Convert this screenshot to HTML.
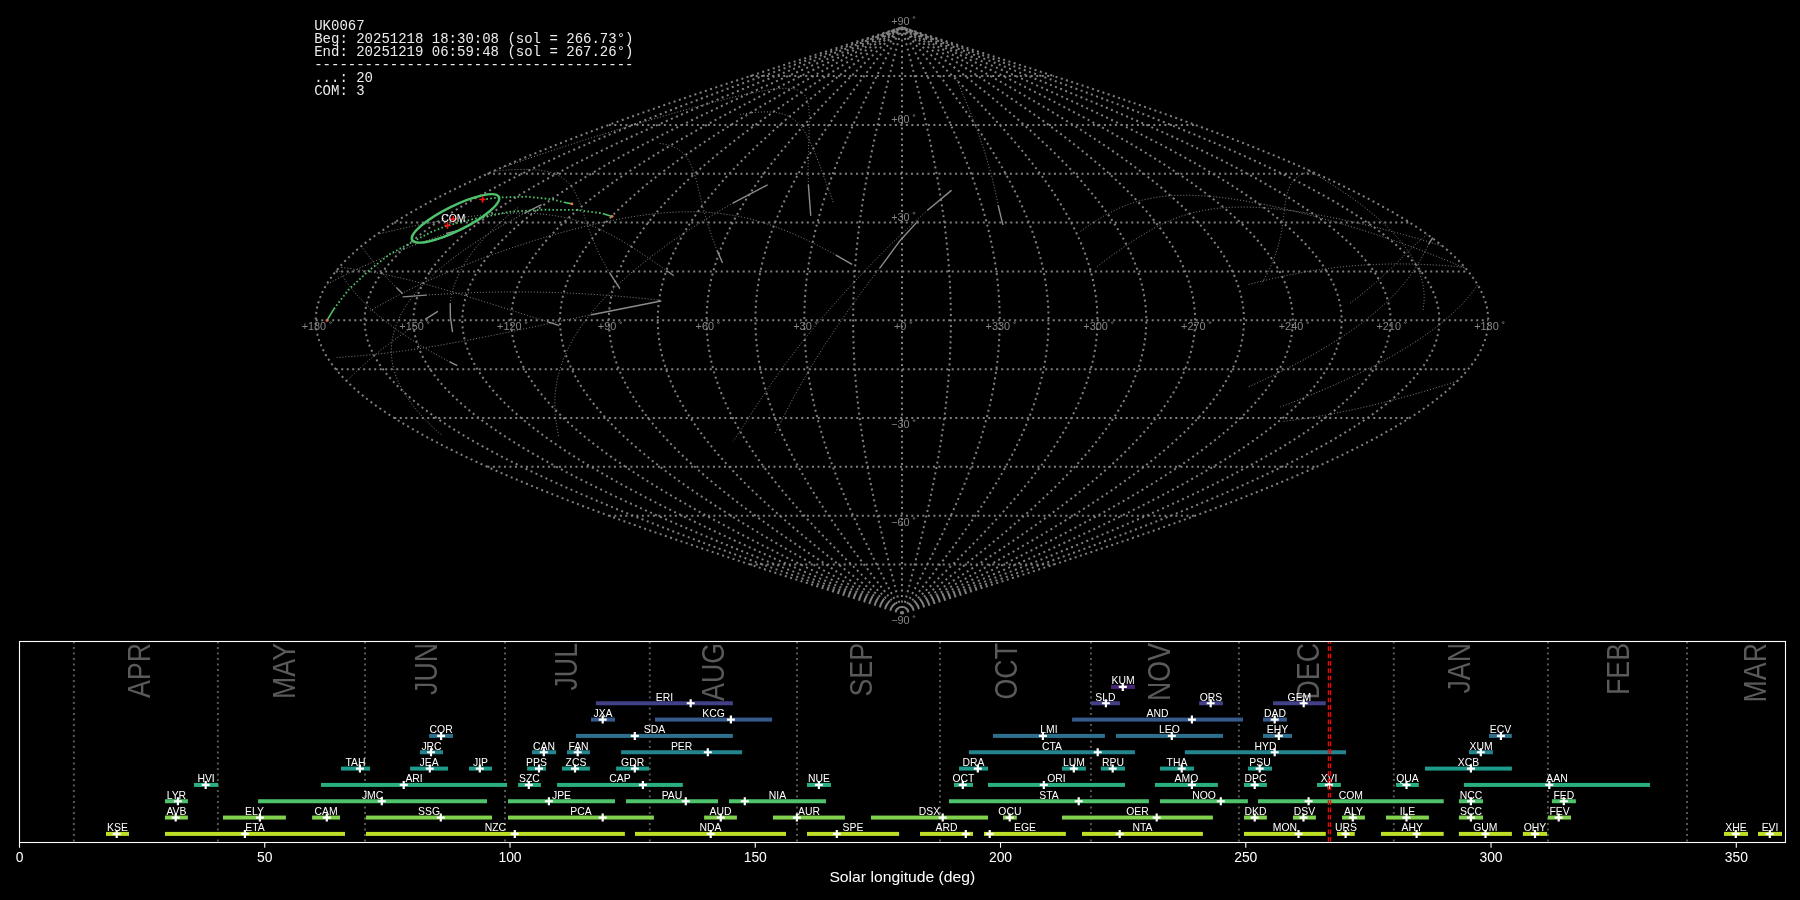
<!DOCTYPE html>
<html><head><meta charset="utf-8"><style>
html,body{margin:0;padding:0;background:#000;overflow:hidden}
svg{display:block;will-change:transform}
.mono{font-family:"Liberation Mono",monospace;font-size:14.0px;fill:#ececec}
.gl{font-family:"Liberation Sans",sans-serif;font-size:10.9px;fill:#858585}
.bl{font-family:"Liberation Sans",sans-serif;font-size:10.4px;fill:#ffffff}
.tk{font-family:"Liberation Sans",sans-serif;font-size:13.9px;fill:#ffffff}
.mon{font-family:"Liberation Sans",sans-serif;font-size:28px;fill:#5a5a5a}
</style></head><body>
<svg width="1800" height="900" viewBox="0 0 1800 900">
<rect width="1800" height="900" fill="#000"/>
<path d="M902.00 613.43 L907.12 611.80 L912.23 610.17 L917.35 608.54 L922.46 606.92 L927.57 605.29 L932.68 603.66 L937.79 602.03 L942.90 600.40 L948.00 598.77 L953.10 597.14 L958.19 595.52 L963.28 593.89 L968.37 592.26 L973.45 590.63 L978.52 589.00 L983.59 587.37 L988.65 585.75 L993.71 584.12 L998.76 582.49 L1003.80 580.86 L1008.84 579.23 L1013.86 577.60 L1018.88 575.97 L1023.89 574.35 L1028.89 572.72 L1033.88 571.09 L1038.86 569.46 L1043.83 567.83 L1048.79 566.20 L1053.74 564.58 L1058.67 562.95 L1063.60 561.32 L1068.51 559.69 L1073.41 558.06 L1078.29 556.43 L1083.16 554.80 L1088.02 553.18 L1092.87 551.55 L1097.70 549.92 L1102.51 548.29 L1107.31 546.66 L1112.10 545.03 L1116.87 543.40 L1121.62 541.78 L1126.35 540.15 L1131.07 538.52 L1135.77 536.89 L1140.45 535.26 L1145.12 533.63 L1149.76 532.00 L1154.39 530.38 L1159.00 528.75 L1163.59 527.12 L1168.16 525.49 L1172.70 523.86 L1177.23 522.23 L1181.74 520.61 L1186.22 518.98 L1190.69 517.35 L1195.13 515.72 L1199.55 514.09 L1203.95 512.46 L1208.32 510.83 L1212.67 509.21 L1217.00 507.58 L1221.30 505.95 L1225.58 504.32 L1229.83 502.69 L1234.06 501.06 L1238.26 499.44 L1242.44 497.81 L1246.59 496.18 L1250.72 494.55 L1254.82 492.92 L1258.89 491.29 L1262.94 489.66 L1266.96 488.04 L1270.95 486.41 L1274.91 484.78 L1278.84 483.15 L1282.75 481.52 L1286.62 479.89 L1290.47 478.26 L1294.28 476.64 L1298.07 475.01 L1301.83 473.38 L1305.55 471.75 L1309.25 470.12 L1312.92 468.49 L1316.55 466.87 L1320.15 465.24 L1323.72 463.61 L1327.26 461.98 L1330.76 460.35 L1334.24 458.72 L1337.68 457.09 L1341.08 455.47 L1344.46 453.84 L1347.80 452.21 L1351.10 450.58 L1354.37 448.95 L1357.61 447.32 L1360.81 445.69 L1363.98 444.07 L1367.11 442.44 L1370.21 440.81 L1373.27 439.18 L1376.29 437.55 L1379.28 435.92 L1382.24 434.30 L1385.15 432.67 L1388.03 431.04 L1390.87 429.41 L1393.68 427.78 L1396.45 426.15 L1399.18 424.52 L1401.87 422.90 L1404.52 421.27 L1407.14 419.64 L1409.72 418.01 L1412.25 416.38 L1414.75 414.75 L1417.22 413.12 L1419.64 411.50 L1422.02 409.87 L1424.36 408.24 L1426.66 406.61 L1428.93 404.98 L1431.15 403.35 L1433.33 401.73 L1435.47 400.10 L1437.58 398.47 L1439.64 396.84 L1441.66 395.21 L1443.63 393.58 L1445.57 391.95 L1447.47 390.33 L1449.32 388.70 L1451.13 387.07 L1452.90 385.44 L1454.63 383.81 L1456.32 382.18 L1457.96 380.55 L1459.57 378.93 L1461.13 377.30 L1462.64 375.67 L1464.12 374.04 L1465.55 372.41 L1466.94 370.78 L1468.28 369.16 L1469.59 367.53 L1470.85 365.90 L1472.06 364.27 L1473.23 362.64 L1474.36 361.01 L1475.45 359.38 L1476.49 357.76 L1477.49 356.13 L1478.44 354.50 L1479.35 352.87 L1480.22 351.24 L1481.04 349.61 L1481.82 347.98 L1482.55 346.36 L1483.24 344.73 L1483.89 343.10 L1484.49 341.47 L1485.05 339.84 L1485.56 338.21 L1486.03 336.59 L1486.45 334.96 L1486.83 333.33 L1487.17 331.70 L1487.46 330.07 L1487.70 328.44 L1487.90 326.81 L1488.06 325.19 L1488.17 323.56 L1488.24 321.93 L1488.26 320.30 L1488.24 318.67 L1488.17 317.04 L1488.06 315.41 L1487.90 313.79 L1487.70 312.16 L1487.46 310.53 L1487.17 308.90 L1486.83 307.27 L1486.45 305.64 L1486.03 304.01 L1485.56 302.39 L1485.05 300.76 L1484.49 299.13 L1483.89 297.50 L1483.24 295.87 L1482.55 294.24 L1481.82 292.62 L1481.04 290.99 L1480.22 289.36 L1479.35 287.73 L1478.44 286.10 L1477.49 284.47 L1476.49 282.84 L1475.45 281.22 L1474.36 279.59 L1473.23 277.96 L1472.06 276.33 L1470.85 274.70 L1469.59 273.07 L1468.28 271.44 L1466.94 269.82 L1465.55 268.19 L1464.12 266.56 L1462.64 264.93 L1461.13 263.30 L1459.57 261.67 L1457.96 260.05 L1456.32 258.42 L1454.63 256.79 L1452.90 255.16 L1451.13 253.53 L1449.32 251.90 L1447.47 250.27 L1445.57 248.65 L1443.63 247.02 L1441.66 245.39 L1439.64 243.76 L1437.58 242.13 L1435.47 240.50 L1433.33 238.88 L1431.15 237.25 L1428.93 235.62 L1426.66 233.99 L1424.36 232.36 L1422.02 230.73 L1419.64 229.10 L1417.22 227.48 L1414.75 225.85 L1412.25 224.22 L1409.72 222.59 L1407.14 220.96 L1404.52 219.33 L1401.87 217.70 L1399.18 216.08 L1396.45 214.45 L1393.68 212.82 L1390.87 211.19 L1388.03 209.56 L1385.15 207.93 L1382.24 206.31 L1379.28 204.68 L1376.29 203.05 L1373.27 201.42 L1370.21 199.79 L1367.11 198.16 L1363.98 196.53 L1360.81 194.91 L1357.61 193.28 L1354.37 191.65 L1351.10 190.02 L1347.80 188.39 L1344.46 186.76 L1341.08 185.13 L1337.68 183.51 L1334.24 181.88 L1330.76 180.25 L1327.26 178.62 L1323.72 176.99 L1320.15 175.36 L1316.55 173.74 L1312.92 172.11 L1309.25 170.48 L1305.55 168.85 L1301.83 167.22 L1298.07 165.59 L1294.28 163.96 L1290.47 162.34 L1286.62 160.71 L1282.75 159.08 L1278.84 157.45 L1274.91 155.82 L1270.95 154.19 L1266.96 152.56 L1262.94 150.94 L1258.89 149.31 L1254.82 147.68 L1250.72 146.05 L1246.59 144.42 L1242.44 142.79 L1238.26 141.16 L1234.06 139.54 L1229.83 137.91 L1225.58 136.28 L1221.30 134.65 L1217.00 133.02 L1212.67 131.39 L1208.32 129.77 L1203.95 128.14 L1199.55 126.51 L1195.13 124.88 L1190.69 123.25 L1186.22 121.62 L1181.74 119.99 L1177.23 118.37 L1172.70 116.74 L1168.16 115.11 L1163.59 113.48 L1159.00 111.85 L1154.39 110.22 L1149.76 108.59 L1145.12 106.97 L1140.45 105.34 L1135.77 103.71 L1131.07 102.08 L1126.35 100.45 L1121.62 98.82 L1116.87 97.20 L1112.10 95.57 L1107.31 93.94 L1102.51 92.31 L1097.70 90.68 L1092.87 89.05 L1088.02 87.42 L1083.16 85.80 L1078.29 84.17 L1073.41 82.54 L1068.51 80.91 L1063.60 79.28 L1058.67 77.65 L1053.74 76.03 L1048.79 74.40 L1043.83 72.77 L1038.86 71.14 L1033.88 69.51 L1028.89 67.88 L1023.89 66.25 L1018.88 64.63 L1013.86 63.00 L1008.84 61.37 L1003.80 59.74 L998.76 58.11 L993.71 56.48 L988.65 54.85 L983.59 53.23 L978.52 51.60 L973.45 49.97 L968.37 48.34 L963.28 46.71 L958.19 45.08 L953.10 43.45 L948.00 41.83 L942.90 40.20 L937.79 38.57 L932.68 36.94 L927.57 35.31 L922.46 33.68 L917.35 32.06 L912.23 30.43 L907.12 28.80 L902.00 27.17 M902.00 613.43 L906.69 611.80 L911.38 610.17 L916.07 608.54 L920.76 606.92 L925.44 605.29 L930.13 603.66 L934.81 602.03 L939.49 600.40 L944.16 598.77 L948.84 597.14 L953.51 595.52 L958.17 593.89 L962.84 592.26 L967.49 590.63 L972.15 589.00 L976.79 587.37 L981.43 585.75 L986.07 584.12 L990.70 582.49 L995.32 580.86 L999.93 579.23 L1004.54 577.60 L1009.14 575.97 L1013.73 574.35 L1018.32 572.72 L1022.89 571.09 L1027.45 569.46 L1032.01 567.83 L1036.56 566.20 L1041.09 564.58 L1045.62 562.95 L1050.13 561.32 L1054.63 559.69 L1059.12 558.06 L1063.60 556.43 L1068.07 554.80 L1072.52 553.18 L1076.96 551.55 L1081.39 549.92 L1085.80 548.29 L1090.20 546.66 L1094.59 545.03 L1098.96 543.40 L1103.32 541.78 L1107.66 540.15 L1111.98 538.52 L1116.29 536.89 L1120.58 535.26 L1124.86 533.63 L1129.12 532.00 L1133.36 530.38 L1137.58 528.75 L1141.79 527.12 L1145.98 525.49 L1150.15 523.86 L1154.30 522.23 L1158.43 520.61 L1162.54 518.98 L1166.63 517.35 L1170.70 515.72 L1174.75 514.09 L1178.78 512.46 L1182.79 510.83 L1186.78 509.21 L1190.75 507.58 L1194.69 505.95 L1198.61 504.32 L1202.51 502.69 L1206.39 501.06 L1210.24 499.44 L1214.07 497.81 L1217.88 496.18 L1221.66 494.55 L1225.42 492.92 L1229.15 491.29 L1232.86 489.66 L1236.54 488.04 L1240.20 486.41 L1243.83 484.78 L1247.44 483.15 L1251.02 481.52 L1254.57 479.89 L1258.10 478.26 L1261.59 476.64 L1265.07 475.01 L1268.51 473.38 L1271.93 471.75 L1275.31 470.12 L1278.67 468.49 L1282.00 466.87 L1285.30 465.24 L1288.58 463.61 L1291.82 461.98 L1295.03 460.35 L1298.22 458.72 L1301.37 457.09 L1304.49 455.47 L1307.58 453.84 L1310.65 452.21 L1313.68 450.58 L1316.67 448.95 L1319.64 447.32 L1322.58 445.69 L1325.48 444.07 L1328.35 442.44 L1331.19 440.81 L1334.00 439.18 L1336.77 437.55 L1339.51 435.92 L1342.22 434.30 L1344.89 432.67 L1347.53 431.04 L1350.13 429.41 L1352.71 427.78 L1355.24 426.15 L1357.75 424.52 L1360.21 422.90 L1362.65 421.27 L1365.04 419.64 L1367.41 418.01 L1369.73 416.38 L1372.03 414.75 L1374.28 413.12 L1376.50 411.50 L1378.68 409.87 L1380.83 408.24 L1382.94 406.61 L1385.02 404.98 L1387.05 403.35 L1389.05 401.73 L1391.02 400.10 L1392.94 398.47 L1394.83 396.84 L1396.68 395.21 L1398.50 393.58 L1400.27 391.95 L1402.01 390.33 L1403.71 388.70 L1405.37 387.07 L1407.00 385.44 L1408.58 383.81 L1410.13 382.18 L1411.63 380.55 L1413.10 378.93 L1414.53 377.30 L1415.92 375.67 L1417.27 374.04 L1418.59 372.41 L1419.86 370.78 L1421.09 369.16 L1422.29 367.53 L1423.44 365.90 L1424.56 364.27 L1425.63 362.64 L1426.67 361.01 L1427.66 359.38 L1428.62 357.76 L1429.53 356.13 L1430.41 354.50 L1431.24 352.87 L1432.03 351.24 L1432.79 349.61 L1433.50 347.98 L1434.18 346.36 L1434.81 344.73 L1435.40 343.10 L1435.95 341.47 L1436.46 339.84 L1436.93 338.21 L1437.36 336.59 L1437.75 334.96 L1438.10 333.33 L1438.40 331.70 L1438.67 330.07 L1438.89 328.44 L1439.08 326.81 L1439.22 325.19 L1439.32 323.56 L1439.38 321.93 L1439.40 320.30 L1439.38 318.67 L1439.32 317.04 L1439.22 315.41 L1439.08 313.79 L1438.89 312.16 L1438.67 310.53 L1438.40 308.90 L1438.10 307.27 L1437.75 305.64 L1437.36 304.01 L1436.93 302.39 L1436.46 300.76 L1435.95 299.13 L1435.40 297.50 L1434.81 295.87 L1434.18 294.24 L1433.50 292.62 L1432.79 290.99 L1432.03 289.36 L1431.24 287.73 L1430.41 286.10 L1429.53 284.47 L1428.62 282.84 L1427.66 281.22 L1426.67 279.59 L1425.63 277.96 L1424.56 276.33 L1423.44 274.70 L1422.29 273.07 L1421.09 271.44 L1419.86 269.82 L1418.59 268.19 L1417.27 266.56 L1415.92 264.93 L1414.53 263.30 L1413.10 261.67 L1411.63 260.05 L1410.13 258.42 L1408.58 256.79 L1407.00 255.16 L1405.37 253.53 L1403.71 251.90 L1402.01 250.27 L1400.27 248.65 L1398.50 247.02 L1396.68 245.39 L1394.83 243.76 L1392.94 242.13 L1391.02 240.50 L1389.05 238.88 L1387.05 237.25 L1385.02 235.62 L1382.94 233.99 L1380.83 232.36 L1378.68 230.73 L1376.50 229.10 L1374.28 227.48 L1372.03 225.85 L1369.73 224.22 L1367.41 222.59 L1365.04 220.96 L1362.65 219.33 L1360.21 217.70 L1357.75 216.08 L1355.24 214.45 L1352.71 212.82 L1350.13 211.19 L1347.53 209.56 L1344.89 207.93 L1342.22 206.31 L1339.51 204.68 L1336.77 203.05 L1334.00 201.42 L1331.19 199.79 L1328.35 198.16 L1325.48 196.53 L1322.58 194.91 L1319.64 193.28 L1316.67 191.65 L1313.68 190.02 L1310.65 188.39 L1307.58 186.76 L1304.49 185.13 L1301.37 183.51 L1298.22 181.88 L1295.03 180.25 L1291.82 178.62 L1288.58 176.99 L1285.30 175.36 L1282.00 173.74 L1278.67 172.11 L1275.31 170.48 L1271.93 168.85 L1268.51 167.22 L1265.07 165.59 L1261.59 163.96 L1258.10 162.34 L1254.57 160.71 L1251.02 159.08 L1247.44 157.45 L1243.83 155.82 L1240.20 154.19 L1236.54 152.56 L1232.86 150.94 L1229.15 149.31 L1225.42 147.68 L1221.66 146.05 L1217.88 144.42 L1214.07 142.79 L1210.24 141.16 L1206.39 139.54 L1202.51 137.91 L1198.61 136.28 L1194.69 134.65 L1190.75 133.02 L1186.78 131.39 L1182.79 129.77 L1178.78 128.14 L1174.75 126.51 L1170.70 124.88 L1166.63 123.25 L1162.54 121.62 L1158.43 119.99 L1154.30 118.37 L1150.15 116.74 L1145.98 115.11 L1141.79 113.48 L1137.58 111.85 L1133.36 110.22 L1129.12 108.59 L1124.86 106.97 L1120.58 105.34 L1116.29 103.71 L1111.98 102.08 L1107.66 100.45 L1103.32 98.82 L1098.96 97.20 L1094.59 95.57 L1090.20 93.94 L1085.80 92.31 L1081.39 90.68 L1076.96 89.05 L1072.52 87.42 L1068.07 85.80 L1063.60 84.17 L1059.12 82.54 L1054.63 80.91 L1050.13 79.28 L1045.62 77.65 L1041.09 76.03 L1036.56 74.40 L1032.01 72.77 L1027.45 71.14 L1022.89 69.51 L1018.32 67.88 L1013.73 66.25 L1009.14 64.63 L1004.54 63.00 L999.93 61.37 L995.32 59.74 L990.70 58.11 L986.07 56.48 L981.43 54.85 L976.79 53.23 L972.15 51.60 L967.49 49.97 L962.84 48.34 L958.17 46.71 L953.51 45.08 L948.84 43.45 L944.16 41.83 L939.49 40.20 L934.81 38.57 L930.13 36.94 L925.44 35.31 L920.76 33.68 L916.07 32.06 L911.38 30.43 L906.69 28.80 L902.00 27.17 M902.00 613.43 L906.26 611.80 L910.53 610.17 L914.79 608.54 L919.05 606.92 L923.31 605.29 L927.57 603.66 L931.83 602.03 L936.08 600.40 L940.33 598.77 L944.58 597.14 L948.83 595.52 L953.07 593.89 L957.31 592.26 L961.54 590.63 L965.77 589.00 L969.99 587.37 L974.21 585.75 L978.43 584.12 L982.63 582.49 L986.84 580.86 L991.03 579.23 L995.22 577.60 L999.40 575.97 L1003.58 574.35 L1007.74 572.72 L1011.90 571.09 L1016.05 569.46 L1020.19 567.83 L1024.32 566.20 L1028.45 564.58 L1032.56 562.95 L1036.66 561.32 L1040.76 559.69 L1044.84 558.06 L1048.91 556.43 L1052.97 554.80 L1057.02 553.18 L1061.06 551.55 L1065.08 549.92 L1069.09 548.29 L1073.09 546.66 L1077.08 545.03 L1081.05 543.40 L1085.01 541.78 L1088.96 540.15 L1092.89 538.52 L1096.81 536.89 L1100.71 535.26 L1104.60 533.63 L1108.47 532.00 L1112.33 530.38 L1116.17 528.75 L1119.99 527.12 L1123.80 525.49 L1127.59 523.86 L1131.36 522.23 L1135.12 520.61 L1138.85 518.98 L1142.57 517.35 L1146.28 515.72 L1149.96 514.09 L1153.62 512.46 L1157.27 510.83 L1160.89 509.21 L1164.50 507.58 L1168.08 505.95 L1171.65 504.32 L1175.19 502.69 L1178.72 501.06 L1182.22 499.44 L1185.70 497.81 L1189.16 496.18 L1192.60 494.55 L1196.02 492.92 L1199.41 491.29 L1202.78 489.66 L1206.13 488.04 L1209.45 486.41 L1212.76 484.78 L1216.03 483.15 L1219.29 481.52 L1222.52 479.89 L1225.72 478.26 L1228.90 476.64 L1232.06 475.01 L1235.19 473.38 L1238.30 471.75 L1241.38 470.12 L1244.43 468.49 L1247.46 466.87 L1250.46 465.24 L1253.43 463.61 L1256.38 461.98 L1259.30 460.35 L1262.20 458.72 L1265.06 457.09 L1267.90 455.47 L1270.71 453.84 L1273.50 452.21 L1276.25 450.58 L1278.98 448.95 L1281.67 447.32 L1284.34 445.69 L1286.98 444.07 L1289.59 442.44 L1292.17 440.81 L1294.72 439.18 L1297.25 437.55 L1299.74 435.92 L1302.20 434.30 L1304.63 432.67 L1307.03 431.04 L1309.39 429.41 L1311.73 427.78 L1314.04 426.15 L1316.31 424.52 L1318.56 422.90 L1320.77 421.27 L1322.95 419.64 L1325.10 418.01 L1327.21 416.38 L1329.30 414.75 L1331.35 413.12 L1333.36 411.50 L1335.35 409.87 L1337.30 408.24 L1339.22 406.61 L1341.11 404.98 L1342.96 403.35 L1344.78 401.73 L1346.56 400.10 L1348.31 398.47 L1350.03 396.84 L1351.71 395.21 L1353.36 393.58 L1354.98 391.95 L1356.56 390.33 L1358.10 388.70 L1359.61 387.07 L1361.09 385.44 L1362.53 383.81 L1363.93 382.18 L1365.30 380.55 L1366.64 378.93 L1367.94 377.30 L1369.20 375.67 L1370.43 374.04 L1371.62 372.41 L1372.78 370.78 L1373.90 369.16 L1374.99 367.53 L1376.04 365.90 L1377.05 364.27 L1378.03 362.64 L1378.97 361.01 L1379.87 359.38 L1380.74 357.76 L1381.57 356.13 L1382.37 354.50 L1383.13 352.87 L1383.85 351.24 L1384.54 349.61 L1385.18 347.98 L1385.80 346.36 L1386.37 344.73 L1386.91 343.10 L1387.41 341.47 L1387.87 339.84 L1388.30 338.21 L1388.69 336.59 L1389.04 334.96 L1389.36 333.33 L1389.64 331.70 L1389.88 330.07 L1390.09 328.44 L1390.25 326.81 L1390.38 325.19 L1390.48 323.56 L1390.53 321.93 L1390.55 320.30 L1390.53 318.67 L1390.48 317.04 L1390.38 315.41 L1390.25 313.79 L1390.09 312.16 L1389.88 310.53 L1389.64 308.90 L1389.36 307.27 L1389.04 305.64 L1388.69 304.01 L1388.30 302.39 L1387.87 300.76 L1387.41 299.13 L1386.91 297.50 L1386.37 295.87 L1385.80 294.24 L1385.18 292.62 L1384.54 290.99 L1383.85 289.36 L1383.13 287.73 L1382.37 286.10 L1381.57 284.47 L1380.74 282.84 L1379.87 281.22 L1378.97 279.59 L1378.03 277.96 L1377.05 276.33 L1376.04 274.70 L1374.99 273.07 L1373.90 271.44 L1372.78 269.82 L1371.62 268.19 L1370.43 266.56 L1369.20 264.93 L1367.94 263.30 L1366.64 261.67 L1365.30 260.05 L1363.93 258.42 L1362.53 256.79 L1361.09 255.16 L1359.61 253.53 L1358.10 251.90 L1356.56 250.27 L1354.98 248.65 L1353.36 247.02 L1351.71 245.39 L1350.03 243.76 L1348.31 242.13 L1346.56 240.50 L1344.78 238.88 L1342.96 237.25 L1341.11 235.62 L1339.22 233.99 L1337.30 232.36 L1335.35 230.73 L1333.36 229.10 L1331.35 227.48 L1329.30 225.85 L1327.21 224.22 L1325.10 222.59 L1322.95 220.96 L1320.77 219.33 L1318.56 217.70 L1316.31 216.08 L1314.04 214.45 L1311.73 212.82 L1309.39 211.19 L1307.03 209.56 L1304.63 207.93 L1302.20 206.31 L1299.74 204.68 L1297.25 203.05 L1294.72 201.42 L1292.17 199.79 L1289.59 198.16 L1286.98 196.53 L1284.34 194.91 L1281.67 193.28 L1278.98 191.65 L1276.25 190.02 L1273.50 188.39 L1270.71 186.76 L1267.90 185.13 L1265.06 183.51 L1262.20 181.88 L1259.30 180.25 L1256.38 178.62 L1253.43 176.99 L1250.46 175.36 L1247.46 173.74 L1244.43 172.11 L1241.38 170.48 L1238.30 168.85 L1235.19 167.22 L1232.06 165.59 L1228.90 163.96 L1225.72 162.34 L1222.52 160.71 L1219.29 159.08 L1216.03 157.45 L1212.76 155.82 L1209.45 154.19 L1206.13 152.56 L1202.78 150.94 L1199.41 149.31 L1196.02 147.68 L1192.60 146.05 L1189.16 144.42 L1185.70 142.79 L1182.22 141.16 L1178.72 139.54 L1175.19 137.91 L1171.65 136.28 L1168.08 134.65 L1164.50 133.02 L1160.89 131.39 L1157.27 129.77 L1153.62 128.14 L1149.96 126.51 L1146.28 124.88 L1142.57 123.25 L1138.85 121.62 L1135.12 119.99 L1131.36 118.37 L1127.59 116.74 L1123.80 115.11 L1119.99 113.48 L1116.17 111.85 L1112.33 110.22 L1108.47 108.59 L1104.60 106.97 L1100.71 105.34 L1096.81 103.71 L1092.89 102.08 L1088.96 100.45 L1085.01 98.82 L1081.05 97.20 L1077.08 95.57 L1073.09 93.94 L1069.09 92.31 L1065.08 90.68 L1061.06 89.05 L1057.02 87.42 L1052.97 85.80 L1048.91 84.17 L1044.84 82.54 L1040.76 80.91 L1036.66 79.28 L1032.56 77.65 L1028.45 76.03 L1024.32 74.40 L1020.19 72.77 L1016.05 71.14 L1011.90 69.51 L1007.74 67.88 L1003.58 66.25 L999.40 64.63 L995.22 63.00 L991.03 61.37 L986.84 59.74 L982.63 58.11 L978.43 56.48 L974.21 54.85 L969.99 53.23 L965.77 51.60 L961.54 49.97 L957.31 48.34 L953.07 46.71 L948.83 45.08 L944.58 43.45 L940.33 41.83 L936.08 40.20 L931.83 38.57 L927.57 36.94 L923.31 35.31 L919.05 33.68 L914.79 32.06 L910.53 30.43 L906.26 28.80 L902.00 27.17 M902.00 613.43 L905.84 611.80 L909.67 610.17 L913.51 608.54 L917.35 606.92 L921.18 605.29 L925.01 603.66 L928.84 602.03 L932.67 600.40 L936.50 598.77 L940.32 597.14 L944.14 595.52 L947.96 593.89 L951.77 592.26 L955.59 590.63 L959.39 589.00 L963.19 587.37 L966.99 585.75 L970.78 584.12 L974.57 582.49 L978.35 580.86 L982.13 579.23 L985.90 577.60 L989.66 575.97 L993.42 574.35 L997.17 572.72 L1000.91 571.09 L1004.64 569.46 L1008.37 567.83 L1012.09 566.20 L1015.80 564.58 L1019.50 562.95 L1023.20 561.32 L1026.88 559.69 L1030.55 558.06 L1034.22 556.43 L1037.87 554.80 L1041.52 553.18 L1045.15 551.55 L1048.77 549.92 L1052.38 548.29 L1055.98 546.66 L1059.57 545.03 L1063.15 543.40 L1066.71 541.78 L1070.26 540.15 L1073.80 538.52 L1077.33 536.89 L1080.84 535.26 L1084.34 533.63 L1087.82 532.00 L1091.29 530.38 L1094.75 528.75 L1098.19 527.12 L1101.62 525.49 L1105.03 523.86 L1108.42 522.23 L1111.80 520.61 L1115.17 518.98 L1118.52 517.35 L1121.85 515.72 L1125.16 514.09 L1128.46 512.46 L1131.74 510.83 L1135.00 509.21 L1138.25 507.58 L1141.48 505.95 L1144.68 504.32 L1147.87 502.69 L1151.05 501.06 L1154.20 499.44 L1157.33 497.81 L1160.45 496.18 L1163.54 494.55 L1166.62 492.92 L1169.67 491.29 L1172.70 489.66 L1175.72 488.04 L1178.71 486.41 L1181.68 484.78 L1184.63 483.15 L1187.56 481.52 L1190.47 479.89 L1193.35 478.26 L1196.21 476.64 L1199.05 475.01 L1201.87 473.38 L1204.67 471.75 L1207.44 470.12 L1210.19 468.49 L1212.91 466.87 L1215.61 465.24 L1218.29 463.61 L1220.94 461.98 L1223.57 460.35 L1226.18 458.72 L1228.76 457.09 L1231.31 455.47 L1233.84 453.84 L1236.35 452.21 L1238.83 450.58 L1241.28 448.95 L1243.71 447.32 L1246.11 445.69 L1248.48 444.07 L1250.83 442.44 L1253.16 440.81 L1255.45 439.18 L1257.72 437.55 L1259.96 435.92 L1262.18 434.30 L1264.36 432.67 L1266.52 431.04 L1268.66 429.41 L1270.76 427.78 L1272.84 426.15 L1274.88 424.52 L1276.90 422.90 L1278.89 421.27 L1280.85 419.64 L1282.79 418.01 L1284.69 416.38 L1286.57 414.75 L1288.41 413.12 L1290.23 411.50 L1292.01 409.87 L1293.77 408.24 L1295.50 406.61 L1297.20 404.98 L1298.86 403.35 L1300.50 401.73 L1302.11 400.10 L1303.68 398.47 L1305.23 396.84 L1306.74 395.21 L1308.23 393.58 L1309.68 391.95 L1311.10 390.33 L1312.49 388.70 L1313.85 387.07 L1315.18 385.44 L1316.47 383.81 L1317.74 382.18 L1318.97 380.55 L1320.17 378.93 L1321.34 377.30 L1322.48 375.67 L1323.59 374.04 L1324.66 372.41 L1325.70 370.78 L1326.71 369.16 L1327.69 367.53 L1328.63 365.90 L1329.55 364.27 L1330.43 362.64 L1331.27 361.01 L1332.09 359.38 L1332.87 357.76 L1333.62 356.13 L1334.33 354.50 L1335.02 352.87 L1335.66 351.24 L1336.28 349.61 L1336.87 347.98 L1337.42 346.36 L1337.93 344.73 L1338.42 343.10 L1338.87 341.47 L1339.29 339.84 L1339.67 338.21 L1340.02 336.59 L1340.34 334.96 L1340.62 333.33 L1340.87 331.70 L1341.09 330.07 L1341.28 328.44 L1341.43 326.81 L1341.54 325.19 L1341.63 323.56 L1341.68 321.93 L1341.69 320.30 L1341.68 318.67 L1341.63 317.04 L1341.54 315.41 L1341.43 313.79 L1341.28 312.16 L1341.09 310.53 L1340.87 308.90 L1340.62 307.27 L1340.34 305.64 L1340.02 304.01 L1339.67 302.39 L1339.29 300.76 L1338.87 299.13 L1338.42 297.50 L1337.93 295.87 L1337.42 294.24 L1336.87 292.62 L1336.28 290.99 L1335.66 289.36 L1335.02 287.73 L1334.33 286.10 L1333.62 284.47 L1332.87 282.84 L1332.09 281.22 L1331.27 279.59 L1330.43 277.96 L1329.55 276.33 L1328.63 274.70 L1327.69 273.07 L1326.71 271.44 L1325.70 269.82 L1324.66 268.19 L1323.59 266.56 L1322.48 264.93 L1321.34 263.30 L1320.17 261.67 L1318.97 260.05 L1317.74 258.42 L1316.47 256.79 L1315.18 255.16 L1313.85 253.53 L1312.49 251.90 L1311.10 250.27 L1309.68 248.65 L1308.23 247.02 L1306.74 245.39 L1305.23 243.76 L1303.68 242.13 L1302.11 240.50 L1300.50 238.88 L1298.86 237.25 L1297.20 235.62 L1295.50 233.99 L1293.77 232.36 L1292.01 230.73 L1290.23 229.10 L1288.41 227.48 L1286.57 225.85 L1284.69 224.22 L1282.79 222.59 L1280.85 220.96 L1278.89 219.33 L1276.90 217.70 L1274.88 216.08 L1272.84 214.45 L1270.76 212.82 L1268.66 211.19 L1266.52 209.56 L1264.36 207.93 L1262.18 206.31 L1259.96 204.68 L1257.72 203.05 L1255.45 201.42 L1253.16 199.79 L1250.83 198.16 L1248.48 196.53 L1246.11 194.91 L1243.71 193.28 L1241.28 191.65 L1238.83 190.02 L1236.35 188.39 L1233.84 186.76 L1231.31 185.13 L1228.76 183.51 L1226.18 181.88 L1223.57 180.25 L1220.94 178.62 L1218.29 176.99 L1215.61 175.36 L1212.91 173.74 L1210.19 172.11 L1207.44 170.48 L1204.67 168.85 L1201.87 167.22 L1199.05 165.59 L1196.21 163.96 L1193.35 162.34 L1190.47 160.71 L1187.56 159.08 L1184.63 157.45 L1181.68 155.82 L1178.71 154.19 L1175.72 152.56 L1172.70 150.94 L1169.67 149.31 L1166.62 147.68 L1163.54 146.05 L1160.45 144.42 L1157.33 142.79 L1154.20 141.16 L1151.05 139.54 L1147.87 137.91 L1144.68 136.28 L1141.48 134.65 L1138.25 133.02 L1135.00 131.39 L1131.74 129.77 L1128.46 128.14 L1125.16 126.51 L1121.85 124.88 L1118.52 123.25 L1115.17 121.62 L1111.80 119.99 L1108.42 118.37 L1105.03 116.74 L1101.62 115.11 L1098.19 113.48 L1094.75 111.85 L1091.29 110.22 L1087.82 108.59 L1084.34 106.97 L1080.84 105.34 L1077.33 103.71 L1073.80 102.08 L1070.26 100.45 L1066.71 98.82 L1063.15 97.20 L1059.57 95.57 L1055.98 93.94 L1052.38 92.31 L1048.77 90.68 L1045.15 89.05 L1041.52 87.42 L1037.87 85.80 L1034.22 84.17 L1030.55 82.54 L1026.88 80.91 L1023.20 79.28 L1019.50 77.65 L1015.80 76.03 L1012.09 74.40 L1008.37 72.77 L1004.64 71.14 L1000.91 69.51 L997.17 67.88 L993.42 66.25 L989.66 64.63 L985.90 63.00 L982.13 61.37 L978.35 59.74 L974.57 58.11 L970.78 56.48 L966.99 54.85 L963.19 53.23 L959.39 51.60 L955.59 49.97 L951.77 48.34 L947.96 46.71 L944.14 45.08 L940.32 43.45 L936.50 41.83 L932.67 40.20 L928.84 38.57 L925.01 36.94 L921.18 35.31 L917.35 33.68 L913.51 32.06 L909.67 30.43 L905.84 28.80 L902.00 27.17 M902.00 613.43 L905.41 611.80 L908.82 610.17 L912.23 608.54 L915.64 606.92 L919.05 605.29 L922.45 603.66 L925.86 602.03 L929.26 600.40 L932.66 598.77 L936.06 597.14 L939.46 595.52 L942.85 593.89 L946.24 592.26 L949.63 590.63 L953.01 589.00 L956.39 587.37 L959.77 585.75 L963.14 584.12 L966.51 582.49 L969.87 580.86 L973.22 579.23 L976.58 577.60 L979.92 575.97 L983.26 574.35 L986.59 572.72 L989.92 571.09 L993.24 569.46 L996.55 567.83 L999.86 566.20 L1003.16 564.58 L1006.45 562.95 L1009.73 561.32 L1013.00 559.69 L1016.27 558.06 L1019.53 556.43 L1022.78 554.80 L1026.02 553.18 L1029.25 551.55 L1032.47 549.92 L1035.68 548.29 L1038.88 546.66 L1042.06 545.03 L1045.24 543.40 L1048.41 541.78 L1051.57 540.15 L1054.71 538.52 L1057.85 536.89 L1060.97 535.26 L1064.08 533.63 L1067.18 532.00 L1070.26 530.38 L1073.33 528.75 L1076.39 527.12 L1079.44 525.49 L1082.47 523.86 L1085.49 522.23 L1088.49 520.61 L1091.48 518.98 L1094.46 517.35 L1097.42 515.72 L1100.37 514.09 L1103.30 512.46 L1106.21 510.83 L1109.11 509.21 L1112.00 507.58 L1114.87 505.95 L1117.72 504.32 L1120.55 502.69 L1123.37 501.06 L1126.18 499.44 L1128.96 497.81 L1131.73 496.18 L1134.48 494.55 L1137.21 492.92 L1139.93 491.29 L1142.63 489.66 L1145.30 488.04 L1147.96 486.41 L1150.60 484.78 L1153.23 483.15 L1155.83 481.52 L1158.41 479.89 L1160.98 478.26 L1163.52 476.64 L1166.05 475.01 L1168.55 473.38 L1171.04 471.75 L1173.50 470.12 L1175.94 468.49 L1178.37 466.87 L1180.77 465.24 L1183.15 463.61 L1185.51 461.98 L1187.84 460.35 L1190.16 458.72 L1192.45 457.09 L1194.72 455.47 L1196.97 453.84 L1199.20 452.21 L1201.40 450.58 L1203.58 448.95 L1205.74 447.32 L1207.87 445.69 L1209.99 444.07 L1212.07 442.44 L1214.14 440.81 L1216.18 439.18 L1218.20 437.55 L1220.19 435.92 L1222.16 434.30 L1224.10 432.67 L1226.02 431.04 L1227.92 429.41 L1229.79 427.78 L1231.63 426.15 L1233.45 424.52 L1235.25 422.90 L1237.02 421.27 L1238.76 419.64 L1240.48 418.01 L1242.17 416.38 L1243.84 414.75 L1245.48 413.12 L1247.09 411.50 L1248.68 409.87 L1250.24 408.24 L1251.78 406.61 L1253.28 404.98 L1254.77 403.35 L1256.22 401.73 L1257.65 400.10 L1259.05 398.47 L1260.42 396.84 L1261.77 395.21 L1263.09 393.58 L1264.38 391.95 L1265.64 390.33 L1266.88 388.70 L1268.09 387.07 L1269.27 385.44 L1270.42 383.81 L1271.55 382.18 L1272.64 380.55 L1273.71 378.93 L1274.75 377.30 L1275.76 375.67 L1276.75 374.04 L1277.70 372.41 L1278.63 370.78 L1279.52 369.16 L1280.39 367.53 L1281.23 365.90 L1282.04 364.27 L1282.82 362.64 L1283.58 361.01 L1284.30 359.38 L1284.99 357.76 L1285.66 356.13 L1286.30 354.50 L1286.90 352.87 L1287.48 351.24 L1288.03 349.61 L1288.55 347.98 L1289.04 346.36 L1289.50 344.73 L1289.93 343.10 L1290.33 341.47 L1290.70 339.84 L1291.04 338.21 L1291.35 336.59 L1291.64 334.96 L1291.89 333.33 L1292.11 331.70 L1292.30 330.07 L1292.47 328.44 L1292.60 326.81 L1292.71 325.19 L1292.78 323.56 L1292.83 321.93 L1292.84 320.30 L1292.83 318.67 L1292.78 317.04 L1292.71 315.41 L1292.60 313.79 L1292.47 312.16 L1292.30 310.53 L1292.11 308.90 L1291.89 307.27 L1291.64 305.64 L1291.35 304.01 L1291.04 302.39 L1290.70 300.76 L1290.33 299.13 L1289.93 297.50 L1289.50 295.87 L1289.04 294.24 L1288.55 292.62 L1288.03 290.99 L1287.48 289.36 L1286.90 287.73 L1286.30 286.10 L1285.66 284.47 L1284.99 282.84 L1284.30 281.22 L1283.58 279.59 L1282.82 277.96 L1282.04 276.33 L1281.23 274.70 L1280.39 273.07 L1279.52 271.44 L1278.63 269.82 L1277.70 268.19 L1276.75 266.56 L1275.76 264.93 L1274.75 263.30 L1273.71 261.67 L1272.64 260.05 L1271.55 258.42 L1270.42 256.79 L1269.27 255.16 L1268.09 253.53 L1266.88 251.90 L1265.64 250.27 L1264.38 248.65 L1263.09 247.02 L1261.77 245.39 L1260.42 243.76 L1259.05 242.13 L1257.65 240.50 L1256.22 238.88 L1254.77 237.25 L1253.28 235.62 L1251.78 233.99 L1250.24 232.36 L1248.68 230.73 L1247.09 229.10 L1245.48 227.48 L1243.84 225.85 L1242.17 224.22 L1240.48 222.59 L1238.76 220.96 L1237.02 219.33 L1235.25 217.70 L1233.45 216.08 L1231.63 214.45 L1229.79 212.82 L1227.92 211.19 L1226.02 209.56 L1224.10 207.93 L1222.16 206.31 L1220.19 204.68 L1218.20 203.05 L1216.18 201.42 L1214.14 199.79 L1212.07 198.16 L1209.99 196.53 L1207.87 194.91 L1205.74 193.28 L1203.58 191.65 L1201.40 190.02 L1199.20 188.39 L1196.97 186.76 L1194.72 185.13 L1192.45 183.51 L1190.16 181.88 L1187.84 180.25 L1185.51 178.62 L1183.15 176.99 L1180.77 175.36 L1178.37 173.74 L1175.94 172.11 L1173.50 170.48 L1171.04 168.85 L1168.55 167.22 L1166.05 165.59 L1163.52 163.96 L1160.98 162.34 L1158.41 160.71 L1155.83 159.08 L1153.23 157.45 L1150.60 155.82 L1147.96 154.19 L1145.30 152.56 L1142.63 150.94 L1139.93 149.31 L1137.21 147.68 L1134.48 146.05 L1131.73 144.42 L1128.96 142.79 L1126.18 141.16 L1123.37 139.54 L1120.55 137.91 L1117.72 136.28 L1114.87 134.65 L1112.00 133.02 L1109.11 131.39 L1106.21 129.77 L1103.30 128.14 L1100.37 126.51 L1097.42 124.88 L1094.46 123.25 L1091.48 121.62 L1088.49 119.99 L1085.49 118.37 L1082.47 116.74 L1079.44 115.11 L1076.39 113.48 L1073.33 111.85 L1070.26 110.22 L1067.18 108.59 L1064.08 106.97 L1060.97 105.34 L1057.85 103.71 L1054.71 102.08 L1051.57 100.45 L1048.41 98.82 L1045.24 97.20 L1042.06 95.57 L1038.88 93.94 L1035.68 92.31 L1032.47 90.68 L1029.25 89.05 L1026.02 87.42 L1022.78 85.80 L1019.53 84.17 L1016.27 82.54 L1013.00 80.91 L1009.73 79.28 L1006.45 77.65 L1003.16 76.03 L999.86 74.40 L996.55 72.77 L993.24 71.14 L989.92 69.51 L986.59 67.88 L983.26 66.25 L979.92 64.63 L976.58 63.00 L973.22 61.37 L969.87 59.74 L966.51 58.11 L963.14 56.48 L959.77 54.85 L956.39 53.23 L953.01 51.60 L949.63 49.97 L946.24 48.34 L942.85 46.71 L939.46 45.08 L936.06 43.45 L932.66 41.83 L929.26 40.20 L925.86 38.57 L922.45 36.94 L919.05 35.31 L915.64 33.68 L912.23 32.06 L908.82 30.43 L905.41 28.80 L902.00 27.17 M902.00 613.43 L904.98 611.80 L907.97 610.17 L910.95 608.54 L913.94 606.92 L916.92 605.29 L919.90 603.66 L922.88 602.03 L925.86 600.40 L928.83 598.77 L931.81 597.14 L934.78 595.52 L937.75 593.89 L940.71 592.26 L943.68 590.63 L946.64 589.00 L949.60 587.37 L952.55 585.75 L955.50 584.12 L958.44 582.49 L961.39 580.86 L964.32 579.23 L967.25 577.60 L970.18 575.97 L973.10 574.35 L976.02 572.72 L978.93 571.09 L981.83 569.46 L984.73 567.83 L987.63 566.20 L990.51 564.58 L993.39 562.95 L996.26 561.32 L999.13 559.69 L1001.99 558.06 L1004.84 556.43 L1007.68 554.80 L1010.51 553.18 L1013.34 551.55 L1016.16 549.92 L1018.97 548.29 L1021.77 546.66 L1024.56 545.03 L1027.34 543.40 L1030.11 541.78 L1032.87 540.15 L1035.62 538.52 L1038.37 536.89 L1041.10 535.26 L1043.82 533.63 L1046.53 532.00 L1049.23 530.38 L1051.92 528.75 L1054.59 527.12 L1057.26 525.49 L1059.91 523.86 L1062.55 522.23 L1065.18 520.61 L1067.80 518.98 L1070.40 517.35 L1072.99 515.72 L1075.57 514.09 L1078.14 512.46 L1080.69 510.83 L1083.22 509.21 L1085.75 507.58 L1088.26 505.95 L1090.75 504.32 L1093.24 502.69 L1095.70 501.06 L1098.15 499.44 L1100.59 497.81 L1103.01 496.18 L1105.42 494.55 L1107.81 492.92 L1110.19 491.29 L1112.55 489.66 L1114.89 488.04 L1117.22 486.41 L1119.53 484.78 L1121.82 483.15 L1124.10 481.52 L1126.36 479.89 L1128.61 478.26 L1130.83 476.64 L1133.04 475.01 L1135.23 473.38 L1137.41 471.75 L1139.56 470.12 L1141.70 468.49 L1143.82 466.87 L1145.92 465.24 L1148.00 463.61 L1150.07 461.98 L1152.11 460.35 L1154.14 458.72 L1156.14 457.09 L1158.13 455.47 L1160.10 453.84 L1162.05 452.21 L1163.98 450.58 L1165.88 448.95 L1167.77 447.32 L1169.64 445.69 L1171.49 444.07 L1173.31 442.44 L1175.12 440.81 L1176.91 439.18 L1178.67 437.55 L1180.42 435.92 L1182.14 434.30 L1183.84 432.67 L1185.52 431.04 L1187.18 429.41 L1188.81 427.78 L1190.43 426.15 L1192.02 424.52 L1193.59 422.90 L1195.14 421.27 L1196.66 419.64 L1198.17 418.01 L1199.65 416.38 L1201.11 414.75 L1202.54 413.12 L1203.95 411.50 L1205.34 409.87 L1206.71 408.24 L1208.05 406.61 L1209.37 404.98 L1210.67 403.35 L1211.94 401.73 L1213.19 400.10 L1214.42 398.47 L1215.62 396.84 L1216.80 395.21 L1217.95 393.58 L1219.08 391.95 L1220.19 390.33 L1221.27 388.70 L1222.33 387.07 L1223.36 385.44 L1224.37 383.81 L1225.35 382.18 L1226.31 380.55 L1227.25 378.93 L1228.16 377.30 L1229.04 375.67 L1229.90 374.04 L1230.74 372.41 L1231.55 370.78 L1232.33 369.16 L1233.09 367.53 L1233.83 365.90 L1234.54 364.27 L1235.22 362.64 L1235.88 361.01 L1236.51 359.38 L1237.12 357.76 L1237.70 356.13 L1238.26 354.50 L1238.79 352.87 L1239.29 351.24 L1239.77 349.61 L1240.23 347.98 L1240.66 346.36 L1241.06 344.73 L1241.44 343.10 L1241.79 341.47 L1242.11 339.84 L1242.41 338.21 L1242.68 336.59 L1242.93 334.96 L1243.15 333.33 L1243.35 331.70 L1243.52 330.07 L1243.66 328.44 L1243.78 326.81 L1243.87 325.19 L1243.93 323.56 L1243.97 321.93 L1243.99 320.30 L1243.97 318.67 L1243.93 317.04 L1243.87 315.41 L1243.78 313.79 L1243.66 312.16 L1243.52 310.53 L1243.35 308.90 L1243.15 307.27 L1242.93 305.64 L1242.68 304.01 L1242.41 302.39 L1242.11 300.76 L1241.79 299.13 L1241.44 297.50 L1241.06 295.87 L1240.66 294.24 L1240.23 292.62 L1239.77 290.99 L1239.29 289.36 L1238.79 287.73 L1238.26 286.10 L1237.70 284.47 L1237.12 282.84 L1236.51 281.22 L1235.88 279.59 L1235.22 277.96 L1234.54 276.33 L1233.83 274.70 L1233.09 273.07 L1232.33 271.44 L1231.55 269.82 L1230.74 268.19 L1229.90 266.56 L1229.04 264.93 L1228.16 263.30 L1227.25 261.67 L1226.31 260.05 L1225.35 258.42 L1224.37 256.79 L1223.36 255.16 L1222.33 253.53 L1221.27 251.90 L1220.19 250.27 L1219.08 248.65 L1217.95 247.02 L1216.80 245.39 L1215.62 243.76 L1214.42 242.13 L1213.19 240.50 L1211.94 238.88 L1210.67 237.25 L1209.37 235.62 L1208.05 233.99 L1206.71 232.36 L1205.34 230.73 L1203.95 229.10 L1202.54 227.48 L1201.11 225.85 L1199.65 224.22 L1198.17 222.59 L1196.66 220.96 L1195.14 219.33 L1193.59 217.70 L1192.02 216.08 L1190.43 214.45 L1188.81 212.82 L1187.18 211.19 L1185.52 209.56 L1183.84 207.93 L1182.14 206.31 L1180.42 204.68 L1178.67 203.05 L1176.91 201.42 L1175.12 199.79 L1173.31 198.16 L1171.49 196.53 L1169.64 194.91 L1167.77 193.28 L1165.88 191.65 L1163.98 190.02 L1162.05 188.39 L1160.10 186.76 L1158.13 185.13 L1156.14 183.51 L1154.14 181.88 L1152.11 180.25 L1150.07 178.62 L1148.00 176.99 L1145.92 175.36 L1143.82 173.74 L1141.70 172.11 L1139.56 170.48 L1137.41 168.85 L1135.23 167.22 L1133.04 165.59 L1130.83 163.96 L1128.61 162.34 L1126.36 160.71 L1124.10 159.08 L1121.82 157.45 L1119.53 155.82 L1117.22 154.19 L1114.89 152.56 L1112.55 150.94 L1110.19 149.31 L1107.81 147.68 L1105.42 146.05 L1103.01 144.42 L1100.59 142.79 L1098.15 141.16 L1095.70 139.54 L1093.24 137.91 L1090.75 136.28 L1088.26 134.65 L1085.75 133.02 L1083.22 131.39 L1080.69 129.77 L1078.14 128.14 L1075.57 126.51 L1072.99 124.88 L1070.40 123.25 L1067.80 121.62 L1065.18 119.99 L1062.55 118.37 L1059.91 116.74 L1057.26 115.11 L1054.59 113.48 L1051.92 111.85 L1049.23 110.22 L1046.53 108.59 L1043.82 106.97 L1041.10 105.34 L1038.37 103.71 L1035.62 102.08 L1032.87 100.45 L1030.11 98.82 L1027.34 97.20 L1024.56 95.57 L1021.77 93.94 L1018.97 92.31 L1016.16 90.68 L1013.34 89.05 L1010.51 87.42 L1007.68 85.80 L1004.84 84.17 L1001.99 82.54 L999.13 80.91 L996.26 79.28 L993.39 77.65 L990.51 76.03 L987.63 74.40 L984.73 72.77 L981.83 71.14 L978.93 69.51 L976.02 67.88 L973.10 66.25 L970.18 64.63 L967.25 63.00 L964.32 61.37 L961.39 59.74 L958.44 58.11 L955.50 56.48 L952.55 54.85 L949.60 53.23 L946.64 51.60 L943.68 49.97 L940.71 48.34 L937.75 46.71 L934.78 45.08 L931.81 43.45 L928.83 41.83 L925.86 40.20 L922.88 38.57 L919.90 36.94 L916.92 35.31 L913.94 33.68 L910.95 32.06 L907.97 30.43 L904.98 28.80 L902.00 27.17 M902.00 613.43 L904.56 611.80 L907.12 610.17 L909.67 608.54 L912.23 606.92 L914.79 605.29 L917.34 603.66 L919.90 602.03 L922.45 600.40 L925.00 598.77 L927.55 597.14 L930.10 595.52 L932.64 593.89 L935.18 592.26 L937.72 590.63 L940.26 589.00 L942.80 587.37 L945.33 585.75 L947.86 584.12 L950.38 582.49 L952.90 580.86 L955.42 579.23 L957.93 577.60 L960.44 575.97 L962.95 574.35 L965.44 572.72 L967.94 571.09 L970.43 569.46 L972.91 567.83 L975.39 566.20 L977.87 564.58 L980.34 562.95 L982.80 561.32 L985.25 559.69 L987.70 558.06 L990.15 556.43 L992.58 554.80 L995.01 553.18 L997.43 551.55 L999.85 549.92 L1002.26 548.29 L1004.66 546.66 L1007.05 545.03 L1009.43 543.40 L1011.81 541.78 L1014.18 540.15 L1016.54 538.52 L1018.89 536.89 L1021.23 535.26 L1023.56 533.63 L1025.88 532.00 L1028.20 530.38 L1030.50 528.75 L1032.79 527.12 L1035.08 525.49 L1037.35 523.86 L1039.62 522.23 L1041.87 520.61 L1044.11 518.98 L1046.34 517.35 L1048.57 515.72 L1050.77 514.09 L1052.97 512.46 L1055.16 510.83 L1057.34 509.21 L1059.50 507.58 L1061.65 505.95 L1063.79 504.32 L1065.92 502.69 L1068.03 501.06 L1070.13 499.44 L1072.22 497.81 L1074.30 496.18 L1076.36 494.55 L1078.41 492.92 L1080.45 491.29 L1082.47 489.66 L1084.48 488.04 L1086.47 486.41 L1088.45 484.78 L1090.42 483.15 L1092.37 481.52 L1094.31 479.89 L1096.23 478.26 L1098.14 476.64 L1100.04 475.01 L1101.91 473.38 L1103.78 471.75 L1105.63 470.12 L1107.46 468.49 L1109.27 466.87 L1111.08 465.24 L1112.86 463.61 L1114.63 461.98 L1116.38 460.35 L1118.12 458.72 L1119.84 457.09 L1121.54 455.47 L1123.23 453.84 L1124.90 452.21 L1126.55 450.58 L1128.19 448.95 L1129.80 447.32 L1131.41 445.69 L1132.99 444.07 L1134.56 442.44 L1136.10 440.81 L1137.63 439.18 L1139.15 437.55 L1140.64 435.92 L1142.12 434.30 L1143.58 432.67 L1145.02 431.04 L1146.44 429.41 L1147.84 427.78 L1149.22 426.15 L1150.59 424.52 L1151.93 422.90 L1153.26 421.27 L1154.57 419.64 L1155.86 418.01 L1157.13 416.38 L1158.38 414.75 L1159.61 413.12 L1160.82 411.50 L1162.01 409.87 L1163.18 408.24 L1164.33 406.61 L1165.46 404.98 L1166.57 403.35 L1167.67 401.73 L1168.74 400.10 L1169.79 398.47 L1170.82 396.84 L1171.83 395.21 L1172.82 393.58 L1173.79 391.95 L1174.73 390.33 L1175.66 388.70 L1176.57 387.07 L1177.45 385.44 L1178.32 383.81 L1179.16 382.18 L1179.98 380.55 L1180.78 378.93 L1181.56 377.30 L1182.32 375.67 L1183.06 374.04 L1183.77 372.41 L1184.47 370.78 L1185.14 369.16 L1185.79 367.53 L1186.42 365.90 L1187.03 364.27 L1187.62 362.64 L1188.18 361.01 L1188.72 359.38 L1189.25 357.76 L1189.74 356.13 L1190.22 354.50 L1190.68 352.87 L1191.11 351.24 L1191.52 349.61 L1191.91 347.98 L1192.28 346.36 L1192.62 344.73 L1192.95 343.10 L1193.25 341.47 L1193.52 339.84 L1193.78 338.21 L1194.01 336.59 L1194.23 334.96 L1194.42 333.33 L1194.58 331.70 L1194.73 330.07 L1194.85 328.44 L1194.95 326.81 L1195.03 325.19 L1195.09 323.56 L1195.12 321.93 L1195.13 320.30 L1195.12 318.67 L1195.09 317.04 L1195.03 315.41 L1194.95 313.79 L1194.85 312.16 L1194.73 310.53 L1194.58 308.90 L1194.42 307.27 L1194.23 305.64 L1194.01 304.01 L1193.78 302.39 L1193.52 300.76 L1193.25 299.13 L1192.95 297.50 L1192.62 295.87 L1192.28 294.24 L1191.91 292.62 L1191.52 290.99 L1191.11 289.36 L1190.68 287.73 L1190.22 286.10 L1189.74 284.47 L1189.25 282.84 L1188.72 281.22 L1188.18 279.59 L1187.62 277.96 L1187.03 276.33 L1186.42 274.70 L1185.79 273.07 L1185.14 271.44 L1184.47 269.82 L1183.77 268.19 L1183.06 266.56 L1182.32 264.93 L1181.56 263.30 L1180.78 261.67 L1179.98 260.05 L1179.16 258.42 L1178.32 256.79 L1177.45 255.16 L1176.57 253.53 L1175.66 251.90 L1174.73 250.27 L1173.79 248.65 L1172.82 247.02 L1171.83 245.39 L1170.82 243.76 L1169.79 242.13 L1168.74 240.50 L1167.67 238.88 L1166.57 237.25 L1165.46 235.62 L1164.33 233.99 L1163.18 232.36 L1162.01 230.73 L1160.82 229.10 L1159.61 227.48 L1158.38 225.85 L1157.13 224.22 L1155.86 222.59 L1154.57 220.96 L1153.26 219.33 L1151.93 217.70 L1150.59 216.08 L1149.22 214.45 L1147.84 212.82 L1146.44 211.19 L1145.02 209.56 L1143.58 207.93 L1142.12 206.31 L1140.64 204.68 L1139.15 203.05 L1137.63 201.42 L1136.10 199.79 L1134.56 198.16 L1132.99 196.53 L1131.41 194.91 L1129.80 193.28 L1128.19 191.65 L1126.55 190.02 L1124.90 188.39 L1123.23 186.76 L1121.54 185.13 L1119.84 183.51 L1118.12 181.88 L1116.38 180.25 L1114.63 178.62 L1112.86 176.99 L1111.08 175.36 L1109.27 173.74 L1107.46 172.11 L1105.63 170.48 L1103.78 168.85 L1101.91 167.22 L1100.04 165.59 L1098.14 163.96 L1096.23 162.34 L1094.31 160.71 L1092.37 159.08 L1090.42 157.45 L1088.45 155.82 L1086.47 154.19 L1084.48 152.56 L1082.47 150.94 L1080.45 149.31 L1078.41 147.68 L1076.36 146.05 L1074.30 144.42 L1072.22 142.79 L1070.13 141.16 L1068.03 139.54 L1065.92 137.91 L1063.79 136.28 L1061.65 134.65 L1059.50 133.02 L1057.34 131.39 L1055.16 129.77 L1052.97 128.14 L1050.77 126.51 L1048.57 124.88 L1046.34 123.25 L1044.11 121.62 L1041.87 119.99 L1039.62 118.37 L1037.35 116.74 L1035.08 115.11 L1032.79 113.48 L1030.50 111.85 L1028.20 110.22 L1025.88 108.59 L1023.56 106.97 L1021.23 105.34 L1018.89 103.71 L1016.54 102.08 L1014.18 100.45 L1011.81 98.82 L1009.43 97.20 L1007.05 95.57 L1004.66 93.94 L1002.26 92.31 L999.85 90.68 L997.43 89.05 L995.01 87.42 L992.58 85.80 L990.15 84.17 L987.70 82.54 L985.25 80.91 L982.80 79.28 L980.34 77.65 L977.87 76.03 L975.39 74.40 L972.91 72.77 L970.43 71.14 L967.94 69.51 L965.44 67.88 L962.95 66.25 L960.44 64.63 L957.93 63.00 L955.42 61.37 L952.90 59.74 L950.38 58.11 L947.86 56.48 L945.33 54.85 L942.80 53.23 L940.26 51.60 L937.72 49.97 L935.18 48.34 L932.64 46.71 L930.10 45.08 L927.55 43.45 L925.00 41.83 L922.45 40.20 L919.90 38.57 L917.34 36.94 L914.79 35.31 L912.23 33.68 L909.67 32.06 L907.12 30.43 L904.56 28.80 L902.00 27.17 M902.00 613.43 L904.13 611.80 L906.26 610.17 L908.39 608.54 L910.53 606.92 L912.66 605.29 L914.78 603.66 L916.91 602.03 L919.04 600.40 L921.17 598.77 L923.29 597.14 L925.41 595.52 L927.53 593.89 L929.65 592.26 L931.77 590.63 L933.88 589.00 L936.00 587.37 L938.11 585.75 L940.21 584.12 L942.32 582.49 L944.42 580.86 L946.52 579.23 L948.61 577.60 L950.70 575.97 L952.79 574.35 L954.87 572.72 L956.95 571.09 L959.02 569.46 L961.10 567.83 L963.16 566.20 L965.22 564.58 L967.28 562.95 L969.33 561.32 L971.38 559.69 L973.42 558.06 L975.45 556.43 L977.49 554.80 L979.51 553.18 L981.53 551.55 L983.54 549.92 L985.55 548.29 L987.55 546.66 L989.54 545.03 L991.53 543.40 L993.51 541.78 L995.48 540.15 L997.45 538.52 L999.40 536.89 L1001.36 535.26 L1003.30 533.63 L1005.24 532.00 L1007.16 530.38 L1009.08 528.75 L1010.99 527.12 L1012.90 525.49 L1014.79 523.86 L1016.68 522.23 L1018.56 520.61 L1020.43 518.98 L1022.29 517.35 L1024.14 515.72 L1025.98 514.09 L1027.81 512.46 L1029.63 510.83 L1031.45 509.21 L1033.25 507.58 L1035.04 505.95 L1036.82 504.32 L1038.60 502.69 L1040.36 501.06 L1042.11 499.44 L1043.85 497.81 L1045.58 496.18 L1047.30 494.55 L1049.01 492.92 L1050.71 491.29 L1052.39 489.66 L1054.06 488.04 L1055.73 486.41 L1057.38 484.78 L1059.02 483.15 L1060.64 481.52 L1062.26 479.89 L1063.86 478.26 L1065.45 476.64 L1067.03 475.01 L1068.60 473.38 L1070.15 471.75 L1071.69 470.12 L1073.21 468.49 L1074.73 466.87 L1076.23 465.24 L1077.72 463.61 L1079.19 461.98 L1080.65 460.35 L1082.10 458.72 L1083.53 457.09 L1084.95 455.47 L1086.36 453.84 L1087.75 452.21 L1089.13 450.58 L1090.49 448.95 L1091.84 447.32 L1093.17 445.69 L1094.49 444.07 L1095.80 442.44 L1097.09 440.81 L1098.36 439.18 L1099.62 437.55 L1100.87 435.92 L1102.10 434.30 L1103.31 432.67 L1104.51 431.04 L1105.70 429.41 L1106.87 427.78 L1108.02 426.15 L1109.16 424.52 L1110.28 422.90 L1111.38 421.27 L1112.47 419.64 L1113.55 418.01 L1114.61 416.38 L1115.65 414.75 L1116.67 413.12 L1117.68 411.50 L1118.67 409.87 L1119.65 408.24 L1120.61 406.61 L1121.55 404.98 L1122.48 403.35 L1123.39 401.73 L1124.28 400.10 L1125.16 398.47 L1126.01 396.84 L1126.86 395.21 L1127.68 393.58 L1128.49 391.95 L1129.28 390.33 L1130.05 388.70 L1130.81 387.07 L1131.54 385.44 L1132.26 383.81 L1132.97 382.18 L1133.65 380.55 L1134.32 378.93 L1134.97 377.30 L1135.60 375.67 L1136.22 374.04 L1136.81 372.41 L1137.39 370.78 L1137.95 369.16 L1138.49 367.53 L1139.02 365.90 L1139.53 364.27 L1140.01 362.64 L1140.48 361.01 L1140.94 359.38 L1141.37 357.76 L1141.79 356.13 L1142.18 354.50 L1142.56 352.87 L1142.92 351.24 L1143.27 349.61 L1143.59 347.98 L1143.90 346.36 L1144.19 344.73 L1144.45 343.10 L1144.70 341.47 L1144.94 339.84 L1145.15 338.21 L1145.35 336.59 L1145.52 334.96 L1145.68 333.33 L1145.82 331.70 L1145.94 330.07 L1146.04 328.44 L1146.13 326.81 L1146.19 325.19 L1146.24 323.56 L1146.27 321.93 L1146.28 320.30 L1146.27 318.67 L1146.24 317.04 L1146.19 315.41 L1146.13 313.79 L1146.04 312.16 L1145.94 310.53 L1145.82 308.90 L1145.68 307.27 L1145.52 305.64 L1145.35 304.01 L1145.15 302.39 L1144.94 300.76 L1144.70 299.13 L1144.45 297.50 L1144.19 295.87 L1143.90 294.24 L1143.59 292.62 L1143.27 290.99 L1142.92 289.36 L1142.56 287.73 L1142.18 286.10 L1141.79 284.47 L1141.37 282.84 L1140.94 281.22 L1140.48 279.59 L1140.01 277.96 L1139.53 276.33 L1139.02 274.70 L1138.49 273.07 L1137.95 271.44 L1137.39 269.82 L1136.81 268.19 L1136.22 266.56 L1135.60 264.93 L1134.97 263.30 L1134.32 261.67 L1133.65 260.05 L1132.97 258.42 L1132.26 256.79 L1131.54 255.16 L1130.81 253.53 L1130.05 251.90 L1129.28 250.27 L1128.49 248.65 L1127.68 247.02 L1126.86 245.39 L1126.01 243.76 L1125.16 242.13 L1124.28 240.50 L1123.39 238.88 L1122.48 237.25 L1121.55 235.62 L1120.61 233.99 L1119.65 232.36 L1118.67 230.73 L1117.68 229.10 L1116.67 227.48 L1115.65 225.85 L1114.61 224.22 L1113.55 222.59 L1112.47 220.96 L1111.38 219.33 L1110.28 217.70 L1109.16 216.08 L1108.02 214.45 L1106.87 212.82 L1105.70 211.19 L1104.51 209.56 L1103.31 207.93 L1102.10 206.31 L1100.87 204.68 L1099.62 203.05 L1098.36 201.42 L1097.09 199.79 L1095.80 198.16 L1094.49 196.53 L1093.17 194.91 L1091.84 193.28 L1090.49 191.65 L1089.13 190.02 L1087.75 188.39 L1086.36 186.76 L1084.95 185.13 L1083.53 183.51 L1082.10 181.88 L1080.65 180.25 L1079.19 178.62 L1077.72 176.99 L1076.23 175.36 L1074.73 173.74 L1073.21 172.11 L1071.69 170.48 L1070.15 168.85 L1068.60 167.22 L1067.03 165.59 L1065.45 163.96 L1063.86 162.34 L1062.26 160.71 L1060.64 159.08 L1059.02 157.45 L1057.38 155.82 L1055.73 154.19 L1054.06 152.56 L1052.39 150.94 L1050.71 149.31 L1049.01 147.68 L1047.30 146.05 L1045.58 144.42 L1043.85 142.79 L1042.11 141.16 L1040.36 139.54 L1038.60 137.91 L1036.82 136.28 L1035.04 134.65 L1033.25 133.02 L1031.45 131.39 L1029.63 129.77 L1027.81 128.14 L1025.98 126.51 L1024.14 124.88 L1022.29 123.25 L1020.43 121.62 L1018.56 119.99 L1016.68 118.37 L1014.79 116.74 L1012.90 115.11 L1010.99 113.48 L1009.08 111.85 L1007.16 110.22 L1005.24 108.59 L1003.30 106.97 L1001.36 105.34 L999.40 103.71 L997.45 102.08 L995.48 100.45 L993.51 98.82 L991.53 97.20 L989.54 95.57 L987.55 93.94 L985.55 92.31 L983.54 90.68 L981.53 89.05 L979.51 87.42 L977.49 85.80 L975.45 84.17 L973.42 82.54 L971.38 80.91 L969.33 79.28 L967.28 77.65 L965.22 76.03 L963.16 74.40 L961.10 72.77 L959.02 71.14 L956.95 69.51 L954.87 67.88 L952.79 66.25 L950.70 64.63 L948.61 63.00 L946.52 61.37 L944.42 59.74 L942.32 58.11 L940.21 56.48 L938.11 54.85 L936.00 53.23 L933.88 51.60 L931.77 49.97 L929.65 48.34 L927.53 46.71 L925.41 45.08 L923.29 43.45 L921.17 41.83 L919.04 40.20 L916.91 38.57 L914.78 36.94 L912.66 35.31 L910.53 33.68 L908.39 32.06 L906.26 30.43 L904.13 28.80 L902.00 27.17 M902.00 613.43 L903.71 611.80 L905.41 610.17 L907.12 608.54 L908.82 606.92 L910.52 605.29 L912.23 603.66 L913.93 602.03 L915.63 600.40 L917.33 598.77 L919.03 597.14 L920.73 595.52 L922.43 593.89 L924.12 592.26 L925.82 590.63 L927.51 589.00 L929.20 587.37 L930.88 585.75 L932.57 584.12 L934.25 582.49 L935.93 580.86 L937.61 579.23 L939.29 577.60 L940.96 575.97 L942.63 574.35 L944.30 572.72 L945.96 571.09 L947.62 569.46 L949.28 567.83 L950.93 566.20 L952.58 564.58 L954.22 562.95 L955.87 561.32 L957.50 559.69 L959.14 558.06 L960.76 556.43 L962.39 554.80 L964.01 553.18 L965.62 551.55 L967.23 549.92 L968.84 548.29 L970.44 546.66 L972.03 545.03 L973.62 543.40 L975.21 541.78 L976.78 540.15 L978.36 538.52 L979.92 536.89 L981.48 535.26 L983.04 533.63 L984.59 532.00 L986.13 530.38 L987.67 528.75 L989.20 527.12 L990.72 525.49 L992.23 523.86 L993.74 522.23 L995.25 520.61 L996.74 518.98 L998.23 517.35 L999.71 515.72 L1001.18 514.09 L1002.65 512.46 L1004.11 510.83 L1005.56 509.21 L1007.00 507.58 L1008.43 505.95 L1009.86 504.32 L1011.28 502.69 L1012.69 501.06 L1014.09 499.44 L1015.48 497.81 L1016.86 496.18 L1018.24 494.55 L1019.61 492.92 L1020.96 491.29 L1022.31 489.66 L1023.65 488.04 L1024.98 486.41 L1026.30 484.78 L1027.61 483.15 L1028.92 481.52 L1030.21 479.89 L1031.49 478.26 L1032.76 476.64 L1034.02 475.01 L1035.28 473.38 L1036.52 471.75 L1037.75 470.12 L1038.97 468.49 L1040.18 466.87 L1041.38 465.24 L1042.57 463.61 L1043.75 461.98 L1044.92 460.35 L1046.08 458.72 L1047.23 457.09 L1048.36 455.47 L1049.49 453.84 L1050.60 452.21 L1051.70 450.58 L1052.79 448.95 L1053.87 447.32 L1054.94 445.69 L1055.99 444.07 L1057.04 442.44 L1058.07 440.81 L1059.09 439.18 L1060.10 437.55 L1061.09 435.92 L1062.08 434.30 L1063.05 432.67 L1064.01 431.04 L1064.96 429.41 L1065.89 427.78 L1066.82 426.15 L1067.73 424.52 L1068.62 422.90 L1069.51 421.27 L1070.38 419.64 L1071.24 418.01 L1072.08 416.38 L1072.92 414.75 L1073.74 413.12 L1074.55 411.50 L1075.34 409.87 L1076.12 408.24 L1076.89 406.61 L1077.64 404.98 L1078.38 403.35 L1079.11 401.73 L1079.82 400.10 L1080.53 398.47 L1081.21 396.84 L1081.89 395.21 L1082.54 393.58 L1083.19 391.95 L1083.82 390.33 L1084.44 388.70 L1085.04 387.07 L1085.63 385.44 L1086.21 383.81 L1086.77 382.18 L1087.32 380.55 L1087.86 378.93 L1088.38 377.30 L1088.88 375.67 L1089.37 374.04 L1089.85 372.41 L1090.31 370.78 L1090.76 369.16 L1091.20 367.53 L1091.62 365.90 L1092.02 364.27 L1092.41 362.64 L1092.79 361.01 L1093.15 359.38 L1093.50 357.76 L1093.83 356.13 L1094.15 354.50 L1094.45 352.87 L1094.74 351.24 L1095.01 349.61 L1095.27 347.98 L1095.52 346.36 L1095.75 344.73 L1095.96 343.10 L1096.16 341.47 L1096.35 339.84 L1096.52 338.21 L1096.68 336.59 L1096.82 334.96 L1096.94 333.33 L1097.06 331.70 L1097.15 330.07 L1097.23 328.44 L1097.30 326.81 L1097.35 325.19 L1097.39 323.56 L1097.41 321.93 L1097.42 320.30 L1097.41 318.67 L1097.39 317.04 L1097.35 315.41 L1097.30 313.79 L1097.23 312.16 L1097.15 310.53 L1097.06 308.90 L1096.94 307.27 L1096.82 305.64 L1096.68 304.01 L1096.52 302.39 L1096.35 300.76 L1096.16 299.13 L1095.96 297.50 L1095.75 295.87 L1095.52 294.24 L1095.27 292.62 L1095.01 290.99 L1094.74 289.36 L1094.45 287.73 L1094.15 286.10 L1093.83 284.47 L1093.50 282.84 L1093.15 281.22 L1092.79 279.59 L1092.41 277.96 L1092.02 276.33 L1091.62 274.70 L1091.20 273.07 L1090.76 271.44 L1090.31 269.82 L1089.85 268.19 L1089.37 266.56 L1088.88 264.93 L1088.38 263.30 L1087.86 261.67 L1087.32 260.05 L1086.77 258.42 L1086.21 256.79 L1085.63 255.16 L1085.04 253.53 L1084.44 251.90 L1083.82 250.27 L1083.19 248.65 L1082.54 247.02 L1081.89 245.39 L1081.21 243.76 L1080.53 242.13 L1079.82 240.50 L1079.11 238.88 L1078.38 237.25 L1077.64 235.62 L1076.89 233.99 L1076.12 232.36 L1075.34 230.73 L1074.55 229.10 L1073.74 227.48 L1072.92 225.85 L1072.08 224.22 L1071.24 222.59 L1070.38 220.96 L1069.51 219.33 L1068.62 217.70 L1067.73 216.08 L1066.82 214.45 L1065.89 212.82 L1064.96 211.19 L1064.01 209.56 L1063.05 207.93 L1062.08 206.31 L1061.09 204.68 L1060.10 203.05 L1059.09 201.42 L1058.07 199.79 L1057.04 198.16 L1055.99 196.53 L1054.94 194.91 L1053.87 193.28 L1052.79 191.65 L1051.70 190.02 L1050.60 188.39 L1049.49 186.76 L1048.36 185.13 L1047.23 183.51 L1046.08 181.88 L1044.92 180.25 L1043.75 178.62 L1042.57 176.99 L1041.38 175.36 L1040.18 173.74 L1038.97 172.11 L1037.75 170.48 L1036.52 168.85 L1035.28 167.22 L1034.02 165.59 L1032.76 163.96 L1031.49 162.34 L1030.21 160.71 L1028.92 159.08 L1027.61 157.45 L1026.30 155.82 L1024.98 154.19 L1023.65 152.56 L1022.31 150.94 L1020.96 149.31 L1019.61 147.68 L1018.24 146.05 L1016.86 144.42 L1015.48 142.79 L1014.09 141.16 L1012.69 139.54 L1011.28 137.91 L1009.86 136.28 L1008.43 134.65 L1007.00 133.02 L1005.56 131.39 L1004.11 129.77 L1002.65 128.14 L1001.18 126.51 L999.71 124.88 L998.23 123.25 L996.74 121.62 L995.25 119.99 L993.74 118.37 L992.23 116.74 L990.72 115.11 L989.20 113.48 L987.67 111.85 L986.13 110.22 L984.59 108.59 L983.04 106.97 L981.48 105.34 L979.92 103.71 L978.36 102.08 L976.78 100.45 L975.21 98.82 L973.62 97.20 L972.03 95.57 L970.44 93.94 L968.84 92.31 L967.23 90.68 L965.62 89.05 L964.01 87.42 L962.39 85.80 L960.76 84.17 L959.14 82.54 L957.50 80.91 L955.87 79.28 L954.22 77.65 L952.58 76.03 L950.93 74.40 L949.28 72.77 L947.62 71.14 L945.96 69.51 L944.30 67.88 L942.63 66.25 L940.96 64.63 L939.29 63.00 L937.61 61.37 L935.93 59.74 L934.25 58.11 L932.57 56.48 L930.88 54.85 L929.20 53.23 L927.51 51.60 L925.82 49.97 L924.12 48.34 L922.43 46.71 L920.73 45.08 L919.03 43.45 L917.33 41.83 L915.63 40.20 L913.93 38.57 L912.23 36.94 L910.52 35.31 L908.82 33.68 L907.12 32.06 L905.41 30.43 L903.71 28.80 L902.00 27.17 M902.00 613.43 L903.28 611.80 L904.56 610.17 L905.84 608.54 L907.12 606.92 L908.39 605.29 L909.67 603.66 L910.95 602.03 L912.22 600.40 L913.50 598.77 L914.77 597.14 L916.05 595.52 L917.32 593.89 L918.59 592.26 L919.86 590.63 L921.13 589.00 L922.40 587.37 L923.66 585.75 L924.93 584.12 L926.19 582.49 L927.45 580.86 L928.71 579.23 L929.97 577.60 L931.22 575.97 L932.47 574.35 L933.72 572.72 L934.97 571.09 L936.21 569.46 L937.46 567.83 L938.70 566.20 L939.93 564.58 L941.17 562.95 L942.40 561.32 L943.63 559.69 L944.85 558.06 L946.07 556.43 L947.29 554.80 L948.51 553.18 L949.72 551.55 L950.92 549.92 L952.13 548.29 L953.33 546.66 L954.52 545.03 L955.72 543.40 L956.90 541.78 L958.09 540.15 L959.27 538.52 L960.44 536.89 L961.61 535.26 L962.78 533.63 L963.94 532.00 L965.10 530.38 L966.25 528.75 L967.40 527.12 L968.54 525.49 L969.68 523.86 L970.81 522.23 L971.93 520.61 L973.06 518.98 L974.17 517.35 L975.28 515.72 L976.39 514.09 L977.49 512.46 L978.58 510.83 L979.67 509.21 L980.75 507.58 L981.83 505.95 L982.89 504.32 L983.96 502.69 L985.02 501.06 L986.07 499.44 L987.11 497.81 L988.15 496.18 L989.18 494.55 L990.21 492.92 L991.22 491.29 L992.23 489.66 L993.24 488.04 L994.24 486.41 L995.23 484.78 L996.21 483.15 L997.19 481.52 L998.16 479.89 L999.12 478.26 L1000.07 476.64 L1001.02 475.01 L1001.96 473.38 L1002.89 471.75 L1003.81 470.12 L1004.73 468.49 L1005.64 466.87 L1006.54 465.24 L1007.43 463.61 L1008.31 461.98 L1009.19 460.35 L1010.06 458.72 L1010.92 457.09 L1011.77 455.47 L1012.61 453.84 L1013.45 452.21 L1014.28 450.58 L1015.09 448.95 L1015.90 447.32 L1016.70 445.69 L1017.49 444.07 L1018.28 442.44 L1019.05 440.81 L1019.82 439.18 L1020.57 437.55 L1021.32 435.92 L1022.06 434.30 L1022.79 432.67 L1023.51 431.04 L1024.22 429.41 L1024.92 427.78 L1025.61 426.15 L1026.29 424.52 L1026.97 422.90 L1027.63 421.27 L1028.28 419.64 L1028.93 418.01 L1029.56 416.38 L1030.19 414.75 L1030.80 413.12 L1031.41 411.50 L1032.00 409.87 L1032.59 408.24 L1033.17 406.61 L1033.73 404.98 L1034.29 403.35 L1034.83 401.73 L1035.37 400.10 L1035.89 398.47 L1036.41 396.84 L1036.91 395.21 L1037.41 393.58 L1037.89 391.95 L1038.37 390.33 L1038.83 388.70 L1039.28 387.07 L1039.73 385.44 L1040.16 383.81 L1040.58 382.18 L1040.99 380.55 L1041.39 378.93 L1041.78 377.30 L1042.16 375.67 L1042.53 374.04 L1042.89 372.41 L1043.23 370.78 L1043.57 369.16 L1043.90 367.53 L1044.21 365.90 L1044.52 364.27 L1044.81 362.64 L1045.09 361.01 L1045.36 359.38 L1045.62 357.76 L1045.87 356.13 L1046.11 354.50 L1046.34 352.87 L1046.55 351.24 L1046.76 349.61 L1046.96 347.98 L1047.14 346.36 L1047.31 344.73 L1047.47 343.10 L1047.62 341.47 L1047.76 339.84 L1047.89 338.21 L1048.01 336.59 L1048.11 334.96 L1048.21 333.33 L1048.29 331.70 L1048.36 330.07 L1048.43 328.44 L1048.48 326.81 L1048.51 325.19 L1048.54 323.56 L1048.56 321.93 L1048.57 320.30 L1048.56 318.67 L1048.54 317.04 L1048.51 315.41 L1048.48 313.79 L1048.43 312.16 L1048.36 310.53 L1048.29 308.90 L1048.21 307.27 L1048.11 305.64 L1048.01 304.01 L1047.89 302.39 L1047.76 300.76 L1047.62 299.13 L1047.47 297.50 L1047.31 295.87 L1047.14 294.24 L1046.96 292.62 L1046.76 290.99 L1046.55 289.36 L1046.34 287.73 L1046.11 286.10 L1045.87 284.47 L1045.62 282.84 L1045.36 281.22 L1045.09 279.59 L1044.81 277.96 L1044.52 276.33 L1044.21 274.70 L1043.90 273.07 L1043.57 271.44 L1043.23 269.82 L1042.89 268.19 L1042.53 266.56 L1042.16 264.93 L1041.78 263.30 L1041.39 261.67 L1040.99 260.05 L1040.58 258.42 L1040.16 256.79 L1039.73 255.16 L1039.28 253.53 L1038.83 251.90 L1038.37 250.27 L1037.89 248.65 L1037.41 247.02 L1036.91 245.39 L1036.41 243.76 L1035.89 242.13 L1035.37 240.50 L1034.83 238.88 L1034.29 237.25 L1033.73 235.62 L1033.17 233.99 L1032.59 232.36 L1032.00 230.73 L1031.41 229.10 L1030.80 227.48 L1030.19 225.85 L1029.56 224.22 L1028.93 222.59 L1028.28 220.96 L1027.63 219.33 L1026.97 217.70 L1026.29 216.08 L1025.61 214.45 L1024.92 212.82 L1024.22 211.19 L1023.51 209.56 L1022.79 207.93 L1022.06 206.31 L1021.32 204.68 L1020.57 203.05 L1019.82 201.42 L1019.05 199.79 L1018.28 198.16 L1017.49 196.53 L1016.70 194.91 L1015.90 193.28 L1015.09 191.65 L1014.28 190.02 L1013.45 188.39 L1012.61 186.76 L1011.77 185.13 L1010.92 183.51 L1010.06 181.88 L1009.19 180.25 L1008.31 178.62 L1007.43 176.99 L1006.54 175.36 L1005.64 173.74 L1004.73 172.11 L1003.81 170.48 L1002.89 168.85 L1001.96 167.22 L1001.02 165.59 L1000.07 163.96 L999.12 162.34 L998.16 160.71 L997.19 159.08 L996.21 157.45 L995.23 155.82 L994.24 154.19 L993.24 152.56 L992.23 150.94 L991.22 149.31 L990.21 147.68 L989.18 146.05 L988.15 144.42 L987.11 142.79 L986.07 141.16 L985.02 139.54 L983.96 137.91 L982.89 136.28 L981.83 134.65 L980.75 133.02 L979.67 131.39 L978.58 129.77 L977.49 128.14 L976.39 126.51 L975.28 124.88 L974.17 123.25 L973.06 121.62 L971.93 119.99 L970.81 118.37 L969.68 116.74 L968.54 115.11 L967.40 113.48 L966.25 111.85 L965.10 110.22 L963.94 108.59 L962.78 106.97 L961.61 105.34 L960.44 103.71 L959.27 102.08 L958.09 100.45 L956.90 98.82 L955.72 97.20 L954.52 95.57 L953.33 93.94 L952.13 92.31 L950.92 90.68 L949.72 89.05 L948.51 87.42 L947.29 85.80 L946.07 84.17 L944.85 82.54 L943.63 80.91 L942.40 79.28 L941.17 77.65 L939.93 76.03 L938.70 74.40 L937.46 72.77 L936.21 71.14 L934.97 69.51 L933.72 67.88 L932.47 66.25 L931.22 64.63 L929.97 63.00 L928.71 61.37 L927.45 59.74 L926.19 58.11 L924.93 56.48 L923.66 54.85 L922.40 53.23 L921.13 51.60 L919.86 49.97 L918.59 48.34 L917.32 46.71 L916.05 45.08 L914.77 43.45 L913.50 41.83 L912.22 40.20 L910.95 38.57 L909.67 36.94 L908.39 35.31 L907.12 33.68 L905.84 32.06 L904.56 30.43 L903.28 28.80 L902.00 27.17 M902.00 613.43 L902.85 611.80 L903.71 610.17 L904.56 608.54 L905.41 606.92 L906.26 605.29 L907.11 603.66 L907.97 602.03 L908.82 600.40 L909.67 598.77 L910.52 597.14 L911.37 595.52 L912.21 593.89 L913.06 592.26 L913.91 590.63 L914.75 589.00 L915.60 587.37 L916.44 585.75 L917.29 584.12 L918.13 582.49 L918.97 580.86 L919.81 579.23 L920.64 577.60 L921.48 575.97 L922.32 574.35 L923.15 572.72 L923.98 571.09 L924.81 569.46 L925.64 567.83 L926.46 566.20 L927.29 564.58 L928.11 562.95 L928.93 561.32 L929.75 559.69 L930.57 558.06 L931.38 556.43 L932.19 554.80 L933.00 553.18 L933.81 551.55 L934.62 549.92 L935.42 548.29 L936.22 546.66 L937.02 545.03 L937.81 543.40 L938.60 541.78 L939.39 540.15 L940.18 538.52 L940.96 536.89 L941.74 535.26 L942.52 533.63 L943.29 532.00 L944.07 530.38 L944.83 528.75 L945.60 527.12 L946.36 525.49 L947.12 523.86 L947.87 522.23 L948.62 520.61 L949.37 518.98 L950.11 517.35 L950.86 515.72 L951.59 514.09 L952.32 512.46 L953.05 510.83 L953.78 509.21 L954.50 507.58 L955.22 505.95 L955.93 504.32 L956.64 502.69 L957.34 501.06 L958.04 499.44 L958.74 497.81 L959.43 496.18 L960.12 494.55 L960.80 492.92 L961.48 491.29 L962.16 489.66 L962.83 488.04 L963.49 486.41 L964.15 484.78 L964.81 483.15 L965.46 481.52 L966.10 479.89 L966.74 478.26 L967.38 476.64 L968.01 475.01 L968.64 473.38 L969.26 471.75 L969.88 470.12 L970.49 468.49 L971.09 466.87 L971.69 465.24 L972.29 463.61 L972.88 461.98 L973.46 460.35 L974.04 458.72 L974.61 457.09 L975.18 455.47 L975.74 453.84 L976.30 452.21 L976.85 450.58 L977.40 448.95 L977.93 447.32 L978.47 445.69 L979.00 444.07 L979.52 442.44 L980.03 440.81 L980.54 439.18 L981.05 437.55 L981.55 435.92 L982.04 434.30 L982.53 432.67 L983.01 431.04 L983.48 429.41 L983.95 427.78 L984.41 426.15 L984.86 424.52 L985.31 422.90 L985.75 421.27 L986.19 419.64 L986.62 418.01 L987.04 416.38 L987.46 414.75 L987.87 413.12 L988.27 411.50 L988.67 409.87 L989.06 408.24 L989.44 406.61 L989.82 404.98 L990.19 403.35 L990.56 401.73 L990.91 400.10 L991.26 398.47 L991.61 396.84 L991.94 395.21 L992.27 393.58 L992.60 391.95 L992.91 390.33 L993.22 388.70 L993.52 387.07 L993.82 385.44 L994.11 383.81 L994.39 382.18 L994.66 380.55 L994.93 378.93 L995.19 377.30 L995.44 375.67 L995.69 374.04 L995.92 372.41 L996.16 370.78 L996.38 369.16 L996.60 367.53 L996.81 365.90 L997.01 364.27 L997.21 362.64 L997.39 361.01 L997.57 359.38 L997.75 357.76 L997.91 356.13 L998.07 354.50 L998.23 352.87 L998.37 351.24 L998.51 349.61 L998.64 347.98 L998.76 346.36 L998.87 344.73 L998.98 343.10 L999.08 341.47 L999.17 339.84 L999.26 338.21 L999.34 336.59 L999.41 334.96 L999.47 333.33 L999.53 331.70 L999.58 330.07 L999.62 328.44 L999.65 326.81 L999.68 325.19 L999.70 323.56 L999.71 321.93 L999.71 320.30 L999.71 318.67 L999.70 317.04 L999.68 315.41 L999.65 313.79 L999.62 312.16 L999.58 310.53 L999.53 308.90 L999.47 307.27 L999.41 305.64 L999.34 304.01 L999.26 302.39 L999.17 300.76 L999.08 299.13 L998.98 297.50 L998.87 295.87 L998.76 294.24 L998.64 292.62 L998.51 290.99 L998.37 289.36 L998.23 287.73 L998.07 286.10 L997.91 284.47 L997.75 282.84 L997.57 281.22 L997.39 279.59 L997.21 277.96 L997.01 276.33 L996.81 274.70 L996.60 273.07 L996.38 271.44 L996.16 269.82 L995.92 268.19 L995.69 266.56 L995.44 264.93 L995.19 263.30 L994.93 261.67 L994.66 260.05 L994.39 258.42 L994.11 256.79 L993.82 255.16 L993.52 253.53 L993.22 251.90 L992.91 250.27 L992.60 248.65 L992.27 247.02 L991.94 245.39 L991.61 243.76 L991.26 242.13 L990.91 240.50 L990.56 238.88 L990.19 237.25 L989.82 235.62 L989.44 233.99 L989.06 232.36 L988.67 230.73 L988.27 229.10 L987.87 227.48 L987.46 225.85 L987.04 224.22 L986.62 222.59 L986.19 220.96 L985.75 219.33 L985.31 217.70 L984.86 216.08 L984.41 214.45 L983.95 212.82 L983.48 211.19 L983.01 209.56 L982.53 207.93 L982.04 206.31 L981.55 204.68 L981.05 203.05 L980.54 201.42 L980.03 199.79 L979.52 198.16 L979.00 196.53 L978.47 194.91 L977.93 193.28 L977.40 191.65 L976.85 190.02 L976.30 188.39 L975.74 186.76 L975.18 185.13 L974.61 183.51 L974.04 181.88 L973.46 180.25 L972.88 178.62 L972.29 176.99 L971.69 175.36 L971.09 173.74 L970.49 172.11 L969.88 170.48 L969.26 168.85 L968.64 167.22 L968.01 165.59 L967.38 163.96 L966.74 162.34 L966.10 160.71 L965.46 159.08 L964.81 157.45 L964.15 155.82 L963.49 154.19 L962.83 152.56 L962.16 150.94 L961.48 149.31 L960.80 147.68 L960.12 146.05 L959.43 144.42 L958.74 142.79 L958.04 141.16 L957.34 139.54 L956.64 137.91 L955.93 136.28 L955.22 134.65 L954.50 133.02 L953.78 131.39 L953.05 129.77 L952.32 128.14 L951.59 126.51 L950.86 124.88 L950.11 123.25 L949.37 121.62 L948.62 119.99 L947.87 118.37 L947.12 116.74 L946.36 115.11 L945.60 113.48 L944.83 111.85 L944.07 110.22 L943.29 108.59 L942.52 106.97 L941.74 105.34 L940.96 103.71 L940.18 102.08 L939.39 100.45 L938.60 98.82 L937.81 97.20 L937.02 95.57 L936.22 93.94 L935.42 92.31 L934.62 90.68 L933.81 89.05 L933.00 87.42 L932.19 85.80 L931.38 84.17 L930.57 82.54 L929.75 80.91 L928.93 79.28 L928.11 77.65 L927.29 76.03 L926.46 74.40 L925.64 72.77 L924.81 71.14 L923.98 69.51 L923.15 67.88 L922.32 66.25 L921.48 64.63 L920.64 63.00 L919.81 61.37 L918.97 59.74 L918.13 58.11 L917.29 56.48 L916.44 54.85 L915.60 53.23 L914.75 51.60 L913.91 49.97 L913.06 48.34 L912.21 46.71 L911.37 45.08 L910.52 43.45 L909.67 41.83 L908.82 40.20 L907.97 38.57 L907.11 36.94 L906.26 35.31 L905.41 33.68 L904.56 32.06 L903.71 30.43 L902.85 28.80 L902.00 27.17 M902.00 613.43 L902.43 611.80 L902.85 610.17 L903.28 608.54 L903.71 606.92 L904.13 605.29 L904.56 603.66 L904.98 602.03 L905.41 600.40 L905.83 598.77 L906.26 597.14 L906.68 595.52 L907.11 593.89 L907.53 592.26 L907.95 590.63 L908.38 589.00 L908.80 587.37 L909.22 585.75 L909.64 584.12 L910.06 582.49 L910.48 580.86 L910.90 579.23 L911.32 577.60 L911.74 575.97 L912.16 574.35 L912.57 572.72 L912.99 571.09 L913.40 569.46 L913.82 567.83 L914.23 566.20 L914.64 564.58 L915.06 562.95 L915.47 561.32 L915.88 559.69 L916.28 558.06 L916.69 556.43 L917.10 554.80 L917.50 553.18 L917.91 551.55 L918.31 549.92 L918.71 548.29 L919.11 546.66 L919.51 545.03 L919.91 543.40 L920.30 541.78 L920.70 540.15 L921.09 538.52 L921.48 536.89 L921.87 535.26 L922.26 533.63 L922.65 532.00 L923.03 530.38 L923.42 528.75 L923.80 527.12 L924.18 525.49 L924.56 523.86 L924.94 522.23 L925.31 520.61 L925.69 518.98 L926.06 517.35 L926.43 515.72 L926.80 514.09 L927.16 512.46 L927.53 510.83 L927.89 509.21 L928.25 507.58 L928.61 505.95 L928.96 504.32 L929.32 502.69 L929.67 501.06 L930.02 499.44 L930.37 497.81 L930.72 496.18 L931.06 494.55 L931.40 492.92 L931.74 491.29 L932.08 489.66 L932.41 488.04 L932.75 486.41 L933.08 484.78 L933.40 483.15 L933.73 481.52 L934.05 479.89 L934.37 478.26 L934.69 476.64 L935.01 475.01 L935.32 473.38 L935.63 471.75 L935.94 470.12 L936.24 468.49 L936.55 466.87 L936.85 465.24 L937.14 463.61 L937.44 461.98 L937.73 460.35 L938.02 458.72 L938.31 457.09 L938.59 455.47 L938.87 453.84 L939.15 452.21 L939.43 450.58 L939.70 448.95 L939.97 447.32 L940.23 445.69 L940.50 444.07 L940.76 442.44 L941.02 440.81 L941.27 439.18 L941.52 437.55 L941.77 435.92 L942.02 434.30 L942.26 432.67 L942.50 431.04 L942.74 429.41 L942.97 427.78 L943.20 426.15 L943.43 424.52 L943.66 422.90 L943.88 421.27 L944.09 419.64 L944.31 418.01 L944.52 416.38 L944.73 414.75 L944.93 413.12 L945.14 411.50 L945.33 409.87 L945.53 408.24 L945.72 406.61 L945.91 404.98 L946.10 403.35 L946.28 401.73 L946.46 400.10 L946.63 398.47 L946.80 396.84 L946.97 395.21 L947.14 393.58 L947.30 391.95 L947.46 390.33 L947.61 388.70 L947.76 387.07 L947.91 385.44 L948.05 383.81 L948.19 382.18 L948.33 380.55 L948.46 378.93 L948.59 377.30 L948.72 375.67 L948.84 374.04 L948.96 372.41 L949.08 370.78 L949.19 369.16 L949.30 367.53 L949.40 365.90 L949.51 364.27 L949.60 362.64 L949.70 361.01 L949.79 359.38 L949.87 357.76 L949.96 356.13 L950.04 354.50 L950.11 352.87 L950.18 351.24 L950.25 349.61 L950.32 347.98 L950.38 346.36 L950.44 344.73 L950.49 343.10 L950.54 341.47 L950.59 339.84 L950.63 338.21 L950.67 336.59 L950.70 334.96 L950.74 333.33 L950.76 331.70 L950.79 330.07 L950.81 328.44 L950.83 326.81 L950.84 325.19 L950.85 323.56 L950.85 321.93 L950.86 320.30 L950.85 318.67 L950.85 317.04 L950.84 315.41 L950.83 313.79 L950.81 312.16 L950.79 310.53 L950.76 308.90 L950.74 307.27 L950.70 305.64 L950.67 304.01 L950.63 302.39 L950.59 300.76 L950.54 299.13 L950.49 297.50 L950.44 295.87 L950.38 294.24 L950.32 292.62 L950.25 290.99 L950.18 289.36 L950.11 287.73 L950.04 286.10 L949.96 284.47 L949.87 282.84 L949.79 281.22 L949.70 279.59 L949.60 277.96 L949.51 276.33 L949.40 274.70 L949.30 273.07 L949.19 271.44 L949.08 269.82 L948.96 268.19 L948.84 266.56 L948.72 264.93 L948.59 263.30 L948.46 261.67 L948.33 260.05 L948.19 258.42 L948.05 256.79 L947.91 255.16 L947.76 253.53 L947.61 251.90 L947.46 250.27 L947.30 248.65 L947.14 247.02 L946.97 245.39 L946.80 243.76 L946.63 242.13 L946.46 240.50 L946.28 238.88 L946.10 237.25 L945.91 235.62 L945.72 233.99 L945.53 232.36 L945.33 230.73 L945.14 229.10 L944.93 227.48 L944.73 225.85 L944.52 224.22 L944.31 222.59 L944.09 220.96 L943.88 219.33 L943.66 217.70 L943.43 216.08 L943.20 214.45 L942.97 212.82 L942.74 211.19 L942.50 209.56 L942.26 207.93 L942.02 206.31 L941.77 204.68 L941.52 203.05 L941.27 201.42 L941.02 199.79 L940.76 198.16 L940.50 196.53 L940.23 194.91 L939.97 193.28 L939.70 191.65 L939.43 190.02 L939.15 188.39 L938.87 186.76 L938.59 185.13 L938.31 183.51 L938.02 181.88 L937.73 180.25 L937.44 178.62 L937.14 176.99 L936.85 175.36 L936.55 173.74 L936.24 172.11 L935.94 170.48 L935.63 168.85 L935.32 167.22 L935.01 165.59 L934.69 163.96 L934.37 162.34 L934.05 160.71 L933.73 159.08 L933.40 157.45 L933.08 155.82 L932.75 154.19 L932.41 152.56 L932.08 150.94 L931.74 149.31 L931.40 147.68 L931.06 146.05 L930.72 144.42 L930.37 142.79 L930.02 141.16 L929.67 139.54 L929.32 137.91 L928.96 136.28 L928.61 134.65 L928.25 133.02 L927.89 131.39 L927.53 129.77 L927.16 128.14 L926.80 126.51 L926.43 124.88 L926.06 123.25 L925.69 121.62 L925.31 119.99 L924.94 118.37 L924.56 116.74 L924.18 115.11 L923.80 113.48 L923.42 111.85 L923.03 110.22 L922.65 108.59 L922.26 106.97 L921.87 105.34 L921.48 103.71 L921.09 102.08 L920.70 100.45 L920.30 98.82 L919.91 97.20 L919.51 95.57 L919.11 93.94 L918.71 92.31 L918.31 90.68 L917.91 89.05 L917.50 87.42 L917.10 85.80 L916.69 84.17 L916.28 82.54 L915.88 80.91 L915.47 79.28 L915.06 77.65 L914.64 76.03 L914.23 74.40 L913.82 72.77 L913.40 71.14 L912.99 69.51 L912.57 67.88 L912.16 66.25 L911.74 64.63 L911.32 63.00 L910.90 61.37 L910.48 59.74 L910.06 58.11 L909.64 56.48 L909.22 54.85 L908.80 53.23 L908.38 51.60 L907.95 49.97 L907.53 48.34 L907.11 46.71 L906.68 45.08 L906.26 43.45 L905.83 41.83 L905.41 40.20 L904.98 38.57 L904.56 36.94 L904.13 35.31 L903.71 33.68 L903.28 32.06 L902.85 30.43 L902.43 28.80 L902.00 27.17 M902.00 613.43 L902.00 611.80 L902.00 610.17 L902.00 608.54 L902.00 606.92 L902.00 605.29 L902.00 603.66 L902.00 602.03 L902.00 600.40 L902.00 598.77 L902.00 597.14 L902.00 595.52 L902.00 593.89 L902.00 592.26 L902.00 590.63 L902.00 589.00 L902.00 587.37 L902.00 585.75 L902.00 584.12 L902.00 582.49 L902.00 580.86 L902.00 579.23 L902.00 577.60 L902.00 575.97 L902.00 574.35 L902.00 572.72 L902.00 571.09 L902.00 569.46 L902.00 567.83 L902.00 566.20 L902.00 564.58 L902.00 562.95 L902.00 561.32 L902.00 559.69 L902.00 558.06 L902.00 556.43 L902.00 554.80 L902.00 553.18 L902.00 551.55 L902.00 549.92 L902.00 548.29 L902.00 546.66 L902.00 545.03 L902.00 543.40 L902.00 541.78 L902.00 540.15 L902.00 538.52 L902.00 536.89 L902.00 535.26 L902.00 533.63 L902.00 532.00 L902.00 530.38 L902.00 528.75 L902.00 527.12 L902.00 525.49 L902.00 523.86 L902.00 522.23 L902.00 520.61 L902.00 518.98 L902.00 517.35 L902.00 515.72 L902.00 514.09 L902.00 512.46 L902.00 510.83 L902.00 509.21 L902.00 507.58 L902.00 505.95 L902.00 504.32 L902.00 502.69 L902.00 501.06 L902.00 499.44 L902.00 497.81 L902.00 496.18 L902.00 494.55 L902.00 492.92 L902.00 491.29 L902.00 489.66 L902.00 488.04 L902.00 486.41 L902.00 484.78 L902.00 483.15 L902.00 481.52 L902.00 479.89 L902.00 478.26 L902.00 476.64 L902.00 475.01 L902.00 473.38 L902.00 471.75 L902.00 470.12 L902.00 468.49 L902.00 466.87 L902.00 465.24 L902.00 463.61 L902.00 461.98 L902.00 460.35 L902.00 458.72 L902.00 457.09 L902.00 455.47 L902.00 453.84 L902.00 452.21 L902.00 450.58 L902.00 448.95 L902.00 447.32 L902.00 445.69 L902.00 444.07 L902.00 442.44 L902.00 440.81 L902.00 439.18 L902.00 437.55 L902.00 435.92 L902.00 434.30 L902.00 432.67 L902.00 431.04 L902.00 429.41 L902.00 427.78 L902.00 426.15 L902.00 424.52 L902.00 422.90 L902.00 421.27 L902.00 419.64 L902.00 418.01 L902.00 416.38 L902.00 414.75 L902.00 413.12 L902.00 411.50 L902.00 409.87 L902.00 408.24 L902.00 406.61 L902.00 404.98 L902.00 403.35 L902.00 401.73 L902.00 400.10 L902.00 398.47 L902.00 396.84 L902.00 395.21 L902.00 393.58 L902.00 391.95 L902.00 390.33 L902.00 388.70 L902.00 387.07 L902.00 385.44 L902.00 383.81 L902.00 382.18 L902.00 380.55 L902.00 378.93 L902.00 377.30 L902.00 375.67 L902.00 374.04 L902.00 372.41 L902.00 370.78 L902.00 369.16 L902.00 367.53 L902.00 365.90 L902.00 364.27 L902.00 362.64 L902.00 361.01 L902.00 359.38 L902.00 357.76 L902.00 356.13 L902.00 354.50 L902.00 352.87 L902.00 351.24 L902.00 349.61 L902.00 347.98 L902.00 346.36 L902.00 344.73 L902.00 343.10 L902.00 341.47 L902.00 339.84 L902.00 338.21 L902.00 336.59 L902.00 334.96 L902.00 333.33 L902.00 331.70 L902.00 330.07 L902.00 328.44 L902.00 326.81 L902.00 325.19 L902.00 323.56 L902.00 321.93 L902.00 320.30 L902.00 318.67 L902.00 317.04 L902.00 315.41 L902.00 313.79 L902.00 312.16 L902.00 310.53 L902.00 308.90 L902.00 307.27 L902.00 305.64 L902.00 304.01 L902.00 302.39 L902.00 300.76 L902.00 299.13 L902.00 297.50 L902.00 295.87 L902.00 294.24 L902.00 292.62 L902.00 290.99 L902.00 289.36 L902.00 287.73 L902.00 286.10 L902.00 284.47 L902.00 282.84 L902.00 281.22 L902.00 279.59 L902.00 277.96 L902.00 276.33 L902.00 274.70 L902.00 273.07 L902.00 271.44 L902.00 269.82 L902.00 268.19 L902.00 266.56 L902.00 264.93 L902.00 263.30 L902.00 261.67 L902.00 260.05 L902.00 258.42 L902.00 256.79 L902.00 255.16 L902.00 253.53 L902.00 251.90 L902.00 250.27 L902.00 248.65 L902.00 247.02 L902.00 245.39 L902.00 243.76 L902.00 242.13 L902.00 240.50 L902.00 238.88 L902.00 237.25 L902.00 235.62 L902.00 233.99 L902.00 232.36 L902.00 230.73 L902.00 229.10 L902.00 227.48 L902.00 225.85 L902.00 224.22 L902.00 222.59 L902.00 220.96 L902.00 219.33 L902.00 217.70 L902.00 216.08 L902.00 214.45 L902.00 212.82 L902.00 211.19 L902.00 209.56 L902.00 207.93 L902.00 206.31 L902.00 204.68 L902.00 203.05 L902.00 201.42 L902.00 199.79 L902.00 198.16 L902.00 196.53 L902.00 194.91 L902.00 193.28 L902.00 191.65 L902.00 190.02 L902.00 188.39 L902.00 186.76 L902.00 185.13 L902.00 183.51 L902.00 181.88 L902.00 180.25 L902.00 178.62 L902.00 176.99 L902.00 175.36 L902.00 173.74 L902.00 172.11 L902.00 170.48 L902.00 168.85 L902.00 167.22 L902.00 165.59 L902.00 163.96 L902.00 162.34 L902.00 160.71 L902.00 159.08 L902.00 157.45 L902.00 155.82 L902.00 154.19 L902.00 152.56 L902.00 150.94 L902.00 149.31 L902.00 147.68 L902.00 146.05 L902.00 144.42 L902.00 142.79 L902.00 141.16 L902.00 139.54 L902.00 137.91 L902.00 136.28 L902.00 134.65 L902.00 133.02 L902.00 131.39 L902.00 129.77 L902.00 128.14 L902.00 126.51 L902.00 124.88 L902.00 123.25 L902.00 121.62 L902.00 119.99 L902.00 118.37 L902.00 116.74 L902.00 115.11 L902.00 113.48 L902.00 111.85 L902.00 110.22 L902.00 108.59 L902.00 106.97 L902.00 105.34 L902.00 103.71 L902.00 102.08 L902.00 100.45 L902.00 98.82 L902.00 97.20 L902.00 95.57 L902.00 93.94 L902.00 92.31 L902.00 90.68 L902.00 89.05 L902.00 87.42 L902.00 85.80 L902.00 84.17 L902.00 82.54 L902.00 80.91 L902.00 79.28 L902.00 77.65 L902.00 76.03 L902.00 74.40 L902.00 72.77 L902.00 71.14 L902.00 69.51 L902.00 67.88 L902.00 66.25 L902.00 64.63 L902.00 63.00 L902.00 61.37 L902.00 59.74 L902.00 58.11 L902.00 56.48 L902.00 54.85 L902.00 53.23 L902.00 51.60 L902.00 49.97 L902.00 48.34 L902.00 46.71 L902.00 45.08 L902.00 43.45 L902.00 41.83 L902.00 40.20 L902.00 38.57 L902.00 36.94 L902.00 35.31 L902.00 33.68 L902.00 32.06 L902.00 30.43 L902.00 28.80 L902.00 27.17 M902.00 613.43 L901.57 611.80 L901.15 610.17 L900.72 608.54 L900.29 606.92 L899.87 605.29 L899.44 603.66 L899.02 602.03 L898.59 600.40 L898.17 598.77 L897.74 597.14 L897.32 595.52 L896.89 593.89 L896.47 592.26 L896.05 590.63 L895.62 589.00 L895.20 587.37 L894.78 585.75 L894.36 584.12 L893.94 582.49 L893.52 580.86 L893.10 579.23 L892.68 577.60 L892.26 575.97 L891.84 574.35 L891.43 572.72 L891.01 571.09 L890.60 569.46 L890.18 567.83 L889.77 566.20 L889.36 564.58 L888.94 562.95 L888.53 561.32 L888.12 559.69 L887.72 558.06 L887.31 556.43 L886.90 554.80 L886.50 553.18 L886.09 551.55 L885.69 549.92 L885.29 548.29 L884.89 546.66 L884.49 545.03 L884.09 543.40 L883.70 541.78 L883.30 540.15 L882.91 538.52 L882.52 536.89 L882.13 535.26 L881.74 533.63 L881.35 532.00 L880.97 530.38 L880.58 528.75 L880.20 527.12 L879.82 525.49 L879.44 523.86 L879.06 522.23 L878.69 520.61 L878.31 518.98 L877.94 517.35 L877.57 515.72 L877.20 514.09 L876.84 512.46 L876.47 510.83 L876.11 509.21 L875.75 507.58 L875.39 505.95 L875.04 504.32 L874.68 502.69 L874.33 501.06 L873.98 499.44 L873.63 497.81 L873.28 496.18 L872.94 494.55 L872.60 492.92 L872.26 491.29 L871.92 489.66 L871.59 488.04 L871.25 486.41 L870.92 484.78 L870.60 483.15 L870.27 481.52 L869.95 479.89 L869.63 478.26 L869.31 476.64 L868.99 475.01 L868.68 473.38 L868.37 471.75 L868.06 470.12 L867.76 468.49 L867.45 466.87 L867.15 465.24 L866.86 463.61 L866.56 461.98 L866.27 460.35 L865.98 458.72 L865.69 457.09 L865.41 455.47 L865.13 453.84 L864.85 452.21 L864.57 450.58 L864.30 448.95 L864.03 447.32 L863.77 445.69 L863.50 444.07 L863.24 442.44 L862.98 440.81 L862.73 439.18 L862.48 437.55 L862.23 435.92 L861.98 434.30 L861.74 432.67 L861.50 431.04 L861.26 429.41 L861.03 427.78 L860.80 426.15 L860.57 424.52 L860.34 422.90 L860.12 421.27 L859.91 419.64 L859.69 418.01 L859.48 416.38 L859.27 414.75 L859.07 413.12 L858.86 411.50 L858.67 409.87 L858.47 408.24 L858.28 406.61 L858.09 404.98 L857.90 403.35 L857.72 401.73 L857.54 400.10 L857.37 398.47 L857.20 396.84 L857.03 395.21 L856.86 393.58 L856.70 391.95 L856.54 390.33 L856.39 388.70 L856.24 387.07 L856.09 385.44 L855.95 383.81 L855.81 382.18 L855.67 380.55 L855.54 378.93 L855.41 377.30 L855.28 375.67 L855.16 374.04 L855.04 372.41 L854.92 370.78 L854.81 369.16 L854.70 367.53 L854.60 365.90 L854.49 364.27 L854.40 362.64 L854.30 361.01 L854.21 359.38 L854.13 357.76 L854.04 356.13 L853.96 354.50 L853.89 352.87 L853.82 351.24 L853.75 349.61 L853.68 347.98 L853.62 346.36 L853.56 344.73 L853.51 343.10 L853.46 341.47 L853.41 339.84 L853.37 338.21 L853.33 336.59 L853.30 334.96 L853.26 333.33 L853.24 331.70 L853.21 330.07 L853.19 328.44 L853.17 326.81 L853.16 325.19 L853.15 323.56 L853.15 321.93 L853.14 320.30 L853.15 318.67 L853.15 317.04 L853.16 315.41 L853.17 313.79 L853.19 312.16 L853.21 310.53 L853.24 308.90 L853.26 307.27 L853.30 305.64 L853.33 304.01 L853.37 302.39 L853.41 300.76 L853.46 299.13 L853.51 297.50 L853.56 295.87 L853.62 294.24 L853.68 292.62 L853.75 290.99 L853.82 289.36 L853.89 287.73 L853.96 286.10 L854.04 284.47 L854.13 282.84 L854.21 281.22 L854.30 279.59 L854.40 277.96 L854.49 276.33 L854.60 274.70 L854.70 273.07 L854.81 271.44 L854.92 269.82 L855.04 268.19 L855.16 266.56 L855.28 264.93 L855.41 263.30 L855.54 261.67 L855.67 260.05 L855.81 258.42 L855.95 256.79 L856.09 255.16 L856.24 253.53 L856.39 251.90 L856.54 250.27 L856.70 248.65 L856.86 247.02 L857.03 245.39 L857.20 243.76 L857.37 242.13 L857.54 240.50 L857.72 238.88 L857.90 237.25 L858.09 235.62 L858.28 233.99 L858.47 232.36 L858.67 230.73 L858.86 229.10 L859.07 227.48 L859.27 225.85 L859.48 224.22 L859.69 222.59 L859.91 220.96 L860.12 219.33 L860.34 217.70 L860.57 216.08 L860.80 214.45 L861.03 212.82 L861.26 211.19 L861.50 209.56 L861.74 207.93 L861.98 206.31 L862.23 204.68 L862.48 203.05 L862.73 201.42 L862.98 199.79 L863.24 198.16 L863.50 196.53 L863.77 194.91 L864.03 193.28 L864.30 191.65 L864.57 190.02 L864.85 188.39 L865.13 186.76 L865.41 185.13 L865.69 183.51 L865.98 181.88 L866.27 180.25 L866.56 178.62 L866.86 176.99 L867.15 175.36 L867.45 173.74 L867.76 172.11 L868.06 170.48 L868.37 168.85 L868.68 167.22 L868.99 165.59 L869.31 163.96 L869.63 162.34 L869.95 160.71 L870.27 159.08 L870.60 157.45 L870.92 155.82 L871.25 154.19 L871.59 152.56 L871.92 150.94 L872.26 149.31 L872.60 147.68 L872.94 146.05 L873.28 144.42 L873.63 142.79 L873.98 141.16 L874.33 139.54 L874.68 137.91 L875.04 136.28 L875.39 134.65 L875.75 133.02 L876.11 131.39 L876.47 129.77 L876.84 128.14 L877.20 126.51 L877.57 124.88 L877.94 123.25 L878.31 121.62 L878.69 119.99 L879.06 118.37 L879.44 116.74 L879.82 115.11 L880.20 113.48 L880.58 111.85 L880.97 110.22 L881.35 108.59 L881.74 106.97 L882.13 105.34 L882.52 103.71 L882.91 102.08 L883.30 100.45 L883.70 98.82 L884.09 97.20 L884.49 95.57 L884.89 93.94 L885.29 92.31 L885.69 90.68 L886.09 89.05 L886.50 87.42 L886.90 85.80 L887.31 84.17 L887.72 82.54 L888.12 80.91 L888.53 79.28 L888.94 77.65 L889.36 76.03 L889.77 74.40 L890.18 72.77 L890.60 71.14 L891.01 69.51 L891.43 67.88 L891.84 66.25 L892.26 64.63 L892.68 63.00 L893.10 61.37 L893.52 59.74 L893.94 58.11 L894.36 56.48 L894.78 54.85 L895.20 53.23 L895.62 51.60 L896.05 49.97 L896.47 48.34 L896.89 46.71 L897.32 45.08 L897.74 43.45 L898.17 41.83 L898.59 40.20 L899.02 38.57 L899.44 36.94 L899.87 35.31 L900.29 33.68 L900.72 32.06 L901.15 30.43 L901.57 28.80 L902.00 27.17 M902.00 613.43 L901.15 611.80 L900.29 610.17 L899.44 608.54 L898.59 606.92 L897.74 605.29 L896.89 603.66 L896.03 602.03 L895.18 600.40 L894.33 598.77 L893.48 597.14 L892.63 595.52 L891.79 593.89 L890.94 592.26 L890.09 590.63 L889.25 589.00 L888.40 587.37 L887.56 585.75 L886.71 584.12 L885.87 582.49 L885.03 580.86 L884.19 579.23 L883.36 577.60 L882.52 575.97 L881.68 574.35 L880.85 572.72 L880.02 571.09 L879.19 569.46 L878.36 567.83 L877.54 566.20 L876.71 564.58 L875.89 562.95 L875.07 561.32 L874.25 559.69 L873.43 558.06 L872.62 556.43 L871.81 554.80 L871.00 553.18 L870.19 551.55 L869.38 549.92 L868.58 548.29 L867.78 546.66 L866.98 545.03 L866.19 543.40 L865.40 541.78 L864.61 540.15 L863.82 538.52 L863.04 536.89 L862.26 535.26 L861.48 533.63 L860.71 532.00 L859.93 530.38 L859.17 528.75 L858.40 527.12 L857.64 525.49 L856.88 523.86 L856.13 522.23 L855.38 520.61 L854.63 518.98 L853.89 517.35 L853.14 515.72 L852.41 514.09 L851.68 512.46 L850.95 510.83 L850.22 509.21 L849.50 507.58 L848.78 505.95 L848.07 504.32 L847.36 502.69 L846.66 501.06 L845.96 499.44 L845.26 497.81 L844.57 496.18 L843.88 494.55 L843.20 492.92 L842.52 491.29 L841.84 489.66 L841.17 488.04 L840.51 486.41 L839.85 484.78 L839.19 483.15 L838.54 481.52 L837.90 479.89 L837.26 478.26 L836.62 476.64 L835.99 475.01 L835.36 473.38 L834.74 471.75 L834.12 470.12 L833.51 468.49 L832.91 466.87 L832.31 465.24 L831.71 463.61 L831.12 461.98 L830.54 460.35 L829.96 458.72 L829.39 457.09 L828.82 455.47 L828.26 453.84 L827.70 452.21 L827.15 450.58 L826.60 448.95 L826.07 447.32 L825.53 445.69 L825.00 444.07 L824.48 442.44 L823.97 440.81 L823.46 439.18 L822.95 437.55 L822.45 435.92 L821.96 434.30 L821.47 432.67 L820.99 431.04 L820.52 429.41 L820.05 427.78 L819.59 426.15 L819.14 424.52 L818.69 422.90 L818.25 421.27 L817.81 419.64 L817.38 418.01 L816.96 416.38 L816.54 414.75 L816.13 413.12 L815.73 411.50 L815.33 409.87 L814.94 408.24 L814.56 406.61 L814.18 404.98 L813.81 403.35 L813.44 401.73 L813.09 400.10 L812.74 398.47 L812.39 396.84 L812.06 395.21 L811.73 393.58 L811.40 391.95 L811.09 390.33 L810.78 388.70 L810.48 387.07 L810.18 385.44 L809.89 383.81 L809.61 382.18 L809.34 380.55 L809.07 378.93 L808.81 377.30 L808.56 375.67 L808.31 374.04 L808.08 372.41 L807.84 370.78 L807.62 369.16 L807.40 367.53 L807.19 365.90 L806.99 364.27 L806.79 362.64 L806.61 361.01 L806.43 359.38 L806.25 357.76 L806.09 356.13 L805.93 354.50 L805.77 352.87 L805.63 351.24 L805.49 349.61 L805.36 347.98 L805.24 346.36 L805.13 344.73 L805.02 343.10 L804.92 341.47 L804.83 339.84 L804.74 338.21 L804.66 336.59 L804.59 334.96 L804.53 333.33 L804.47 331.70 L804.42 330.07 L804.38 328.44 L804.35 326.81 L804.32 325.19 L804.30 323.56 L804.29 321.93 L804.29 320.30 L804.29 318.67 L804.30 317.04 L804.32 315.41 L804.35 313.79 L804.38 312.16 L804.42 310.53 L804.47 308.90 L804.53 307.27 L804.59 305.64 L804.66 304.01 L804.74 302.39 L804.83 300.76 L804.92 299.13 L805.02 297.50 L805.13 295.87 L805.24 294.24 L805.36 292.62 L805.49 290.99 L805.63 289.36 L805.77 287.73 L805.93 286.10 L806.09 284.47 L806.25 282.84 L806.43 281.22 L806.61 279.59 L806.79 277.96 L806.99 276.33 L807.19 274.70 L807.40 273.07 L807.62 271.44 L807.84 269.82 L808.08 268.19 L808.31 266.56 L808.56 264.93 L808.81 263.30 L809.07 261.67 L809.34 260.05 L809.61 258.42 L809.89 256.79 L810.18 255.16 L810.48 253.53 L810.78 251.90 L811.09 250.27 L811.40 248.65 L811.73 247.02 L812.06 245.39 L812.39 243.76 L812.74 242.13 L813.09 240.50 L813.44 238.88 L813.81 237.25 L814.18 235.62 L814.56 233.99 L814.94 232.36 L815.33 230.73 L815.73 229.10 L816.13 227.48 L816.54 225.85 L816.96 224.22 L817.38 222.59 L817.81 220.96 L818.25 219.33 L818.69 217.70 L819.14 216.08 L819.59 214.45 L820.05 212.82 L820.52 211.19 L820.99 209.56 L821.47 207.93 L821.96 206.31 L822.45 204.68 L822.95 203.05 L823.46 201.42 L823.97 199.79 L824.48 198.16 L825.00 196.53 L825.53 194.91 L826.07 193.28 L826.60 191.65 L827.15 190.02 L827.70 188.39 L828.26 186.76 L828.82 185.13 L829.39 183.51 L829.96 181.88 L830.54 180.25 L831.12 178.62 L831.71 176.99 L832.31 175.36 L832.91 173.74 L833.51 172.11 L834.12 170.48 L834.74 168.85 L835.36 167.22 L835.99 165.59 L836.62 163.96 L837.26 162.34 L837.90 160.71 L838.54 159.08 L839.19 157.45 L839.85 155.82 L840.51 154.19 L841.17 152.56 L841.84 150.94 L842.52 149.31 L843.20 147.68 L843.88 146.05 L844.57 144.42 L845.26 142.79 L845.96 141.16 L846.66 139.54 L847.36 137.91 L848.07 136.28 L848.78 134.65 L849.50 133.02 L850.22 131.39 L850.95 129.77 L851.68 128.14 L852.41 126.51 L853.14 124.88 L853.89 123.25 L854.63 121.62 L855.38 119.99 L856.13 118.37 L856.88 116.74 L857.64 115.11 L858.40 113.48 L859.17 111.85 L859.93 110.22 L860.71 108.59 L861.48 106.97 L862.26 105.34 L863.04 103.71 L863.82 102.08 L864.61 100.45 L865.40 98.82 L866.19 97.20 L866.98 95.57 L867.78 93.94 L868.58 92.31 L869.38 90.68 L870.19 89.05 L871.00 87.42 L871.81 85.80 L872.62 84.17 L873.43 82.54 L874.25 80.91 L875.07 79.28 L875.89 77.65 L876.71 76.03 L877.54 74.40 L878.36 72.77 L879.19 71.14 L880.02 69.51 L880.85 67.88 L881.68 66.25 L882.52 64.63 L883.36 63.00 L884.19 61.37 L885.03 59.74 L885.87 58.11 L886.71 56.48 L887.56 54.85 L888.40 53.23 L889.25 51.60 L890.09 49.97 L890.94 48.34 L891.79 46.71 L892.63 45.08 L893.48 43.45 L894.33 41.83 L895.18 40.20 L896.03 38.57 L896.89 36.94 L897.74 35.31 L898.59 33.68 L899.44 32.06 L900.29 30.43 L901.15 28.80 L902.00 27.17 M902.00 613.43 L900.72 611.80 L899.44 610.17 L898.16 608.54 L896.88 606.92 L895.61 605.29 L894.33 603.66 L893.05 602.03 L891.78 600.40 L890.50 598.77 L889.23 597.14 L887.95 595.52 L886.68 593.89 L885.41 592.26 L884.14 590.63 L882.87 589.00 L881.60 587.37 L880.34 585.75 L879.07 584.12 L877.81 582.49 L876.55 580.86 L875.29 579.23 L874.03 577.60 L872.78 575.97 L871.53 574.35 L870.28 572.72 L869.03 571.09 L867.79 569.46 L866.54 567.83 L865.30 566.20 L864.07 564.58 L862.83 562.95 L861.60 561.32 L860.37 559.69 L859.15 558.06 L857.93 556.43 L856.71 554.80 L855.49 553.18 L854.28 551.55 L853.08 549.92 L851.87 548.29 L850.67 546.66 L849.48 545.03 L848.28 543.40 L847.10 541.78 L845.91 540.15 L844.73 538.52 L843.56 536.89 L842.39 535.26 L841.22 533.63 L840.06 532.00 L838.90 530.38 L837.75 528.75 L836.60 527.12 L835.46 525.49 L834.32 523.86 L833.19 522.23 L832.07 520.61 L830.94 518.98 L829.83 517.35 L828.72 515.72 L827.61 514.09 L826.51 512.46 L825.42 510.83 L824.33 509.21 L823.25 507.58 L822.17 505.95 L821.11 504.32 L820.04 502.69 L818.98 501.06 L817.93 499.44 L816.89 497.81 L815.85 496.18 L814.82 494.55 L813.79 492.92 L812.78 491.29 L811.77 489.66 L810.76 488.04 L809.76 486.41 L808.77 484.78 L807.79 483.15 L806.81 481.52 L805.84 479.89 L804.88 478.26 L803.93 476.64 L802.98 475.01 L802.04 473.38 L801.11 471.75 L800.19 470.12 L799.27 468.49 L798.36 466.87 L797.46 465.24 L796.57 463.61 L795.69 461.98 L794.81 460.35 L793.94 458.72 L793.08 457.09 L792.23 455.47 L791.39 453.84 L790.55 452.21 L789.72 450.58 L788.91 448.95 L788.10 447.32 L787.30 445.69 L786.51 444.07 L785.72 442.44 L784.95 440.81 L784.18 439.18 L783.43 437.55 L782.68 435.92 L781.94 434.30 L781.21 432.67 L780.49 431.04 L779.78 429.41 L779.08 427.78 L778.39 426.15 L777.71 424.52 L777.03 422.90 L776.37 421.27 L775.72 419.64 L775.07 418.01 L774.44 416.38 L773.81 414.75 L773.20 413.12 L772.59 411.50 L772.00 409.87 L771.41 408.24 L770.83 406.61 L770.27 404.98 L769.71 403.35 L769.17 401.73 L768.63 400.10 L768.11 398.47 L767.59 396.84 L767.09 395.21 L766.59 393.58 L766.11 391.95 L765.63 390.33 L765.17 388.70 L764.72 387.07 L764.27 385.44 L763.84 383.81 L763.42 382.18 L763.01 380.55 L762.61 378.93 L762.22 377.30 L761.84 375.67 L761.47 374.04 L761.11 372.41 L760.77 370.78 L760.43 369.16 L760.10 367.53 L759.79 365.90 L759.48 364.27 L759.19 362.64 L758.91 361.01 L758.64 359.38 L758.38 357.76 L758.13 356.13 L757.89 354.50 L757.66 352.87 L757.45 351.24 L757.24 349.61 L757.04 347.98 L756.86 346.36 L756.69 344.73 L756.53 343.10 L756.38 341.47 L756.24 339.84 L756.11 338.21 L755.99 336.59 L755.89 334.96 L755.79 333.33 L755.71 331.70 L755.64 330.07 L755.57 328.44 L755.52 326.81 L755.49 325.19 L755.46 323.56 L755.44 321.93 L755.43 320.30 L755.44 318.67 L755.46 317.04 L755.49 315.41 L755.52 313.79 L755.57 312.16 L755.64 310.53 L755.71 308.90 L755.79 307.27 L755.89 305.64 L755.99 304.01 L756.11 302.39 L756.24 300.76 L756.38 299.13 L756.53 297.50 L756.69 295.87 L756.86 294.24 L757.04 292.62 L757.24 290.99 L757.45 289.36 L757.66 287.73 L757.89 286.10 L758.13 284.47 L758.38 282.84 L758.64 281.22 L758.91 279.59 L759.19 277.96 L759.48 276.33 L759.79 274.70 L760.10 273.07 L760.43 271.44 L760.77 269.82 L761.11 268.19 L761.47 266.56 L761.84 264.93 L762.22 263.30 L762.61 261.67 L763.01 260.05 L763.42 258.42 L763.84 256.79 L764.27 255.16 L764.72 253.53 L765.17 251.90 L765.63 250.27 L766.11 248.65 L766.59 247.02 L767.09 245.39 L767.59 243.76 L768.11 242.13 L768.63 240.50 L769.17 238.88 L769.71 237.25 L770.27 235.62 L770.83 233.99 L771.41 232.36 L772.00 230.73 L772.59 229.10 L773.20 227.48 L773.81 225.85 L774.44 224.22 L775.07 222.59 L775.72 220.96 L776.37 219.33 L777.03 217.70 L777.71 216.08 L778.39 214.45 L779.08 212.82 L779.78 211.19 L780.49 209.56 L781.21 207.93 L781.94 206.31 L782.68 204.68 L783.43 203.05 L784.18 201.42 L784.95 199.79 L785.72 198.16 L786.51 196.53 L787.30 194.91 L788.10 193.28 L788.91 191.65 L789.72 190.02 L790.55 188.39 L791.39 186.76 L792.23 185.13 L793.08 183.51 L793.94 181.88 L794.81 180.25 L795.69 178.62 L796.57 176.99 L797.46 175.36 L798.36 173.74 L799.27 172.11 L800.19 170.48 L801.11 168.85 L802.04 167.22 L802.98 165.59 L803.93 163.96 L804.88 162.34 L805.84 160.71 L806.81 159.08 L807.79 157.45 L808.77 155.82 L809.76 154.19 L810.76 152.56 L811.77 150.94 L812.78 149.31 L813.79 147.68 L814.82 146.05 L815.85 144.42 L816.89 142.79 L817.93 141.16 L818.98 139.54 L820.04 137.91 L821.11 136.28 L822.17 134.65 L823.25 133.02 L824.33 131.39 L825.42 129.77 L826.51 128.14 L827.61 126.51 L828.72 124.88 L829.83 123.25 L830.94 121.62 L832.07 119.99 L833.19 118.37 L834.32 116.74 L835.46 115.11 L836.60 113.48 L837.75 111.85 L838.90 110.22 L840.06 108.59 L841.22 106.97 L842.39 105.34 L843.56 103.71 L844.73 102.08 L845.91 100.45 L847.10 98.82 L848.28 97.20 L849.48 95.57 L850.67 93.94 L851.87 92.31 L853.08 90.68 L854.28 89.05 L855.49 87.42 L856.71 85.80 L857.93 84.17 L859.15 82.54 L860.37 80.91 L861.60 79.28 L862.83 77.65 L864.07 76.03 L865.30 74.40 L866.54 72.77 L867.79 71.14 L869.03 69.51 L870.28 67.88 L871.53 66.25 L872.78 64.63 L874.03 63.00 L875.29 61.37 L876.55 59.74 L877.81 58.11 L879.07 56.48 L880.34 54.85 L881.60 53.23 L882.87 51.60 L884.14 49.97 L885.41 48.34 L886.68 46.71 L887.95 45.08 L889.23 43.45 L890.50 41.83 L891.78 40.20 L893.05 38.57 L894.33 36.94 L895.61 35.31 L896.88 33.68 L898.16 32.06 L899.44 30.43 L900.72 28.80 L902.00 27.17 M902.00 613.43 L900.29 611.80 L898.59 610.17 L896.88 608.54 L895.18 606.92 L893.48 605.29 L891.77 603.66 L890.07 602.03 L888.37 600.40 L886.67 598.77 L884.97 597.14 L883.27 595.52 L881.57 593.89 L879.88 592.26 L878.18 590.63 L876.49 589.00 L874.80 587.37 L873.12 585.75 L871.43 584.12 L869.75 582.49 L868.07 580.86 L866.39 579.23 L864.71 577.60 L863.04 575.97 L861.37 574.35 L859.70 572.72 L858.04 571.09 L856.38 569.46 L854.72 567.83 L853.07 566.20 L851.42 564.58 L849.78 562.95 L848.13 561.32 L846.50 559.69 L844.86 558.06 L843.24 556.43 L841.61 554.80 L839.99 553.18 L838.38 551.55 L836.77 549.92 L835.16 548.29 L833.56 546.66 L831.97 545.03 L830.38 543.40 L828.79 541.78 L827.22 540.15 L825.64 538.52 L824.08 536.89 L822.52 535.26 L820.96 533.63 L819.41 532.00 L817.87 530.38 L816.33 528.75 L814.80 527.12 L813.28 525.49 L811.77 523.86 L810.26 522.23 L808.75 520.61 L807.26 518.98 L805.77 517.35 L804.29 515.72 L802.82 514.09 L801.35 512.46 L799.89 510.83 L798.44 509.21 L797.00 507.58 L795.57 505.95 L794.14 504.32 L792.72 502.69 L791.31 501.06 L789.91 499.44 L788.52 497.81 L787.14 496.18 L785.76 494.55 L784.39 492.92 L783.04 491.29 L781.69 489.66 L780.35 488.04 L779.02 486.41 L777.70 484.78 L776.39 483.15 L775.08 481.52 L773.79 479.89 L772.51 478.26 L771.24 476.64 L769.98 475.01 L768.72 473.38 L767.48 471.75 L766.25 470.12 L765.03 468.49 L763.82 466.87 L762.62 465.24 L761.43 463.61 L760.25 461.98 L759.08 460.35 L757.92 458.72 L756.77 457.09 L755.64 455.47 L754.51 453.84 L753.40 452.21 L752.30 450.58 L751.21 448.95 L750.13 447.32 L749.06 445.69 L748.01 444.07 L746.96 442.44 L745.93 440.81 L744.91 439.18 L743.90 437.55 L742.91 435.92 L741.92 434.30 L740.95 432.67 L739.99 431.04 L739.04 429.41 L738.11 427.78 L737.18 426.15 L736.27 424.52 L735.38 422.90 L734.49 421.27 L733.62 419.64 L732.76 418.01 L731.92 416.38 L731.08 414.75 L730.26 413.12 L729.45 411.50 L728.66 409.87 L727.88 408.24 L727.11 406.61 L726.36 404.98 L725.62 403.35 L724.89 401.73 L724.18 400.10 L723.47 398.47 L722.79 396.84 L722.11 395.21 L721.46 393.58 L720.81 391.95 L720.18 390.33 L719.56 388.70 L718.96 387.07 L718.37 385.44 L717.79 383.81 L717.23 382.18 L716.68 380.55 L716.14 378.93 L715.62 377.30 L715.12 375.67 L714.63 374.04 L714.15 372.41 L713.69 370.78 L713.24 369.16 L712.80 367.53 L712.38 365.90 L711.98 364.27 L711.59 362.64 L711.21 361.01 L710.85 359.38 L710.50 357.76 L710.17 356.13 L709.85 354.50 L709.55 352.87 L709.26 351.24 L708.99 349.61 L708.73 347.98 L708.48 346.36 L708.25 344.73 L708.04 343.10 L707.84 341.47 L707.65 339.84 L707.48 338.21 L707.32 336.59 L707.18 334.96 L707.06 333.33 L706.94 331.70 L706.85 330.07 L706.77 328.44 L706.70 326.81 L706.65 325.19 L706.61 323.56 L706.59 321.93 L706.58 320.30 L706.59 318.67 L706.61 317.04 L706.65 315.41 L706.70 313.79 L706.77 312.16 L706.85 310.53 L706.94 308.90 L707.06 307.27 L707.18 305.64 L707.32 304.01 L707.48 302.39 L707.65 300.76 L707.84 299.13 L708.04 297.50 L708.25 295.87 L708.48 294.24 L708.73 292.62 L708.99 290.99 L709.26 289.36 L709.55 287.73 L709.85 286.10 L710.17 284.47 L710.50 282.84 L710.85 281.22 L711.21 279.59 L711.59 277.96 L711.98 276.33 L712.38 274.70 L712.80 273.07 L713.24 271.44 L713.69 269.82 L714.15 268.19 L714.63 266.56 L715.12 264.93 L715.62 263.30 L716.14 261.67 L716.68 260.05 L717.23 258.42 L717.79 256.79 L718.37 255.16 L718.96 253.53 L719.56 251.90 L720.18 250.27 L720.81 248.65 L721.46 247.02 L722.11 245.39 L722.79 243.76 L723.47 242.13 L724.18 240.50 L724.89 238.88 L725.62 237.25 L726.36 235.62 L727.11 233.99 L727.88 232.36 L728.66 230.73 L729.45 229.10 L730.26 227.48 L731.08 225.85 L731.92 224.22 L732.76 222.59 L733.62 220.96 L734.49 219.33 L735.38 217.70 L736.27 216.08 L737.18 214.45 L738.11 212.82 L739.04 211.19 L739.99 209.56 L740.95 207.93 L741.92 206.31 L742.91 204.68 L743.90 203.05 L744.91 201.42 L745.93 199.79 L746.96 198.16 L748.01 196.53 L749.06 194.91 L750.13 193.28 L751.21 191.65 L752.30 190.02 L753.40 188.39 L754.51 186.76 L755.64 185.13 L756.77 183.51 L757.92 181.88 L759.08 180.25 L760.25 178.62 L761.43 176.99 L762.62 175.36 L763.82 173.74 L765.03 172.11 L766.25 170.48 L767.48 168.85 L768.72 167.22 L769.98 165.59 L771.24 163.96 L772.51 162.34 L773.79 160.71 L775.08 159.08 L776.39 157.45 L777.70 155.82 L779.02 154.19 L780.35 152.56 L781.69 150.94 L783.04 149.31 L784.39 147.68 L785.76 146.05 L787.14 144.42 L788.52 142.79 L789.91 141.16 L791.31 139.54 L792.72 137.91 L794.14 136.28 L795.57 134.65 L797.00 133.02 L798.44 131.39 L799.89 129.77 L801.35 128.14 L802.82 126.51 L804.29 124.88 L805.77 123.25 L807.26 121.62 L808.75 119.99 L810.26 118.37 L811.77 116.74 L813.28 115.11 L814.80 113.48 L816.33 111.85 L817.87 110.22 L819.41 108.59 L820.96 106.97 L822.52 105.34 L824.08 103.71 L825.64 102.08 L827.22 100.45 L828.79 98.82 L830.38 97.20 L831.97 95.57 L833.56 93.94 L835.16 92.31 L836.77 90.68 L838.38 89.05 L839.99 87.42 L841.61 85.80 L843.24 84.17 L844.86 82.54 L846.50 80.91 L848.13 79.28 L849.78 77.65 L851.42 76.03 L853.07 74.40 L854.72 72.77 L856.38 71.14 L858.04 69.51 L859.70 67.88 L861.37 66.25 L863.04 64.63 L864.71 63.00 L866.39 61.37 L868.07 59.74 L869.75 58.11 L871.43 56.48 L873.12 54.85 L874.80 53.23 L876.49 51.60 L878.18 49.97 L879.88 48.34 L881.57 46.71 L883.27 45.08 L884.97 43.45 L886.67 41.83 L888.37 40.20 L890.07 38.57 L891.77 36.94 L893.48 35.31 L895.18 33.68 L896.88 32.06 L898.59 30.43 L900.29 28.80 L902.00 27.17 M902.00 613.43 L899.87 611.80 L897.74 610.17 L895.61 608.54 L893.47 606.92 L891.34 605.29 L889.22 603.66 L887.09 602.03 L884.96 600.40 L882.83 598.77 L880.71 597.14 L878.59 595.52 L876.47 593.89 L874.35 592.26 L872.23 590.63 L870.12 589.00 L868.00 587.37 L865.89 585.75 L863.79 584.12 L861.68 582.49 L859.58 580.86 L857.48 579.23 L855.39 577.60 L853.30 575.97 L851.21 574.35 L849.13 572.72 L847.05 571.09 L844.98 569.46 L842.90 567.83 L840.84 566.20 L838.78 564.58 L836.72 562.95 L834.67 561.32 L832.62 559.69 L830.58 558.06 L828.55 556.43 L826.51 554.80 L824.49 553.18 L822.47 551.55 L820.46 549.92 L818.45 548.29 L816.45 546.66 L814.46 545.03 L812.47 543.40 L810.49 541.78 L808.52 540.15 L806.55 538.52 L804.60 536.89 L802.64 535.26 L800.70 533.63 L798.76 532.00 L796.84 530.38 L794.92 528.75 L793.01 527.12 L791.10 525.49 L789.21 523.86 L787.32 522.23 L785.44 520.61 L783.57 518.98 L781.71 517.35 L779.86 515.72 L778.02 514.09 L776.19 512.46 L774.37 510.83 L772.55 509.21 L770.75 507.58 L768.96 505.95 L767.18 504.32 L765.40 502.69 L763.64 501.06 L761.89 499.44 L760.15 497.81 L758.42 496.18 L756.70 494.55 L754.99 492.92 L753.29 491.29 L751.61 489.66 L749.94 488.04 L748.27 486.41 L746.62 484.78 L744.98 483.15 L743.36 481.52 L741.74 479.89 L740.14 478.26 L738.55 476.64 L736.97 475.01 L735.40 473.38 L733.85 471.75 L732.31 470.12 L730.79 468.49 L729.27 466.87 L727.77 465.24 L726.28 463.61 L724.81 461.98 L723.35 460.35 L721.90 458.72 L720.47 457.09 L719.05 455.47 L717.64 453.84 L716.25 452.21 L714.87 450.58 L713.51 448.95 L712.16 447.32 L710.83 445.69 L709.51 444.07 L708.20 442.44 L706.91 440.81 L705.64 439.18 L704.38 437.55 L703.13 435.92 L701.90 434.30 L700.69 432.67 L699.49 431.04 L698.30 429.41 L697.13 427.78 L695.98 426.15 L694.84 424.52 L693.72 422.90 L692.62 421.27 L691.53 419.64 L690.45 418.01 L689.39 416.38 L688.35 414.75 L687.33 413.12 L686.32 411.50 L685.33 409.87 L684.35 408.24 L683.39 406.61 L682.45 404.98 L681.52 403.35 L680.61 401.73 L679.72 400.10 L678.84 398.47 L677.99 396.84 L677.14 395.21 L676.32 393.58 L675.51 391.95 L674.72 390.33 L673.95 388.70 L673.19 387.07 L672.46 385.44 L671.74 383.81 L671.03 382.18 L670.35 380.55 L669.68 378.93 L669.03 377.30 L668.40 375.67 L667.78 374.04 L667.19 372.41 L666.61 370.78 L666.05 369.16 L665.51 367.53 L664.98 365.90 L664.47 364.27 L663.99 362.64 L663.52 361.01 L663.06 359.38 L662.63 357.76 L662.21 356.13 L661.82 354.50 L661.44 352.87 L661.08 351.24 L660.73 349.61 L660.41 347.98 L660.10 346.36 L659.81 344.73 L659.55 343.10 L659.30 341.47 L659.06 339.84 L658.85 338.21 L658.65 336.59 L658.48 334.96 L658.32 333.33 L658.18 331.70 L658.06 330.07 L657.96 328.44 L657.87 326.81 L657.81 325.19 L657.76 323.56 L657.73 321.93 L657.73 320.30 L657.73 318.67 L657.76 317.04 L657.81 315.41 L657.87 313.79 L657.96 312.16 L658.06 310.53 L658.18 308.90 L658.32 307.27 L658.48 305.64 L658.65 304.01 L658.85 302.39 L659.06 300.76 L659.30 299.13 L659.55 297.50 L659.81 295.87 L660.10 294.24 L660.41 292.62 L660.73 290.99 L661.08 289.36 L661.44 287.73 L661.82 286.10 L662.21 284.47 L662.63 282.84 L663.06 281.22 L663.52 279.59 L663.99 277.96 L664.47 276.33 L664.98 274.70 L665.51 273.07 L666.05 271.44 L666.61 269.82 L667.19 268.19 L667.78 266.56 L668.40 264.93 L669.03 263.30 L669.68 261.67 L670.35 260.05 L671.03 258.42 L671.74 256.79 L672.46 255.16 L673.19 253.53 L673.95 251.90 L674.72 250.27 L675.51 248.65 L676.32 247.02 L677.14 245.39 L677.99 243.76 L678.84 242.13 L679.72 240.50 L680.61 238.88 L681.52 237.25 L682.45 235.62 L683.39 233.99 L684.35 232.36 L685.33 230.73 L686.32 229.10 L687.33 227.48 L688.35 225.85 L689.39 224.22 L690.45 222.59 L691.53 220.96 L692.62 219.33 L693.72 217.70 L694.84 216.08 L695.98 214.45 L697.13 212.82 L698.30 211.19 L699.49 209.56 L700.69 207.93 L701.90 206.31 L703.13 204.68 L704.38 203.05 L705.64 201.42 L706.91 199.79 L708.20 198.16 L709.51 196.53 L710.83 194.91 L712.16 193.28 L713.51 191.65 L714.87 190.02 L716.25 188.39 L717.64 186.76 L719.05 185.13 L720.47 183.51 L721.90 181.88 L723.35 180.25 L724.81 178.62 L726.28 176.99 L727.77 175.36 L729.27 173.74 L730.79 172.11 L732.31 170.48 L733.85 168.85 L735.40 167.22 L736.97 165.59 L738.55 163.96 L740.14 162.34 L741.74 160.71 L743.36 159.08 L744.98 157.45 L746.62 155.82 L748.27 154.19 L749.94 152.56 L751.61 150.94 L753.29 149.31 L754.99 147.68 L756.70 146.05 L758.42 144.42 L760.15 142.79 L761.89 141.16 L763.64 139.54 L765.40 137.91 L767.18 136.28 L768.96 134.65 L770.75 133.02 L772.55 131.39 L774.37 129.77 L776.19 128.14 L778.02 126.51 L779.86 124.88 L781.71 123.25 L783.57 121.62 L785.44 119.99 L787.32 118.37 L789.21 116.74 L791.10 115.11 L793.01 113.48 L794.92 111.85 L796.84 110.22 L798.76 108.59 L800.70 106.97 L802.64 105.34 L804.60 103.71 L806.55 102.08 L808.52 100.45 L810.49 98.82 L812.47 97.20 L814.46 95.57 L816.45 93.94 L818.45 92.31 L820.46 90.68 L822.47 89.05 L824.49 87.42 L826.51 85.80 L828.55 84.17 L830.58 82.54 L832.62 80.91 L834.67 79.28 L836.72 77.65 L838.78 76.03 L840.84 74.40 L842.90 72.77 L844.98 71.14 L847.05 69.51 L849.13 67.88 L851.21 66.25 L853.30 64.63 L855.39 63.00 L857.48 61.37 L859.58 59.74 L861.68 58.11 L863.79 56.48 L865.89 54.85 L868.00 53.23 L870.12 51.60 L872.23 49.97 L874.35 48.34 L876.47 46.71 L878.59 45.08 L880.71 43.45 L882.83 41.83 L884.96 40.20 L887.09 38.57 L889.22 36.94 L891.34 35.31 L893.47 33.68 L895.61 32.06 L897.74 30.43 L899.87 28.80 L902.00 27.17 M902.00 613.43 L899.44 611.80 L896.88 610.17 L894.33 608.54 L891.77 606.92 L889.21 605.29 L886.66 603.66 L884.10 602.03 L881.55 600.40 L879.00 598.77 L876.45 597.14 L873.90 595.52 L871.36 593.89 L868.82 592.26 L866.28 590.63 L863.74 589.00 L861.20 587.37 L858.67 585.75 L856.14 584.12 L853.62 582.49 L851.10 580.86 L848.58 579.23 L846.07 577.60 L843.56 575.97 L841.05 574.35 L838.56 572.72 L836.06 571.09 L833.57 569.46 L831.09 567.83 L828.61 566.20 L826.13 564.58 L823.66 562.95 L821.20 561.32 L818.75 559.69 L816.30 558.06 L813.85 556.43 L811.42 554.80 L808.99 553.18 L806.57 551.55 L804.15 549.92 L801.74 548.29 L799.34 546.66 L796.95 545.03 L794.57 543.40 L792.19 541.78 L789.82 540.15 L787.46 538.52 L785.11 536.89 L782.77 535.26 L780.44 533.63 L778.12 532.00 L775.80 530.38 L773.50 528.75 L771.21 527.12 L768.92 525.49 L766.65 523.86 L764.38 522.23 L762.13 520.61 L759.89 518.98 L757.66 517.35 L755.43 515.72 L753.23 514.09 L751.03 512.46 L748.84 510.83 L746.66 509.21 L744.50 507.58 L742.35 505.95 L740.21 504.32 L738.08 502.69 L735.97 501.06 L733.87 499.44 L731.78 497.81 L729.70 496.18 L727.64 494.55 L725.59 492.92 L723.55 491.29 L721.53 489.66 L719.52 488.04 L717.53 486.41 L715.55 484.78 L713.58 483.15 L711.63 481.52 L709.69 479.89 L707.77 478.26 L705.86 476.64 L703.96 475.01 L702.09 473.38 L700.22 471.75 L698.37 470.12 L696.54 468.49 L694.73 466.87 L692.92 465.24 L691.14 463.61 L689.37 461.98 L687.62 460.35 L685.88 458.72 L684.16 457.09 L682.46 455.47 L680.77 453.84 L679.10 452.21 L677.45 450.58 L675.81 448.95 L674.20 447.32 L672.59 445.69 L671.01 444.07 L669.44 442.44 L667.90 440.81 L666.37 439.18 L664.85 437.55 L663.36 435.92 L661.88 434.30 L660.42 432.67 L658.98 431.04 L657.56 429.41 L656.16 427.78 L654.78 426.15 L653.41 424.52 L652.07 422.90 L650.74 421.27 L649.43 419.64 L648.14 418.01 L646.87 416.38 L645.62 414.75 L644.39 413.12 L643.18 411.50 L641.99 409.87 L640.82 408.24 L639.67 406.61 L638.54 404.98 L637.43 403.35 L636.33 401.73 L635.26 400.10 L634.21 398.47 L633.18 396.84 L632.17 395.21 L631.18 393.58 L630.21 391.95 L629.27 390.33 L628.34 388.70 L627.43 387.07 L626.55 385.44 L625.68 383.81 L624.84 382.18 L624.02 380.55 L623.22 378.93 L622.44 377.30 L621.68 375.67 L620.94 374.04 L620.23 372.41 L619.53 370.78 L618.86 369.16 L618.21 367.53 L617.58 365.90 L616.97 364.27 L616.38 362.64 L615.82 361.01 L615.28 359.38 L614.75 357.76 L614.26 356.13 L613.78 354.50 L613.32 352.87 L612.89 351.24 L612.48 349.61 L612.09 347.98 L611.72 346.36 L611.38 344.73 L611.05 343.10 L610.75 341.47 L610.48 339.84 L610.22 338.21 L609.99 336.59 L609.77 334.96 L609.58 333.33 L609.42 331.70 L609.27 330.07 L609.15 328.44 L609.05 326.81 L608.97 325.19 L608.91 323.56 L608.88 321.93 L608.87 320.30 L608.88 318.67 L608.91 317.04 L608.97 315.41 L609.05 313.79 L609.15 312.16 L609.27 310.53 L609.42 308.90 L609.58 307.27 L609.77 305.64 L609.99 304.01 L610.22 302.39 L610.48 300.76 L610.75 299.13 L611.05 297.50 L611.38 295.87 L611.72 294.24 L612.09 292.62 L612.48 290.99 L612.89 289.36 L613.32 287.73 L613.78 286.10 L614.26 284.47 L614.75 282.84 L615.28 281.22 L615.82 279.59 L616.38 277.96 L616.97 276.33 L617.58 274.70 L618.21 273.07 L618.86 271.44 L619.53 269.82 L620.23 268.19 L620.94 266.56 L621.68 264.93 L622.44 263.30 L623.22 261.67 L624.02 260.05 L624.84 258.42 L625.68 256.79 L626.55 255.16 L627.43 253.53 L628.34 251.90 L629.27 250.27 L630.21 248.65 L631.18 247.02 L632.17 245.39 L633.18 243.76 L634.21 242.13 L635.26 240.50 L636.33 238.88 L637.43 237.25 L638.54 235.62 L639.67 233.99 L640.82 232.36 L641.99 230.73 L643.18 229.10 L644.39 227.48 L645.62 225.85 L646.87 224.22 L648.14 222.59 L649.43 220.96 L650.74 219.33 L652.07 217.70 L653.41 216.08 L654.78 214.45 L656.16 212.82 L657.56 211.19 L658.98 209.56 L660.42 207.93 L661.88 206.31 L663.36 204.68 L664.85 203.05 L666.37 201.42 L667.90 199.79 L669.44 198.16 L671.01 196.53 L672.59 194.91 L674.20 193.28 L675.81 191.65 L677.45 190.02 L679.10 188.39 L680.77 186.76 L682.46 185.13 L684.16 183.51 L685.88 181.88 L687.62 180.25 L689.37 178.62 L691.14 176.99 L692.92 175.36 L694.73 173.74 L696.54 172.11 L698.37 170.48 L700.22 168.85 L702.09 167.22 L703.96 165.59 L705.86 163.96 L707.77 162.34 L709.69 160.71 L711.63 159.08 L713.58 157.45 L715.55 155.82 L717.53 154.19 L719.52 152.56 L721.53 150.94 L723.55 149.31 L725.59 147.68 L727.64 146.05 L729.70 144.42 L731.78 142.79 L733.87 141.16 L735.97 139.54 L738.08 137.91 L740.21 136.28 L742.35 134.65 L744.50 133.02 L746.66 131.39 L748.84 129.77 L751.03 128.14 L753.23 126.51 L755.43 124.88 L757.66 123.25 L759.89 121.62 L762.13 119.99 L764.38 118.37 L766.65 116.74 L768.92 115.11 L771.21 113.48 L773.50 111.85 L775.80 110.22 L778.12 108.59 L780.44 106.97 L782.77 105.34 L785.11 103.71 L787.46 102.08 L789.82 100.45 L792.19 98.82 L794.57 97.20 L796.95 95.57 L799.34 93.94 L801.74 92.31 L804.15 90.68 L806.57 89.05 L808.99 87.42 L811.42 85.80 L813.85 84.17 L816.30 82.54 L818.75 80.91 L821.20 79.28 L823.66 77.65 L826.13 76.03 L828.61 74.40 L831.09 72.77 L833.57 71.14 L836.06 69.51 L838.56 67.88 L841.05 66.25 L843.56 64.63 L846.07 63.00 L848.58 61.37 L851.10 59.74 L853.62 58.11 L856.14 56.48 L858.67 54.85 L861.20 53.23 L863.74 51.60 L866.28 49.97 L868.82 48.34 L871.36 46.71 L873.90 45.08 L876.45 43.45 L879.00 41.83 L881.55 40.20 L884.10 38.57 L886.66 36.94 L889.21 35.31 L891.77 33.68 L894.33 32.06 L896.88 30.43 L899.44 28.80 L902.00 27.17 M902.00 613.43 L899.02 611.80 L896.03 610.17 L893.05 608.54 L890.06 606.92 L887.08 605.29 L884.10 603.66 L881.12 602.03 L878.14 600.40 L875.17 598.77 L872.19 597.14 L869.22 595.52 L866.25 593.89 L863.29 592.26 L860.32 590.63 L857.36 589.00 L854.40 587.37 L851.45 585.75 L848.50 584.12 L845.56 582.49 L842.61 580.86 L839.68 579.23 L836.75 577.60 L833.82 575.97 L830.90 574.35 L827.98 572.72 L825.07 571.09 L822.17 569.46 L819.27 567.83 L816.37 566.20 L813.49 564.58 L810.61 562.95 L807.74 561.32 L804.87 559.69 L802.01 558.06 L799.16 556.43 L796.32 554.80 L793.49 553.18 L790.66 551.55 L787.84 549.92 L785.03 548.29 L782.23 546.66 L779.44 545.03 L776.66 543.40 L773.89 541.78 L771.13 540.15 L768.38 538.52 L765.63 536.89 L762.90 535.26 L760.18 533.63 L757.47 532.00 L754.77 530.38 L752.08 528.75 L749.41 527.12 L746.74 525.49 L744.09 523.86 L741.45 522.23 L738.82 520.61 L736.20 518.98 L733.60 517.35 L731.01 515.72 L728.43 514.09 L725.86 512.46 L723.31 510.83 L720.78 509.21 L718.25 507.58 L715.74 505.95 L713.25 504.32 L710.76 502.69 L708.30 501.06 L705.85 499.44 L703.41 497.81 L700.99 496.18 L698.58 494.55 L696.19 492.92 L693.81 491.29 L691.45 489.66 L689.11 488.04 L686.78 486.41 L684.47 484.78 L682.18 483.15 L679.90 481.52 L677.64 479.89 L675.39 478.26 L673.17 476.64 L670.96 475.01 L668.77 473.38 L666.59 471.75 L664.44 470.12 L662.30 468.49 L660.18 466.87 L658.08 465.24 L656.00 463.61 L653.93 461.98 L651.89 460.35 L649.86 458.72 L647.86 457.09 L645.87 455.47 L643.90 453.84 L641.95 452.21 L640.02 450.58 L638.12 448.95 L636.23 447.32 L634.36 445.69 L632.51 444.07 L630.69 442.44 L628.88 440.81 L627.09 439.18 L625.33 437.55 L623.58 435.92 L621.86 434.30 L620.16 432.67 L618.48 431.04 L616.82 429.41 L615.19 427.78 L613.57 426.15 L611.98 424.52 L610.41 422.90 L608.86 421.27 L607.34 419.64 L605.83 418.01 L604.35 416.38 L602.89 414.75 L601.46 413.12 L600.05 411.50 L598.66 409.87 L597.29 408.24 L595.95 406.61 L594.63 404.98 L593.33 403.35 L592.06 401.73 L590.81 400.10 L589.58 398.47 L588.38 396.84 L587.20 395.21 L586.05 393.58 L584.92 391.95 L583.81 390.33 L582.73 388.70 L581.67 387.07 L580.64 385.44 L579.63 383.81 L578.65 382.18 L577.69 380.55 L576.75 378.93 L575.84 377.30 L574.96 375.67 L574.10 374.04 L573.26 372.41 L572.45 370.78 L571.67 369.16 L570.91 367.53 L570.17 365.90 L569.46 364.27 L568.78 362.64 L568.12 361.01 L567.49 359.38 L566.88 357.76 L566.30 356.13 L565.74 354.50 L565.21 352.87 L564.71 351.24 L564.23 349.61 L563.77 347.98 L563.34 346.36 L562.94 344.73 L562.56 343.10 L562.21 341.47 L561.89 339.84 L561.59 338.21 L561.32 336.59 L561.07 334.96 L560.85 333.33 L560.65 331.70 L560.48 330.07 L560.34 328.44 L560.22 326.81 L560.13 325.19 L560.07 323.56 L560.03 321.93 L560.01 320.30 L560.03 318.67 L560.07 317.04 L560.13 315.41 L560.22 313.79 L560.34 312.16 L560.48 310.53 L560.65 308.90 L560.85 307.27 L561.07 305.64 L561.32 304.01 L561.59 302.39 L561.89 300.76 L562.21 299.13 L562.56 297.50 L562.94 295.87 L563.34 294.24 L563.77 292.62 L564.23 290.99 L564.71 289.36 L565.21 287.73 L565.74 286.10 L566.30 284.47 L566.88 282.84 L567.49 281.22 L568.12 279.59 L568.78 277.96 L569.46 276.33 L570.17 274.70 L570.91 273.07 L571.67 271.44 L572.45 269.82 L573.26 268.19 L574.10 266.56 L574.96 264.93 L575.84 263.30 L576.75 261.67 L577.69 260.05 L578.65 258.42 L579.63 256.79 L580.64 255.16 L581.67 253.53 L582.73 251.90 L583.81 250.27 L584.92 248.65 L586.05 247.02 L587.20 245.39 L588.38 243.76 L589.58 242.13 L590.81 240.50 L592.06 238.88 L593.33 237.25 L594.63 235.62 L595.95 233.99 L597.29 232.36 L598.66 230.73 L600.05 229.10 L601.46 227.48 L602.89 225.85 L604.35 224.22 L605.83 222.59 L607.34 220.96 L608.86 219.33 L610.41 217.70 L611.98 216.08 L613.57 214.45 L615.19 212.82 L616.82 211.19 L618.48 209.56 L620.16 207.93 L621.86 206.31 L623.58 204.68 L625.33 203.05 L627.09 201.42 L628.88 199.79 L630.69 198.16 L632.51 196.53 L634.36 194.91 L636.23 193.28 L638.12 191.65 L640.02 190.02 L641.95 188.39 L643.90 186.76 L645.87 185.13 L647.86 183.51 L649.86 181.88 L651.89 180.25 L653.93 178.62 L656.00 176.99 L658.08 175.36 L660.18 173.74 L662.30 172.11 L664.44 170.48 L666.59 168.85 L668.77 167.22 L670.96 165.59 L673.17 163.96 L675.39 162.34 L677.64 160.71 L679.90 159.08 L682.18 157.45 L684.47 155.82 L686.78 154.19 L689.11 152.56 L691.45 150.94 L693.81 149.31 L696.19 147.68 L698.58 146.05 L700.99 144.42 L703.41 142.79 L705.85 141.16 L708.30 139.54 L710.76 137.91 L713.25 136.28 L715.74 134.65 L718.25 133.02 L720.78 131.39 L723.31 129.77 L725.86 128.14 L728.43 126.51 L731.01 124.88 L733.60 123.25 L736.20 121.62 L738.82 119.99 L741.45 118.37 L744.09 116.74 L746.74 115.11 L749.41 113.48 L752.08 111.85 L754.77 110.22 L757.47 108.59 L760.18 106.97 L762.90 105.34 L765.63 103.71 L768.38 102.08 L771.13 100.45 L773.89 98.82 L776.66 97.20 L779.44 95.57 L782.23 93.94 L785.03 92.31 L787.84 90.68 L790.66 89.05 L793.49 87.42 L796.32 85.80 L799.16 84.17 L802.01 82.54 L804.87 80.91 L807.74 79.28 L810.61 77.65 L813.49 76.03 L816.37 74.40 L819.27 72.77 L822.17 71.14 L825.07 69.51 L827.98 67.88 L830.90 66.25 L833.82 64.63 L836.75 63.00 L839.68 61.37 L842.61 59.74 L845.56 58.11 L848.50 56.48 L851.45 54.85 L854.40 53.23 L857.36 51.60 L860.32 49.97 L863.29 48.34 L866.25 46.71 L869.22 45.08 L872.19 43.45 L875.17 41.83 L878.14 40.20 L881.12 38.57 L884.10 36.94 L887.08 35.31 L890.06 33.68 L893.05 32.06 L896.03 30.43 L899.02 28.80 L902.00 27.17 M902.00 613.43 L898.59 611.80 L895.18 610.17 L891.77 608.54 L888.36 606.92 L884.95 605.29 L881.55 603.66 L878.14 602.03 L874.74 600.40 L871.34 598.77 L867.94 597.14 L864.54 595.52 L861.15 593.89 L857.76 592.26 L854.37 590.63 L850.99 589.00 L847.61 587.37 L844.23 585.75 L840.86 584.12 L837.49 582.49 L834.13 580.86 L830.78 579.23 L827.42 577.60 L824.08 575.97 L820.74 574.35 L817.41 572.72 L814.08 571.09 L810.76 569.46 L807.45 567.83 L804.14 566.20 L800.84 564.58 L797.55 562.95 L794.27 561.32 L791.00 559.69 L787.73 558.06 L784.47 556.43 L781.22 554.80 L777.98 553.18 L774.75 551.55 L771.53 549.92 L768.32 548.29 L765.12 546.66 L761.94 545.03 L758.76 543.40 L755.59 541.78 L752.43 540.15 L749.29 538.52 L746.15 536.89 L743.03 535.26 L739.92 533.63 L736.82 532.00 L733.74 530.38 L730.67 528.75 L727.61 527.12 L724.56 525.49 L721.53 523.86 L718.51 522.23 L715.51 520.61 L712.52 518.98 L709.54 517.35 L706.58 515.72 L703.63 514.09 L700.70 512.46 L697.79 510.83 L694.89 509.21 L692.00 507.58 L689.13 505.95 L686.28 504.32 L683.45 502.69 L680.63 501.06 L677.82 499.44 L675.04 497.81 L672.27 496.18 L669.52 494.55 L666.79 492.92 L664.07 491.29 L661.37 489.66 L658.70 488.04 L656.04 486.41 L653.40 484.78 L650.77 483.15 L648.17 481.52 L645.59 479.89 L643.02 478.26 L640.48 476.64 L637.95 475.01 L635.45 473.38 L632.96 471.75 L630.50 470.12 L628.06 468.49 L625.63 466.87 L623.23 465.24 L620.85 463.61 L618.49 461.98 L616.16 460.35 L613.84 458.72 L611.55 457.09 L609.28 455.47 L607.03 453.84 L604.80 452.21 L602.60 450.58 L600.42 448.95 L598.26 447.32 L596.13 445.69 L594.01 444.07 L591.93 442.44 L589.86 440.81 L587.82 439.18 L585.80 437.55 L583.81 435.92 L581.84 434.30 L579.90 432.67 L577.98 431.04 L576.08 429.41 L574.21 427.78 L572.37 426.15 L570.55 424.52 L568.75 422.90 L566.98 421.27 L565.24 419.64 L563.52 418.01 L561.83 416.38 L560.16 414.75 L558.52 413.12 L556.91 411.50 L555.32 409.87 L553.76 408.24 L552.22 406.61 L550.72 404.98 L549.23 403.35 L547.78 401.73 L546.35 400.10 L544.95 398.47 L543.58 396.84 L542.23 395.21 L540.91 393.58 L539.62 391.95 L538.36 390.33 L537.12 388.70 L535.91 387.07 L534.73 385.44 L533.58 383.81 L532.45 382.18 L531.36 380.55 L530.29 378.93 L529.25 377.30 L528.24 375.67 L527.25 374.04 L526.30 372.41 L525.37 370.78 L524.48 369.16 L523.61 367.53 L522.77 365.90 L521.96 364.27 L521.18 362.64 L520.42 361.01 L519.70 359.38 L519.01 357.76 L518.34 356.13 L517.70 354.50 L517.10 352.87 L516.52 351.24 L515.97 349.61 L515.45 347.98 L514.96 346.36 L514.50 344.73 L514.07 343.10 L513.67 341.47 L513.30 339.84 L512.96 338.21 L512.65 336.59 L512.36 334.96 L512.11 333.33 L511.89 331.70 L511.70 330.07 L511.53 328.44 L511.40 326.81 L511.29 325.19 L511.22 323.56 L511.17 321.93 L511.16 320.30 L511.17 318.67 L511.22 317.04 L511.29 315.41 L511.40 313.79 L511.53 312.16 L511.70 310.53 L511.89 308.90 L512.11 307.27 L512.36 305.64 L512.65 304.01 L512.96 302.39 L513.30 300.76 L513.67 299.13 L514.07 297.50 L514.50 295.87 L514.96 294.24 L515.45 292.62 L515.97 290.99 L516.52 289.36 L517.10 287.73 L517.70 286.10 L518.34 284.47 L519.01 282.84 L519.70 281.22 L520.42 279.59 L521.18 277.96 L521.96 276.33 L522.77 274.70 L523.61 273.07 L524.48 271.44 L525.37 269.82 L526.30 268.19 L527.25 266.56 L528.24 264.93 L529.25 263.30 L530.29 261.67 L531.36 260.05 L532.45 258.42 L533.58 256.79 L534.73 255.16 L535.91 253.53 L537.12 251.90 L538.36 250.27 L539.62 248.65 L540.91 247.02 L542.23 245.39 L543.58 243.76 L544.95 242.13 L546.35 240.50 L547.78 238.88 L549.23 237.25 L550.72 235.62 L552.22 233.99 L553.76 232.36 L555.32 230.73 L556.91 229.10 L558.52 227.48 L560.16 225.85 L561.83 224.22 L563.52 222.59 L565.24 220.96 L566.98 219.33 L568.75 217.70 L570.55 216.08 L572.37 214.45 L574.21 212.82 L576.08 211.19 L577.98 209.56 L579.90 207.93 L581.84 206.31 L583.81 204.68 L585.80 203.05 L587.82 201.42 L589.86 199.79 L591.93 198.16 L594.01 196.53 L596.13 194.91 L598.26 193.28 L600.42 191.65 L602.60 190.02 L604.80 188.39 L607.03 186.76 L609.28 185.13 L611.55 183.51 L613.84 181.88 L616.16 180.25 L618.49 178.62 L620.85 176.99 L623.23 175.36 L625.63 173.74 L628.06 172.11 L630.50 170.48 L632.96 168.85 L635.45 167.22 L637.95 165.59 L640.48 163.96 L643.02 162.34 L645.59 160.71 L648.17 159.08 L650.77 157.45 L653.40 155.82 L656.04 154.19 L658.70 152.56 L661.37 150.94 L664.07 149.31 L666.79 147.68 L669.52 146.05 L672.27 144.42 L675.04 142.79 L677.82 141.16 L680.63 139.54 L683.45 137.91 L686.28 136.28 L689.13 134.65 L692.00 133.02 L694.89 131.39 L697.79 129.77 L700.70 128.14 L703.63 126.51 L706.58 124.88 L709.54 123.25 L712.52 121.62 L715.51 119.99 L718.51 118.37 L721.53 116.74 L724.56 115.11 L727.61 113.48 L730.67 111.85 L733.74 110.22 L736.82 108.59 L739.92 106.97 L743.03 105.34 L746.15 103.71 L749.29 102.08 L752.43 100.45 L755.59 98.82 L758.76 97.20 L761.94 95.57 L765.12 93.94 L768.32 92.31 L771.53 90.68 L774.75 89.05 L777.98 87.42 L781.22 85.80 L784.47 84.17 L787.73 82.54 L791.00 80.91 L794.27 79.28 L797.55 77.65 L800.84 76.03 L804.14 74.40 L807.45 72.77 L810.76 71.14 L814.08 69.51 L817.41 67.88 L820.74 66.25 L824.08 64.63 L827.42 63.00 L830.78 61.37 L834.13 59.74 L837.49 58.11 L840.86 56.48 L844.23 54.85 L847.61 53.23 L850.99 51.60 L854.37 49.97 L857.76 48.34 L861.15 46.71 L864.54 45.08 L867.94 43.45 L871.34 41.83 L874.74 40.20 L878.14 38.57 L881.55 36.94 L884.95 35.31 L888.36 33.68 L891.77 32.06 L895.18 30.43 L898.59 28.80 L902.00 27.17 M902.00 613.43 L898.16 611.80 L894.33 610.17 L890.49 608.54 L886.65 606.92 L882.82 605.29 L878.99 603.66 L875.16 602.03 L871.33 600.40 L867.50 598.77 L863.68 597.14 L859.86 595.52 L856.04 593.89 L852.23 592.26 L848.41 590.63 L844.61 589.00 L840.81 587.37 L837.01 585.75 L833.22 584.12 L829.43 582.49 L825.65 580.86 L821.87 579.23 L818.10 577.60 L814.34 575.97 L810.58 574.35 L806.83 572.72 L803.09 571.09 L799.36 569.46 L795.63 567.83 L791.91 566.20 L788.20 564.58 L784.50 562.95 L780.80 561.32 L777.12 559.69 L773.45 558.06 L769.78 556.43 L766.13 554.80 L762.48 553.18 L758.85 551.55 L755.23 549.92 L751.62 548.29 L748.02 546.66 L744.43 545.03 L740.85 543.40 L737.29 541.78 L733.74 540.15 L730.20 538.52 L726.67 536.89 L723.16 535.26 L719.66 533.63 L716.18 532.00 L712.71 530.38 L709.25 528.75 L705.81 527.12 L702.38 525.49 L698.97 523.86 L695.58 522.23 L692.20 520.61 L688.83 518.98 L685.48 517.35 L682.15 515.72 L678.84 514.09 L675.54 512.46 L672.26 510.83 L669.00 509.21 L665.75 507.58 L662.52 505.95 L659.32 504.32 L656.13 502.69 L652.95 501.06 L649.80 499.44 L646.67 497.81 L643.55 496.18 L640.46 494.55 L637.38 492.92 L634.33 491.29 L631.30 489.66 L628.28 488.04 L625.29 486.41 L622.32 484.78 L619.37 483.15 L616.44 481.52 L613.53 479.89 L610.65 478.26 L607.79 476.64 L604.95 475.01 L602.13 473.38 L599.33 471.75 L596.56 470.12 L593.81 468.49 L591.09 466.87 L588.39 465.24 L585.71 463.61 L583.06 461.98 L580.43 460.35 L577.82 458.72 L575.24 457.09 L572.69 455.47 L570.16 453.84 L567.65 452.21 L565.17 450.58 L562.72 448.95 L560.29 447.32 L557.89 445.69 L555.52 444.07 L553.17 442.44 L550.84 440.81 L548.55 439.18 L546.28 437.55 L544.04 435.92 L541.82 434.30 L539.64 432.67 L537.48 431.04 L535.34 429.41 L533.24 427.78 L531.16 426.15 L529.12 424.52 L527.10 422.90 L525.11 421.27 L523.15 419.64 L521.21 418.01 L519.31 416.38 L517.43 414.75 L515.59 413.12 L513.77 411.50 L511.99 409.87 L510.23 408.24 L508.50 406.61 L506.80 404.98 L505.14 403.35 L503.50 401.73 L501.89 400.10 L500.32 398.47 L498.77 396.84 L497.26 395.21 L495.77 393.58 L494.32 391.95 L492.90 390.33 L491.51 388.70 L490.15 387.07 L488.82 385.44 L487.53 383.81 L486.26 382.18 L485.03 380.55 L483.83 378.93 L482.66 377.30 L481.52 375.67 L480.41 374.04 L479.34 372.41 L478.30 370.78 L477.29 369.16 L476.31 367.53 L475.37 365.90 L474.45 364.27 L473.57 362.64 L472.73 361.01 L471.91 359.38 L471.13 357.76 L470.38 356.13 L469.67 354.50 L468.98 352.87 L468.34 351.24 L467.72 349.61 L467.13 347.98 L466.58 346.36 L466.07 344.73 L465.58 343.10 L465.13 341.47 L464.71 339.84 L464.33 338.21 L463.98 336.59 L463.66 334.96 L463.38 333.33 L463.13 331.70 L462.91 330.07 L462.72 328.44 L462.57 326.81 L462.46 325.19 L462.37 323.56 L462.32 321.93 L462.31 320.30 L462.32 318.67 L462.37 317.04 L462.46 315.41 L462.57 313.79 L462.72 312.16 L462.91 310.53 L463.13 308.90 L463.38 307.27 L463.66 305.64 L463.98 304.01 L464.33 302.39 L464.71 300.76 L465.13 299.13 L465.58 297.50 L466.07 295.87 L466.58 294.24 L467.13 292.62 L467.72 290.99 L468.34 289.36 L468.98 287.73 L469.67 286.10 L470.38 284.47 L471.13 282.84 L471.91 281.22 L472.73 279.59 L473.57 277.96 L474.45 276.33 L475.37 274.70 L476.31 273.07 L477.29 271.44 L478.30 269.82 L479.34 268.19 L480.41 266.56 L481.52 264.93 L482.66 263.30 L483.83 261.67 L485.03 260.05 L486.26 258.42 L487.53 256.79 L488.82 255.16 L490.15 253.53 L491.51 251.90 L492.90 250.27 L494.32 248.65 L495.77 247.02 L497.26 245.39 L498.77 243.76 L500.32 242.13 L501.89 240.50 L503.50 238.88 L505.14 237.25 L506.80 235.62 L508.50 233.99 L510.23 232.36 L511.99 230.73 L513.77 229.10 L515.59 227.48 L517.43 225.85 L519.31 224.22 L521.21 222.59 L523.15 220.96 L525.11 219.33 L527.10 217.70 L529.12 216.08 L531.16 214.45 L533.24 212.82 L535.34 211.19 L537.48 209.56 L539.64 207.93 L541.82 206.31 L544.04 204.68 L546.28 203.05 L548.55 201.42 L550.84 199.79 L553.17 198.16 L555.52 196.53 L557.89 194.91 L560.29 193.28 L562.72 191.65 L565.17 190.02 L567.65 188.39 L570.16 186.76 L572.69 185.13 L575.24 183.51 L577.82 181.88 L580.43 180.25 L583.06 178.62 L585.71 176.99 L588.39 175.36 L591.09 173.74 L593.81 172.11 L596.56 170.48 L599.33 168.85 L602.13 167.22 L604.95 165.59 L607.79 163.96 L610.65 162.34 L613.53 160.71 L616.44 159.08 L619.37 157.45 L622.32 155.82 L625.29 154.19 L628.28 152.56 L631.30 150.94 L634.33 149.31 L637.38 147.68 L640.46 146.05 L643.55 144.42 L646.67 142.79 L649.80 141.16 L652.95 139.54 L656.13 137.91 L659.32 136.28 L662.52 134.65 L665.75 133.02 L669.00 131.39 L672.26 129.77 L675.54 128.14 L678.84 126.51 L682.15 124.88 L685.48 123.25 L688.83 121.62 L692.20 119.99 L695.58 118.37 L698.97 116.74 L702.38 115.11 L705.81 113.48 L709.25 111.85 L712.71 110.22 L716.18 108.59 L719.66 106.97 L723.16 105.34 L726.67 103.71 L730.20 102.08 L733.74 100.45 L737.29 98.82 L740.85 97.20 L744.43 95.57 L748.02 93.94 L751.62 92.31 L755.23 90.68 L758.85 89.05 L762.48 87.42 L766.13 85.80 L769.78 84.17 L773.45 82.54 L777.12 80.91 L780.80 79.28 L784.50 77.65 L788.20 76.03 L791.91 74.40 L795.63 72.77 L799.36 71.14 L803.09 69.51 L806.83 67.88 L810.58 66.25 L814.34 64.63 L818.10 63.00 L821.87 61.37 L825.65 59.74 L829.43 58.11 L833.22 56.48 L837.01 54.85 L840.81 53.23 L844.61 51.60 L848.41 49.97 L852.23 48.34 L856.04 46.71 L859.86 45.08 L863.68 43.45 L867.50 41.83 L871.33 40.20 L875.16 38.57 L878.99 36.94 L882.82 35.31 L886.65 33.68 L890.49 32.06 L894.33 30.43 L898.16 28.80 L902.00 27.17 M902.00 613.43 L897.74 611.80 L893.47 610.17 L889.21 608.54 L884.95 606.92 L880.69 605.29 L876.43 603.66 L872.17 602.03 L867.92 600.40 L863.67 598.77 L859.42 597.14 L855.17 595.52 L850.93 593.89 L846.69 592.26 L842.46 590.63 L838.23 589.00 L834.01 587.37 L829.79 585.75 L825.57 584.12 L821.37 582.49 L817.16 580.86 L812.97 579.23 L808.78 577.60 L804.60 575.97 L800.42 574.35 L796.26 572.72 L792.10 571.09 L787.95 569.46 L783.81 567.83 L779.68 566.20 L775.55 564.58 L771.44 562.95 L767.34 561.32 L763.24 559.69 L759.16 558.06 L755.09 556.43 L751.03 554.80 L746.98 553.18 L742.94 551.55 L738.92 549.92 L734.91 548.29 L730.91 546.66 L726.92 545.03 L722.95 543.40 L718.99 541.78 L715.04 540.15 L711.11 538.52 L707.19 536.89 L703.29 535.26 L699.40 533.63 L695.53 532.00 L691.67 530.38 L687.83 528.75 L684.01 527.12 L680.20 525.49 L676.41 523.86 L672.64 522.23 L668.88 520.61 L665.15 518.98 L661.43 517.35 L657.72 515.72 L654.04 514.09 L650.38 512.46 L646.73 510.83 L643.11 509.21 L639.50 507.58 L635.92 505.95 L632.35 504.32 L628.81 502.69 L625.28 501.06 L621.78 499.44 L618.30 497.81 L614.84 496.18 L611.40 494.55 L607.98 492.92 L604.59 491.29 L601.22 489.66 L597.87 488.04 L594.55 486.41 L591.24 484.78 L587.97 483.15 L584.71 481.52 L581.48 479.89 L578.28 478.26 L575.10 476.64 L571.94 475.01 L568.81 473.38 L565.70 471.75 L562.62 470.12 L559.57 468.49 L556.54 466.87 L553.54 465.24 L550.57 463.61 L547.62 461.98 L544.70 460.35 L541.80 458.72 L538.94 457.09 L536.10 455.47 L533.29 453.84 L530.50 452.21 L527.75 450.58 L525.02 448.95 L522.33 447.32 L519.66 445.69 L517.02 444.07 L514.41 442.44 L511.83 440.81 L509.28 439.18 L506.75 437.55 L504.26 435.92 L501.80 434.30 L499.37 432.67 L496.97 431.04 L494.61 429.41 L492.27 427.78 L489.96 426.15 L487.69 424.52 L485.44 422.90 L483.23 421.27 L481.05 419.64 L478.90 418.01 L476.79 416.38 L474.70 414.75 L472.65 413.12 L470.64 411.50 L468.65 409.87 L466.70 408.24 L464.78 406.61 L462.89 404.98 L461.04 403.35 L459.22 401.73 L457.44 400.10 L455.69 398.47 L453.97 396.84 L452.29 395.21 L450.64 393.58 L449.02 391.95 L447.44 390.33 L445.90 388.70 L444.39 387.07 L442.91 385.44 L441.47 383.81 L440.07 382.18 L438.70 380.55 L437.36 378.93 L436.06 377.30 L434.80 375.67 L433.57 374.04 L432.38 372.41 L431.22 370.78 L430.10 369.16 L429.01 367.53 L427.96 365.90 L426.95 364.27 L425.97 362.64 L425.03 361.01 L424.13 359.38 L423.26 357.76 L422.43 356.13 L421.63 354.50 L420.87 352.87 L420.15 351.24 L419.46 349.61 L418.82 347.98 L418.20 346.36 L417.63 344.73 L417.09 343.10 L416.59 341.47 L416.13 339.84 L415.70 338.21 L415.31 336.59 L414.96 334.96 L414.64 333.33 L414.36 331.70 L414.12 330.07 L413.91 328.44 L413.75 326.81 L413.62 325.19 L413.52 323.56 L413.47 321.93 L413.45 320.30 L413.47 318.67 L413.52 317.04 L413.62 315.41 L413.75 313.79 L413.91 312.16 L414.12 310.53 L414.36 308.90 L414.64 307.27 L414.96 305.64 L415.31 304.01 L415.70 302.39 L416.13 300.76 L416.59 299.13 L417.09 297.50 L417.63 295.87 L418.20 294.24 L418.82 292.62 L419.46 290.99 L420.15 289.36 L420.87 287.73 L421.63 286.10 L422.43 284.47 L423.26 282.84 L424.13 281.22 L425.03 279.59 L425.97 277.96 L426.95 276.33 L427.96 274.70 L429.01 273.07 L430.10 271.44 L431.22 269.82 L432.38 268.19 L433.57 266.56 L434.80 264.93 L436.06 263.30 L437.36 261.67 L438.70 260.05 L440.07 258.42 L441.47 256.79 L442.91 255.16 L444.39 253.53 L445.90 251.90 L447.44 250.27 L449.02 248.65 L450.64 247.02 L452.29 245.39 L453.97 243.76 L455.69 242.13 L457.44 240.50 L459.22 238.88 L461.04 237.25 L462.89 235.62 L464.78 233.99 L466.70 232.36 L468.65 230.73 L470.64 229.10 L472.65 227.48 L474.70 225.85 L476.79 224.22 L478.90 222.59 L481.05 220.96 L483.23 219.33 L485.44 217.70 L487.69 216.08 L489.96 214.45 L492.27 212.82 L494.61 211.19 L496.97 209.56 L499.37 207.93 L501.80 206.31 L504.26 204.68 L506.75 203.05 L509.28 201.42 L511.83 199.79 L514.41 198.16 L517.02 196.53 L519.66 194.91 L522.33 193.28 L525.02 191.65 L527.75 190.02 L530.50 188.39 L533.29 186.76 L536.10 185.13 L538.94 183.51 L541.80 181.88 L544.70 180.25 L547.62 178.62 L550.57 176.99 L553.54 175.36 L556.54 173.74 L559.57 172.11 L562.62 170.48 L565.70 168.85 L568.81 167.22 L571.94 165.59 L575.10 163.96 L578.28 162.34 L581.48 160.71 L584.71 159.08 L587.97 157.45 L591.24 155.82 L594.55 154.19 L597.87 152.56 L601.22 150.94 L604.59 149.31 L607.98 147.68 L611.40 146.05 L614.84 144.42 L618.30 142.79 L621.78 141.16 L625.28 139.54 L628.81 137.91 L632.35 136.28 L635.92 134.65 L639.50 133.02 L643.11 131.39 L646.73 129.77 L650.38 128.14 L654.04 126.51 L657.72 124.88 L661.43 123.25 L665.15 121.62 L668.88 119.99 L672.64 118.37 L676.41 116.74 L680.20 115.11 L684.01 113.48 L687.83 111.85 L691.67 110.22 L695.53 108.59 L699.40 106.97 L703.29 105.34 L707.19 103.71 L711.11 102.08 L715.04 100.45 L718.99 98.82 L722.95 97.20 L726.92 95.57 L730.91 93.94 L734.91 92.31 L738.92 90.68 L742.94 89.05 L746.98 87.42 L751.03 85.80 L755.09 84.17 L759.16 82.54 L763.24 80.91 L767.34 79.28 L771.44 77.65 L775.55 76.03 L779.68 74.40 L783.81 72.77 L787.95 71.14 L792.10 69.51 L796.26 67.88 L800.42 66.25 L804.60 64.63 L808.78 63.00 L812.97 61.37 L817.16 59.74 L821.37 58.11 L825.57 56.48 L829.79 54.85 L834.01 53.23 L838.23 51.60 L842.46 49.97 L846.69 48.34 L850.93 46.71 L855.17 45.08 L859.42 43.45 L863.67 41.83 L867.92 40.20 L872.17 38.57 L876.43 36.94 L880.69 35.31 L884.95 33.68 L889.21 32.06 L893.47 30.43 L897.74 28.80 L902.00 27.17 M902.00 613.43 L897.31 611.80 L892.62 610.17 L887.93 608.54 L883.24 606.92 L878.56 605.29 L873.87 603.66 L869.19 602.03 L864.51 600.40 L859.84 598.77 L855.16 597.14 L850.49 595.52 L845.83 593.89 L841.16 592.26 L836.51 590.63 L831.85 589.00 L827.21 587.37 L822.57 585.75 L817.93 584.12 L813.30 582.49 L808.68 580.86 L804.07 579.23 L799.46 577.60 L794.86 575.97 L790.27 574.35 L785.68 572.72 L781.11 571.09 L776.55 569.46 L771.99 567.83 L767.44 566.20 L762.91 564.58 L758.38 562.95 L753.87 561.32 L749.37 559.69 L744.88 558.06 L740.40 556.43 L735.93 554.80 L731.48 553.18 L727.04 551.55 L722.61 549.92 L718.20 548.29 L713.80 546.66 L709.41 545.03 L705.04 543.40 L700.68 541.78 L696.34 540.15 L692.02 538.52 L687.71 536.89 L683.42 535.26 L679.14 533.63 L674.88 532.00 L670.64 530.38 L666.42 528.75 L662.21 527.12 L658.02 525.49 L653.85 523.86 L649.70 522.23 L645.57 520.61 L641.46 518.98 L637.37 517.35 L633.30 515.72 L629.25 514.09 L625.22 512.46 L621.21 510.83 L617.22 509.21 L613.25 507.58 L609.31 505.95 L605.39 504.32 L601.49 502.69 L597.61 501.06 L593.76 499.44 L589.93 497.81 L586.12 496.18 L582.34 494.55 L578.58 492.92 L574.85 491.29 L571.14 489.66 L567.46 488.04 L563.80 486.41 L560.17 484.78 L556.56 483.15 L552.98 481.52 L549.43 479.89 L545.90 478.26 L542.41 476.64 L538.93 475.01 L535.49 473.38 L532.07 471.75 L528.69 470.12 L525.33 468.49 L522.00 466.87 L518.70 465.24 L515.42 463.61 L512.18 461.98 L508.97 460.35 L505.78 458.72 L502.63 457.09 L499.51 455.47 L496.42 453.84 L493.35 452.21 L490.32 450.58 L487.33 448.95 L484.36 447.32 L481.42 445.69 L478.52 444.07 L475.65 442.44 L472.81 440.81 L470.00 439.18 L467.23 437.55 L464.49 435.92 L461.78 434.30 L459.11 432.67 L456.47 431.04 L453.87 429.41 L451.29 427.78 L448.76 426.15 L446.25 424.52 L443.79 422.90 L441.35 421.27 L438.96 419.64 L436.59 418.01 L434.27 416.38 L431.97 414.75 L429.72 413.12 L427.50 411.50 L425.32 409.87 L423.17 408.24 L421.06 406.61 L418.98 404.98 L416.95 403.35 L414.95 401.73 L412.98 400.10 L411.06 398.47 L409.17 396.84 L407.32 395.21 L405.50 393.58 L403.73 391.95 L401.99 390.33 L400.29 388.70 L398.63 387.07 L397.00 385.44 L395.42 383.81 L393.87 382.18 L392.37 380.55 L390.90 378.93 L389.47 377.30 L388.08 375.67 L386.73 374.04 L385.41 372.41 L384.14 370.78 L382.91 369.16 L381.71 367.53 L380.56 365.90 L379.44 364.27 L378.37 362.64 L377.33 361.01 L376.34 359.38 L375.38 357.76 L374.47 356.13 L373.59 354.50 L372.76 352.87 L371.97 351.24 L371.21 349.61 L370.50 347.98 L369.82 346.36 L369.19 344.73 L368.60 343.10 L368.05 341.47 L367.54 339.84 L367.07 338.21 L366.64 336.59 L366.25 334.96 L365.90 333.33 L365.60 331.70 L365.33 330.07 L365.11 328.44 L364.92 326.81 L364.78 325.19 L364.68 323.56 L364.62 321.93 L364.60 320.30 L364.62 318.67 L364.68 317.04 L364.78 315.41 L364.92 313.79 L365.11 312.16 L365.33 310.53 L365.60 308.90 L365.90 307.27 L366.25 305.64 L366.64 304.01 L367.07 302.39 L367.54 300.76 L368.05 299.13 L368.60 297.50 L369.19 295.87 L369.82 294.24 L370.50 292.62 L371.21 290.99 L371.97 289.36 L372.76 287.73 L373.59 286.10 L374.47 284.47 L375.38 282.84 L376.34 281.22 L377.33 279.59 L378.37 277.96 L379.44 276.33 L380.56 274.70 L381.71 273.07 L382.91 271.44 L384.14 269.82 L385.41 268.19 L386.73 266.56 L388.08 264.93 L389.47 263.30 L390.90 261.67 L392.37 260.05 L393.87 258.42 L395.42 256.79 L397.00 255.16 L398.63 253.53 L400.29 251.90 L401.99 250.27 L403.73 248.65 L405.50 247.02 L407.32 245.39 L409.17 243.76 L411.06 242.13 L412.98 240.50 L414.95 238.88 L416.95 237.25 L418.98 235.62 L421.06 233.99 L423.17 232.36 L425.32 230.73 L427.50 229.10 L429.72 227.48 L431.97 225.85 L434.27 224.22 L436.59 222.59 L438.96 220.96 L441.35 219.33 L443.79 217.70 L446.25 216.08 L448.76 214.45 L451.29 212.82 L453.87 211.19 L456.47 209.56 L459.11 207.93 L461.78 206.31 L464.49 204.68 L467.23 203.05 L470.00 201.42 L472.81 199.79 L475.65 198.16 L478.52 196.53 L481.42 194.91 L484.36 193.28 L487.33 191.65 L490.32 190.02 L493.35 188.39 L496.42 186.76 L499.51 185.13 L502.63 183.51 L505.78 181.88 L508.97 180.25 L512.18 178.62 L515.42 176.99 L518.70 175.36 L522.00 173.74 L525.33 172.11 L528.69 170.48 L532.07 168.85 L535.49 167.22 L538.93 165.59 L542.41 163.96 L545.90 162.34 L549.43 160.71 L552.98 159.08 L556.56 157.45 L560.17 155.82 L563.80 154.19 L567.46 152.56 L571.14 150.94 L574.85 149.31 L578.58 147.68 L582.34 146.05 L586.12 144.42 L589.93 142.79 L593.76 141.16 L597.61 139.54 L601.49 137.91 L605.39 136.28 L609.31 134.65 L613.25 133.02 L617.22 131.39 L621.21 129.77 L625.22 128.14 L629.25 126.51 L633.30 124.88 L637.37 123.25 L641.46 121.62 L645.57 119.99 L649.70 118.37 L653.85 116.74 L658.02 115.11 L662.21 113.48 L666.42 111.85 L670.64 110.22 L674.88 108.59 L679.14 106.97 L683.42 105.34 L687.71 103.71 L692.02 102.08 L696.34 100.45 L700.68 98.82 L705.04 97.20 L709.41 95.57 L713.80 93.94 L718.20 92.31 L722.61 90.68 L727.04 89.05 L731.48 87.42 L735.93 85.80 L740.40 84.17 L744.88 82.54 L749.37 80.91 L753.87 79.28 L758.38 77.65 L762.91 76.03 L767.44 74.40 L771.99 72.77 L776.55 71.14 L781.11 69.51 L785.68 67.88 L790.27 66.25 L794.86 64.63 L799.46 63.00 L804.07 61.37 L808.68 59.74 L813.30 58.11 L817.93 56.48 L822.57 54.85 L827.21 53.23 L831.85 51.60 L836.51 49.97 L841.16 48.34 L845.83 46.71 L850.49 45.08 L855.16 43.45 L859.84 41.83 L864.51 40.20 L869.19 38.57 L873.87 36.94 L878.56 35.31 L883.24 33.68 L887.93 32.06 L892.62 30.43 L897.31 28.80 L902.00 27.17 M902.00 613.43 L896.88 611.80 L891.77 610.17 L886.65 608.54 L881.54 606.92 L876.43 605.29 L871.32 603.66 L866.21 602.03 L861.10 600.40 L856.00 598.77 L850.90 597.14 L845.81 595.52 L840.72 593.89 L835.63 592.26 L830.55 590.63 L825.48 589.00 L820.41 587.37 L815.35 585.75 L810.29 584.12 L805.24 582.49 L800.20 580.86 L795.16 579.23 L790.14 577.60 L785.12 575.97 L780.11 574.35 L775.11 572.72 L770.12 571.09 L765.14 569.46 L760.17 567.83 L755.21 566.20 L750.26 564.58 L745.33 562.95 L740.40 561.32 L735.49 559.69 L730.59 558.06 L725.71 556.43 L720.84 554.80 L715.98 553.18 L711.13 551.55 L706.30 549.92 L701.49 548.29 L696.69 546.66 L691.90 545.03 L687.13 543.40 L682.38 541.78 L677.65 540.15 L672.93 538.52 L668.23 536.89 L663.55 535.26 L658.88 533.63 L654.24 532.00 L649.61 530.38 L645.00 528.75 L640.41 527.12 L635.84 525.49 L631.30 523.86 L626.77 522.23 L622.26 520.61 L617.78 518.98 L613.31 517.35 L608.87 515.72 L604.45 514.09 L600.05 512.46 L595.68 510.83 L591.33 509.21 L587.00 507.58 L582.70 505.95 L578.42 504.32 L574.17 502.69 L569.94 501.06 L565.74 499.44 L561.56 497.81 L557.41 496.18 L553.28 494.55 L549.18 492.92 L545.11 491.29 L541.06 489.66 L537.04 488.04 L533.05 486.41 L529.09 484.78 L525.16 483.15 L521.25 481.52 L517.38 479.89 L513.53 478.26 L509.72 476.64 L505.93 475.01 L502.17 473.38 L498.45 471.75 L494.75 470.12 L491.08 468.49 L487.45 466.87 L483.85 465.24 L480.28 463.61 L476.74 461.98 L473.24 460.35 L469.76 458.72 L466.32 457.09 L462.92 455.47 L459.54 453.84 L456.20 452.21 L452.90 450.58 L449.63 448.95 L446.39 447.32 L443.19 445.69 L440.02 444.07 L436.89 442.44 L433.79 440.81 L430.73 439.18 L427.71 437.55 L424.72 435.92 L421.76 434.30 L418.85 432.67 L415.97 431.04 L413.13 429.41 L410.32 427.78 L407.55 426.15 L404.82 424.52 L402.13 422.90 L399.48 421.27 L396.86 419.64 L394.28 418.01 L391.75 416.38 L389.25 414.75 L386.78 413.12 L384.36 411.50 L381.98 409.87 L379.64 408.24 L377.34 406.61 L375.07 404.98 L372.85 403.35 L370.67 401.73 L368.53 400.10 L366.42 398.47 L364.36 396.84 L362.34 395.21 L360.37 393.58 L358.43 391.95 L356.53 390.33 L354.68 388.70 L352.87 387.07 L351.10 385.44 L349.37 383.81 L347.68 382.18 L346.04 380.55 L344.43 378.93 L342.87 377.30 L341.36 375.67 L339.88 374.04 L338.45 372.41 L337.06 370.78 L335.72 369.16 L334.41 367.53 L333.15 365.90 L331.94 364.27 L330.77 362.64 L329.64 361.01 L328.55 359.38 L327.51 357.76 L326.51 356.13 L325.56 354.50 L324.65 352.87 L323.78 351.24 L322.96 349.61 L322.18 347.98 L321.45 346.36 L320.76 344.73 L320.11 343.10 L319.51 341.47 L318.95 339.84 L318.44 338.21 L317.97 336.59 L317.55 334.96 L317.17 333.33 L316.83 331.70 L316.54 330.07 L316.30 328.44 L316.10 326.81 L315.94 325.19 L315.83 323.56 L315.76 321.93 L315.74 320.30 L315.76 318.67 L315.83 317.04 L315.94 315.41 L316.10 313.79 L316.30 312.16 L316.54 310.53 L316.83 308.90 L317.17 307.27 L317.55 305.64 L317.97 304.01 L318.44 302.39 L318.95 300.76 L319.51 299.13 L320.11 297.50 L320.76 295.87 L321.45 294.24 L322.18 292.62 L322.96 290.99 L323.78 289.36 L324.65 287.73 L325.56 286.10 L326.51 284.47 L327.51 282.84 L328.55 281.22 L329.64 279.59 L330.77 277.96 L331.94 276.33 L333.15 274.70 L334.41 273.07 L335.72 271.44 L337.06 269.82 L338.45 268.19 L339.88 266.56 L341.36 264.93 L342.87 263.30 L344.43 261.67 L346.04 260.05 L347.68 258.42 L349.37 256.79 L351.10 255.16 L352.87 253.53 L354.68 251.90 L356.53 250.27 L358.43 248.65 L360.37 247.02 L362.34 245.39 L364.36 243.76 L366.42 242.13 L368.53 240.50 L370.67 238.88 L372.85 237.25 L375.07 235.62 L377.34 233.99 L379.64 232.36 L381.98 230.73 L384.36 229.10 L386.78 227.48 L389.25 225.85 L391.75 224.22 L394.28 222.59 L396.86 220.96 L399.48 219.33 L402.13 217.70 L404.82 216.08 L407.55 214.45 L410.32 212.82 L413.13 211.19 L415.97 209.56 L418.85 207.93 L421.76 206.31 L424.72 204.68 L427.71 203.05 L430.73 201.42 L433.79 199.79 L436.89 198.16 L440.02 196.53 L443.19 194.91 L446.39 193.28 L449.63 191.65 L452.90 190.02 L456.20 188.39 L459.54 186.76 L462.92 185.13 L466.32 183.51 L469.76 181.88 L473.24 180.25 L476.74 178.62 L480.28 176.99 L483.85 175.36 L487.45 173.74 L491.08 172.11 L494.75 170.48 L498.45 168.85 L502.17 167.22 L505.93 165.59 L509.72 163.96 L513.53 162.34 L517.38 160.71 L521.25 159.08 L525.16 157.45 L529.09 155.82 L533.05 154.19 L537.04 152.56 L541.06 150.94 L545.11 149.31 L549.18 147.68 L553.28 146.05 L557.41 144.42 L561.56 142.79 L565.74 141.16 L569.94 139.54 L574.17 137.91 L578.42 136.28 L582.70 134.65 L587.00 133.02 L591.33 131.39 L595.68 129.77 L600.05 128.14 L604.45 126.51 L608.87 124.88 L613.31 123.25 L617.78 121.62 L622.26 119.99 L626.77 118.37 L631.30 116.74 L635.84 115.11 L640.41 113.48 L645.00 111.85 L649.61 110.22 L654.24 108.59 L658.88 106.97 L663.55 105.34 L668.23 103.71 L672.93 102.08 L677.65 100.45 L682.38 98.82 L687.13 97.20 L691.90 95.57 L696.69 93.94 L701.49 92.31 L706.30 90.68 L711.13 89.05 L715.98 87.42 L720.84 85.80 L725.71 84.17 L730.59 82.54 L735.49 80.91 L740.40 79.28 L745.33 77.65 L750.26 76.03 L755.21 74.40 L760.17 72.77 L765.14 71.14 L770.12 69.51 L775.11 67.88 L780.11 66.25 L785.12 64.63 L790.14 63.00 L795.16 61.37 L800.20 59.74 L805.24 58.11 L810.29 56.48 L815.35 54.85 L820.41 53.23 L825.48 51.60 L830.55 49.97 L835.63 48.34 L840.72 46.71 L845.81 45.08 L850.90 43.45 L856.00 41.83 L861.10 40.20 L866.21 38.57 L871.32 36.94 L876.43 35.31 L881.54 33.68 L886.65 32.06 L891.77 30.43 L896.88 28.80 L902.00 27.17 M750.26 564.58 L751.11 564.58 L751.95 564.58 L752.79 564.58 L753.64 564.58 L754.48 564.58 L755.32 564.58 L756.17 564.58 L757.01 564.58 L757.85 564.58 L758.69 564.58 L759.54 564.58 L760.38 564.58 L761.22 564.58 L762.07 564.58 L762.91 564.58 L763.75 564.58 L764.60 564.58 L765.44 564.58 L766.28 564.58 L767.12 564.58 L767.97 564.58 L768.81 564.58 L769.65 564.58 L770.50 564.58 L771.34 564.58 L772.18 564.58 L773.03 564.58 L773.87 564.58 L774.71 564.58 L775.55 564.58 L776.40 564.58 L777.24 564.58 L778.08 564.58 L778.93 564.58 L779.77 564.58 L780.61 564.58 L781.45 564.58 L782.30 564.58 L783.14 564.58 L783.98 564.58 L784.83 564.58 L785.67 564.58 L786.51 564.58 L787.36 564.58 L788.20 564.58 L789.04 564.58 L789.88 564.58 L790.73 564.58 L791.57 564.58 L792.41 564.58 L793.26 564.58 L794.10 564.58 L794.94 564.58 L795.79 564.58 L796.63 564.58 L797.47 564.58 L798.31 564.58 L799.16 564.58 L800.00 564.58 L800.84 564.58 L801.69 564.58 L802.53 564.58 L803.37 564.58 L804.22 564.58 L805.06 564.58 L805.90 564.58 L806.74 564.58 L807.59 564.58 L808.43 564.58 L809.27 564.58 L810.12 564.58 L810.96 564.58 L811.80 564.58 L812.64 564.58 L813.49 564.58 L814.33 564.58 L815.17 564.58 L816.02 564.58 L816.86 564.58 L817.70 564.58 L818.55 564.58 L819.39 564.58 L820.23 564.58 L821.07 564.58 L821.92 564.58 L822.76 564.58 L823.60 564.58 L824.45 564.58 L825.29 564.58 L826.13 564.58 L826.98 564.58 L827.82 564.58 L828.66 564.58 L829.50 564.58 L830.35 564.58 L831.19 564.58 L832.03 564.58 L832.88 564.58 L833.72 564.58 L834.56 564.58 L835.41 564.58 L836.25 564.58 L837.09 564.58 L837.93 564.58 L838.78 564.58 L839.62 564.58 L840.46 564.58 L841.31 564.58 L842.15 564.58 L842.99 564.58 L843.83 564.58 L844.68 564.58 L845.52 564.58 L846.36 564.58 L847.21 564.58 L848.05 564.58 L848.89 564.58 L849.74 564.58 L850.58 564.58 L851.42 564.58 L852.26 564.58 L853.11 564.58 L853.95 564.58 L854.79 564.58 L855.64 564.58 L856.48 564.58 L857.32 564.58 L858.17 564.58 L859.01 564.58 L859.85 564.58 L860.69 564.58 L861.54 564.58 L862.38 564.58 L863.22 564.58 L864.07 564.58 L864.91 564.58 L865.75 564.58 L866.60 564.58 L867.44 564.58 L868.28 564.58 L869.12 564.58 L869.97 564.58 L870.81 564.58 L871.65 564.58 L872.50 564.58 L873.34 564.58 L874.18 564.58 L875.02 564.58 L875.87 564.58 L876.71 564.58 L877.55 564.58 L878.40 564.58 L879.24 564.58 L880.08 564.58 L880.93 564.58 L881.77 564.58 L882.61 564.58 L883.45 564.58 L884.30 564.58 L885.14 564.58 L885.98 564.58 L886.83 564.58 L887.67 564.58 L888.51 564.58 L889.36 564.58 L890.20 564.58 L891.04 564.58 L891.88 564.58 L892.73 564.58 L893.57 564.58 L894.41 564.58 L895.26 564.58 L896.10 564.58 L896.94 564.58 L897.79 564.58 L898.63 564.58 L899.47 564.58 L900.31 564.58 L901.16 564.58 L902.00 564.58 L902.84 564.58 L903.69 564.58 L904.53 564.58 L905.37 564.58 L906.21 564.58 L907.06 564.58 L907.90 564.58 L908.74 564.58 L909.59 564.58 L910.43 564.58 L911.27 564.58 L912.12 564.58 L912.96 564.58 L913.80 564.58 L914.64 564.58 L915.49 564.58 L916.33 564.58 L917.17 564.58 L918.02 564.58 L918.86 564.58 L919.70 564.58 L920.55 564.58 L921.39 564.58 L922.23 564.58 L923.07 564.58 L923.92 564.58 L924.76 564.58 L925.60 564.58 L926.45 564.58 L927.29 564.58 L928.13 564.58 L928.98 564.58 L929.82 564.58 L930.66 564.58 L931.50 564.58 L932.35 564.58 L933.19 564.58 L934.03 564.58 L934.88 564.58 L935.72 564.58 L936.56 564.58 L937.40 564.58 L938.25 564.58 L939.09 564.58 L939.93 564.58 L940.78 564.58 L941.62 564.58 L942.46 564.58 L943.31 564.58 L944.15 564.58 L944.99 564.58 L945.83 564.58 L946.68 564.58 L947.52 564.58 L948.36 564.58 L949.21 564.58 L950.05 564.58 L950.89 564.58 L951.74 564.58 L952.58 564.58 L953.42 564.58 L954.26 564.58 L955.11 564.58 L955.95 564.58 L956.79 564.58 L957.64 564.58 L958.48 564.58 L959.32 564.58 L960.17 564.58 L961.01 564.58 L961.85 564.58 L962.69 564.58 L963.54 564.58 L964.38 564.58 L965.22 564.58 L966.07 564.58 L966.91 564.58 L967.75 564.58 L968.59 564.58 L969.44 564.58 L970.28 564.58 L971.12 564.58 L971.97 564.58 L972.81 564.58 L973.65 564.58 L974.50 564.58 L975.34 564.58 L976.18 564.58 L977.02 564.58 L977.87 564.58 L978.71 564.58 L979.55 564.58 L980.40 564.58 L981.24 564.58 L982.08 564.58 L982.93 564.58 L983.77 564.58 L984.61 564.58 L985.45 564.58 L986.30 564.58 L987.14 564.58 L987.98 564.58 L988.83 564.58 L989.67 564.58 L990.51 564.58 L991.36 564.58 L992.20 564.58 L993.04 564.58 L993.88 564.58 L994.73 564.58 L995.57 564.58 L996.41 564.58 L997.26 564.58 L998.10 564.58 L998.94 564.58 L999.78 564.58 L1000.63 564.58 L1001.47 564.58 L1002.31 564.58 L1003.16 564.58 L1004.00 564.58 L1004.84 564.58 L1005.69 564.58 L1006.53 564.58 L1007.37 564.58 L1008.21 564.58 L1009.06 564.58 L1009.90 564.58 L1010.74 564.58 L1011.59 564.58 L1012.43 564.58 L1013.27 564.58 L1014.12 564.58 L1014.96 564.58 L1015.80 564.58 L1016.64 564.58 L1017.49 564.58 L1018.33 564.58 L1019.17 564.58 L1020.02 564.58 L1020.86 564.58 L1021.70 564.58 L1022.55 564.58 L1023.39 564.58 L1024.23 564.58 L1025.07 564.58 L1025.92 564.58 L1026.76 564.58 L1027.60 564.58 L1028.45 564.58 L1029.29 564.58 L1030.13 564.58 L1030.97 564.58 L1031.82 564.58 L1032.66 564.58 L1033.50 564.58 L1034.35 564.58 L1035.19 564.58 L1036.03 564.58 L1036.88 564.58 L1037.72 564.58 L1038.56 564.58 L1039.40 564.58 L1040.25 564.58 L1041.09 564.58 L1041.93 564.58 L1042.78 564.58 L1043.62 564.58 L1044.46 564.58 L1045.31 564.58 L1046.15 564.58 L1046.99 564.58 L1047.83 564.58 L1048.68 564.58 L1049.52 564.58 L1050.36 564.58 L1051.21 564.58 L1052.05 564.58 L1052.89 564.58 L1053.74 564.58 M608.87 515.72 L610.50 515.72 L612.13 515.72 L613.76 515.72 L615.38 515.72 L617.01 515.72 L618.64 515.72 L620.27 515.72 L621.90 515.72 L623.53 515.72 L625.15 515.72 L626.78 515.72 L628.41 515.72 L630.04 515.72 L631.67 515.72 L633.30 515.72 L634.93 515.72 L636.55 515.72 L638.18 515.72 L639.81 515.72 L641.44 515.72 L643.07 515.72 L644.70 515.72 L646.33 515.72 L647.95 515.72 L649.58 515.72 L651.21 515.72 L652.84 515.72 L654.47 515.72 L656.10 515.72 L657.72 515.72 L659.35 515.72 L660.98 515.72 L662.61 515.72 L664.24 515.72 L665.87 515.72 L667.50 515.72 L669.12 515.72 L670.75 515.72 L672.38 515.72 L674.01 515.72 L675.64 515.72 L677.27 515.72 L678.90 515.72 L680.52 515.72 L682.15 515.72 L683.78 515.72 L685.41 515.72 L687.04 515.72 L688.67 515.72 L690.29 515.72 L691.92 515.72 L693.55 515.72 L695.18 515.72 L696.81 515.72 L698.44 515.72 L700.07 515.72 L701.69 515.72 L703.32 515.72 L704.95 515.72 L706.58 515.72 L708.21 515.72 L709.84 515.72 L711.47 515.72 L713.09 515.72 L714.72 515.72 L716.35 515.72 L717.98 515.72 L719.61 515.72 L721.24 515.72 L722.87 515.72 L724.49 515.72 L726.12 515.72 L727.75 515.72 L729.38 515.72 L731.01 515.72 L732.64 515.72 L734.26 515.72 L735.89 515.72 L737.52 515.72 L739.15 515.72 L740.78 515.72 L742.41 515.72 L744.04 515.72 L745.66 515.72 L747.29 515.72 L748.92 515.72 L750.55 515.72 L752.18 515.72 L753.81 515.72 L755.43 515.72 L757.06 515.72 L758.69 515.72 L760.32 515.72 L761.95 515.72 L763.58 515.72 L765.21 515.72 L766.83 515.72 L768.46 515.72 L770.09 515.72 L771.72 515.72 L773.35 515.72 L774.98 515.72 L776.61 515.72 L778.23 515.72 L779.86 515.72 L781.49 515.72 L783.12 515.72 L784.75 515.72 L786.38 515.72 L788.00 515.72 L789.63 515.72 L791.26 515.72 L792.89 515.72 L794.52 515.72 L796.15 515.72 L797.78 515.72 L799.40 515.72 L801.03 515.72 L802.66 515.72 L804.29 515.72 L805.92 515.72 L807.55 515.72 L809.18 515.72 L810.80 515.72 L812.43 515.72 L814.06 515.72 L815.69 515.72 L817.32 515.72 L818.95 515.72 L820.58 515.72 L822.20 515.72 L823.83 515.72 L825.46 515.72 L827.09 515.72 L828.72 515.72 L830.35 515.72 L831.97 515.72 L833.60 515.72 L835.23 515.72 L836.86 515.72 L838.49 515.72 L840.12 515.72 L841.75 515.72 L843.37 515.72 L845.00 515.72 L846.63 515.72 L848.26 515.72 L849.89 515.72 L851.52 515.72 L853.14 515.72 L854.77 515.72 L856.40 515.72 L858.03 515.72 L859.66 515.72 L861.29 515.72 L862.92 515.72 L864.54 515.72 L866.17 515.72 L867.80 515.72 L869.43 515.72 L871.06 515.72 L872.69 515.72 L874.32 515.72 L875.94 515.72 L877.57 515.72 L879.20 515.72 L880.83 515.72 L882.46 515.72 L884.09 515.72 L885.72 515.72 L887.34 515.72 L888.97 515.72 L890.60 515.72 L892.23 515.72 L893.86 515.72 L895.49 515.72 L897.11 515.72 L898.74 515.72 L900.37 515.72 L902.00 515.72 L903.63 515.72 L905.26 515.72 L906.89 515.72 L908.51 515.72 L910.14 515.72 L911.77 515.72 L913.40 515.72 L915.03 515.72 L916.66 515.72 L918.28 515.72 L919.91 515.72 L921.54 515.72 L923.17 515.72 L924.80 515.72 L926.43 515.72 L928.06 515.72 L929.68 515.72 L931.31 515.72 L932.94 515.72 L934.57 515.72 L936.20 515.72 L937.83 515.72 L939.46 515.72 L941.08 515.72 L942.71 515.72 L944.34 515.72 L945.97 515.72 L947.60 515.72 L949.23 515.72 L950.86 515.72 L952.48 515.72 L954.11 515.72 L955.74 515.72 L957.37 515.72 L959.00 515.72 L960.63 515.72 L962.25 515.72 L963.88 515.72 L965.51 515.72 L967.14 515.72 L968.77 515.72 L970.40 515.72 L972.03 515.72 L973.65 515.72 L975.28 515.72 L976.91 515.72 L978.54 515.72 L980.17 515.72 L981.80 515.72 L983.42 515.72 L985.05 515.72 L986.68 515.72 L988.31 515.72 L989.94 515.72 L991.57 515.72 L993.20 515.72 L994.82 515.72 L996.45 515.72 L998.08 515.72 L999.71 515.72 L1001.34 515.72 L1002.97 515.72 L1004.60 515.72 L1006.22 515.72 L1007.85 515.72 L1009.48 515.72 L1011.11 515.72 L1012.74 515.72 L1014.37 515.72 L1016.00 515.72 L1017.62 515.72 L1019.25 515.72 L1020.88 515.72 L1022.51 515.72 L1024.14 515.72 L1025.77 515.72 L1027.39 515.72 L1029.02 515.72 L1030.65 515.72 L1032.28 515.72 L1033.91 515.72 L1035.54 515.72 L1037.17 515.72 L1038.79 515.72 L1040.42 515.72 L1042.05 515.72 L1043.68 515.72 L1045.31 515.72 L1046.94 515.72 L1048.57 515.72 L1050.19 515.72 L1051.82 515.72 L1053.45 515.72 L1055.08 515.72 L1056.71 515.72 L1058.34 515.72 L1059.96 515.72 L1061.59 515.72 L1063.22 515.72 L1064.85 515.72 L1066.48 515.72 L1068.11 515.72 L1069.74 515.72 L1071.36 515.72 L1072.99 515.72 L1074.62 515.72 L1076.25 515.72 L1077.88 515.72 L1079.51 515.72 L1081.13 515.72 L1082.76 515.72 L1084.39 515.72 L1086.02 515.72 L1087.65 515.72 L1089.28 515.72 L1090.91 515.72 L1092.53 515.72 L1094.16 515.72 L1095.79 515.72 L1097.42 515.72 L1099.05 515.72 L1100.68 515.72 L1102.31 515.72 L1103.93 515.72 L1105.56 515.72 L1107.19 515.72 L1108.82 515.72 L1110.45 515.72 L1112.08 515.72 L1113.71 515.72 L1115.33 515.72 L1116.96 515.72 L1118.59 515.72 L1120.22 515.72 L1121.85 515.72 L1123.48 515.72 L1125.10 515.72 L1126.73 515.72 L1128.36 515.72 L1129.99 515.72 L1131.62 515.72 L1133.25 515.72 L1134.88 515.72 L1136.50 515.72 L1138.13 515.72 L1139.76 515.72 L1141.39 515.72 L1143.02 515.72 L1144.65 515.72 L1146.28 515.72 L1147.90 515.72 L1149.53 515.72 L1151.16 515.72 L1152.79 515.72 L1154.42 515.72 L1156.05 515.72 L1157.67 515.72 L1159.30 515.72 L1160.93 515.72 L1162.56 515.72 L1164.19 515.72 L1165.82 515.72 L1167.45 515.72 L1169.07 515.72 L1170.70 515.72 L1172.33 515.72 L1173.96 515.72 L1175.59 515.72 L1177.22 515.72 L1178.85 515.72 L1180.47 515.72 L1182.10 515.72 L1183.73 515.72 L1185.36 515.72 L1186.99 515.72 L1188.62 515.72 L1190.24 515.72 L1191.87 515.72 L1193.50 515.72 L1195.13 515.72 M487.45 466.87 L489.75 466.87 L492.06 466.87 L494.36 466.87 L496.66 466.87 L498.97 466.87 L501.27 466.87 L503.57 466.87 L505.88 466.87 L508.18 466.87 L510.48 466.87 L512.79 466.87 L515.09 466.87 L517.39 466.87 L519.69 466.87 L522.00 466.87 L524.30 466.87 L526.60 466.87 L528.91 466.87 L531.21 466.87 L533.51 466.87 L535.82 466.87 L538.12 466.87 L540.42 466.87 L542.72 466.87 L545.03 466.87 L547.33 466.87 L549.63 466.87 L551.94 466.87 L554.24 466.87 L556.54 466.87 L558.85 466.87 L561.15 466.87 L563.45 466.87 L565.76 466.87 L568.06 466.87 L570.36 466.87 L572.66 466.87 L574.97 466.87 L577.27 466.87 L579.57 466.87 L581.88 466.87 L584.18 466.87 L586.48 466.87 L588.79 466.87 L591.09 466.87 L593.39 466.87 L595.69 466.87 L598.00 466.87 L600.30 466.87 L602.60 466.87 L604.91 466.87 L607.21 466.87 L609.51 466.87 L611.82 466.87 L614.12 466.87 L616.42 466.87 L618.73 466.87 L621.03 466.87 L623.33 466.87 L625.63 466.87 L627.94 466.87 L630.24 466.87 L632.54 466.87 L634.85 466.87 L637.15 466.87 L639.45 466.87 L641.76 466.87 L644.06 466.87 L646.36 466.87 L648.66 466.87 L650.97 466.87 L653.27 466.87 L655.57 466.87 L657.88 466.87 L660.18 466.87 L662.48 466.87 L664.79 466.87 L667.09 466.87 L669.39 466.87 L671.70 466.87 L674.00 466.87 L676.30 466.87 L678.60 466.87 L680.91 466.87 L683.21 466.87 L685.51 466.87 L687.82 466.87 L690.12 466.87 L692.42 466.87 L694.73 466.87 L697.03 466.87 L699.33 466.87 L701.63 466.87 L703.94 466.87 L706.24 466.87 L708.54 466.87 L710.85 466.87 L713.15 466.87 L715.45 466.87 L717.76 466.87 L720.06 466.87 L722.36 466.87 L724.67 466.87 L726.97 466.87 L729.27 466.87 L731.57 466.87 L733.88 466.87 L736.18 466.87 L738.48 466.87 L740.79 466.87 L743.09 466.87 L745.39 466.87 L747.70 466.87 L750.00 466.87 L752.30 466.87 L754.61 466.87 L756.91 466.87 L759.21 466.87 L761.51 466.87 L763.82 466.87 L766.12 466.87 L768.42 466.87 L770.73 466.87 L773.03 466.87 L775.33 466.87 L777.64 466.87 L779.94 466.87 L782.24 466.87 L784.54 466.87 L786.85 466.87 L789.15 466.87 L791.45 466.87 L793.76 466.87 L796.06 466.87 L798.36 466.87 L800.67 466.87 L802.97 466.87 L805.27 466.87 L807.58 466.87 L809.88 466.87 L812.18 466.87 L814.48 466.87 L816.79 466.87 L819.09 466.87 L821.39 466.87 L823.70 466.87 L826.00 466.87 L828.30 466.87 L830.61 466.87 L832.91 466.87 L835.21 466.87 L837.51 466.87 L839.82 466.87 L842.12 466.87 L844.42 466.87 L846.73 466.87 L849.03 466.87 L851.33 466.87 L853.64 466.87 L855.94 466.87 L858.24 466.87 L860.55 466.87 L862.85 466.87 L865.15 466.87 L867.45 466.87 L869.76 466.87 L872.06 466.87 L874.36 466.87 L876.67 466.87 L878.97 466.87 L881.27 466.87 L883.58 466.87 L885.88 466.87 L888.18 466.87 L890.48 466.87 L892.79 466.87 L895.09 466.87 L897.39 466.87 L899.70 466.87 L902.00 466.87 L904.30 466.87 L906.61 466.87 L908.91 466.87 L911.21 466.87 L913.52 466.87 L915.82 466.87 L918.12 466.87 L920.42 466.87 L922.73 466.87 L925.03 466.87 L927.33 466.87 L929.64 466.87 L931.94 466.87 L934.24 466.87 L936.55 466.87 L938.85 466.87 L941.15 466.87 L943.45 466.87 L945.76 466.87 L948.06 466.87 L950.36 466.87 L952.67 466.87 L954.97 466.87 L957.27 466.87 L959.58 466.87 L961.88 466.87 L964.18 466.87 L966.49 466.87 L968.79 466.87 L971.09 466.87 L973.39 466.87 L975.70 466.87 L978.00 466.87 L980.30 466.87 L982.61 466.87 L984.91 466.87 L987.21 466.87 L989.52 466.87 L991.82 466.87 L994.12 466.87 L996.42 466.87 L998.73 466.87 L1001.03 466.87 L1003.33 466.87 L1005.64 466.87 L1007.94 466.87 L1010.24 466.87 L1012.55 466.87 L1014.85 466.87 L1017.15 466.87 L1019.46 466.87 L1021.76 466.87 L1024.06 466.87 L1026.36 466.87 L1028.67 466.87 L1030.97 466.87 L1033.27 466.87 L1035.58 466.87 L1037.88 466.87 L1040.18 466.87 L1042.49 466.87 L1044.79 466.87 L1047.09 466.87 L1049.39 466.87 L1051.70 466.87 L1054.00 466.87 L1056.30 466.87 L1058.61 466.87 L1060.91 466.87 L1063.21 466.87 L1065.52 466.87 L1067.82 466.87 L1070.12 466.87 L1072.43 466.87 L1074.73 466.87 L1077.03 466.87 L1079.33 466.87 L1081.64 466.87 L1083.94 466.87 L1086.24 466.87 L1088.55 466.87 L1090.85 466.87 L1093.15 466.87 L1095.46 466.87 L1097.76 466.87 L1100.06 466.87 L1102.37 466.87 L1104.67 466.87 L1106.97 466.87 L1109.27 466.87 L1111.58 466.87 L1113.88 466.87 L1116.18 466.87 L1118.49 466.87 L1120.79 466.87 L1123.09 466.87 L1125.40 466.87 L1127.70 466.87 L1130.00 466.87 L1132.30 466.87 L1134.61 466.87 L1136.91 466.87 L1139.21 466.87 L1141.52 466.87 L1143.82 466.87 L1146.12 466.87 L1148.43 466.87 L1150.73 466.87 L1153.03 466.87 L1155.34 466.87 L1157.64 466.87 L1159.94 466.87 L1162.24 466.87 L1164.55 466.87 L1166.85 466.87 L1169.15 466.87 L1171.46 466.87 L1173.76 466.87 L1176.06 466.87 L1178.37 466.87 L1180.67 466.87 L1182.97 466.87 L1185.27 466.87 L1187.58 466.87 L1189.88 466.87 L1192.18 466.87 L1194.49 466.87 L1196.79 466.87 L1199.09 466.87 L1201.40 466.87 L1203.70 466.87 L1206.00 466.87 L1208.31 466.87 L1210.61 466.87 L1212.91 466.87 L1215.21 466.87 L1217.52 466.87 L1219.82 466.87 L1222.12 466.87 L1224.43 466.87 L1226.73 466.87 L1229.03 466.87 L1231.34 466.87 L1233.64 466.87 L1235.94 466.87 L1238.24 466.87 L1240.55 466.87 L1242.85 466.87 L1245.15 466.87 L1247.46 466.87 L1249.76 466.87 L1252.06 466.87 L1254.37 466.87 L1256.67 466.87 L1258.97 466.87 L1261.28 466.87 L1263.58 466.87 L1265.88 466.87 L1268.18 466.87 L1270.49 466.87 L1272.79 466.87 L1275.09 466.87 L1277.40 466.87 L1279.70 466.87 L1282.00 466.87 L1284.31 466.87 L1286.61 466.87 L1288.91 466.87 L1291.21 466.87 L1293.52 466.87 L1295.82 466.87 L1298.12 466.87 L1300.43 466.87 L1302.73 466.87 L1305.03 466.87 L1307.34 466.87 L1309.64 466.87 L1311.94 466.87 L1314.25 466.87 L1316.55 466.87 M394.28 418.01 L397.10 418.01 L399.93 418.01 L402.75 418.01 L405.57 418.01 L408.39 418.01 L411.21 418.01 L414.03 418.01 L416.85 418.01 L419.67 418.01 L422.49 418.01 L425.31 418.01 L428.13 418.01 L430.95 418.01 L433.77 418.01 L436.59 418.01 L439.41 418.01 L442.23 418.01 L445.06 418.01 L447.88 418.01 L450.70 418.01 L453.52 418.01 L456.34 418.01 L459.16 418.01 L461.98 418.01 L464.80 418.01 L467.62 418.01 L470.44 418.01 L473.26 418.01 L476.08 418.01 L478.90 418.01 L481.72 418.01 L484.54 418.01 L487.37 418.01 L490.19 418.01 L493.01 418.01 L495.83 418.01 L498.65 418.01 L501.47 418.01 L504.29 418.01 L507.11 418.01 L509.93 418.01 L512.75 418.01 L515.57 418.01 L518.39 418.01 L521.21 418.01 L524.03 418.01 L526.85 418.01 L529.67 418.01 L532.50 418.01 L535.32 418.01 L538.14 418.01 L540.96 418.01 L543.78 418.01 L546.60 418.01 L549.42 418.01 L552.24 418.01 L555.06 418.01 L557.88 418.01 L560.70 418.01 L563.52 418.01 L566.34 418.01 L569.16 418.01 L571.98 418.01 L574.81 418.01 L577.63 418.01 L580.45 418.01 L583.27 418.01 L586.09 418.01 L588.91 418.01 L591.73 418.01 L594.55 418.01 L597.37 418.01 L600.19 418.01 L603.01 418.01 L605.83 418.01 L608.65 418.01 L611.47 418.01 L614.29 418.01 L617.11 418.01 L619.94 418.01 L622.76 418.01 L625.58 418.01 L628.40 418.01 L631.22 418.01 L634.04 418.01 L636.86 418.01 L639.68 418.01 L642.50 418.01 L645.32 418.01 L648.14 418.01 L650.96 418.01 L653.78 418.01 L656.60 418.01 L659.42 418.01 L662.25 418.01 L665.07 418.01 L667.89 418.01 L670.71 418.01 L673.53 418.01 L676.35 418.01 L679.17 418.01 L681.99 418.01 L684.81 418.01 L687.63 418.01 L690.45 418.01 L693.27 418.01 L696.09 418.01 L698.91 418.01 L701.73 418.01 L704.55 418.01 L707.38 418.01 L710.20 418.01 L713.02 418.01 L715.84 418.01 L718.66 418.01 L721.48 418.01 L724.30 418.01 L727.12 418.01 L729.94 418.01 L732.76 418.01 L735.58 418.01 L738.40 418.01 L741.22 418.01 L744.04 418.01 L746.86 418.01 L749.69 418.01 L752.51 418.01 L755.33 418.01 L758.15 418.01 L760.97 418.01 L763.79 418.01 L766.61 418.01 L769.43 418.01 L772.25 418.01 L775.07 418.01 L777.89 418.01 L780.71 418.01 L783.53 418.01 L786.35 418.01 L789.17 418.01 L791.99 418.01 L794.82 418.01 L797.64 418.01 L800.46 418.01 L803.28 418.01 L806.10 418.01 L808.92 418.01 L811.74 418.01 L814.56 418.01 L817.38 418.01 L820.20 418.01 L823.02 418.01 L825.84 418.01 L828.66 418.01 L831.48 418.01 L834.30 418.01 L837.13 418.01 L839.95 418.01 L842.77 418.01 L845.59 418.01 L848.41 418.01 L851.23 418.01 L854.05 418.01 L856.87 418.01 L859.69 418.01 L862.51 418.01 L865.33 418.01 L868.15 418.01 L870.97 418.01 L873.79 418.01 L876.61 418.01 L879.43 418.01 L882.26 418.01 L885.08 418.01 L887.90 418.01 L890.72 418.01 L893.54 418.01 L896.36 418.01 L899.18 418.01 L902.00 418.01 L904.82 418.01 L907.64 418.01 L910.46 418.01 L913.28 418.01 L916.10 418.01 L918.92 418.01 L921.74 418.01 L924.57 418.01 L927.39 418.01 L930.21 418.01 L933.03 418.01 L935.85 418.01 L938.67 418.01 L941.49 418.01 L944.31 418.01 L947.13 418.01 L949.95 418.01 L952.77 418.01 L955.59 418.01 L958.41 418.01 L961.23 418.01 L964.05 418.01 L966.87 418.01 L969.70 418.01 L972.52 418.01 L975.34 418.01 L978.16 418.01 L980.98 418.01 L983.80 418.01 L986.62 418.01 L989.44 418.01 L992.26 418.01 L995.08 418.01 L997.90 418.01 L1000.72 418.01 L1003.54 418.01 L1006.36 418.01 L1009.18 418.01 L1012.01 418.01 L1014.83 418.01 L1017.65 418.01 L1020.47 418.01 L1023.29 418.01 L1026.11 418.01 L1028.93 418.01 L1031.75 418.01 L1034.57 418.01 L1037.39 418.01 L1040.21 418.01 L1043.03 418.01 L1045.85 418.01 L1048.67 418.01 L1051.49 418.01 L1054.31 418.01 L1057.14 418.01 L1059.96 418.01 L1062.78 418.01 L1065.60 418.01 L1068.42 418.01 L1071.24 418.01 L1074.06 418.01 L1076.88 418.01 L1079.70 418.01 L1082.52 418.01 L1085.34 418.01 L1088.16 418.01 L1090.98 418.01 L1093.80 418.01 L1096.62 418.01 L1099.45 418.01 L1102.27 418.01 L1105.09 418.01 L1107.91 418.01 L1110.73 418.01 L1113.55 418.01 L1116.37 418.01 L1119.19 418.01 L1122.01 418.01 L1124.83 418.01 L1127.65 418.01 L1130.47 418.01 L1133.29 418.01 L1136.11 418.01 L1138.93 418.01 L1141.75 418.01 L1144.58 418.01 L1147.40 418.01 L1150.22 418.01 L1153.04 418.01 L1155.86 418.01 L1158.68 418.01 L1161.50 418.01 L1164.32 418.01 L1167.14 418.01 L1169.96 418.01 L1172.78 418.01 L1175.60 418.01 L1178.42 418.01 L1181.24 418.01 L1184.06 418.01 L1186.89 418.01 L1189.71 418.01 L1192.53 418.01 L1195.35 418.01 L1198.17 418.01 L1200.99 418.01 L1203.81 418.01 L1206.63 418.01 L1209.45 418.01 L1212.27 418.01 L1215.09 418.01 L1217.91 418.01 L1220.73 418.01 L1223.55 418.01 L1226.37 418.01 L1229.19 418.01 L1232.02 418.01 L1234.84 418.01 L1237.66 418.01 L1240.48 418.01 L1243.30 418.01 L1246.12 418.01 L1248.94 418.01 L1251.76 418.01 L1254.58 418.01 L1257.40 418.01 L1260.22 418.01 L1263.04 418.01 L1265.86 418.01 L1268.68 418.01 L1271.50 418.01 L1274.33 418.01 L1277.15 418.01 L1279.97 418.01 L1282.79 418.01 L1285.61 418.01 L1288.43 418.01 L1291.25 418.01 L1294.07 418.01 L1296.89 418.01 L1299.71 418.01 L1302.53 418.01 L1305.35 418.01 L1308.17 418.01 L1310.99 418.01 L1313.81 418.01 L1316.63 418.01 L1319.46 418.01 L1322.28 418.01 L1325.10 418.01 L1327.92 418.01 L1330.74 418.01 L1333.56 418.01 L1336.38 418.01 L1339.20 418.01 L1342.02 418.01 L1344.84 418.01 L1347.66 418.01 L1350.48 418.01 L1353.30 418.01 L1356.12 418.01 L1358.94 418.01 L1361.77 418.01 L1364.59 418.01 L1367.41 418.01 L1370.23 418.01 L1373.05 418.01 L1375.87 418.01 L1378.69 418.01 L1381.51 418.01 L1384.33 418.01 L1387.15 418.01 L1389.97 418.01 L1392.79 418.01 L1395.61 418.01 L1398.43 418.01 L1401.25 418.01 L1404.07 418.01 L1406.90 418.01 L1409.72 418.01 M335.72 369.16 L338.86 369.16 L342.01 369.16 L345.15 369.16 L348.30 369.16 L351.45 369.16 L354.59 369.16 L357.74 369.16 L360.88 369.16 L364.03 369.16 L367.18 369.16 L370.32 369.16 L373.47 369.16 L376.61 369.16 L379.76 369.16 L382.91 369.16 L386.05 369.16 L389.20 369.16 L392.34 369.16 L395.49 369.16 L398.64 369.16 L401.78 369.16 L404.93 369.16 L408.07 369.16 L411.22 369.16 L414.37 369.16 L417.51 369.16 L420.66 369.16 L423.80 369.16 L426.95 369.16 L430.10 369.16 L433.24 369.16 L436.39 369.16 L439.53 369.16 L442.68 369.16 L445.83 369.16 L448.97 369.16 L452.12 369.16 L455.27 369.16 L458.41 369.16 L461.56 369.16 L464.70 369.16 L467.85 369.16 L471.00 369.16 L474.14 369.16 L477.29 369.16 L480.43 369.16 L483.58 369.16 L486.73 369.16 L489.87 369.16 L493.02 369.16 L496.16 369.16 L499.31 369.16 L502.46 369.16 L505.60 369.16 L508.75 369.16 L511.89 369.16 L515.04 369.16 L518.19 369.16 L521.33 369.16 L524.48 369.16 L527.62 369.16 L530.77 369.16 L533.92 369.16 L537.06 369.16 L540.21 369.16 L543.35 369.16 L546.50 369.16 L549.65 369.16 L552.79 369.16 L555.94 369.16 L559.08 369.16 L562.23 369.16 L565.38 369.16 L568.52 369.16 L571.67 369.16 L574.81 369.16 L577.96 369.16 L581.11 369.16 L584.25 369.16 L587.40 369.16 L590.54 369.16 L593.69 369.16 L596.84 369.16 L599.98 369.16 L603.13 369.16 L606.27 369.16 L609.42 369.16 L612.57 369.16 L615.71 369.16 L618.86 369.16 L622.00 369.16 L625.15 369.16 L628.30 369.16 L631.44 369.16 L634.59 369.16 L637.73 369.16 L640.88 369.16 L644.03 369.16 L647.17 369.16 L650.32 369.16 L653.46 369.16 L656.61 369.16 L659.76 369.16 L662.90 369.16 L666.05 369.16 L669.19 369.16 L672.34 369.16 L675.49 369.16 L678.63 369.16 L681.78 369.16 L684.92 369.16 L688.07 369.16 L691.22 369.16 L694.36 369.16 L697.51 369.16 L700.65 369.16 L703.80 369.16 L706.95 369.16 L710.09 369.16 L713.24 369.16 L716.38 369.16 L719.53 369.16 L722.68 369.16 L725.82 369.16 L728.97 369.16 L732.11 369.16 L735.26 369.16 L738.41 369.16 L741.55 369.16 L744.70 369.16 L747.84 369.16 L750.99 369.16 L754.14 369.16 L757.28 369.16 L760.43 369.16 L763.58 369.16 L766.72 369.16 L769.87 369.16 L773.01 369.16 L776.16 369.16 L779.31 369.16 L782.45 369.16 L785.60 369.16 L788.74 369.16 L791.89 369.16 L795.04 369.16 L798.18 369.16 L801.33 369.16 L804.47 369.16 L807.62 369.16 L810.77 369.16 L813.91 369.16 L817.06 369.16 L820.20 369.16 L823.35 369.16 L826.50 369.16 L829.64 369.16 L832.79 369.16 L835.93 369.16 L839.08 369.16 L842.23 369.16 L845.37 369.16 L848.52 369.16 L851.66 369.16 L854.81 369.16 L857.96 369.16 L861.10 369.16 L864.25 369.16 L867.39 369.16 L870.54 369.16 L873.69 369.16 L876.83 369.16 L879.98 369.16 L883.12 369.16 L886.27 369.16 L889.42 369.16 L892.56 369.16 L895.71 369.16 L898.85 369.16 L902.00 369.16 L905.15 369.16 L908.29 369.16 L911.44 369.16 L914.58 369.16 L917.73 369.16 L920.88 369.16 L924.02 369.16 L927.17 369.16 L930.31 369.16 L933.46 369.16 L936.61 369.16 L939.75 369.16 L942.90 369.16 L946.04 369.16 L949.19 369.16 L952.34 369.16 L955.48 369.16 L958.63 369.16 L961.77 369.16 L964.92 369.16 L968.07 369.16 L971.21 369.16 L974.36 369.16 L977.50 369.16 L980.65 369.16 L983.80 369.16 L986.94 369.16 L990.09 369.16 L993.23 369.16 L996.38 369.16 L999.53 369.16 L1002.67 369.16 L1005.82 369.16 L1008.96 369.16 L1012.11 369.16 L1015.26 369.16 L1018.40 369.16 L1021.55 369.16 L1024.69 369.16 L1027.84 369.16 L1030.99 369.16 L1034.13 369.16 L1037.28 369.16 L1040.42 369.16 L1043.57 369.16 L1046.72 369.16 L1049.86 369.16 L1053.01 369.16 L1056.16 369.16 L1059.30 369.16 L1062.45 369.16 L1065.59 369.16 L1068.74 369.16 L1071.89 369.16 L1075.03 369.16 L1078.18 369.16 L1081.32 369.16 L1084.47 369.16 L1087.62 369.16 L1090.76 369.16 L1093.91 369.16 L1097.05 369.16 L1100.20 369.16 L1103.35 369.16 L1106.49 369.16 L1109.64 369.16 L1112.78 369.16 L1115.93 369.16 L1119.08 369.16 L1122.22 369.16 L1125.37 369.16 L1128.51 369.16 L1131.66 369.16 L1134.81 369.16 L1137.95 369.16 L1141.10 369.16 L1144.24 369.16 L1147.39 369.16 L1150.54 369.16 L1153.68 369.16 L1156.83 369.16 L1159.97 369.16 L1163.12 369.16 L1166.27 369.16 L1169.41 369.16 L1172.56 369.16 L1175.70 369.16 L1178.85 369.16 L1182.00 369.16 L1185.14 369.16 L1188.29 369.16 L1191.43 369.16 L1194.58 369.16 L1197.73 369.16 L1200.87 369.16 L1204.02 369.16 L1207.16 369.16 L1210.31 369.16 L1213.46 369.16 L1216.60 369.16 L1219.75 369.16 L1222.89 369.16 L1226.04 369.16 L1229.19 369.16 L1232.33 369.16 L1235.48 369.16 L1238.62 369.16 L1241.77 369.16 L1244.92 369.16 L1248.06 369.16 L1251.21 369.16 L1254.35 369.16 L1257.50 369.16 L1260.65 369.16 L1263.79 369.16 L1266.94 369.16 L1270.08 369.16 L1273.23 369.16 L1276.38 369.16 L1279.52 369.16 L1282.67 369.16 L1285.81 369.16 L1288.96 369.16 L1292.11 369.16 L1295.25 369.16 L1298.40 369.16 L1301.54 369.16 L1304.69 369.16 L1307.84 369.16 L1310.98 369.16 L1314.13 369.16 L1317.27 369.16 L1320.42 369.16 L1323.57 369.16 L1326.71 369.16 L1329.86 369.16 L1333.00 369.16 L1336.15 369.16 L1339.30 369.16 L1342.44 369.16 L1345.59 369.16 L1348.73 369.16 L1351.88 369.16 L1355.03 369.16 L1358.17 369.16 L1361.32 369.16 L1364.47 369.16 L1367.61 369.16 L1370.76 369.16 L1373.90 369.16 L1377.05 369.16 L1380.20 369.16 L1383.34 369.16 L1386.49 369.16 L1389.63 369.16 L1392.78 369.16 L1395.93 369.16 L1399.07 369.16 L1402.22 369.16 L1405.36 369.16 L1408.51 369.16 L1411.66 369.16 L1414.80 369.16 L1417.95 369.16 L1421.09 369.16 L1424.24 369.16 L1427.39 369.16 L1430.53 369.16 L1433.68 369.16 L1436.82 369.16 L1439.97 369.16 L1443.12 369.16 L1446.26 369.16 L1449.41 369.16 L1452.55 369.16 L1455.70 369.16 L1458.85 369.16 L1461.99 369.16 L1465.14 369.16 L1468.28 369.16 M315.74 320.30 L319.00 320.30 L322.25 320.30 L325.51 320.30 L328.77 320.30 L332.02 320.30 L335.28 320.30 L338.54 320.30 L341.80 320.30 L345.05 320.30 L348.31 320.30 L351.57 320.30 L354.82 320.30 L358.08 320.30 L361.34 320.30 L364.60 320.30 L367.85 320.30 L371.11 320.30 L374.37 320.30 L377.62 320.30 L380.88 320.30 L384.14 320.30 L387.39 320.30 L390.65 320.30 L393.91 320.30 L397.16 320.30 L400.42 320.30 L403.68 320.30 L406.94 320.30 L410.19 320.30 L413.45 320.30 L416.71 320.30 L419.96 320.30 L423.22 320.30 L426.48 320.30 L429.73 320.30 L432.99 320.30 L436.25 320.30 L439.51 320.30 L442.76 320.30 L446.02 320.30 L449.28 320.30 L452.53 320.30 L455.79 320.30 L459.05 320.30 L462.31 320.30 L465.56 320.30 L468.82 320.30 L472.08 320.30 L475.33 320.30 L478.59 320.30 L481.85 320.30 L485.10 320.30 L488.36 320.30 L491.62 320.30 L494.88 320.30 L498.13 320.30 L501.39 320.30 L504.65 320.30 L507.90 320.30 L511.16 320.30 L514.42 320.30 L517.67 320.30 L520.93 320.30 L524.19 320.30 L527.44 320.30 L530.70 320.30 L533.96 320.30 L537.22 320.30 L540.47 320.30 L543.73 320.30 L546.99 320.30 L550.24 320.30 L553.50 320.30 L556.76 320.30 L560.01 320.30 L563.27 320.30 L566.53 320.30 L569.79 320.30 L573.04 320.30 L576.30 320.30 L579.56 320.30 L582.81 320.30 L586.07 320.30 L589.33 320.30 L592.59 320.30 L595.84 320.30 L599.10 320.30 L602.36 320.30 L605.61 320.30 L608.87 320.30 L612.13 320.30 L615.38 320.30 L618.64 320.30 L621.90 320.30 L625.15 320.30 L628.41 320.30 L631.67 320.30 L634.93 320.30 L638.18 320.30 L641.44 320.30 L644.70 320.30 L647.95 320.30 L651.21 320.30 L654.47 320.30 L657.73 320.30 L660.98 320.30 L664.24 320.30 L667.50 320.30 L670.75 320.30 L674.01 320.30 L677.27 320.30 L680.52 320.30 L683.78 320.30 L687.04 320.30 L690.29 320.30 L693.55 320.30 L696.81 320.30 L700.07 320.30 L703.32 320.30 L706.58 320.30 L709.84 320.30 L713.09 320.30 L716.35 320.30 L719.61 320.30 L722.87 320.30 L726.12 320.30 L729.38 320.30 L732.64 320.30 L735.89 320.30 L739.15 320.30 L742.41 320.30 L745.66 320.30 L748.92 320.30 L752.18 320.30 L755.43 320.30 L758.69 320.30 L761.95 320.30 L765.21 320.30 L768.46 320.30 L771.72 320.30 L774.98 320.30 L778.23 320.30 L781.49 320.30 L784.75 320.30 L788.00 320.30 L791.26 320.30 L794.52 320.30 L797.78 320.30 L801.03 320.30 L804.29 320.30 L807.55 320.30 L810.80 320.30 L814.06 320.30 L817.32 320.30 L820.58 320.30 L823.83 320.30 L827.09 320.30 L830.35 320.30 L833.60 320.30 L836.86 320.30 L840.12 320.30 L843.37 320.30 L846.63 320.30 L849.89 320.30 L853.14 320.30 L856.40 320.30 L859.66 320.30 L862.92 320.30 L866.17 320.30 L869.43 320.30 L872.69 320.30 L875.94 320.30 L879.20 320.30 L882.46 320.30 L885.72 320.30 L888.97 320.30 L892.23 320.30 L895.49 320.30 L898.74 320.30 L902.00 320.30 L905.26 320.30 L908.51 320.30 L911.77 320.30 L915.03 320.30 L918.28 320.30 L921.54 320.30 L924.80 320.30 L928.06 320.30 L931.31 320.30 L934.57 320.30 L937.83 320.30 L941.08 320.30 L944.34 320.30 L947.60 320.30 L950.86 320.30 L954.11 320.30 L957.37 320.30 L960.63 320.30 L963.88 320.30 L967.14 320.30 L970.40 320.30 L973.65 320.30 L976.91 320.30 L980.17 320.30 L983.42 320.30 L986.68 320.30 L989.94 320.30 L993.20 320.30 L996.45 320.30 L999.71 320.30 L1002.97 320.30 L1006.22 320.30 L1009.48 320.30 L1012.74 320.30 L1016.00 320.30 L1019.25 320.30 L1022.51 320.30 L1025.77 320.30 L1029.02 320.30 L1032.28 320.30 L1035.54 320.30 L1038.79 320.30 L1042.05 320.30 L1045.31 320.30 L1048.57 320.30 L1051.82 320.30 L1055.08 320.30 L1058.34 320.30 L1061.59 320.30 L1064.85 320.30 L1068.11 320.30 L1071.36 320.30 L1074.62 320.30 L1077.88 320.30 L1081.13 320.30 L1084.39 320.30 L1087.65 320.30 L1090.91 320.30 L1094.16 320.30 L1097.42 320.30 L1100.68 320.30 L1103.93 320.30 L1107.19 320.30 L1110.45 320.30 L1113.70 320.30 L1116.96 320.30 L1120.22 320.30 L1123.48 320.30 L1126.73 320.30 L1129.99 320.30 L1133.25 320.30 L1136.50 320.30 L1139.76 320.30 L1143.02 320.30 L1146.28 320.30 L1149.53 320.30 L1152.79 320.30 L1156.05 320.30 L1159.30 320.30 L1162.56 320.30 L1165.82 320.30 L1169.07 320.30 L1172.33 320.30 L1175.59 320.30 L1178.85 320.30 L1182.10 320.30 L1185.36 320.30 L1188.62 320.30 L1191.87 320.30 L1195.13 320.30 L1198.39 320.30 L1201.64 320.30 L1204.90 320.30 L1208.16 320.30 L1211.41 320.30 L1214.67 320.30 L1217.93 320.30 L1221.19 320.30 L1224.44 320.30 L1227.70 320.30 L1230.96 320.30 L1234.21 320.30 L1237.47 320.30 L1240.73 320.30 L1243.99 320.30 L1247.24 320.30 L1250.50 320.30 L1253.76 320.30 L1257.01 320.30 L1260.27 320.30 L1263.53 320.30 L1266.78 320.30 L1270.04 320.30 L1273.30 320.30 L1276.56 320.30 L1279.81 320.30 L1283.07 320.30 L1286.33 320.30 L1289.58 320.30 L1292.84 320.30 L1296.10 320.30 L1299.35 320.30 L1302.61 320.30 L1305.87 320.30 L1309.12 320.30 L1312.38 320.30 L1315.64 320.30 L1318.90 320.30 L1322.15 320.30 L1325.41 320.30 L1328.67 320.30 L1331.92 320.30 L1335.18 320.30 L1338.44 320.30 L1341.69 320.30 L1344.95 320.30 L1348.21 320.30 L1351.47 320.30 L1354.72 320.30 L1357.98 320.30 L1361.24 320.30 L1364.49 320.30 L1367.75 320.30 L1371.01 320.30 L1374.27 320.30 L1377.52 320.30 L1380.78 320.30 L1384.04 320.30 L1387.29 320.30 L1390.55 320.30 L1393.81 320.30 L1397.06 320.30 L1400.32 320.30 L1403.58 320.30 L1406.84 320.30 L1410.09 320.30 L1413.35 320.30 L1416.61 320.30 L1419.86 320.30 L1423.12 320.30 L1426.38 320.30 L1429.63 320.30 L1432.89 320.30 L1436.15 320.30 L1439.40 320.30 L1442.66 320.30 L1445.92 320.30 L1449.18 320.30 L1452.43 320.30 L1455.69 320.30 L1458.95 320.30 L1462.20 320.30 L1465.46 320.30 L1468.72 320.30 L1471.97 320.30 L1475.23 320.30 L1478.49 320.30 L1481.75 320.30 L1485.00 320.30 L1488.26 320.30 M335.72 271.44 L338.86 271.44 L342.01 271.44 L345.15 271.44 L348.30 271.44 L351.45 271.44 L354.59 271.44 L357.74 271.44 L360.88 271.44 L364.03 271.44 L367.18 271.44 L370.32 271.44 L373.47 271.44 L376.61 271.44 L379.76 271.44 L382.91 271.44 L386.05 271.44 L389.20 271.44 L392.34 271.44 L395.49 271.44 L398.64 271.44 L401.78 271.44 L404.93 271.44 L408.07 271.44 L411.22 271.44 L414.37 271.44 L417.51 271.44 L420.66 271.44 L423.80 271.44 L426.95 271.44 L430.10 271.44 L433.24 271.44 L436.39 271.44 L439.53 271.44 L442.68 271.44 L445.83 271.44 L448.97 271.44 L452.12 271.44 L455.27 271.44 L458.41 271.44 L461.56 271.44 L464.70 271.44 L467.85 271.44 L471.00 271.44 L474.14 271.44 L477.29 271.44 L480.43 271.44 L483.58 271.44 L486.73 271.44 L489.87 271.44 L493.02 271.44 L496.16 271.44 L499.31 271.44 L502.46 271.44 L505.60 271.44 L508.75 271.44 L511.89 271.44 L515.04 271.44 L518.19 271.44 L521.33 271.44 L524.48 271.44 L527.62 271.44 L530.77 271.44 L533.92 271.44 L537.06 271.44 L540.21 271.44 L543.35 271.44 L546.50 271.44 L549.65 271.44 L552.79 271.44 L555.94 271.44 L559.08 271.44 L562.23 271.44 L565.38 271.44 L568.52 271.44 L571.67 271.44 L574.81 271.44 L577.96 271.44 L581.11 271.44 L584.25 271.44 L587.40 271.44 L590.54 271.44 L593.69 271.44 L596.84 271.44 L599.98 271.44 L603.13 271.44 L606.27 271.44 L609.42 271.44 L612.57 271.44 L615.71 271.44 L618.86 271.44 L622.00 271.44 L625.15 271.44 L628.30 271.44 L631.44 271.44 L634.59 271.44 L637.73 271.44 L640.88 271.44 L644.03 271.44 L647.17 271.44 L650.32 271.44 L653.46 271.44 L656.61 271.44 L659.76 271.44 L662.90 271.44 L666.05 271.44 L669.19 271.44 L672.34 271.44 L675.49 271.44 L678.63 271.44 L681.78 271.44 L684.92 271.44 L688.07 271.44 L691.22 271.44 L694.36 271.44 L697.51 271.44 L700.65 271.44 L703.80 271.44 L706.95 271.44 L710.09 271.44 L713.24 271.44 L716.38 271.44 L719.53 271.44 L722.68 271.44 L725.82 271.44 L728.97 271.44 L732.11 271.44 L735.26 271.44 L738.41 271.44 L741.55 271.44 L744.70 271.44 L747.84 271.44 L750.99 271.44 L754.14 271.44 L757.28 271.44 L760.43 271.44 L763.58 271.44 L766.72 271.44 L769.87 271.44 L773.01 271.44 L776.16 271.44 L779.31 271.44 L782.45 271.44 L785.60 271.44 L788.74 271.44 L791.89 271.44 L795.04 271.44 L798.18 271.44 L801.33 271.44 L804.47 271.44 L807.62 271.44 L810.77 271.44 L813.91 271.44 L817.06 271.44 L820.20 271.44 L823.35 271.44 L826.50 271.44 L829.64 271.44 L832.79 271.44 L835.93 271.44 L839.08 271.44 L842.23 271.44 L845.37 271.44 L848.52 271.44 L851.66 271.44 L854.81 271.44 L857.96 271.44 L861.10 271.44 L864.25 271.44 L867.39 271.44 L870.54 271.44 L873.69 271.44 L876.83 271.44 L879.98 271.44 L883.12 271.44 L886.27 271.44 L889.42 271.44 L892.56 271.44 L895.71 271.44 L898.85 271.44 L902.00 271.44 L905.15 271.44 L908.29 271.44 L911.44 271.44 L914.58 271.44 L917.73 271.44 L920.88 271.44 L924.02 271.44 L927.17 271.44 L930.31 271.44 L933.46 271.44 L936.61 271.44 L939.75 271.44 L942.90 271.44 L946.04 271.44 L949.19 271.44 L952.34 271.44 L955.48 271.44 L958.63 271.44 L961.77 271.44 L964.92 271.44 L968.07 271.44 L971.21 271.44 L974.36 271.44 L977.50 271.44 L980.65 271.44 L983.80 271.44 L986.94 271.44 L990.09 271.44 L993.23 271.44 L996.38 271.44 L999.53 271.44 L1002.67 271.44 L1005.82 271.44 L1008.96 271.44 L1012.11 271.44 L1015.26 271.44 L1018.40 271.44 L1021.55 271.44 L1024.69 271.44 L1027.84 271.44 L1030.99 271.44 L1034.13 271.44 L1037.28 271.44 L1040.42 271.44 L1043.57 271.44 L1046.72 271.44 L1049.86 271.44 L1053.01 271.44 L1056.16 271.44 L1059.30 271.44 L1062.45 271.44 L1065.59 271.44 L1068.74 271.44 L1071.89 271.44 L1075.03 271.44 L1078.18 271.44 L1081.32 271.44 L1084.47 271.44 L1087.62 271.44 L1090.76 271.44 L1093.91 271.44 L1097.05 271.44 L1100.20 271.44 L1103.35 271.44 L1106.49 271.44 L1109.64 271.44 L1112.78 271.44 L1115.93 271.44 L1119.08 271.44 L1122.22 271.44 L1125.37 271.44 L1128.51 271.44 L1131.66 271.44 L1134.81 271.44 L1137.95 271.44 L1141.10 271.44 L1144.24 271.44 L1147.39 271.44 L1150.54 271.44 L1153.68 271.44 L1156.83 271.44 L1159.97 271.44 L1163.12 271.44 L1166.27 271.44 L1169.41 271.44 L1172.56 271.44 L1175.70 271.44 L1178.85 271.44 L1182.00 271.44 L1185.14 271.44 L1188.29 271.44 L1191.43 271.44 L1194.58 271.44 L1197.73 271.44 L1200.87 271.44 L1204.02 271.44 L1207.16 271.44 L1210.31 271.44 L1213.46 271.44 L1216.60 271.44 L1219.75 271.44 L1222.89 271.44 L1226.04 271.44 L1229.19 271.44 L1232.33 271.44 L1235.48 271.44 L1238.62 271.44 L1241.77 271.44 L1244.92 271.44 L1248.06 271.44 L1251.21 271.44 L1254.35 271.44 L1257.50 271.44 L1260.65 271.44 L1263.79 271.44 L1266.94 271.44 L1270.08 271.44 L1273.23 271.44 L1276.38 271.44 L1279.52 271.44 L1282.67 271.44 L1285.81 271.44 L1288.96 271.44 L1292.11 271.44 L1295.25 271.44 L1298.40 271.44 L1301.54 271.44 L1304.69 271.44 L1307.84 271.44 L1310.98 271.44 L1314.13 271.44 L1317.27 271.44 L1320.42 271.44 L1323.57 271.44 L1326.71 271.44 L1329.86 271.44 L1333.00 271.44 L1336.15 271.44 L1339.30 271.44 L1342.44 271.44 L1345.59 271.44 L1348.73 271.44 L1351.88 271.44 L1355.03 271.44 L1358.17 271.44 L1361.32 271.44 L1364.47 271.44 L1367.61 271.44 L1370.76 271.44 L1373.90 271.44 L1377.05 271.44 L1380.20 271.44 L1383.34 271.44 L1386.49 271.44 L1389.63 271.44 L1392.78 271.44 L1395.93 271.44 L1399.07 271.44 L1402.22 271.44 L1405.36 271.44 L1408.51 271.44 L1411.66 271.44 L1414.80 271.44 L1417.95 271.44 L1421.09 271.44 L1424.24 271.44 L1427.39 271.44 L1430.53 271.44 L1433.68 271.44 L1436.82 271.44 L1439.97 271.44 L1443.12 271.44 L1446.26 271.44 L1449.41 271.44 L1452.55 271.44 L1455.70 271.44 L1458.85 271.44 L1461.99 271.44 L1465.14 271.44 L1468.28 271.44 M394.28 222.59 L397.10 222.59 L399.93 222.59 L402.75 222.59 L405.57 222.59 L408.39 222.59 L411.21 222.59 L414.03 222.59 L416.85 222.59 L419.67 222.59 L422.49 222.59 L425.31 222.59 L428.13 222.59 L430.95 222.59 L433.77 222.59 L436.59 222.59 L439.41 222.59 L442.23 222.59 L445.06 222.59 L447.88 222.59 L450.70 222.59 L453.52 222.59 L456.34 222.59 L459.16 222.59 L461.98 222.59 L464.80 222.59 L467.62 222.59 L470.44 222.59 L473.26 222.59 L476.08 222.59 L478.90 222.59 L481.72 222.59 L484.54 222.59 L487.37 222.59 L490.19 222.59 L493.01 222.59 L495.83 222.59 L498.65 222.59 L501.47 222.59 L504.29 222.59 L507.11 222.59 L509.93 222.59 L512.75 222.59 L515.57 222.59 L518.39 222.59 L521.21 222.59 L524.03 222.59 L526.85 222.59 L529.67 222.59 L532.50 222.59 L535.32 222.59 L538.14 222.59 L540.96 222.59 L543.78 222.59 L546.60 222.59 L549.42 222.59 L552.24 222.59 L555.06 222.59 L557.88 222.59 L560.70 222.59 L563.52 222.59 L566.34 222.59 L569.16 222.59 L571.98 222.59 L574.81 222.59 L577.63 222.59 L580.45 222.59 L583.27 222.59 L586.09 222.59 L588.91 222.59 L591.73 222.59 L594.55 222.59 L597.37 222.59 L600.19 222.59 L603.01 222.59 L605.83 222.59 L608.65 222.59 L611.47 222.59 L614.29 222.59 L617.11 222.59 L619.94 222.59 L622.76 222.59 L625.58 222.59 L628.40 222.59 L631.22 222.59 L634.04 222.59 L636.86 222.59 L639.68 222.59 L642.50 222.59 L645.32 222.59 L648.14 222.59 L650.96 222.59 L653.78 222.59 L656.60 222.59 L659.42 222.59 L662.25 222.59 L665.07 222.59 L667.89 222.59 L670.71 222.59 L673.53 222.59 L676.35 222.59 L679.17 222.59 L681.99 222.59 L684.81 222.59 L687.63 222.59 L690.45 222.59 L693.27 222.59 L696.09 222.59 L698.91 222.59 L701.73 222.59 L704.55 222.59 L707.38 222.59 L710.20 222.59 L713.02 222.59 L715.84 222.59 L718.66 222.59 L721.48 222.59 L724.30 222.59 L727.12 222.59 L729.94 222.59 L732.76 222.59 L735.58 222.59 L738.40 222.59 L741.22 222.59 L744.04 222.59 L746.86 222.59 L749.69 222.59 L752.51 222.59 L755.33 222.59 L758.15 222.59 L760.97 222.59 L763.79 222.59 L766.61 222.59 L769.43 222.59 L772.25 222.59 L775.07 222.59 L777.89 222.59 L780.71 222.59 L783.53 222.59 L786.35 222.59 L789.17 222.59 L791.99 222.59 L794.82 222.59 L797.64 222.59 L800.46 222.59 L803.28 222.59 L806.10 222.59 L808.92 222.59 L811.74 222.59 L814.56 222.59 L817.38 222.59 L820.20 222.59 L823.02 222.59 L825.84 222.59 L828.66 222.59 L831.48 222.59 L834.30 222.59 L837.13 222.59 L839.95 222.59 L842.77 222.59 L845.59 222.59 L848.41 222.59 L851.23 222.59 L854.05 222.59 L856.87 222.59 L859.69 222.59 L862.51 222.59 L865.33 222.59 L868.15 222.59 L870.97 222.59 L873.79 222.59 L876.61 222.59 L879.43 222.59 L882.26 222.59 L885.08 222.59 L887.90 222.59 L890.72 222.59 L893.54 222.59 L896.36 222.59 L899.18 222.59 L902.00 222.59 L904.82 222.59 L907.64 222.59 L910.46 222.59 L913.28 222.59 L916.10 222.59 L918.92 222.59 L921.74 222.59 L924.57 222.59 L927.39 222.59 L930.21 222.59 L933.03 222.59 L935.85 222.59 L938.67 222.59 L941.49 222.59 L944.31 222.59 L947.13 222.59 L949.95 222.59 L952.77 222.59 L955.59 222.59 L958.41 222.59 L961.23 222.59 L964.05 222.59 L966.87 222.59 L969.70 222.59 L972.52 222.59 L975.34 222.59 L978.16 222.59 L980.98 222.59 L983.80 222.59 L986.62 222.59 L989.44 222.59 L992.26 222.59 L995.08 222.59 L997.90 222.59 L1000.72 222.59 L1003.54 222.59 L1006.36 222.59 L1009.18 222.59 L1012.01 222.59 L1014.83 222.59 L1017.65 222.59 L1020.47 222.59 L1023.29 222.59 L1026.11 222.59 L1028.93 222.59 L1031.75 222.59 L1034.57 222.59 L1037.39 222.59 L1040.21 222.59 L1043.03 222.59 L1045.85 222.59 L1048.67 222.59 L1051.49 222.59 L1054.31 222.59 L1057.14 222.59 L1059.96 222.59 L1062.78 222.59 L1065.60 222.59 L1068.42 222.59 L1071.24 222.59 L1074.06 222.59 L1076.88 222.59 L1079.70 222.59 L1082.52 222.59 L1085.34 222.59 L1088.16 222.59 L1090.98 222.59 L1093.80 222.59 L1096.62 222.59 L1099.45 222.59 L1102.27 222.59 L1105.09 222.59 L1107.91 222.59 L1110.73 222.59 L1113.55 222.59 L1116.37 222.59 L1119.19 222.59 L1122.01 222.59 L1124.83 222.59 L1127.65 222.59 L1130.47 222.59 L1133.29 222.59 L1136.11 222.59 L1138.93 222.59 L1141.75 222.59 L1144.58 222.59 L1147.40 222.59 L1150.22 222.59 L1153.04 222.59 L1155.86 222.59 L1158.68 222.59 L1161.50 222.59 L1164.32 222.59 L1167.14 222.59 L1169.96 222.59 L1172.78 222.59 L1175.60 222.59 L1178.42 222.59 L1181.24 222.59 L1184.06 222.59 L1186.89 222.59 L1189.71 222.59 L1192.53 222.59 L1195.35 222.59 L1198.17 222.59 L1200.99 222.59 L1203.81 222.59 L1206.63 222.59 L1209.45 222.59 L1212.27 222.59 L1215.09 222.59 L1217.91 222.59 L1220.73 222.59 L1223.55 222.59 L1226.37 222.59 L1229.19 222.59 L1232.02 222.59 L1234.84 222.59 L1237.66 222.59 L1240.48 222.59 L1243.30 222.59 L1246.12 222.59 L1248.94 222.59 L1251.76 222.59 L1254.58 222.59 L1257.40 222.59 L1260.22 222.59 L1263.04 222.59 L1265.86 222.59 L1268.68 222.59 L1271.50 222.59 L1274.33 222.59 L1277.15 222.59 L1279.97 222.59 L1282.79 222.59 L1285.61 222.59 L1288.43 222.59 L1291.25 222.59 L1294.07 222.59 L1296.89 222.59 L1299.71 222.59 L1302.53 222.59 L1305.35 222.59 L1308.17 222.59 L1310.99 222.59 L1313.81 222.59 L1316.63 222.59 L1319.46 222.59 L1322.28 222.59 L1325.10 222.59 L1327.92 222.59 L1330.74 222.59 L1333.56 222.59 L1336.38 222.59 L1339.20 222.59 L1342.02 222.59 L1344.84 222.59 L1347.66 222.59 L1350.48 222.59 L1353.30 222.59 L1356.12 222.59 L1358.94 222.59 L1361.77 222.59 L1364.59 222.59 L1367.41 222.59 L1370.23 222.59 L1373.05 222.59 L1375.87 222.59 L1378.69 222.59 L1381.51 222.59 L1384.33 222.59 L1387.15 222.59 L1389.97 222.59 L1392.79 222.59 L1395.61 222.59 L1398.43 222.59 L1401.25 222.59 L1404.07 222.59 L1406.90 222.59 L1409.72 222.59 M487.45 173.74 L489.75 173.74 L492.06 173.74 L494.36 173.74 L496.66 173.74 L498.97 173.74 L501.27 173.74 L503.57 173.74 L505.88 173.74 L508.18 173.74 L510.48 173.74 L512.79 173.74 L515.09 173.74 L517.39 173.74 L519.69 173.74 L522.00 173.74 L524.30 173.74 L526.60 173.74 L528.91 173.74 L531.21 173.74 L533.51 173.74 L535.82 173.74 L538.12 173.74 L540.42 173.74 L542.72 173.74 L545.03 173.74 L547.33 173.74 L549.63 173.74 L551.94 173.74 L554.24 173.74 L556.54 173.74 L558.85 173.74 L561.15 173.74 L563.45 173.74 L565.76 173.74 L568.06 173.74 L570.36 173.74 L572.66 173.74 L574.97 173.74 L577.27 173.74 L579.57 173.74 L581.88 173.74 L584.18 173.74 L586.48 173.74 L588.79 173.74 L591.09 173.74 L593.39 173.74 L595.69 173.74 L598.00 173.74 L600.30 173.74 L602.60 173.74 L604.91 173.74 L607.21 173.74 L609.51 173.74 L611.82 173.74 L614.12 173.74 L616.42 173.74 L618.73 173.74 L621.03 173.74 L623.33 173.74 L625.63 173.74 L627.94 173.74 L630.24 173.74 L632.54 173.74 L634.85 173.74 L637.15 173.74 L639.45 173.74 L641.76 173.74 L644.06 173.74 L646.36 173.74 L648.66 173.74 L650.97 173.74 L653.27 173.74 L655.57 173.74 L657.88 173.74 L660.18 173.74 L662.48 173.74 L664.79 173.74 L667.09 173.74 L669.39 173.74 L671.70 173.74 L674.00 173.74 L676.30 173.74 L678.60 173.74 L680.91 173.74 L683.21 173.74 L685.51 173.74 L687.82 173.74 L690.12 173.74 L692.42 173.74 L694.73 173.74 L697.03 173.74 L699.33 173.74 L701.63 173.74 L703.94 173.74 L706.24 173.74 L708.54 173.74 L710.85 173.74 L713.15 173.74 L715.45 173.74 L717.76 173.74 L720.06 173.74 L722.36 173.74 L724.67 173.74 L726.97 173.74 L729.27 173.74 L731.57 173.74 L733.88 173.74 L736.18 173.74 L738.48 173.74 L740.79 173.74 L743.09 173.74 L745.39 173.74 L747.70 173.74 L750.00 173.74 L752.30 173.74 L754.61 173.74 L756.91 173.74 L759.21 173.74 L761.51 173.74 L763.82 173.74 L766.12 173.74 L768.42 173.74 L770.73 173.74 L773.03 173.74 L775.33 173.74 L777.64 173.74 L779.94 173.74 L782.24 173.74 L784.54 173.74 L786.85 173.74 L789.15 173.74 L791.45 173.74 L793.76 173.74 L796.06 173.74 L798.36 173.74 L800.67 173.74 L802.97 173.74 L805.27 173.74 L807.58 173.74 L809.88 173.74 L812.18 173.74 L814.48 173.74 L816.79 173.74 L819.09 173.74 L821.39 173.74 L823.70 173.74 L826.00 173.74 L828.30 173.74 L830.61 173.74 L832.91 173.74 L835.21 173.74 L837.51 173.74 L839.82 173.74 L842.12 173.74 L844.42 173.74 L846.73 173.74 L849.03 173.74 L851.33 173.74 L853.64 173.74 L855.94 173.74 L858.24 173.74 L860.55 173.74 L862.85 173.74 L865.15 173.74 L867.45 173.74 L869.76 173.74 L872.06 173.74 L874.36 173.74 L876.67 173.74 L878.97 173.74 L881.27 173.74 L883.58 173.74 L885.88 173.74 L888.18 173.74 L890.48 173.74 L892.79 173.74 L895.09 173.74 L897.39 173.74 L899.70 173.74 L902.00 173.74 L904.30 173.74 L906.61 173.74 L908.91 173.74 L911.21 173.74 L913.52 173.74 L915.82 173.74 L918.12 173.74 L920.42 173.74 L922.73 173.74 L925.03 173.74 L927.33 173.74 L929.64 173.74 L931.94 173.74 L934.24 173.74 L936.55 173.74 L938.85 173.74 L941.15 173.74 L943.45 173.74 L945.76 173.74 L948.06 173.74 L950.36 173.74 L952.67 173.74 L954.97 173.74 L957.27 173.74 L959.58 173.74 L961.88 173.74 L964.18 173.74 L966.49 173.74 L968.79 173.74 L971.09 173.74 L973.39 173.74 L975.70 173.74 L978.00 173.74 L980.30 173.74 L982.61 173.74 L984.91 173.74 L987.21 173.74 L989.52 173.74 L991.82 173.74 L994.12 173.74 L996.42 173.74 L998.73 173.74 L1001.03 173.74 L1003.33 173.74 L1005.64 173.74 L1007.94 173.74 L1010.24 173.74 L1012.55 173.74 L1014.85 173.74 L1017.15 173.74 L1019.46 173.74 L1021.76 173.74 L1024.06 173.74 L1026.36 173.74 L1028.67 173.74 L1030.97 173.74 L1033.27 173.74 L1035.58 173.74 L1037.88 173.74 L1040.18 173.74 L1042.49 173.74 L1044.79 173.74 L1047.09 173.74 L1049.39 173.74 L1051.70 173.74 L1054.00 173.74 L1056.30 173.74 L1058.61 173.74 L1060.91 173.74 L1063.21 173.74 L1065.52 173.74 L1067.82 173.74 L1070.12 173.74 L1072.43 173.74 L1074.73 173.74 L1077.03 173.74 L1079.33 173.74 L1081.64 173.74 L1083.94 173.74 L1086.24 173.74 L1088.55 173.74 L1090.85 173.74 L1093.15 173.74 L1095.46 173.74 L1097.76 173.74 L1100.06 173.74 L1102.37 173.74 L1104.67 173.74 L1106.97 173.74 L1109.27 173.74 L1111.58 173.74 L1113.88 173.74 L1116.18 173.74 L1118.49 173.74 L1120.79 173.74 L1123.09 173.74 L1125.40 173.74 L1127.70 173.74 L1130.00 173.74 L1132.30 173.74 L1134.61 173.74 L1136.91 173.74 L1139.21 173.74 L1141.52 173.74 L1143.82 173.74 L1146.12 173.74 L1148.43 173.74 L1150.73 173.74 L1153.03 173.74 L1155.34 173.74 L1157.64 173.74 L1159.94 173.74 L1162.24 173.74 L1164.55 173.74 L1166.85 173.74 L1169.15 173.74 L1171.46 173.74 L1173.76 173.74 L1176.06 173.74 L1178.37 173.74 L1180.67 173.74 L1182.97 173.74 L1185.27 173.74 L1187.58 173.74 L1189.88 173.74 L1192.18 173.74 L1194.49 173.74 L1196.79 173.74 L1199.09 173.74 L1201.40 173.74 L1203.70 173.74 L1206.00 173.74 L1208.31 173.74 L1210.61 173.74 L1212.91 173.74 L1215.21 173.74 L1217.52 173.74 L1219.82 173.74 L1222.12 173.74 L1224.43 173.74 L1226.73 173.74 L1229.03 173.74 L1231.34 173.74 L1233.64 173.74 L1235.94 173.74 L1238.24 173.74 L1240.55 173.74 L1242.85 173.74 L1245.15 173.74 L1247.46 173.74 L1249.76 173.74 L1252.06 173.74 L1254.37 173.74 L1256.67 173.74 L1258.97 173.74 L1261.28 173.74 L1263.58 173.74 L1265.88 173.74 L1268.18 173.74 L1270.49 173.74 L1272.79 173.74 L1275.09 173.74 L1277.40 173.74 L1279.70 173.74 L1282.00 173.74 L1284.31 173.74 L1286.61 173.74 L1288.91 173.74 L1291.21 173.74 L1293.52 173.74 L1295.82 173.74 L1298.12 173.74 L1300.43 173.74 L1302.73 173.74 L1305.03 173.74 L1307.34 173.74 L1309.64 173.74 L1311.94 173.74 L1314.25 173.74 L1316.55 173.74 M608.87 124.88 L610.50 124.88 L612.13 124.88 L613.76 124.88 L615.38 124.88 L617.01 124.88 L618.64 124.88 L620.27 124.88 L621.90 124.88 L623.53 124.88 L625.15 124.88 L626.78 124.88 L628.41 124.88 L630.04 124.88 L631.67 124.88 L633.30 124.88 L634.93 124.88 L636.55 124.88 L638.18 124.88 L639.81 124.88 L641.44 124.88 L643.07 124.88 L644.70 124.88 L646.33 124.88 L647.95 124.88 L649.58 124.88 L651.21 124.88 L652.84 124.88 L654.47 124.88 L656.10 124.88 L657.72 124.88 L659.35 124.88 L660.98 124.88 L662.61 124.88 L664.24 124.88 L665.87 124.88 L667.50 124.88 L669.12 124.88 L670.75 124.88 L672.38 124.88 L674.01 124.88 L675.64 124.88 L677.27 124.88 L678.90 124.88 L680.52 124.88 L682.15 124.88 L683.78 124.88 L685.41 124.88 L687.04 124.88 L688.67 124.88 L690.29 124.88 L691.92 124.88 L693.55 124.88 L695.18 124.88 L696.81 124.88 L698.44 124.88 L700.07 124.88 L701.69 124.88 L703.32 124.88 L704.95 124.88 L706.58 124.88 L708.21 124.88 L709.84 124.88 L711.47 124.88 L713.09 124.88 L714.72 124.88 L716.35 124.88 L717.98 124.88 L719.61 124.88 L721.24 124.88 L722.87 124.88 L724.49 124.88 L726.12 124.88 L727.75 124.88 L729.38 124.88 L731.01 124.88 L732.64 124.88 L734.26 124.88 L735.89 124.88 L737.52 124.88 L739.15 124.88 L740.78 124.88 L742.41 124.88 L744.04 124.88 L745.66 124.88 L747.29 124.88 L748.92 124.88 L750.55 124.88 L752.18 124.88 L753.81 124.88 L755.43 124.88 L757.06 124.88 L758.69 124.88 L760.32 124.88 L761.95 124.88 L763.58 124.88 L765.21 124.88 L766.83 124.88 L768.46 124.88 L770.09 124.88 L771.72 124.88 L773.35 124.88 L774.98 124.88 L776.61 124.88 L778.23 124.88 L779.86 124.88 L781.49 124.88 L783.12 124.88 L784.75 124.88 L786.38 124.88 L788.00 124.88 L789.63 124.88 L791.26 124.88 L792.89 124.88 L794.52 124.88 L796.15 124.88 L797.78 124.88 L799.40 124.88 L801.03 124.88 L802.66 124.88 L804.29 124.88 L805.92 124.88 L807.55 124.88 L809.18 124.88 L810.80 124.88 L812.43 124.88 L814.06 124.88 L815.69 124.88 L817.32 124.88 L818.95 124.88 L820.58 124.88 L822.20 124.88 L823.83 124.88 L825.46 124.88 L827.09 124.88 L828.72 124.88 L830.35 124.88 L831.97 124.88 L833.60 124.88 L835.23 124.88 L836.86 124.88 L838.49 124.88 L840.12 124.88 L841.75 124.88 L843.37 124.88 L845.00 124.88 L846.63 124.88 L848.26 124.88 L849.89 124.88 L851.52 124.88 L853.14 124.88 L854.77 124.88 L856.40 124.88 L858.03 124.88 L859.66 124.88 L861.29 124.88 L862.92 124.88 L864.54 124.88 L866.17 124.88 L867.80 124.88 L869.43 124.88 L871.06 124.88 L872.69 124.88 L874.32 124.88 L875.94 124.88 L877.57 124.88 L879.20 124.88 L880.83 124.88 L882.46 124.88 L884.09 124.88 L885.72 124.88 L887.34 124.88 L888.97 124.88 L890.60 124.88 L892.23 124.88 L893.86 124.88 L895.49 124.88 L897.11 124.88 L898.74 124.88 L900.37 124.88 L902.00 124.88 L903.63 124.88 L905.26 124.88 L906.89 124.88 L908.51 124.88 L910.14 124.88 L911.77 124.88 L913.40 124.88 L915.03 124.88 L916.66 124.88 L918.28 124.88 L919.91 124.88 L921.54 124.88 L923.17 124.88 L924.80 124.88 L926.43 124.88 L928.06 124.88 L929.68 124.88 L931.31 124.88 L932.94 124.88 L934.57 124.88 L936.20 124.88 L937.83 124.88 L939.46 124.88 L941.08 124.88 L942.71 124.88 L944.34 124.88 L945.97 124.88 L947.60 124.88 L949.23 124.88 L950.86 124.88 L952.48 124.88 L954.11 124.88 L955.74 124.88 L957.37 124.88 L959.00 124.88 L960.63 124.88 L962.25 124.88 L963.88 124.88 L965.51 124.88 L967.14 124.88 L968.77 124.88 L970.40 124.88 L972.03 124.88 L973.65 124.88 L975.28 124.88 L976.91 124.88 L978.54 124.88 L980.17 124.88 L981.80 124.88 L983.42 124.88 L985.05 124.88 L986.68 124.88 L988.31 124.88 L989.94 124.88 L991.57 124.88 L993.20 124.88 L994.82 124.88 L996.45 124.88 L998.08 124.88 L999.71 124.88 L1001.34 124.88 L1002.97 124.88 L1004.60 124.88 L1006.22 124.88 L1007.85 124.88 L1009.48 124.88 L1011.11 124.88 L1012.74 124.88 L1014.37 124.88 L1016.00 124.88 L1017.62 124.88 L1019.25 124.88 L1020.88 124.88 L1022.51 124.88 L1024.14 124.88 L1025.77 124.88 L1027.39 124.88 L1029.02 124.88 L1030.65 124.88 L1032.28 124.88 L1033.91 124.88 L1035.54 124.88 L1037.17 124.88 L1038.79 124.88 L1040.42 124.88 L1042.05 124.88 L1043.68 124.88 L1045.31 124.88 L1046.94 124.88 L1048.57 124.88 L1050.19 124.88 L1051.82 124.88 L1053.45 124.88 L1055.08 124.88 L1056.71 124.88 L1058.34 124.88 L1059.96 124.88 L1061.59 124.88 L1063.22 124.88 L1064.85 124.88 L1066.48 124.88 L1068.11 124.88 L1069.74 124.88 L1071.36 124.88 L1072.99 124.88 L1074.62 124.88 L1076.25 124.88 L1077.88 124.88 L1079.51 124.88 L1081.13 124.88 L1082.76 124.88 L1084.39 124.88 L1086.02 124.88 L1087.65 124.88 L1089.28 124.88 L1090.91 124.88 L1092.53 124.88 L1094.16 124.88 L1095.79 124.88 L1097.42 124.88 L1099.05 124.88 L1100.68 124.88 L1102.31 124.88 L1103.93 124.88 L1105.56 124.88 L1107.19 124.88 L1108.82 124.88 L1110.45 124.88 L1112.08 124.88 L1113.71 124.88 L1115.33 124.88 L1116.96 124.88 L1118.59 124.88 L1120.22 124.88 L1121.85 124.88 L1123.48 124.88 L1125.10 124.88 L1126.73 124.88 L1128.36 124.88 L1129.99 124.88 L1131.62 124.88 L1133.25 124.88 L1134.88 124.88 L1136.50 124.88 L1138.13 124.88 L1139.76 124.88 L1141.39 124.88 L1143.02 124.88 L1144.65 124.88 L1146.28 124.88 L1147.90 124.88 L1149.53 124.88 L1151.16 124.88 L1152.79 124.88 L1154.42 124.88 L1156.05 124.88 L1157.67 124.88 L1159.30 124.88 L1160.93 124.88 L1162.56 124.88 L1164.19 124.88 L1165.82 124.88 L1167.45 124.88 L1169.07 124.88 L1170.70 124.88 L1172.33 124.88 L1173.96 124.88 L1175.59 124.88 L1177.22 124.88 L1178.85 124.88 L1180.47 124.88 L1182.10 124.88 L1183.73 124.88 L1185.36 124.88 L1186.99 124.88 L1188.62 124.88 L1190.24 124.88 L1191.87 124.88 L1193.50 124.88 L1195.13 124.88 M750.26 76.03 L751.11 76.03 L751.95 76.03 L752.79 76.03 L753.64 76.03 L754.48 76.03 L755.32 76.03 L756.17 76.03 L757.01 76.03 L757.85 76.03 L758.69 76.03 L759.54 76.03 L760.38 76.03 L761.22 76.03 L762.07 76.03 L762.91 76.03 L763.75 76.03 L764.60 76.03 L765.44 76.03 L766.28 76.03 L767.12 76.03 L767.97 76.03 L768.81 76.03 L769.65 76.03 L770.50 76.03 L771.34 76.03 L772.18 76.03 L773.03 76.03 L773.87 76.03 L774.71 76.03 L775.55 76.03 L776.40 76.03 L777.24 76.03 L778.08 76.03 L778.93 76.03 L779.77 76.03 L780.61 76.03 L781.45 76.03 L782.30 76.03 L783.14 76.03 L783.98 76.03 L784.83 76.03 L785.67 76.03 L786.51 76.03 L787.36 76.03 L788.20 76.03 L789.04 76.03 L789.88 76.03 L790.73 76.03 L791.57 76.03 L792.41 76.03 L793.26 76.03 L794.10 76.03 L794.94 76.03 L795.79 76.03 L796.63 76.03 L797.47 76.03 L798.31 76.03 L799.16 76.03 L800.00 76.03 L800.84 76.03 L801.69 76.03 L802.53 76.03 L803.37 76.03 L804.22 76.03 L805.06 76.03 L805.90 76.03 L806.74 76.03 L807.59 76.03 L808.43 76.03 L809.27 76.03 L810.12 76.03 L810.96 76.03 L811.80 76.03 L812.64 76.03 L813.49 76.03 L814.33 76.03 L815.17 76.03 L816.02 76.03 L816.86 76.03 L817.70 76.03 L818.55 76.03 L819.39 76.03 L820.23 76.03 L821.07 76.03 L821.92 76.03 L822.76 76.03 L823.60 76.03 L824.45 76.03 L825.29 76.03 L826.13 76.03 L826.98 76.03 L827.82 76.03 L828.66 76.03 L829.50 76.03 L830.35 76.03 L831.19 76.03 L832.03 76.03 L832.88 76.03 L833.72 76.03 L834.56 76.03 L835.41 76.03 L836.25 76.03 L837.09 76.03 L837.93 76.03 L838.78 76.03 L839.62 76.03 L840.46 76.03 L841.31 76.03 L842.15 76.03 L842.99 76.03 L843.83 76.03 L844.68 76.03 L845.52 76.03 L846.36 76.03 L847.21 76.03 L848.05 76.03 L848.89 76.03 L849.74 76.03 L850.58 76.03 L851.42 76.03 L852.26 76.03 L853.11 76.03 L853.95 76.03 L854.79 76.03 L855.64 76.03 L856.48 76.03 L857.32 76.03 L858.17 76.03 L859.01 76.03 L859.85 76.03 L860.69 76.03 L861.54 76.03 L862.38 76.03 L863.22 76.03 L864.07 76.03 L864.91 76.03 L865.75 76.03 L866.60 76.03 L867.44 76.03 L868.28 76.03 L869.12 76.03 L869.97 76.03 L870.81 76.03 L871.65 76.03 L872.50 76.03 L873.34 76.03 L874.18 76.03 L875.02 76.03 L875.87 76.03 L876.71 76.03 L877.55 76.03 L878.40 76.03 L879.24 76.03 L880.08 76.03 L880.93 76.03 L881.77 76.03 L882.61 76.03 L883.45 76.03 L884.30 76.03 L885.14 76.03 L885.98 76.03 L886.83 76.03 L887.67 76.03 L888.51 76.03 L889.36 76.03 L890.20 76.03 L891.04 76.03 L891.88 76.03 L892.73 76.03 L893.57 76.03 L894.41 76.03 L895.26 76.03 L896.10 76.03 L896.94 76.03 L897.79 76.03 L898.63 76.03 L899.47 76.03 L900.31 76.03 L901.16 76.03 L902.00 76.03 L902.84 76.03 L903.69 76.03 L904.53 76.03 L905.37 76.03 L906.21 76.03 L907.06 76.03 L907.90 76.03 L908.74 76.03 L909.59 76.03 L910.43 76.03 L911.27 76.03 L912.12 76.03 L912.96 76.03 L913.80 76.03 L914.64 76.03 L915.49 76.03 L916.33 76.03 L917.17 76.03 L918.02 76.03 L918.86 76.03 L919.70 76.03 L920.55 76.03 L921.39 76.03 L922.23 76.03 L923.07 76.03 L923.92 76.03 L924.76 76.03 L925.60 76.03 L926.45 76.03 L927.29 76.03 L928.13 76.03 L928.98 76.03 L929.82 76.03 L930.66 76.03 L931.50 76.03 L932.35 76.03 L933.19 76.03 L934.03 76.03 L934.88 76.03 L935.72 76.03 L936.56 76.03 L937.40 76.03 L938.25 76.03 L939.09 76.03 L939.93 76.03 L940.78 76.03 L941.62 76.03 L942.46 76.03 L943.31 76.03 L944.15 76.03 L944.99 76.03 L945.83 76.03 L946.68 76.03 L947.52 76.03 L948.36 76.03 L949.21 76.03 L950.05 76.03 L950.89 76.03 L951.74 76.03 L952.58 76.03 L953.42 76.03 L954.26 76.03 L955.11 76.03 L955.95 76.03 L956.79 76.03 L957.64 76.03 L958.48 76.03 L959.32 76.03 L960.17 76.03 L961.01 76.03 L961.85 76.03 L962.69 76.03 L963.54 76.03 L964.38 76.03 L965.22 76.03 L966.07 76.03 L966.91 76.03 L967.75 76.03 L968.59 76.03 L969.44 76.03 L970.28 76.03 L971.12 76.03 L971.97 76.03 L972.81 76.03 L973.65 76.03 L974.50 76.03 L975.34 76.03 L976.18 76.03 L977.02 76.03 L977.87 76.03 L978.71 76.03 L979.55 76.03 L980.40 76.03 L981.24 76.03 L982.08 76.03 L982.93 76.03 L983.77 76.03 L984.61 76.03 L985.45 76.03 L986.30 76.03 L987.14 76.03 L987.98 76.03 L988.83 76.03 L989.67 76.03 L990.51 76.03 L991.36 76.03 L992.20 76.03 L993.04 76.03 L993.88 76.03 L994.73 76.03 L995.57 76.03 L996.41 76.03 L997.26 76.03 L998.10 76.03 L998.94 76.03 L999.78 76.03 L1000.63 76.03 L1001.47 76.03 L1002.31 76.03 L1003.16 76.03 L1004.00 76.03 L1004.84 76.03 L1005.69 76.03 L1006.53 76.03 L1007.37 76.03 L1008.21 76.03 L1009.06 76.03 L1009.90 76.03 L1010.74 76.03 L1011.59 76.03 L1012.43 76.03 L1013.27 76.03 L1014.12 76.03 L1014.96 76.03 L1015.80 76.03 L1016.64 76.03 L1017.49 76.03 L1018.33 76.03 L1019.17 76.03 L1020.02 76.03 L1020.86 76.03 L1021.70 76.03 L1022.55 76.03 L1023.39 76.03 L1024.23 76.03 L1025.07 76.03 L1025.92 76.03 L1026.76 76.03 L1027.60 76.03 L1028.45 76.03 L1029.29 76.03 L1030.13 76.03 L1030.97 76.03 L1031.82 76.03 L1032.66 76.03 L1033.50 76.03 L1034.35 76.03 L1035.19 76.03 L1036.03 76.03 L1036.88 76.03 L1037.72 76.03 L1038.56 76.03 L1039.40 76.03 L1040.25 76.03 L1041.09 76.03 L1041.93 76.03 L1042.78 76.03 L1043.62 76.03 L1044.46 76.03 L1045.31 76.03 L1046.15 76.03 L1046.99 76.03 L1047.83 76.03 L1048.68 76.03 L1049.52 76.03 L1050.36 76.03 L1051.21 76.03 L1052.05 76.03 L1052.89 76.03 L1053.74 76.03" fill="none" stroke="#808080" stroke-width="2" stroke-dasharray="2 3.5"/>
<text x="1474.16" y="330.00" class="gl">+180</text><circle cx="1503.16" cy="322.60" r="0.9" fill="none" stroke="#858585" stroke-width="0.7"/><text x="1376.45" y="330.00" class="gl">+210</text><circle cx="1405.45" cy="322.60" r="0.9" fill="none" stroke="#858585" stroke-width="0.7"/><text x="1278.74" y="330.00" class="gl">+240</text><circle cx="1307.74" cy="322.60" r="0.9" fill="none" stroke="#858585" stroke-width="0.7"/><text x="1181.03" y="330.00" class="gl">+270</text><circle cx="1210.03" cy="322.60" r="0.9" fill="none" stroke="#858585" stroke-width="0.7"/><text x="1083.32" y="330.00" class="gl">+300</text><circle cx="1112.32" cy="322.60" r="0.9" fill="none" stroke="#858585" stroke-width="0.7"/><text x="985.61" y="330.00" class="gl">+330</text><circle cx="1014.61" cy="322.60" r="0.9" fill="none" stroke="#858585" stroke-width="0.7"/><text x="894.00" y="330.00" class="gl">+0</text><circle cx="910.80" cy="322.60" r="0.9" fill="none" stroke="#858585" stroke-width="0.7"/><text x="793.24" y="330.00" class="gl">+30</text><circle cx="816.14" cy="322.60" r="0.9" fill="none" stroke="#858585" stroke-width="0.7"/><text x="695.53" y="330.00" class="gl">+60</text><circle cx="718.43" cy="322.60" r="0.9" fill="none" stroke="#858585" stroke-width="0.7"/><text x="597.82" y="330.00" class="gl">+90</text><circle cx="620.72" cy="322.60" r="0.9" fill="none" stroke="#858585" stroke-width="0.7"/><text x="497.06" y="330.00" class="gl">+120</text><circle cx="526.06" cy="322.60" r="0.9" fill="none" stroke="#858585" stroke-width="0.7"/><text x="399.35" y="330.00" class="gl">+150</text><circle cx="428.35" cy="322.60" r="0.9" fill="none" stroke="#858585" stroke-width="0.7"/><text x="301.64" y="330.00" class="gl">+180</text><circle cx="330.64" cy="322.60" r="0.9" fill="none" stroke="#858585" stroke-width="0.7"/><text x="891.15" y="24.90" class="gl">+90</text><circle cx="914.05" cy="17.50" r="0.9" fill="none" stroke="#858585" stroke-width="0.7"/><text x="891.15" y="122.90" class="gl">+60</text><circle cx="914.05" cy="115.50" r="0.9" fill="none" stroke="#858585" stroke-width="0.7"/><text x="891.15" y="220.60" class="gl">+30</text><circle cx="914.05" cy="213.20" r="0.9" fill="none" stroke="#858585" stroke-width="0.7"/><text x="891.15" y="428.00" class="gl">−30</text><circle cx="914.05" cy="420.60" r="0.9" fill="none" stroke="#858585" stroke-width="0.7"/><text x="891.15" y="525.80" class="gl">−60</text><circle cx="914.05" cy="518.40" r="0.9" fill="none" stroke="#858585" stroke-width="0.7"/><text x="891.15" y="624.00" class="gl">−90</text><circle cx="914.05" cy="616.60" r="0.9" fill="none" stroke="#858585" stroke-width="0.7"/>
<path d="M396.90 288.00 L402.20 293.30 M403.10 296.90 L425.90 295.10 M425.90 318.80 L437.40 311.60 M450.20 304.00 L450.40 317.30 L452.50 331.60 M450.20 362.10 L456.80 365.30 M548.00 321.80 L558.70 325.30 M591.60 314.70 L660.90 301.00 M609.80 273.10 L619.60 288.20 M525.10 212.90 L541.10 204.90 M446.90 233.30 L457.60 230.70 M667.60 271.30 L673.20 275.20 M733.30 202.90 L767.10 185.10 M808.40 185.10 L810.70 215.30 M717.30 250.90 L722.30 262.40 M836.40 255.30 L851.60 264.20 M880.00 267.80 L900.00 240.70 L917.80 221.10 M998.30 206.00 L1002.80 224.30 M1428.90 243.60 L1432.40 238.20 M927.80 210.00 L951.10 190.60" fill="none" stroke="#8c8c8c" stroke-width="1.4" stroke-linecap="round"/>
<path d="M396.90 288.00 L396.28 287.40 L395.66 286.80 L395.05 286.20 L394.45 285.60 L393.84 285.01 L393.25 284.41 L392.66 283.82 L392.07 283.22 L391.49 282.63 L390.91 282.04 L390.33 281.44 L389.77 280.85 L389.20 280.26 L388.64 279.67 L388.09 279.09 L387.53 278.50 L386.99 277.91 L386.45 277.33 L385.91 276.75 L385.38 276.16 L384.85 275.58 L384.32 275.00 L383.80 274.42 L383.29 273.84 L382.77 273.27 L382.26 272.69 L381.76 272.12 L381.26 271.54 L380.77 270.97 L380.27 270.40 L379.78 269.83 L379.30 269.26 L378.82 268.70 L378.34 268.13 L377.87 267.57 L377.40 267.00 L376.94 266.44 L376.47 265.88 L376.02 265.32 L375.56 264.76 L375.11 264.21 L374.66 263.65 L374.22 263.10 L373.77 262.55 L373.34 262.00 L372.90 261.45 L372.47 260.90 L372.04 260.36 L371.61 259.81 L371.19 259.27 L370.77 258.73 L370.35 258.19 L369.94 257.66 L369.53 257.12 L369.12 256.59 L368.71 256.05 L368.31 255.52 L367.91 254.99 L367.51 254.47 L367.11 253.94 L366.72 253.42 L366.33 252.90 L365.94 252.38 L365.55 251.86 L365.16 251.34 L364.78 250.83 L364.40 250.32 L364.02 249.81 L363.64 249.30 L363.26 248.79 L362.89 248.29 L362.51 247.79 L362.14 247.29 L361.77 246.79 L361.40 246.29 M1441.34 245.80 L1439.77 245.31 L1438.20 244.82 L1436.63 244.33 L1435.05 243.84 L1433.48 243.36 L1431.90 242.88 L1430.32 242.40 L1428.75 241.92 L1427.17 241.45 L1425.59 240.98 L1424.01 240.51 L1422.43 240.04 L1420.85 239.58 L1419.27 239.12 L1417.69 238.66 L1416.11 238.20 L1414.53 237.74 L1412.95 237.29 L1411.37 236.84 L1409.80 236.39 L1408.22 235.95 L1406.64 235.51 L1405.06 235.07 L1403.49 234.63 L1401.91 234.20 L1400.34 233.76 L1398.76 233.33 L1397.19 232.91 L1395.62 232.48 L1394.05 232.06 L1392.48 231.64 L1390.91 231.23 L1389.34 230.82 L1387.78 230.41 L1386.22 230.00 L1384.65 229.60 L1383.09 229.19 L1381.53 228.80 L1379.98 228.40 L1378.42 228.01 L1376.87 227.62 L1375.32 227.23 L1373.77 226.85 L1372.23 226.47 L1370.68 226.09 L1369.14 225.72 L1367.60 225.35 L1366.06 224.98 L1364.53 224.61 L1363.00 224.25 L1361.47 223.89 L1359.95 223.54 L1358.42 223.19 L1356.90 222.84 L1355.39 222.49 L1353.87 222.15 L1352.36 221.81 L1350.86 221.48 L1349.35 221.15 L1347.85 220.82 L1346.35 220.49 L1344.86 220.17 L1343.37 219.85 L1341.88 219.54 L1340.40 219.22 L1338.92 218.92 L1337.45 218.61 L1335.98 218.31 L1334.51 218.01 L1333.04 217.72 L1331.59 217.43 L1330.13 217.14 L1328.68 216.86 L1327.23 216.58 L1325.79 216.31 L1324.35 216.03 L1322.92 215.77 L1321.49 215.50 L1320.06 215.24 L1318.64 214.99 L1317.23 214.73 L1315.82 214.48 L1314.41 214.24 L1313.01 214.00 L1311.61 213.76 L1310.22 213.53 L1308.83 213.30 L1307.45 213.07 L1306.07 212.85 L1304.70 212.63 L1303.33 212.42 L1301.97 212.21 L1300.61 212.00 L1299.26 211.80 L1297.91 211.60 L1296.57 211.41 L1295.23 211.22 L1293.90 211.03 L1292.58 210.85 L1291.26 210.67 L1289.94 210.50 L1288.63 210.33 L1287.33 210.16 L1286.03 210.00 L1284.74 209.84 L1283.45 209.69 L1282.17 209.54 L1280.89 209.40 L1279.62 209.26 L1278.35 209.12 L1277.09 208.99 L1275.84 208.86 L1274.59 208.74 L1273.35 208.62 L1272.11 208.51 L1270.88 208.40 L1269.65 208.29 L1268.43 208.19 L1267.22 208.09 L1266.01 208.00 L1264.80 207.91 L1263.61 207.82 L1262.41 207.74 L1261.23 207.67 L1260.05 207.60 L1258.87 207.53 L1257.70 207.47 L1256.54 207.41 L1255.38 207.36 L1254.23 207.31 L1253.08 207.26 L1251.94 207.22 L1250.81 207.18 L1249.68 207.15 L1248.56 207.12 L1247.44 207.10 L1246.33 207.08 L1245.22 207.07 L1244.12 207.06 L1243.02 207.05 L1241.93 207.05 L1240.85 207.05 L1239.77 207.06 L1238.70 207.07 L1237.63 207.09 L1236.57 207.11 L1235.51 207.14 L1234.46 207.17 L1233.42 207.20 L1232.38 207.24 L1231.34 207.28 L1230.31 207.33 L1229.29 207.38 L1228.27 207.44 L1227.25 207.50 L1226.25 207.56 L1225.24 207.63 L1224.24 207.70 L1223.25 207.78 L1222.26 207.86 L1221.28 207.95 L1220.30 208.04 L1219.33 208.14 L1218.36 208.23 L1217.40 208.34 L1216.44 208.45 L1215.49 208.56 L1214.54 208.68 L1213.59 208.80 L1212.66 208.92 L1211.72 209.05 L1210.79 209.18 L1209.87 209.32 L1208.95 209.46 L1208.03 209.61 L1207.12 209.76 L1206.21 209.92 L1205.31 210.07 L1204.41 210.24 L1203.51 210.40 L1202.62 210.58 L1201.74 210.75 L1200.86 210.93 L1199.98 211.11 L1199.10 211.30 L1198.23 211.49 L1197.37 211.69 L1196.51 211.89 L1195.65 212.09 L1194.79 212.30 L1193.94 212.51 L1193.10 212.73 L1192.25 212.95 L1191.41 213.17 L1190.58 213.40 L1189.74 213.63 L1188.91 213.87 L1188.09 214.11 L1187.27 214.35 L1186.45 214.60 L1185.63 214.85 L1184.82 215.10 L1184.01 215.36 L1183.20 215.62 L1182.39 215.89 L1181.59 216.16 L1180.80 216.43 L1180.00 216.71 L1179.21 216.99 L1178.42 217.28 L1177.63 217.56 L1176.85 217.86 L1176.06 218.15 L1175.28 218.45 L1174.51 218.75 L1173.73 219.06 L1172.96 219.37 L1172.19 219.68 L1171.42 220.00 L1170.66 220.32 L1169.89 220.64 L1169.13 220.97 L1168.37 221.30 L1167.61 221.63 L1166.86 221.97 L1166.11 222.31 L1165.35 222.65 L1164.60 223.00 L1163.86 223.35 L1163.11 223.70 L1162.36 224.06 L1161.62 224.42 L1160.88 224.78 L1160.14 225.15 L1159.40 225.52 L1158.66 225.89 L1157.93 226.27 L1157.19 226.64 L1156.46 227.03 L1155.72 227.41 L1154.99 227.80 L1154.26 228.19 L1153.53 228.58 L1152.81 228.98 L1152.08 229.38 L1151.35 229.78 L1150.63 230.19 L1149.90 230.60 L1149.18 231.01 L1148.45 231.42 L1147.73 231.84 L1147.01 232.26 L1146.29 232.68 L1145.57 233.10 L1144.85 233.53 L1144.13 233.96 L1143.41 234.39 L1142.69 234.83 L1141.97 235.27 L1141.25 235.71 L1140.53 236.15 L1139.82 236.60 L1139.10 237.05 L1138.38 237.50 L1137.66 237.95 L1136.95 238.41 L1136.23 238.87 L1135.51 239.33 L1134.80 239.79 L1134.08 240.26 L1133.36 240.73 L1132.64 241.20 L1131.93 241.67 L1131.21 242.14 L1130.49 242.62 L1129.77 243.10 L1129.05 243.58 L1128.33 244.07 L1127.61 244.55 L1126.89 245.04 L1126.17 245.53 L1125.45 246.02 L1124.73 246.52 L1124.01 247.02 L1123.29 247.52 L1122.56 248.02 L1121.84 248.52 L1121.12 249.03 L1120.39 249.53 L1119.67 250.04 L1118.94 250.55 L1118.21 251.07 L1117.49 251.58 L1116.76 252.10 L1116.03 252.62 L1115.30 253.14 L1114.57 253.66 L1113.83 254.18 L1113.10 254.71 L1112.37 255.24 L1111.63 255.77 L1110.90 256.30 L1110.16 256.83 L1109.42 257.37 L1108.68 257.90 L1107.94 258.44 L1107.20 258.98 L1106.46 259.52 L1105.72 260.06 L1104.97 260.61 L1104.23 261.16 L1103.48 261.70 L1102.73 262.25 L1101.98 262.80 L1101.23 263.36 L1100.48 263.91 L1099.73 264.46 L1098.97 265.02 L1098.22 265.58 L1097.46 266.14 L1096.70 266.70 M425.90 295.10 L427.01 295.02 L428.13 294.95 L429.24 294.87 L430.35 294.80 L431.46 294.73 L432.57 294.66 L433.68 294.59 L434.80 294.52 L435.91 294.45 L437.02 294.38 L438.13 294.31 L439.24 294.25 L440.35 294.18 L441.46 294.12 L442.57 294.05 L443.68 293.99 L444.78 293.93 L445.89 293.87 L447.00 293.81 L448.11 293.75 L449.22 293.69 L450.32 293.63 L451.43 293.57 L452.54 293.52 L453.65 293.46 L454.75 293.41 L455.86 293.36 L456.96 293.31 L458.07 293.26 L459.17 293.21 L460.28 293.16 L461.38 293.11 L462.49 293.06 L463.59 293.01 L464.70 292.97 L465.80 292.92 L466.90 292.88 L468.01 292.84 L469.11 292.80 L470.21 292.76 L471.31 292.72 L472.41 292.68 L473.52 292.64 L474.62 292.60 L475.72 292.57 L476.82 292.53 L477.92 292.50 L479.02 292.46 L480.12 292.43 L481.22 292.40 L482.32 292.37 L483.41 292.34 L484.51 292.31 L485.61 292.29 L486.71 292.26 L487.81 292.23 L488.90 292.21 L490.00 292.19 L491.10 292.16 L492.19 292.14 L493.29 292.12 L494.38 292.10 L495.48 292.08 L496.57 292.07 L497.67 292.05 L498.76 292.03 L499.85 292.02 L500.95 292.00 L502.04 291.99 L503.13 291.98 L504.23 291.97 L505.32 291.96 L506.41 291.95 L507.50 291.94 L508.59 291.94 L509.68 291.93 L510.78 291.92 L511.87 291.92 L512.96 291.92 L514.05 291.91 L515.13 291.91 L516.22 291.91 L517.31 291.91 L518.40 291.92 L519.49 291.92 L520.58 291.92 L521.66 291.93 L522.75 291.93 L523.84 291.94 L524.93 291.95 L526.01 291.96 L527.10 291.96 L528.18 291.98 L529.27 291.99 L530.35 292.00 L531.44 292.01 L532.52 292.03 L533.61 292.04 L534.69 292.06 L535.78 292.08 L536.86 292.09 L537.94 292.11 L539.03 292.13 L540.11 292.16 L541.19 292.18 L542.27 292.20 L543.35 292.22 L544.44 292.25 L545.52 292.28 L546.60 292.30 L547.68 292.33 L548.76 292.36 L549.84 292.39 L550.92 292.42 L552.00 292.45 L553.08 292.48 L554.16 292.52 L555.24 292.55 L556.31 292.59 L557.39 292.62 L558.47 292.66 L559.55 292.70 L560.63 292.74 L561.70 292.78 L562.78 292.82 L563.86 292.86 L564.93 292.91 L566.01 292.95 L567.09 293.00 L568.16 293.04 L569.24 293.09 L570.31 293.14 L571.39 293.18 L572.46 293.23 L573.54 293.29 L574.61 293.34 L575.69 293.39 L576.76 293.44 L577.84 293.50 L578.91 293.55 L579.98 293.61 L581.06 293.67 L582.13 293.72 L583.20 293.78 L584.28 293.84 L585.35 293.90 L586.42 293.96 L587.49 294.03 L588.57 294.09 L589.64 294.15 L590.71 294.22 L591.78 294.28 L592.85 294.35 L593.92 294.42 L594.99 294.49 L596.07 294.56 L597.14 294.63 L598.21 294.70 L599.28 294.77 L600.35 294.84 L601.42 294.92 L602.49 294.99 L603.56 295.07 L604.63 295.15 L605.70 295.22 L606.77 295.30 L607.84 295.38 L608.90 295.46 L609.97 295.54 L611.04 295.62 L612.11 295.71 L613.18 295.79 L614.25 295.87 L615.32 295.96 L616.39 296.04 L617.45 296.13 L618.52 296.22 L619.59 296.31 L620.66 296.39 L621.73 296.48 L622.79 296.58 L623.86 296.67 L624.93 296.76 L626.00 296.85 L627.07 296.95 L628.13 297.04 L629.20 297.14 L630.27 297.23 L631.33 297.33 L632.40 297.43 L633.47 297.53 L634.54 297.63 L635.60 297.73 L636.67 297.83 L637.74 297.93 L638.80 298.03 L639.87 298.13 L640.94 298.24 L642.00 298.34 L643.07 298.45 L644.14 298.55 L645.20 298.66 L646.27 298.77 L647.34 298.88 L648.40 298.99 L649.47 299.10 L650.54 299.21 L651.60 299.32 L652.67 299.43 L653.73 299.54 L654.80 299.66 L655.87 299.77 L656.93 299.88 L658.00 300.00 M425.90 318.80 L424.96 319.37 L424.03 319.95 L423.10 320.52 L422.18 321.09 L421.26 321.67 L420.35 322.24 L419.44 322.81 L418.53 323.39 L417.63 323.96 L416.74 324.53 L415.85 325.10 L414.96 325.68 L414.08 326.25 L413.20 326.82 L412.33 327.39 L411.46 327.97 L410.59 328.54 L409.73 329.11 L408.88 329.68 L408.03 330.25 L407.18 330.82 L406.34 331.39 L405.51 331.96 L404.68 332.53 L403.85 333.10 L403.03 333.67 L402.21 334.24 L401.39 334.81 L400.59 335.38 L399.78 335.95 L398.98 336.51 L398.19 337.08 L397.40 337.65 L396.61 338.22 L395.83 338.78 L395.05 339.35 L394.28 339.91 L393.51 340.48 L392.75 341.04 L391.99 341.60 L391.23 342.17 L390.48 342.73 L389.74 343.29 L389.00 343.85 L388.26 344.41 L387.53 344.97 L386.80 345.53 L386.08 346.09 L385.36 346.65 L384.64 347.21 L383.93 347.76 L383.23 348.32 L382.52 348.88 L381.83 349.43 L381.13 349.98 L380.44 350.54 L379.76 351.09 L379.08 351.64 L378.40 352.19 L377.73 352.74 L377.06 353.29 L376.40 353.84 L375.74 354.39 L375.08 354.93 L374.43 355.48 L373.78 356.02 L373.14 356.57 L372.50 357.11 L371.86 357.65 L371.23 358.19 L370.60 358.73 L369.98 359.27 L369.36 359.81 L368.74 360.35 L368.13 360.88 L367.52 361.42 L366.91 361.95 L366.31 362.48 L365.71 363.02 L365.12 363.55 L364.53 364.08 L363.94 364.60 L363.36 365.13 L362.78 365.66 L362.20 366.18 L361.62 366.70 L361.05 367.23 L360.49 367.75 L359.92 368.27 L359.36 368.78 L358.80 369.30 L358.25 369.82 L357.70 370.33 L357.15 370.84 L356.60 371.35 L356.06 371.87 L355.52 372.37 L354.98 372.88 L354.45 373.39 L353.92 373.89 L353.39 374.39 L352.86 374.90 L352.34 375.39 L351.82 375.89 L351.30 376.39 L350.79 376.89 L350.27 377.38 L349.76 377.87 L349.25 378.36 L348.75 378.85 L348.24 379.34 L347.74 379.82 L347.24 380.31 L346.74 380.79 M1456.74 381.27 L1455.28 381.75 L1453.82 382.22 L1452.35 382.70 L1450.88 383.17 L1449.41 383.64 L1447.94 384.11 L1446.47 384.58 L1444.99 385.05 L1443.52 385.51 L1442.04 385.97 L1440.56 386.43 L1439.08 386.89 L1437.60 387.35 L1436.12 387.80 L1434.64 388.25 L1433.15 388.70 L1431.67 389.15 L1430.18 389.60 L1428.70 390.04 L1427.21 390.48 L1425.72 390.92 L1424.24 391.36 L1422.75 391.80 L1421.26 392.23 L1419.77 392.66 L1418.28 393.09 L1416.79 393.52 L1415.30 393.94 L1413.81 394.37 L1412.32 394.79 L1410.83 395.20 L1409.34 395.62 L1407.85 396.03 L1406.37 396.44 L1404.88 396.85 L1403.39 397.26 L1401.90 397.66 L1400.41 398.06 L1398.93 398.46 L1397.44 398.86 L1395.96 399.25 L1394.47 399.65 L1392.99 400.03 L1391.50 400.42 L1390.02 400.80 L1388.54 401.19 L1387.06 401.56 L1385.58 401.94 L1384.11 402.31 L1382.63 402.69 L1381.16 403.05 L1379.68 403.42 L1378.21 403.78 L1376.74 404.14 L1375.27 404.50 L1373.81 404.85 L1372.34 405.21 L1370.88 405.56 L1369.42 405.90 L1367.96 406.24 L1366.50 406.59 L1365.04 406.92 L1363.59 407.26 L1362.14 407.59 L1360.69 407.92 L1359.24 408.24 L1357.80 408.57 L1356.35 408.89 L1354.92 409.21 L1353.48 409.52 L1352.04 409.83 L1350.61 410.14 L1349.18 410.44 L1347.75 410.75 L1346.33 411.04 L1344.91 411.34 L1343.49 411.63 L1342.07 411.92 L1340.66 412.21 L1339.25 412.49 L1337.84 412.77 L1336.44 413.05 L1335.04 413.32 L1333.64 413.59 L1332.25 413.86 L1330.86 414.12 L1329.47 414.38 L1328.09 414.64 L1326.71 414.89 L1325.33 415.14 L1323.96 415.39 L1322.59 415.63 L1321.22 415.87 L1319.86 416.11 L1318.50 416.34 L1317.14 416.57 L1315.79 416.80 L1314.44 417.02 L1313.10 417.24 L1311.76 417.46 L1310.42 417.67 L1309.09 417.88 L1307.76 418.09 L1306.43 418.29 L1305.11 418.49 L1303.80 418.68 L1302.48 418.87 L1301.17 419.06 L1299.87 419.24 L1298.57 419.42 L1297.27 419.60 L1295.98 419.77 L1294.69 419.94 L1293.41 420.11 L1292.13 420.27 L1290.86 420.43 L1289.59 420.58 L1288.32 420.73 L1287.06 420.88 L1285.80 421.02 L1284.55 421.16 L1283.30 421.30 M450.20 362.10 L448.97 361.45 L447.75 360.80 L446.53 360.15 L445.32 359.50 L444.11 358.85 L442.91 358.20 L441.71 357.55 L440.52 356.90 L439.33 356.24 L438.15 355.59 L436.97 354.93 L435.80 354.27 L434.63 353.62 L433.47 352.96 L432.32 352.30 L431.17 351.64 L430.02 350.98 L428.89 350.32 L427.75 349.66 L426.63 349.00 L425.51 348.33 L424.39 347.67 L423.28 347.01 L422.18 346.34 L421.08 345.68 L419.99 345.01 L418.90 344.34 L417.82 343.68 L416.75 343.01 L415.68 342.34 L414.62 341.67 L413.56 341.01 L412.52 340.34 L411.47 339.67 L410.44 339.00 L409.40 338.33 L408.38 337.66 L407.36 336.99 L406.35 336.32 L405.35 335.64 L404.35 334.97 L403.35 334.30 L402.37 333.63 L401.39 332.95 L400.41 332.28 L399.45 331.61 L398.49 330.93 L397.53 330.26 L396.59 329.59 L395.64 328.91 L394.71 328.24 L393.78 327.56 L392.86 326.89 L391.95 326.21 L391.04 325.54 L390.14 324.86 L389.24 324.19 L388.36 323.51 L387.48 322.84 L386.60 322.16 L385.73 321.49 L384.87 320.81 L384.02 320.14 L383.17 319.46 L382.33 318.78 L381.50 318.11 L380.67 317.43 L379.85 316.76 L379.04 316.08 L378.23 315.41 L377.43 314.73 L376.64 314.06 L375.86 313.38 L375.08 312.71 L374.31 312.03 L373.54 311.36 L372.78 310.69 L372.03 310.01 L371.29 309.34 L370.55 308.66 L369.82 307.99 L369.10 307.32 L368.38 306.65 L367.67 305.97 L366.97 305.30 L366.27 304.63 L365.58 303.96 L364.90 303.29 L364.22 302.62 L363.55 301.95 L362.89 301.28 L362.24 300.61 L361.59 299.94 L360.95 299.27 L360.31 298.60 L359.68 297.93 L359.06 297.26 L358.45 296.60 L357.84 295.93 L357.24 295.27 L356.65 294.60 L356.06 293.94 L355.48 293.27 L354.90 292.61 L354.34 291.94 L353.77 291.28 L353.22 290.62 L352.67 289.96 L352.13 289.30 L351.60 288.64 L351.07 287.98 L350.55 287.32 L350.03 286.66 L349.52 286.01 L349.02 285.35 L348.53 284.69 L348.04 284.04 L347.55 283.39 L347.08 282.73 L346.61 282.08 L346.14 281.43 L345.68 280.78 L345.23 280.13 L344.79 279.48 L344.35 278.83 L343.91 278.18 L343.49 277.54 L343.07 276.89 L342.65 276.25 L342.24 275.61 L341.84 274.96 L341.44 274.32 L341.05 273.68 L340.66 273.04 L340.28 272.41 L339.91 271.77 L339.54 271.13 L339.18 270.50 L338.82 269.87 L338.46 269.23 L338.12 268.60 M1464.50 267.97 L1463.07 267.34 L1461.62 266.72 L1460.18 266.09 L1458.73 265.47 L1457.27 264.84 L1455.81 264.22 L1454.34 263.60 L1452.87 262.98 L1451.40 262.36 L1449.92 261.74 L1448.43 261.13 L1446.94 260.51 L1445.45 259.90 L1443.95 259.29 L1442.44 258.68 L1440.94 258.07 L1439.42 257.46 L1437.91 256.86 L1436.39 256.26 L1434.87 255.65 L1433.34 255.05 L1431.81 254.45 L1430.27 253.86 L1428.73 253.26 L1427.19 252.67 L1425.64 252.07 L1424.09 251.48 L1422.54 250.89 L1420.98 250.31 L1419.43 249.72 L1417.86 249.14 L1416.30 248.56 L1414.73 247.98 L1413.16 247.40 L1411.58 246.82 L1410.01 246.25 L1408.43 245.68 L1406.85 245.11 L1405.26 244.54 L1403.68 243.97 L1402.09 243.41 L1400.50 242.84 L1398.90 242.28 L1397.31 241.72 L1395.71 241.17 L1394.11 240.61 L1392.51 240.06 L1390.91 239.51 L1389.30 238.96 L1387.70 238.42 L1386.09 237.88 L1384.48 237.33 L1382.88 236.80 L1381.26 236.26 L1379.65 235.73 L1378.04 235.19 L1376.43 234.66 L1374.81 234.14 L1373.20 233.61 L1371.58 233.09 L1369.97 232.57 L1368.35 232.05 L1366.73 231.54 L1365.11 231.03 L1363.50 230.52 L1361.88 230.01 L1360.26 229.51 L1358.65 229.00 L1357.03 228.50 L1355.41 228.01 L1353.79 227.51 L1352.18 227.02 L1350.56 226.54 L1348.95 226.05 L1347.33 225.57 L1345.72 225.09 L1344.11 224.61 L1342.50 224.14 L1340.89 223.66 L1339.28 223.20 L1337.67 222.73 L1336.06 222.27 L1334.46 221.81 L1332.85 221.35 L1331.25 220.90 L1329.65 220.45 L1328.05 220.00 L1326.45 219.56 L1324.86 219.12 L1323.26 218.68 L1321.67 218.25 L1320.09 217.82 L1318.50 217.39 L1316.91 216.96 L1315.33 216.54 L1313.75 216.13 L1312.18 215.71 L1310.60 215.30 L1309.03 214.89 L1307.46 214.49 L1305.90 214.09 L1304.34 213.69 L1302.78 213.30 L1301.22 212.91 L1299.67 212.52 L1298.12 212.14 L1296.57 211.76 L1295.03 211.38 L1293.49 211.01 L1291.96 210.64 L1290.42 210.28 L1288.90 209.92 L1287.37 209.56 L1285.85 209.21 L1284.34 208.86 L1282.82 208.51 L1281.32 208.17 L1279.81 207.84 L1278.31 207.50 L1276.82 207.17 L1275.33 206.85 L1273.84 206.53 L1272.36 206.21 L1270.88 205.90 L1269.41 205.59 L1267.94 205.28 L1266.48 204.98 L1265.02 204.68 L1263.57 204.39 L1262.12 204.10 L1260.68 203.82 L1259.24 203.54 L1257.81 203.26 L1256.38 202.99 L1254.95 202.72 L1253.54 202.46 L1252.13 202.20 L1250.72 201.95 L1249.32 201.70 L1247.92 201.45 L1246.53 201.21 L1245.15 200.98 L1243.77 200.74 L1242.39 200.52 L1241.03 200.29 L1239.67 200.08 L1238.31 199.86 L1236.96 199.65 L1235.61 199.45 L1234.28 199.25 L1232.94 199.05 L1231.62 198.86 L1230.29 198.68 L1228.98 198.50 L1227.67 198.32 L1226.37 198.15 L1225.07 197.98 L1223.78 197.82 L1222.50 197.66 L1221.22 197.51 L1219.95 197.36 L1218.68 197.22 L1217.42 197.08 L1216.17 196.95 L1214.92 196.82 L1213.68 196.70 L1212.44 196.58 L1211.21 196.46 L1209.99 196.36 L1208.77 196.25 L1207.56 196.15 L1206.36 196.06 L1205.16 195.97 L1203.97 195.88 L1202.78 195.81 L1201.61 195.73 L1200.43 195.66 L1199.27 195.60 L1198.11 195.54 L1196.95 195.48 L1195.80 195.43 L1194.66 195.39 L1193.53 195.35 L1192.40 195.32 L1191.28 195.29 L1190.16 195.26 L1189.05 195.24 L1187.94 195.23 L1186.84 195.22 L1185.75 195.22 L1184.67 195.22 L1183.59 195.22 L1182.51 195.23 L1181.44 195.25 L1180.38 195.27 L1179.32 195.30 L1178.27 195.33 L1177.23 195.36 L1176.19 195.40 L1175.16 195.45 L1174.13 195.50 L1173.11 195.56 L1172.09 195.62 L1171.08 195.68 L1170.08 195.75 L1169.08 195.83 L1168.08 195.91 L1167.10 196.00 L1166.11 196.09 L1165.14 196.18 L1164.16 196.28 L1163.20 196.39 L1162.24 196.50 L1161.28 196.61 L1160.33 196.73 L1159.39 196.86 L1158.44 196.99 L1157.51 197.12 L1156.58 197.26 L1155.65 197.41 L1154.73 197.56 L1153.82 197.71 L1152.91 197.87 L1152.00 198.03 L1151.10 198.20 L1150.20 198.38 L1149.31 198.55 L1148.42 198.74 L1147.54 198.92 L1146.66 199.12 L1145.79 199.31 L1144.92 199.51 L1144.05 199.72 L1143.19 199.93 L1142.33 200.14 L1141.48 200.36 L1140.63 200.59 L1139.78 200.82 L1138.94 201.05 L1138.11 201.29 L1137.27 201.53 L1136.44 201.78 L1135.62 202.03 L1134.79 202.28 L1133.97 202.54 L1133.16 202.81 L1132.35 203.07 L1131.54 203.35 L1130.73 203.62 L1129.93 203.91 L1129.13 204.19 L1128.33 204.48 L1127.54 204.78 L1126.75 205.07 L1125.96 205.38 L1125.18 205.68 L1124.40 205.99 L1123.62 206.31 L1122.85 206.63 L1122.07 206.95 L1121.30 207.28 L1120.54 207.61 L1119.77 207.94 L1119.01 208.28 L1118.25 208.62 L1117.49 208.97 L1116.73 209.32 L1115.98 209.67 L1115.23 210.03 L1114.48 210.39 L1113.73 210.76 L1112.99 211.13 L1112.24 211.50 L1111.50 211.88 L1110.76 212.26 L1110.03 212.64 L1109.29 213.03 L1108.56 213.42 L1107.82 213.82 L1107.09 214.21 L1106.36 214.62 L1105.63 215.02 L1104.91 215.43 L1104.18 215.84 L1103.46 216.26 L1102.74 216.68 L1102.01 217.10 L1101.29 217.52 L1100.57 217.95 L1099.86 218.38 L1099.14 218.82 L1098.42 219.26 L1097.71 219.70 L1096.99 220.14 L1096.28 220.59 L1095.57 221.04 L1094.86 221.50 L1094.14 221.95 L1093.43 222.41 L1092.72 222.88 L1092.01 223.34 L1091.30 223.81 L1090.60 224.28 L1089.89 224.76 L1089.18 225.24 L1088.47 225.72 L1087.77 226.20 L1087.06 226.69 L1086.35 227.18 L1085.65 227.67 L1084.94 228.16 L1084.23 228.66 L1083.53 229.16 L1082.82 229.66 L1082.12 230.17 L1081.41 230.68 L1080.71 231.19 L1080.00 231.70 M548.00 321.80 L546.96 321.48 L545.91 321.15 L544.87 320.83 L543.83 320.51 L542.79 320.18 L541.76 319.86 L540.72 319.53 L539.68 319.21 L538.65 318.89 L537.61 318.56 L536.58 318.24 L535.55 317.92 L534.52 317.59 L533.49 317.27 L532.46 316.95 L531.44 316.62 L530.41 316.30 L529.38 315.98 L528.36 315.66 L527.34 315.33 L526.32 315.01 L525.30 314.69 L524.28 314.37 L523.26 314.05 L522.24 313.72 L521.23 313.40 L520.21 313.08 L519.20 312.76 L518.18 312.44 L517.17 312.12 L516.16 311.80 L515.15 311.48 L514.15 311.16 L513.14 310.84 L512.13 310.52 L511.13 310.20 L510.12 309.88 L509.12 309.57 L508.12 309.25 L507.12 308.93 L506.12 308.61 L505.12 308.30 L504.12 307.98 L503.13 307.66 L502.13 307.35 L501.14 307.03 L500.15 306.72 L499.15 306.40 L498.16 306.09 L497.17 305.78 L496.19 305.46 L495.20 305.15 L494.21 304.84 L493.23 304.53 L492.24 304.22 L491.26 303.90 L490.28 303.59 L489.29 303.28 L488.31 302.98 L487.34 302.67 L486.36 302.36 L485.38 302.05 L484.40 301.74 L483.43 301.44 L482.45 301.13 L481.48 300.83 L480.51 300.52 L479.54 300.22 L478.57 299.92 L477.60 299.61 L476.63 299.31 L475.66 299.01 L474.70 298.71 L473.73 298.41 L472.77 298.11 L471.80 297.81 L470.84 297.51 L469.88 297.22 L468.92 296.92 L467.96 296.63 L467.00 296.33 L466.04 296.04 L465.08 295.74 L464.12 295.45 L463.17 295.16 L462.21 294.87 L461.26 294.58 L460.30 294.29 L459.35 294.00 L458.40 293.71 L457.45 293.43 L456.50 293.14 L455.55 292.85 L454.60 292.57 L453.65 292.29 L452.70 292.00 L451.76 291.72 L450.81 291.44 L449.86 291.16 L448.92 290.88 L447.98 290.61 L447.03 290.33 L446.09 290.05 L445.15 289.78 L444.20 289.50 L443.26 289.23 L442.32 288.96 L441.38 288.69 L440.44 288.42 L439.50 288.15 L438.57 287.88 L437.63 287.61 L436.69 287.35 L435.75 287.08 L434.82 286.82 L433.88 286.56 L432.94 286.30 L432.01 286.04 L431.07 285.78 L430.14 285.52 L429.20 285.26 L428.27 285.01 L427.34 284.75 L426.40 284.50 L425.47 284.25 L424.54 283.99 L423.61 283.74 L422.67 283.50 L421.74 283.25 L420.81 283.00 L419.88 282.76 L418.95 282.51 L418.02 282.27 L417.08 282.03 L416.15 281.79 L415.22 281.55 L414.29 281.31 L413.36 281.07 L412.43 280.84 L411.50 280.61 L410.57 280.37 L409.64 280.14 L408.71 279.91 L407.78 279.68 L406.85 279.46 L405.92 279.23 L404.99 279.01 L404.05 278.78 L403.12 278.56 L402.19 278.34 L401.26 278.12 L400.33 277.90 L399.40 277.69 L398.47 277.47 L397.53 277.26 L396.60 277.05 L395.67 276.84 L394.74 276.63 L393.80 276.42 L392.87 276.21 L391.94 276.01 L391.00 275.81 L390.07 275.61 L389.13 275.41 L388.20 275.21 L387.26 275.01 L386.32 274.81 L385.39 274.62 L384.45 274.43 L383.51 274.24 L382.57 274.05 L381.63 273.86 L380.69 273.67 L379.75 273.49 L378.81 273.30 L377.87 273.12 L376.93 272.94 L375.99 272.76 L375.04 272.59 L374.10 272.41 L373.15 272.24 L372.21 272.07 L371.26 271.90 L370.31 271.73 L369.36 271.56 L368.42 271.40 L367.47 271.23 L366.52 271.07 L365.56 270.91 L364.61 270.75 L363.66 270.59 L362.70 270.44 L361.75 270.29 L360.79 270.13 L359.83 269.98 L358.87 269.84 L357.91 269.69 L356.95 269.54 L355.99 269.40 L355.03 269.26 L354.07 269.12 L353.10 268.98 L352.13 268.85 L351.17 268.71 L350.20 268.58 L349.23 268.45 L348.26 268.32 L347.28 268.19 L346.31 268.07 L345.34 267.94 L344.36 267.82 L343.38 267.70 L342.40 267.58 L341.42 267.46 L340.44 267.35 L339.46 267.24 M1463.71 267.13 L1462.54 267.02 L1461.36 266.91 L1460.18 266.80 L1459.01 266.70 L1457.83 266.60 L1456.66 266.50 L1455.49 266.40 L1454.32 266.31 L1453.16 266.21 L1451.99 266.12 L1450.83 266.03 L1449.66 265.94 L1448.50 265.85 L1447.34 265.77 L1446.19 265.69 L1445.03 265.60 L1443.88 265.52 L1442.72 265.45 L1441.57 265.37 L1440.42 265.30 L1439.27 265.23 L1438.13 265.16 L1436.98 265.09 L1435.84 265.02 L1434.69 264.96 L1433.55 264.90 L1432.42 264.84 L1431.28 264.78 L1430.14 264.73 L1429.01 264.67 L1427.88 264.62 L1426.75 264.57 L1425.62 264.52 L1424.49 264.47 L1423.36 264.43 L1422.24 264.39 L1421.12 264.35 L1420.00 264.31 L1418.88 264.27 L1417.76 264.24 L1416.65 264.21 L1415.53 264.17 L1414.42 264.15 L1413.31 264.12 L1412.20 264.09 L1411.09 264.07 L1409.99 264.05 L1408.88 264.03 L1407.78 264.02 L1406.68 264.00 L1405.58 263.99 L1404.49 263.98 L1403.39 263.97 L1402.30 263.96 L1401.20 263.96 L1400.11 263.95 L1399.02 263.95 L1397.94 263.95 L1396.85 263.96 L1395.77 263.96 L1394.68 263.97 L1393.60 263.98 L1392.52 263.99 L1391.45 264.00 L1390.37 264.02 L1389.30 264.03 L1388.22 264.05 L1387.15 264.07 L1386.08 264.09 L1385.01 264.12 L1383.95 264.15 L1382.88 264.17 L1381.82 264.20 L1380.76 264.24 L1379.70 264.27 L1378.64 264.31 L1377.58 264.35 L1376.53 264.39 L1375.47 264.43 L1374.42 264.47 L1373.37 264.52 L1372.32 264.57 L1371.27 264.62 L1370.22 264.67 L1369.18 264.72 L1368.13 264.78 L1367.09 264.84 L1366.05 264.90 L1365.01 264.96 L1363.97 265.02 L1362.94 265.09 L1361.90 265.16 L1360.87 265.23 L1359.83 265.30 L1358.80 265.37 L1357.77 265.45 L1356.75 265.52 L1355.72 265.60 L1354.69 265.68 L1353.67 265.77 L1352.64 265.85 L1351.62 265.94 L1350.60 266.03 L1349.58 266.12 L1348.56 266.21 L1347.55 266.30 L1346.53 266.40 L1345.52 266.50 L1344.50 266.60 L1343.49 266.70 L1342.48 266.80 L1341.47 266.91 L1340.46 267.01 L1339.45 267.12 L1338.45 267.23 L1337.44 267.35 L1336.44 267.46 L1335.43 267.58 L1334.43 267.70 L1333.43 267.82 L1332.43 267.94 L1331.43 268.06 L1330.43 268.19 L1329.44 268.31 L1328.44 268.44 L1327.44 268.57 L1326.45 268.71 L1325.46 268.84 L1324.46 268.98 L1323.47 269.12 L1322.48 269.26 L1321.49 269.40 L1320.50 269.54 L1319.52 269.69 L1318.53 269.83 L1317.54 269.98 L1316.56 270.13 L1315.57 270.28 L1314.59 270.44 L1313.60 270.59 L1312.62 270.75 L1311.64 270.91 L1310.66 271.07 L1309.68 271.23 L1308.70 271.39 L1307.72 271.56 L1306.74 271.72 L1305.76 271.89 L1304.78 272.06 L1303.81 272.24 L1302.83 272.41 L1301.86 272.58 L1300.88 272.76 L1299.91 272.94 L1298.93 273.12 L1297.96 273.30 L1296.99 273.48 L1296.01 273.67 L1295.04 273.85 L1294.07 274.04 L1293.10 274.23 L1292.13 274.42 L1291.16 274.62 L1290.19 274.81 L1289.22 275.00 L1288.25 275.20 L1287.28 275.40 L1286.31 275.60 L1285.34 275.80 L1284.38 276.01 L1283.41 276.21 L1282.44 276.42 L1281.47 276.62 L1280.51 276.83 L1279.54 277.04 L1278.57 277.25 L1277.61 277.47 L1276.64 277.68 L1275.67 277.90 L1274.71 278.12 L1273.74 278.34 L1272.78 278.56 L1271.81 278.78 L1270.85 279.00 L1269.88 279.23 L1268.91 279.45 L1267.95 279.68 L1266.98 279.91 L1266.02 280.14 L1265.05 280.37 L1264.09 280.60 L1263.12 280.83 L1262.16 281.07 L1261.19 281.31 L1260.23 281.54 L1259.26 281.78 L1258.30 282.02 L1257.33 282.26 L1256.37 282.51 L1255.40 282.75 L1254.43 283.00 L1253.47 283.24 L1252.50 283.49 L1251.53 283.74 L1250.57 283.99 L1249.60 284.24 L1248.63 284.49 L1247.67 284.75 L1246.70 285.00 M591.60 314.70 L590.52 314.92 L589.45 315.14 L588.37 315.37 L587.30 315.59 L586.22 315.81 L585.15 316.04 L584.07 316.26 L583.00 316.48 L581.92 316.71 L580.85 316.93 L579.78 317.15 L578.71 317.38 L577.64 317.60 L576.57 317.82 L575.49 318.05 L574.42 318.27 L573.36 318.50 L572.29 318.72 L571.22 318.95 L570.15 319.17 L569.08 319.39 L568.01 319.62 L566.95 319.84 L565.88 320.07 L564.82 320.29 L563.75 320.52 L562.69 320.74 L561.62 320.97 L560.56 321.19 L559.50 321.41 L558.43 321.64 L557.37 321.86 L556.31 322.09 L555.25 322.31 L554.19 322.54 L553.13 322.76 L552.07 322.98 L551.01 323.21 L549.95 323.43 L548.89 323.65 L547.83 323.88 L546.78 324.10 L545.72 324.33 L544.66 324.55 L543.61 324.77 L542.55 324.99 L541.50 325.22 L540.44 325.44 L539.39 325.66 L538.34 325.88 L537.28 326.11 L536.23 326.33 L535.18 326.55 L534.13 326.77 L533.08 326.99 L532.03 327.21 L530.98 327.43 L529.93 327.66 L528.88 327.88 L527.83 328.10 L526.78 328.32 L525.74 328.54 L524.69 328.75 L523.64 328.97 L522.60 329.19 L521.55 329.41 L520.51 329.63 L519.46 329.85 L518.42 330.06 L517.38 330.28 L516.33 330.50 L515.29 330.72 L514.25 330.93 L513.21 331.15 L512.17 331.36 L511.13 331.58 L510.09 331.79 L509.05 332.01 L508.01 332.22 L506.97 332.44 L505.93 332.65 L504.89 332.86 L503.86 333.07 L502.82 333.29 L501.78 333.50 L500.75 333.71 L499.71 333.92 L498.68 334.13 L497.64 334.34 L496.61 334.55 L495.58 334.76 L494.54 334.97 L493.51 335.17 L492.48 335.38 L491.45 335.59 L490.42 335.79 L489.38 336.00 L488.35 336.21 L487.32 336.41 L486.29 336.62 L485.26 336.82 L484.23 337.02 L483.21 337.23 L482.18 337.43 L481.15 337.63 L480.12 337.83 L479.09 338.03 L478.07 338.23 L477.04 338.43 L476.02 338.63 L474.99 338.83 L473.96 339.02 L472.94 339.22 L471.91 339.42 L470.89 339.61 L469.87 339.81 L468.84 340.00 L467.82 340.20 L466.80 340.39 L465.77 340.58 L464.75 340.77 L463.73 340.96 L462.71 341.15 L461.68 341.34 L460.66 341.53 L459.64 341.72 L458.62 341.91 L457.60 342.09 L456.58 342.28 L455.56 342.47 L454.54 342.65 L453.52 342.83 L452.50 343.02 L451.48 343.20 L450.46 343.38 L449.44 343.56 L448.42 343.74 L447.40 343.92 L446.38 344.10 L445.37 344.28 L444.35 344.45 L443.33 344.63 L442.31 344.81 L441.29 344.98 L440.28 345.15 L439.26 345.33 L438.24 345.50 L437.22 345.67 L436.21 345.84 L435.19 346.01 L434.17 346.18 L433.16 346.35 L432.14 346.51 L431.12 346.68 L430.11 346.84 L429.09 347.01 L428.07 347.17 L427.06 347.33 L426.04 347.50 L425.02 347.66 L424.01 347.82 L422.99 347.97 L421.97 348.13 L420.96 348.29 L419.94 348.44 L418.92 348.60 L417.91 348.75 L416.89 348.91 L415.87 349.06 L414.86 349.21 L413.84 349.36 L412.82 349.51 L411.81 349.66 L410.79 349.80 L409.77 349.95 L408.75 350.10 L407.74 350.24 L406.72 350.38 L405.70 350.53 L404.68 350.67 L403.66 350.81 L402.65 350.95 L401.63 351.08 L400.61 351.22 L399.59 351.36 L398.57 351.49 L397.55 351.63 L396.53 351.76 L395.51 351.89 L394.49 352.02 L393.47 352.15 L392.45 352.28 L391.43 352.41 L390.41 352.53 L389.39 352.66 L388.36 352.78 L387.34 352.91 L386.32 353.03 L385.30 353.15 L384.27 353.27 L383.25 353.39 L382.23 353.50 L381.20 353.62 L380.18 353.74 L379.15 353.85 L378.13 353.96 L377.10 354.07 L376.08 354.19 L375.05 354.29 L374.02 354.40 L372.99 354.51 L371.97 354.62 L370.94 354.72 L369.91 354.82 L368.88 354.93 L367.85 355.03 L366.82 355.13 L365.79 355.23 L364.76 355.33 L363.73 355.42 L362.70 355.52 L361.66 355.61 L360.63 355.70 L359.60 355.80 L358.56 355.89 L357.53 355.98 L356.49 356.06 L355.46 356.15 L354.42 356.24 L353.38 356.32 L352.34 356.40 L351.31 356.49 L350.27 356.57 L349.23 356.65 L348.19 356.72 L347.15 356.80 L346.10 356.88 L345.06 356.95 L344.02 357.02 L342.98 357.10 L341.93 357.17 L340.89 357.24 L339.84 357.30 L338.79 357.37 L337.75 357.44 L336.70 357.50 M609.80 273.10 L609.33 272.32 L608.86 271.55 L608.40 270.78 L607.94 270.00 L607.48 269.23 L607.04 268.46 L606.59 267.69 L606.15 266.92 L605.72 266.16 L605.28 265.39 L604.86 264.62 L604.44 263.86 L604.02 263.10 L603.61 262.33 L603.20 261.57 L602.79 260.81 L602.39 260.05 L602.00 259.29 L601.61 258.54 L601.22 257.78 L600.84 257.03 L600.46 256.27 L600.08 255.52 L599.71 254.77 L599.35 254.02 L598.99 253.27 L598.63 252.53 L598.27 251.78 L597.92 251.04 L597.58 250.30 L597.23 249.56 L596.90 248.82 L596.56 248.08 L596.23 247.34 L595.90 246.61 L595.58 245.87 L595.26 245.14 L594.95 244.41 L594.63 243.68 L594.32 242.95 L594.02 242.23 L593.72 241.50 L593.42 240.78 L593.12 240.06 L592.83 239.34 L592.54 238.62 L592.26 237.91 L591.97 237.20 L591.69 236.48 L591.42 235.77 L591.14 235.07 L590.87 234.36 L590.61 233.66 L590.34 232.95 L590.08 232.25 L589.82 231.56 L589.56 230.86 L589.31 230.17 L589.06 229.47 L588.81 228.78 L588.56 228.10 L588.31 227.41 L588.07 226.73 L587.83 226.05 L587.59 225.37 L587.36 224.69 L587.12 224.02 L586.89 223.34 L586.66 222.67 L586.43 222.01 L586.20 221.34 L585.97 220.68 L585.75 220.02 L585.53 219.36 L585.30 218.71 L585.08 218.06 L584.86 217.41 L584.65 216.76 L584.43 216.12 L584.21 215.47 L584.00 214.84 L583.78 214.20 L583.57 213.57 L583.35 212.94 L583.14 212.31 L582.93 211.68 L582.71 211.06 L582.50 210.44 L582.29 209.83 L582.07 209.22 L581.86 208.61 L581.65 208.00 L581.43 207.40 L581.22 206.80 L581.01 206.20 L580.79 205.61 L580.57 205.02 L580.36 204.43 L580.14 203.85 L579.92 203.27 L579.70 202.69 L579.48 202.12 L579.26 201.55 L579.03 200.98 L578.80 200.42 L578.58 199.86 L578.35 199.31 L578.11 198.76 L577.88 198.21 L577.64 197.66 L577.40 197.12 L577.16 196.59 L576.92 196.06 L576.67 195.53 L576.42 195.00 L576.17 194.48 L575.91 193.97 L575.65 193.46 L575.39 192.95 L575.12 192.45 L574.85 191.95 L574.58 191.45 L574.30 190.96 L574.02 190.47 L573.73 189.99 L573.44 189.52 L573.14 189.04 L572.84 188.57 L572.54 188.11 L572.23 187.65 L571.91 187.20 L571.59 186.75 L571.26 186.30 L570.93 185.86 L570.60 185.43 L570.25 185.00 L569.90 184.57 L569.55 184.15 L569.18 183.74 L568.82 183.33 L568.44 182.92 L568.06 182.52 L567.67 182.13 L567.27 181.74 L566.87 181.35 L566.46 180.98 L566.04 180.60 L565.62 180.23 L565.18 179.87 L564.74 179.51 L564.29 179.16 L563.83 178.82 L563.36 178.48 L562.89 178.14 L562.41 177.81 L561.91 177.49 L561.41 177.17 L560.90 176.86 L560.38 176.55 L559.85 176.25 L559.31 175.96 L558.76 175.67 L558.20 175.39 L557.63 175.11 L557.05 174.84 L556.45 174.58 L555.85 174.32 L555.24 174.07 L554.62 173.82 L553.98 173.58 L553.34 173.35 L552.68 173.13 L552.01 172.91 L551.33 172.69 L550.64 172.48 L549.94 172.28 L549.22 172.09 L548.50 171.90 L547.76 171.72 L547.01 171.54 L546.24 171.37 L545.46 171.21 L544.68 171.06 L543.87 170.91 L543.06 170.77 L542.23 170.63 L541.39 170.50 L540.53 170.38 L539.67 170.26 L538.78 170.15 L537.89 170.05 L536.98 169.96 L536.06 169.87 L535.12 169.79 L534.17 169.71 L533.21 169.64 L532.23 169.58 L531.24 169.53 L530.23 169.48 L529.21 169.44 L528.18 169.41 L527.13 169.38 L526.06 169.36 L524.99 169.35 L523.89 169.34 L522.78 169.34 L521.66 169.35 L520.53 169.36 L519.37 169.38 L518.21 169.41 L517.03 169.45 L515.83 169.49 L514.62 169.54 L513.40 169.59 L512.16 169.66 L510.90 169.72 L509.63 169.80 L508.35 169.88 L507.05 169.97 L505.73 170.07 L504.40 170.17 L503.06 170.28 L501.70 170.40 L500.33 170.52 L498.94 170.65 L497.53 170.79 L496.12 170.93 L494.68 171.08 L493.24 171.24 M1310.44 171.40 L1309.73 171.57 L1309.03 171.75 L1308.35 171.93 L1307.68 172.12 L1307.02 172.32 L1306.38 172.52 L1305.75 172.73 L1305.13 172.94 L1304.53 173.16 L1303.94 173.39 L1303.36 173.62 L1302.80 173.87 L1302.25 174.11 L1301.71 174.36 L1301.19 174.62 L1300.67 174.89 L1300.17 175.16 L1299.68 175.44 L1299.20 175.72 L1298.74 176.01 L1298.28 176.30 L1297.84 176.60 L1297.40 176.91 L1296.98 177.22 L1296.57 177.54 L1296.17 177.87 L1295.78 178.20 L1295.40 178.53 L1295.03 178.87 L1294.67 179.22 L1294.32 179.57 L1293.98 179.93 L1293.64 180.30 L1293.32 180.66 L1293.01 181.04 L1292.70 181.42 L1292.41 181.80 L1292.12 182.19 L1291.84 182.59 L1291.57 182.99 L1291.30 183.40 L1291.05 183.81 L1290.80 184.22 L1290.56 184.64 L1290.32 185.07 L1290.10 185.50 L1289.88 185.94 L1289.66 186.38 L1289.46 186.82 L1289.26 187.27 L1289.06 187.73 L1288.87 188.19 L1288.69 188.65 L1288.52 189.12 L1288.34 189.60 L1288.18 190.07 L1288.02 190.56 L1287.86 191.04 L1287.71 191.53 L1287.57 192.03 L1287.42 192.53 L1287.29 193.03 L1287.15 193.54 L1287.03 194.05 L1286.90 194.57 L1286.78 195.09 L1286.66 195.62 L1286.55 196.15 L1286.44 196.68 L1286.33 197.21 L1286.23 197.76 L1286.12 198.30 L1286.02 198.85 L1285.93 199.40 L1285.83 199.96 L1285.74 200.51 L1285.65 201.08 L1285.56 201.64 L1285.48 202.21 L1285.39 202.79 L1285.31 203.37 L1285.23 203.95 L1285.15 204.53 L1285.07 205.12 L1284.99 205.71 L1284.92 206.30 L1284.84 206.90 L1284.77 207.50 L1284.69 208.10 L1284.62 208.71 L1284.54 209.32 L1284.47 209.93 L1284.40 210.55 L1284.32 211.17 L1284.25 211.79 L1284.17 212.41 L1284.10 213.04 L1284.02 213.67 L1283.95 214.31 L1283.87 214.94 L1283.79 215.58 L1283.71 216.22 L1283.63 216.87 L1283.55 217.52 L1283.47 218.17 L1283.39 218.82 L1283.30 219.47 L1283.22 220.13 L1283.13 220.79 L1283.04 221.45 L1282.94 222.12 L1282.85 222.79 L1282.75 223.46 L1282.66 224.13 L1282.56 224.80 L1282.45 225.48 L1282.35 226.16 L1282.24 226.84 L1282.13 227.53 L1282.02 228.21 L1281.90 228.90 L1281.78 229.59 L1281.66 230.28 L1281.53 230.98 L1281.41 231.67 L1281.28 232.37 L1281.14 233.07 L1281.00 233.77 L1280.86 234.48 L1280.72 235.19 L1280.57 235.89 L1280.42 236.60 L1280.26 237.32 L1280.10 238.03 L1279.94 238.75 L1279.77 239.46 L1279.60 240.18 L1279.43 240.90 L1279.25 241.63 L1279.07 242.35 L1278.88 243.08 L1278.69 243.80 L1278.49 244.53 L1278.29 245.26 L1278.09 246.00 L1277.88 246.73 L1277.66 247.46 L1277.45 248.20 L1277.22 248.94 L1277.00 249.68 L1276.76 250.42 L1276.53 251.16 L1276.28 251.91 L1276.04 252.65 L1275.79 253.40 L1275.53 254.15 L1275.27 254.90 L1275.00 255.65 L1274.73 256.40 L1274.45 257.15 L1274.17 257.91 L1273.88 258.66 L1273.59 259.42 L1273.29 260.18 L1272.98 260.94 L1272.68 261.70 L1272.36 262.46 L1272.04 263.22 L1271.72 263.99 L1271.38 264.75 L1271.05 265.52 L1270.70 266.29 L1270.36 267.05 L1270.00 267.82 L1269.64 268.59 L1269.28 269.36 L1268.91 270.13 L1268.53 270.91 L1268.15 271.68 L1267.76 272.46 L1267.37 273.23 L1266.97 274.01 L1266.56 274.78 L1266.15 275.56 L1265.73 276.34 L1265.31 277.12 L1264.88 277.90 L1264.44 278.68 L1264.00 279.46 L1263.55 280.25 L1263.10 281.03 L1262.64 281.81 L1262.17 282.60 L1261.70 283.38 L1261.22 284.17 M446.90 233.30 L445.28 233.86 L443.66 234.42 L442.04 234.99 L440.43 235.55 L438.81 236.12 L437.20 236.70 L435.59 237.27 L433.98 237.85 L432.37 238.42 L430.76 239.00 L429.16 239.59 L427.56 240.17 L425.96 240.76 L424.36 241.35 L422.77 241.94 L421.17 242.53 L419.58 243.12 L418.00 243.72 L416.41 244.32 L414.83 244.92 L413.26 245.52 L411.68 246.13 L410.11 246.73 L408.54 247.34 L406.97 247.95 L405.41 248.56 L403.85 249.17 L402.30 249.79 L400.75 250.41 L399.20 251.02 L397.65 251.64 L396.11 252.27 L394.58 252.89 L393.05 253.52 L391.52 254.14 L389.99 254.77 L388.47 255.40 L386.96 256.03 L385.45 256.66 L383.94 257.30 L382.44 257.93 L380.94 258.57 L379.45 259.21 L377.96 259.85 L376.48 260.49 L375.00 261.13 L373.53 261.78 L372.06 262.42 L370.60 263.07 L369.14 263.72 L367.69 264.37 L366.24 265.02 L364.80 265.67 L363.36 266.32 L361.93 266.98 L360.51 267.63 L359.09 268.29 L357.68 268.95 L356.27 269.61 L354.87 270.27 L353.47 270.93 L352.08 271.59 L350.70 272.25 L349.32 272.92 L347.95 273.58 L346.59 274.25 L345.23 274.92 L343.88 275.59 L342.53 276.26 L341.19 276.93 L339.86 277.60 L338.53 278.27 L337.21 278.94 L335.90 279.62 L334.60 280.29 L333.30 280.97 L332.01 281.64 L330.72 282.32 L329.44 283.00 L328.17 283.68 L326.91 284.36 M1477.30 285.04 L1476.85 285.72 L1476.39 286.40 L1475.92 287.09 L1475.45 287.77 L1474.97 288.45 L1474.48 289.14 L1473.98 289.82 L1473.48 290.51 L1472.97 291.20 L1472.45 291.88 L1471.92 292.57 L1471.39 293.26 L1470.85 293.95 L1470.30 294.64 L1469.74 295.33 L1469.18 296.02 L1468.61 296.71 L1468.03 297.40 L1467.44 298.09 L1466.85 298.79 L1466.24 299.48 L1465.63 300.17 L1465.02 300.87 L1464.39 301.56 L1463.76 302.26 L1463.12 302.95 L1462.47 303.65 L1461.81 304.34 L1461.15 305.04 L1460.48 305.73 L1459.80 306.43 L1459.12 307.13 L1458.42 307.82 L1457.72 308.52 L1457.01 309.22 L1456.29 309.92 L1455.57 310.61 L1454.83 311.31 L1454.09 312.01 L1453.35 312.71 L1452.59 313.41 L1451.83 314.11 L1451.05 314.81 L1450.28 315.50 L1449.49 316.20 L1448.69 316.90 L1447.89 317.60 L1447.08 318.30 L1446.27 319.00 L1445.44 319.70 L1444.61 320.40 L1443.77 321.10 L1442.92 321.80 L1442.06 322.50 L1441.20 323.20 L1440.33 323.90 L1439.45 324.60 L1438.57 325.30 L1437.67 325.99 L1436.77 326.69 L1435.86 327.39 L1434.95 328.09 L1434.03 328.79 L1433.09 329.49 L1432.16 330.19 L1431.21 330.88 L1430.26 331.58 L1429.30 332.28 L1428.33 332.98 L1427.36 333.67 L1426.37 334.37 L1425.38 335.07 L1424.39 335.76 L1423.38 336.46 L1422.37 337.15 L1421.36 337.85 L1420.33 338.54 L1419.30 339.24 L1418.26 339.93 L1417.21 340.63 L1416.16 341.32 L1415.10 342.01 L1414.03 342.70 L1412.96 343.40 L1411.88 344.09 L1410.79 344.78 L1409.70 345.47 L1408.59 346.16 L1407.49 346.85 L1406.37 347.54 L1405.25 348.22 L1404.12 348.91 L1402.99 349.60 L1401.85 350.29 L1400.70 350.97 L1399.55 351.66 L1398.39 352.34 L1397.22 353.03 L1396.05 353.71 L1394.87 354.39 L1393.68 355.07 L1392.49 355.75 L1391.29 356.44 L1390.09 357.11 L1388.88 357.79 L1387.66 358.47 L1386.44 359.15 L1385.21 359.83 L1383.98 360.50 L1382.74 361.18 L1381.49 361.85 L1380.24 362.52 L1378.99 363.19 L1377.72 363.87 L1376.46 364.54 L1375.18 365.20 L1373.90 365.87 L1372.62 366.54 L1371.33 367.21 L1370.03 367.87 L1368.73 368.54 L1367.43 369.20 L1366.12 369.86 L1364.80 370.52 L1363.48 371.18 L1362.15 371.84 L1360.82 372.50 L1359.49 373.15 L1358.15 373.81 L1356.80 374.46 L1355.45 375.12 L1354.10 375.77 L1352.74 376.42 L1351.38 377.07 L1350.01 377.71 L1348.64 378.36 L1347.26 379.01 L1345.88 379.65 L1344.49 380.29 L1343.10 380.93 L1341.71 381.57 L1340.31 382.21 L1338.91 382.85 L1337.51 383.48 L1336.10 384.12 L1334.68 384.75 L1333.27 385.38 L1331.85 386.01 L1330.42 386.64 L1329.00 387.26 L1327.57 387.89 L1326.13 388.51 L1324.69 389.13 L1323.25 389.75 L1321.81 390.37 L1320.36 390.99 L1318.91 391.60 L1317.46 392.21 L1316.01 392.82 L1314.55 393.43 L1313.09 394.04 L1311.62 394.65 L1310.16 395.25 L1308.69 395.85 L1307.22 396.45 L1305.74 397.05 L1304.27 397.65 L1302.79 398.24 L1301.31 398.83 L1299.83 399.42 L1298.34 400.01 L1296.86 400.60 L1295.37 401.18 L1293.88 401.76 L1292.39 402.34 L1290.89 402.92 L1289.40 403.49 L1287.90 404.07 L1286.40 404.64 L1284.90 405.21 L1283.40 405.77 L1281.90 406.34 L1280.40 406.90 M667.60 271.30 L666.84 270.76 L666.08 270.23 L665.32 269.69 L664.56 269.16 L663.80 268.63 L663.05 268.10 L662.29 267.57 L661.54 267.04 L660.79 266.52 L660.04 265.99 L659.29 265.47 L658.54 264.95 L657.80 264.43 L657.05 263.91 L656.31 263.39 L655.57 262.88 L654.83 262.37 L654.09 261.85 L653.35 261.34 L652.61 260.83 L651.87 260.33 L651.14 259.82 L650.41 259.32 L649.67 258.81 L648.94 258.31 L648.21 257.81 L647.48 257.32 L646.75 256.82 L646.02 256.33 L645.30 255.84 L644.57 255.35 L643.84 254.86 L643.12 254.37 L642.40 253.89 L641.67 253.40 L640.95 252.92 L640.23 252.44 L639.51 251.97 L638.79 251.49 L638.07 251.02 L637.35 250.55 L636.63 250.08 L635.91 249.61 L635.20 249.15 L634.48 248.69 L633.76 248.23 L633.05 247.77 L632.33 247.31 L631.61 246.86 L630.90 246.40 L630.18 245.95 L629.47 245.51 L628.76 245.06 L628.04 244.62 L627.33 244.18 L626.61 243.74 L625.90 243.30 L625.18 242.87 L624.47 242.44 L623.76 242.01 L623.04 241.58 L622.33 241.16 L621.61 240.73 L620.90 240.31 L620.18 239.90 L619.47 239.48 L618.75 239.07 L618.03 238.66 L617.32 238.25 L616.60 237.85 L615.88 237.45 L615.16 237.05 L614.44 236.65 L613.72 236.26 L613.00 235.87 L612.28 235.48 L611.56 235.09 L610.84 234.71 L610.11 234.33 L609.39 233.95 L608.66 233.57 L607.94 233.20 L607.21 232.83 L606.48 232.47 L605.75 232.10 L605.02 231.74 L604.29 231.38 L603.55 231.03 L602.82 230.68 L602.08 230.33 L601.34 229.98 L600.60 229.64 L599.86 229.30 L599.12 228.96 L598.37 228.63 L597.63 228.30 L596.88 227.97 L596.13 227.64 L595.38 227.32 L594.62 227.00 L593.87 226.69 L593.11 226.38 L592.35 226.07 L591.59 225.76 L590.83 225.46 L590.06 225.16 L589.29 224.86 L588.52 224.57 L587.75 224.28 L586.97 223.99 L586.19 223.71 L585.41 223.43 L584.63 223.16 L583.85 222.88 L583.06 222.61 L582.27 222.35 L581.47 222.09 L580.68 221.83 L579.88 221.57 L579.07 221.32 L578.27 221.07 L577.46 220.83 L576.65 220.59 L575.83 220.35 L575.02 220.11 L574.19 219.88 L573.37 219.66 L572.54 219.43 L571.71 219.21 L570.88 219.00 L570.04 218.79 L569.20 218.58 L568.35 218.37 L567.50 218.17 L566.65 217.97 L565.79 217.78 L564.93 217.59 L564.07 217.40 L563.20 217.22 L562.33 217.04 L561.45 216.87 L560.57 216.70 L559.69 216.53 L558.80 216.37 L557.91 216.21 L557.01 216.05 L556.11 215.90 L555.21 215.75 L554.30 215.61 L553.38 215.47 L552.47 215.33 L551.54 215.20 L550.62 215.07 L549.69 214.95 L548.75 214.83 L547.81 214.71 L546.86 214.60 L545.91 214.49 L544.96 214.39 L544.00 214.28 L543.03 214.19 L542.07 214.10 L541.09 214.01 L540.11 213.92 L539.13 213.84 L538.14 213.77 L537.15 213.69 L536.15 213.63 L535.14 213.56 L534.13 213.50 L533.12 213.45 L532.10 213.39 L531.08 213.35 L530.05 213.30 L529.01 213.26 L527.97 213.23 L526.92 213.20 L525.87 213.17 L524.82 213.15 L523.76 213.13 L522.69 213.11 L521.62 213.10 L520.54 213.09 L519.46 213.09 L518.37 213.09 L517.27 213.10 L516.17 213.11 L515.07 213.12 L513.96 213.14 L512.84 213.16 L511.72 213.19 L510.59 213.22 L509.46 213.25 L508.32 213.29 L507.18 213.33 L506.03 213.38 L504.87 213.43 L503.71 213.48 L502.55 213.54 L501.38 213.60 L500.20 213.67 L499.02 213.74 L497.83 213.81 L496.64 213.89 L495.44 213.98 L494.23 214.06 L493.02 214.15 L491.81 214.25 L490.58 214.35 L489.36 214.45 L488.13 214.56 L486.89 214.67 L485.64 214.78 L484.40 214.90 L483.14 215.02 L481.88 215.15 L480.62 215.28 L479.35 215.42 L478.07 215.55 L476.79 215.70 L475.50 215.84 L474.21 215.99 L472.91 216.15 L471.61 216.31 L470.30 216.47 L468.99 216.63 L467.67 216.80 L466.35 216.98 L465.02 217.15 L463.69 217.33 L462.35 217.52 L461.01 217.71 L459.66 217.90 L458.31 218.10 L456.95 218.30 L455.58 218.50 L454.22 218.71 L452.84 218.92 L451.47 219.13 L450.08 219.35 L448.70 219.57 L447.31 219.80 L445.91 220.03 L444.51 220.26 L443.10 220.50 L441.69 220.74 L440.28 220.98 L438.86 221.23 L437.44 221.48 L436.01 221.73 L434.58 221.99 L433.15 222.25 L431.71 222.51 L430.26 222.78 L428.81 223.05 L427.36 223.33 L425.91 223.61 L424.45 223.89 L422.99 224.17 L421.52 224.46 L420.05 224.75 L418.58 225.05 L417.10 225.34 L415.62 225.65 L414.13 225.95 L412.64 226.26 L411.15 226.57 L409.66 226.88 L408.16 227.20 L406.66 227.52 L405.16 227.84 L403.65 228.17 L402.14 228.50 L400.63 228.83 L399.12 229.17 L397.60 229.51 L396.08 229.85 L394.55 230.20 L393.03 230.54 L391.50 230.89 L389.97 231.25 L388.44 231.61 L386.90 231.97 L385.37 232.33 L383.83 232.69 L382.29 233.06 L380.74 233.43 L379.20 233.81 L377.65 234.18 M1427.04 234.56 L1426.55 234.95 L1426.06 235.33 L1425.58 235.72 L1425.10 236.11 L1424.62 236.50 L1424.14 236.90 L1423.66 237.30 L1423.18 237.70 L1422.70 238.10 L1422.23 238.51 L1421.75 238.92 L1421.28 239.33 L1420.80 239.74 L1420.33 240.16 L1419.86 240.57 L1419.39 241.00 L1418.92 241.42 L1418.45 241.85 L1417.97 242.27 L1417.50 242.70 L1417.03 243.14 L1416.56 243.57 L1416.09 244.01 L1415.62 244.45 L1415.15 244.89 L1414.68 245.34 L1414.21 245.78 L1413.74 246.23 L1413.26 246.68 L1412.79 247.14 L1412.32 247.59 L1411.84 248.05 L1411.37 248.51 L1410.89 248.97 L1410.42 249.44 L1409.94 249.90 L1409.46 250.37 L1408.98 250.84 L1408.50 251.31 L1408.02 251.79 L1407.54 252.26 L1407.05 252.74 L1406.57 253.22 L1406.08 253.70 L1405.59 254.19 L1405.10 254.67 L1404.61 255.16 L1404.12 255.65 L1403.63 256.14 L1403.13 256.63 L1402.63 257.13 L1402.13 257.63 L1401.63 258.12 L1401.12 258.62 L1400.62 259.13 L1400.11 259.63 L1399.60 260.13 L1399.09 260.64 L1398.57 261.15 L1398.06 261.66 L1397.54 262.17 L1397.02 262.68 L1396.49 263.20 L1395.96 263.72 L1395.44 264.23 L1394.90 264.75 L1394.37 265.27 L1393.83 265.80 L1393.29 266.32 L1392.75 266.84 L1392.21 267.37 L1391.66 267.90 L1391.11 268.43 L1390.55 268.96 L1390.00 269.49 L1389.44 270.03 L1388.87 270.56 L1388.31 271.10 L1387.74 271.63 L1387.17 272.17 L1386.59 272.71 L1386.01 273.25 L1385.43 273.80 L1384.85 274.34 L1384.26 274.89 L1383.67 275.43 L1383.07 275.98 L1382.47 276.53 L1381.87 277.08 L1381.26 277.63 L1380.65 278.18 L1380.04 278.73 L1379.43 279.29 L1378.81 279.84 L1378.18 280.40 L1377.56 280.95 L1376.92 281.51 L1376.29 282.07 L1375.65 282.63 L1375.01 283.19 L1374.36 283.75 L1373.71 284.32 L1373.06 284.88 L1372.40 285.44 L1371.74 286.01 L1371.08 286.57 L1370.41 287.14 L1369.73 287.71 L1369.06 288.28 L1368.37 288.85 L1367.69 289.42 L1367.00 289.99 L1366.31 290.56 L1365.61 291.13 L1364.91 291.71 L1364.20 292.28 L1363.49 292.86 L1362.78 293.43 L1362.06 294.01 L1361.34 294.58 L1360.61 295.16 L1359.88 295.74 L1359.15 296.32 L1358.41 296.90 L1357.67 297.48 L1356.92 298.06 L1356.17 298.64 L1355.41 299.22 L1354.65 299.80 L1353.89 300.38 L1353.12 300.96 L1352.34 301.55 L1351.57 302.13 L1350.79 302.72 L1350.00 303.30 M733.30 202.90 L732.01 203.63 L730.73 204.36 L729.44 205.10 L728.16 205.84 L726.87 206.58 L725.59 207.32 L724.31 208.07 L723.03 208.82 L721.75 209.57 L720.48 210.32 L719.20 211.07 L717.93 211.83 L716.66 212.59 L715.39 213.35 L714.12 214.11 L712.85 214.88 L711.59 215.65 L710.32 216.42 L709.06 217.19 L707.80 217.96 L706.55 218.74 L705.29 219.51 L704.04 220.29 L702.79 221.07 L701.54 221.85 L700.30 222.64 L699.06 223.43 L697.82 224.21 L696.58 225.00 L695.34 225.79 L694.11 226.59 L692.88 227.38 L691.66 228.18 L690.43 228.97 L689.21 229.77 L687.99 230.58 L686.78 231.38 L685.57 232.18 L684.36 232.99 L683.15 233.79 L681.95 234.60 L680.75 235.41 L679.56 236.22 L678.37 237.03 L677.18 237.85 L675.99 238.66 L674.81 239.48 L673.63 240.30 L672.46 241.12 L671.29 241.94 L670.12 242.76 L668.96 243.58 L667.80 244.40 L666.65 245.23 L665.50 246.05 L664.35 246.88 L663.21 247.71 L662.07 248.54 L660.93 249.37 L659.80 250.20 L658.68 251.03 L657.56 251.87 L656.44 252.70 L655.33 253.54 L654.22 254.37 L653.12 255.21 L652.02 256.05 L650.92 256.89 L649.83 257.73 L648.75 258.57 L647.67 259.41 L646.59 260.25 L645.52 261.10 L644.45 261.94 L643.39 262.79 L642.34 263.63 L641.29 264.48 L640.24 265.33 L639.20 266.18 L638.16 267.03 L637.13 267.88 L636.11 268.73 L635.09 269.58 L634.07 270.43 L633.06 271.28 L632.06 272.14 L631.06 272.99 L630.07 273.85 L629.08 274.70 L628.10 275.56 L627.12 276.41 L626.15 277.27 L625.18 278.13 L624.22 278.99 L623.27 279.84 L622.32 280.70 L621.38 281.56 L620.44 282.42 L619.51 283.28 L618.58 284.15 L617.66 285.01 L616.75 285.87 L615.84 286.73 L614.94 287.60 L614.05 288.46 L613.16 289.32 L612.27 290.19 L611.40 291.05 L610.53 291.92 L609.66 292.78 L608.80 293.65 L607.95 294.51 L607.10 295.38 L606.26 296.25 L605.43 297.11 L604.60 297.98 L603.78 298.85 L602.97 299.72 L602.16 300.58 L601.36 301.45 L600.56 302.32 L599.77 303.19 L598.99 304.06 L598.22 304.93 L597.45 305.80 L596.69 306.67 L595.93 307.54 L595.18 308.41 L594.44 309.28 L593.70 310.15 L592.97 311.02 L592.25 311.89 L591.54 312.76 L590.83 313.63 L590.12 314.50 L589.43 315.37 L588.74 316.24 L588.06 317.11 L587.38 317.98 L586.72 318.85 L586.05 319.73 L585.40 320.60 L584.75 321.47 L584.11 322.34 L583.48 323.21 L582.85 324.08 L582.23 324.95 L581.62 325.82 L581.01 326.69 L580.42 327.56 L579.82 328.43 L579.24 329.30 L578.66 330.17 L578.09 331.04 L577.53 331.91 L576.97 332.78 L576.42 333.65 L575.88 334.52 L575.34 335.39 L574.81 336.26 L574.29 337.13 L573.78 338.00 L573.27 338.87 L572.77 339.74 L572.28 340.61 L571.79 341.47 L571.31 342.34 L570.84 343.21 L570.38 344.08 L569.92 344.94 L569.47 345.81 L569.03 346.67 L568.59 347.54 L568.16 348.41 L567.74 349.27 L567.32 350.14 L566.91 351.00 L566.51 351.86 L566.12 352.73 L565.73 353.59 L565.35 354.45 L564.98 355.32 L564.61 356.18 L564.26 357.04 L563.90 357.90 L563.56 358.76 L563.22 359.62 L562.89 360.48 L562.57 361.34 L562.25 362.20 L561.94 363.06 L561.64 363.91 L561.34 364.77 L561.05 365.63 L560.77 366.48 L560.50 367.34 L560.23 368.19 L559.97 369.04 L559.71 369.90 L559.46 370.75 L559.22 371.60 L558.99 372.45 L558.76 373.30 L558.54 374.15 L558.33 375.00 L558.12 375.85 L557.92 376.69 L557.72 377.54 L557.54 378.39 L557.36 379.23 L557.18 380.08 L557.01 380.92 L556.85 381.76 L556.70 382.60 L556.55 383.44 L556.41 384.28 L556.27 385.12 L556.14 385.96 L556.02 386.80 L555.90 387.63 L555.79 388.47 L555.69 389.30 L555.59 390.13 L555.50 390.97 L555.41 391.80 L555.33 392.63 L555.26 393.45 L555.19 394.28 L555.13 395.11 L555.07 395.93 L555.02 396.76 L554.98 397.58 L554.94 398.40 L554.91 399.22 L554.88 400.04 L554.86 400.86 L554.84 401.68 L554.83 402.49 L554.83 403.31 L554.83 404.12 L554.83 404.93 L554.85 405.74 L554.86 406.55 L554.88 407.36 L554.91 408.16 L554.94 408.97 L554.98 409.77 L555.02 410.57 L555.07 411.37 L555.12 412.17 L555.17 412.96 L555.24 413.76 L555.30 414.55 L555.37 415.34 L555.45 416.13 L555.52 416.92 L555.61 417.71 L555.70 418.49 L555.79 419.28 L555.88 420.06 L555.98 420.84 L556.09 421.62 L556.19 422.39 L556.31 423.17 L556.42 423.94 L556.54 424.71 L556.66 425.47 L556.79 426.24 L556.92 427.00 L557.05 427.77 L557.19 428.53 L557.33 429.28 L557.47 430.04 L557.61 430.79 L557.76 431.54 L557.91 432.29 L558.06 433.04 L558.22 433.78 L558.38 434.52 L558.54 435.26 L558.70 436.00 M808.40 185.10 L808.37 184.12 L808.34 183.14 L808.32 182.16 L808.29 181.18 L808.27 180.20 L808.25 179.23 L808.23 178.25 L808.21 177.28 L808.20 176.31 L808.19 175.34 L808.18 174.37 L808.17 173.40 L808.16 172.43 L808.16 171.46 L808.16 170.50 L808.15 169.54 L808.16 168.57 L808.16 167.61 L808.16 166.66 L808.17 165.70 L808.17 164.74 L808.18 163.79 L808.19 162.84 L808.21 161.89 L808.22 160.94 L808.23 159.99 L808.25 159.04 L808.27 158.10 L808.29 157.16 L808.31 156.22 L808.33 155.28 L808.35 154.34 L808.37 153.41 L808.40 152.48 L808.42 151.55 L808.45 150.62 L808.48 149.70 L808.50 148.77 L808.53 147.85 L808.56 146.93 L808.59 146.02 L808.62 145.10 L808.65 144.19 L808.68 143.29 L808.72 142.38 L808.75 141.48 L808.78 140.58 L808.81 139.68 L808.85 138.79 L808.88 137.90 L808.91 137.01 L808.94 136.12 L808.97 135.24 L809.00 134.36 L809.03 133.49 L809.06 132.62 L809.09 131.75 L809.12 130.89 L809.15 130.03 L809.17 129.17 L809.20 128.32 L809.22 127.47 L809.24 126.63 L809.26 125.79 L809.28 124.95 L809.29 124.12 L809.30 123.30 L809.32 122.48 L809.32 121.66 L809.33 120.85 L809.33 120.04 L809.33 119.24 L809.33 118.45 L809.32 117.66 L809.31 116.87 L809.29 116.10 L809.27 115.32 L809.25 114.56 L809.22 113.80 L809.19 113.05 L809.15 112.30 L809.11 111.56 L809.06 110.83 L809.00 110.10 L808.94 109.39 L808.87 108.68 L808.79 107.98 L808.71 107.28 L808.61 106.60 L808.52 105.92 L808.41 105.25 L808.29 104.59 L808.16 103.94 L808.03 103.30 L807.88 102.67 L807.72 102.05 L807.56 101.44 L807.38 100.84 L807.18 100.25 L806.98 99.67 L806.76 99.10 L806.53 98.54 L806.29 98.00 L806.03 97.47 L805.75 96.94 L805.46 96.44 L805.16 95.94 L804.83 95.46 L804.49 94.99 L804.13 94.54 L803.76 94.09 L803.36 93.67 L802.94 93.26 L802.50 92.86 L802.04 92.48 L801.56 92.11 L801.06 91.76 L800.53 91.42 L799.98 91.10 L799.40 90.80 L798.80 90.51 L798.17 90.24 L797.52 89.99 L796.83 89.75 L796.12 89.53 L795.39 89.33 L794.62 89.15 L793.82 88.98 L792.99 88.83 L792.13 88.71 L791.24 88.59 L790.32 88.50 L789.37 88.43 L788.38 88.37 L787.36 88.34 L786.30 88.32 L785.22 88.32 L784.09 88.34 L782.94 88.37 L781.74 88.43 L780.52 88.51 L779.25 88.60 L777.96 88.71 L776.62 88.84 L775.25 88.99 L773.85 89.16 L772.41 89.34 L770.93 89.54 L769.42 89.76 L767.88 90.00 L766.30 90.25 L764.68 90.52 L763.03 90.81 L761.35 91.11 L759.63 91.43 L757.87 91.77 L756.09 92.12 L754.27 92.49 L752.42 92.87 L750.54 93.27 L748.62 93.69 L746.67 94.11 L744.70 94.56 L742.69 95.01 L740.65 95.48 L738.59 95.96 L736.49 96.46 L734.37 96.97 L732.22 97.49 L730.04 98.02 L727.84 98.57 L725.61 99.12 L723.36 99.69 L721.08 100.27 L718.78 100.86 L716.45 101.46 L714.11 102.07 L711.74 102.70 L709.34 103.33 L706.93 103.97 L704.50 104.62 L702.05 105.28 L699.58 105.95 L697.09 106.63 L694.58 107.31 L692.06 108.01 L689.52 108.71 L686.96 109.42 L684.39 110.14 L681.80 110.86 L679.20 111.59 L676.59 112.33 L673.96 113.08 L671.31 113.83 L668.66 114.59 L665.99 115.36 L663.32 116.13 L660.63 116.91 L657.93 117.69 L655.22 118.48 L652.50 119.28 L649.78 120.08 L647.04 120.88 L644.30 121.70 L641.55 122.51 L638.79 123.33 L636.03 124.16 L633.26 124.99 L630.48 125.83 L627.70 126.66 L624.91 127.51 L622.12 128.36 L619.32 129.21 L616.52 130.07 L613.71 130.93 L610.91 131.79 L608.09 132.66 L605.28 133.53 L602.47 134.40 L599.65 135.28 L596.83 136.16 L594.01 137.05 L591.19 137.93 L588.37 138.83 L585.54 139.72 L582.72 140.62 L579.90 141.52 L577.08 142.42 L574.26 143.33 L571.44 144.23 L568.62 145.14 L565.81 146.06 L562.99 146.97 L560.18 147.89 L557.37 148.81 L554.56 149.74 L551.76 150.66 L548.96 151.59 L546.16 152.52 L543.37 153.45 L540.58 154.38 L537.80 155.32 L535.01 156.26 L532.24 157.20 L529.47 158.14 L526.70 159.08 L523.94 160.03 L521.19 160.98 L518.44 161.93 L515.69 162.88 L512.96 163.83 L510.23 164.78 L507.50 165.74 L504.79 166.70 L502.07 167.66 L499.37 168.62 M1307.10 169.58 L1308.77 170.54 L1310.44 171.51 L1312.10 172.47 L1313.75 173.44 L1315.39 174.41 L1317.02 175.38 L1318.65 176.35 L1320.27 177.32 L1321.88 178.29 L1323.48 179.27 L1325.07 180.25 L1326.65 181.22 L1328.22 182.20 L1329.78 183.18 L1331.34 184.16 L1332.88 185.14 L1334.41 186.13 L1335.94 187.11 L1337.45 188.09 L1338.96 189.08 L1340.45 190.07 L1341.93 191.05 L1343.40 192.04 L1344.87 193.03 L1346.32 194.02 L1347.76 195.01 L1349.19 196.00 L1350.60 197.00 L1352.01 197.99 L1353.41 198.98 L1354.79 199.98 L1356.16 200.98 L1357.52 201.97 L1358.87 202.97 L1360.21 203.97 L1361.54 204.97 L1362.85 205.97 L1364.15 206.97 L1365.44 207.97 L1366.72 208.97 L1367.98 209.97 L1369.24 210.97 L1370.48 211.98 L1371.71 212.98 L1372.92 213.99 L1374.12 214.99 L1375.31 216.00 L1376.49 217.00 L1377.65 218.01 L1378.81 219.02 L1379.94 220.03 L1381.07 221.03 L1382.18 222.04 L1383.28 223.05 L1384.36 224.06 L1385.43 225.07 L1386.49 226.09 L1387.54 227.10 L1388.57 228.11 L1389.58 229.12 L1390.59 230.13 L1391.58 231.15 L1392.55 232.16 L1393.52 233.18 L1394.46 234.19 L1395.40 235.21 L1396.32 236.22 L1397.22 237.24 L1398.11 238.25 L1398.99 239.27 L1399.85 240.29 L1400.70 241.30 L1401.54 242.32 L1402.36 243.34 L1403.16 244.36 L1403.95 245.38 L1404.73 246.40 L1405.49 247.42 L1406.24 248.44 L1406.97 249.46 L1407.68 250.48 L1408.39 251.50 L1409.07 252.52 L1409.75 253.54 L1410.41 254.56 L1411.05 255.58 L1411.68 256.60 L1412.29 257.63 L1412.89 258.65 L1413.47 259.67 L1414.04 260.70 L1414.59 261.72 L1415.13 262.74 L1415.65 263.77 L1416.15 264.79 L1416.65 265.81 L1417.12 266.84 L1417.58 267.86 L1418.03 268.89 L1418.46 269.91 L1418.87 270.94 L1419.27 271.96 L1419.65 272.99 L1420.02 274.02 L1420.37 275.04 L1420.71 276.07 L1421.03 277.09 L1421.34 278.12 L1421.63 279.15 L1421.90 280.17 L1422.16 281.20 L1422.40 282.23 L1422.63 283.26 L1422.84 284.28 L1423.04 285.31 L1423.22 286.34 L1423.38 287.37 L1423.53 288.39 L1423.66 289.42 L1423.78 290.45 L1423.88 291.48 L1423.97 292.51 L1424.04 293.53 L1424.09 294.56 L1424.13 295.59 L1424.15 296.62 L1424.16 297.65 L1424.15 298.68 L1424.12 299.71 L1424.08 300.74 L1424.03 301.77 L1423.95 302.79 L1423.87 303.82 L1423.76 304.85 L1423.64 305.88 L1423.50 306.91 L1423.35 307.94 L1423.18 308.97 L1423.00 310.00 M880.00 267.80 L879.32 268.68 L878.65 269.56 L877.97 270.44 L877.29 271.32 L876.62 272.20 L875.94 273.08 L875.27 273.96 L874.60 274.84 L873.92 275.72 L873.25 276.61 L872.58 277.49 L871.91 278.37 L871.24 279.26 L870.57 280.14 L869.90 281.03 L869.23 281.92 L868.56 282.80 L867.89 283.69 L867.23 284.58 L866.56 285.46 L865.90 286.35 L865.23 287.24 L864.57 288.13 L863.91 289.02 L863.25 289.91 L862.59 290.80 L861.93 291.69 L861.27 292.58 L860.61 293.47 L859.95 294.36 L859.30 295.26 L858.64 296.15 L857.99 297.04 L857.34 297.93 L856.69 298.83 L856.03 299.72 L855.38 300.61 L854.74 301.51 L854.09 302.40 L853.44 303.29 L852.80 304.19 L852.15 305.08 L851.51 305.98 L850.87 306.87 L850.23 307.77 L849.59 308.66 L848.95 309.56 L848.31 310.45 L847.67 311.35 L847.04 312.24 L846.41 313.14 L845.77 314.03 L845.14 314.93 L844.51 315.82 L843.88 316.72 L843.26 317.61 L842.63 318.51 L842.01 319.41 L841.38 320.30 L840.76 321.20 L840.14 322.09 L839.52 322.99 L838.91 323.89 L838.29 324.78 L837.68 325.68 L837.06 326.57 L836.45 327.47 L835.84 328.36 L835.23 329.26 L834.63 330.15 L834.02 331.05 L833.42 331.94 L832.82 332.84 L832.22 333.73 L831.62 334.63 L831.02 335.52 L830.42 336.42 L829.83 337.31 L829.24 338.21 L828.65 339.10 L828.06 339.99 L827.47 340.89 L826.89 341.78 L826.30 342.67 L825.72 343.56 L825.14 344.46 L824.56 345.35 L823.98 346.24 L823.41 347.13 L822.83 348.02 L822.26 348.91 L821.69 349.80 L821.12 350.69 L820.56 351.58 L819.99 352.47 L819.43 353.36 L818.87 354.25 L818.31 355.14 L817.75 356.03 L817.20 356.91 L816.65 357.80 L816.09 358.69 L815.55 359.57 L815.00 360.46 L814.45 361.35 L813.91 362.23 L813.37 363.11 L812.83 364.00 L812.29 364.88 L811.75 365.76 L811.22 366.65 L810.69 367.53 L810.16 368.41 L809.63 369.29 L809.10 370.17 L808.58 371.05 L808.05 371.93 L807.53 372.80 L807.02 373.68 L806.50 374.56 L805.99 375.43 L805.47 376.31 L804.96 377.18 L804.46 378.06 L803.95 378.93 L803.44 379.80 L802.94 380.67 L802.44 381.55 L801.94 382.42 L801.45 383.28 L800.95 384.15 L800.46 385.02 L799.97 385.89 L799.48 386.75 L799.00 387.62 L798.51 388.48 L798.03 389.35 L797.55 390.21 L797.07 391.07 L796.60 391.93 L796.12 392.79 L795.65 393.65 L795.18 394.50 L794.71 395.36 L794.25 396.22 L793.78 397.07 L793.32 397.92 L792.86 398.78 L792.41 399.63 L791.95 400.48 L791.50 401.33 L791.04 402.17 L790.59 403.02 L790.15 403.86 L789.70 404.71 L789.25 405.55 L788.81 406.39 L788.37 407.23 L787.93 408.07 L787.50 408.91 L787.06 409.74 L786.63 410.58 L786.20 411.41 L785.77 412.24 L785.34 413.07 L784.92 413.90 L784.49 414.73 L784.07 415.56 L783.65 416.38 L783.23 417.21 L782.82 418.03 L782.40 418.85 L781.99 419.66 L781.58 420.48 L781.17 421.30 L780.76 422.11 L780.35 422.92 L779.95 423.73 L779.54 424.54 L779.14 425.34 L778.74 426.15 L778.34 426.95 L777.94 427.75 L777.55 428.55 L777.15 429.35 L776.76 430.14 L776.37 430.93 L775.98 431.72 L775.59 432.51 L775.20 433.30 M927.80 210.00 L927.02 210.68 L926.23 211.37 L925.45 212.06 L924.66 212.75 L923.88 213.45 L923.09 214.14 L922.31 214.84 L921.52 215.54 L920.73 216.25 L919.95 216.95 L919.16 217.66 L918.38 218.37 L917.59 219.09 L916.81 219.80 L916.02 220.52 L915.23 221.24 L914.45 221.96 L913.66 222.68 L912.87 223.41 L912.09 224.13 L911.30 224.86 L910.51 225.60 L909.73 226.33 L908.94 227.06 L908.15 227.80 L907.36 228.54 L906.58 229.28 L905.79 230.02 L905.00 230.77 L904.22 231.51 L903.43 232.26 L902.64 233.01 L901.85 233.76 L901.07 234.52 L900.28 235.27 L899.49 236.03 L898.70 236.78 L897.92 237.54 L897.13 238.30 L896.34 239.07 L895.55 239.83 L894.77 240.60 L893.98 241.36 L893.19 242.13 L892.41 242.90 L891.62 243.67 L890.83 244.45 L890.05 245.22 L889.26 245.99 L888.48 246.77 L887.69 247.55 L886.90 248.33 L886.12 249.11 L885.33 249.89 L884.55 250.67 L883.76 251.46 L882.98 252.24 L882.20 253.03 L881.41 253.82 L880.63 254.60 L879.85 255.39 L879.06 256.18 L878.28 256.98 L877.50 257.77 L876.72 258.56 L875.94 259.36 L875.16 260.15 L874.37 260.95 L873.60 261.75 L872.82 262.55 L872.04 263.35 L871.26 264.15 L870.48 264.95 L869.70 265.75 L868.93 266.56 L868.15 267.36 L867.37 268.17 L866.60 268.97 L865.83 269.78 L865.05 270.59 L864.28 271.39 L863.51 272.20 L862.73 273.01 L861.96 273.82 L861.19 274.63 L860.42 275.45 L859.65 276.26 L858.89 277.07 L858.12 277.89 L857.35 278.70 L856.59 279.52 L855.82 280.33 L855.06 281.15 L854.30 281.97 L853.53 282.78 L852.77 283.60 L852.01 284.42 L851.25 285.24 L850.49 286.06 L849.74 286.88 L848.98 287.70 L848.22 288.52 L847.47 289.34 L846.72 290.17 L845.96 290.99 L845.21 291.81 L844.46 292.64 L843.71 293.46 L842.96 294.28 L842.22 295.11 L841.47 295.93 L840.73 296.76 L839.98 297.59 L839.24 298.41 L838.50 299.24 L837.76 300.07 L837.02 300.89 L836.28 301.72 L835.55 302.55 L834.81 303.38 L834.08 304.20 L833.35 305.03 L832.62 305.86 L831.89 306.69 L831.16 307.52 L830.43 308.35 L829.71 309.18 L828.99 310.01 L828.26 310.84 L827.54 311.67 L826.82 312.50 L826.10 313.33 L825.39 314.16 L824.67 314.99 L823.96 315.82 L823.25 316.65 L822.54 317.48 L821.83 318.31 L821.12 319.14 L820.42 319.97 L819.71 320.80 L819.01 321.63 L818.31 322.46 L817.61 323.29 L816.91 324.12 L816.22 324.95 L815.52 325.78 L814.83 326.61 L814.14 327.44 L813.45 328.27 L812.77 329.10 L812.08 329.93 L811.40 330.76 L810.72 331.59 L810.04 332.42 L809.36 333.25 L808.68 334.08 L808.01 334.91 L807.34 335.73 L806.66 336.56 L806.00 337.39 L805.33 338.22 L804.66 339.05 L804.00 339.87 L803.34 340.70 L802.68 341.53 L802.02 342.35 L801.37 343.18 L800.71 344.00 L800.06 344.83 L799.41 345.66 L798.77 346.48 L798.12 347.30 L797.48 348.13 L796.83 348.95 L796.19 349.77 L795.56 350.60 L794.92 351.42 L794.29 352.24 L793.66 353.06 L793.03 353.88 L792.40 354.70 L791.77 355.52 L791.15 356.34 L790.53 357.16 L789.91 357.98 L789.29 358.80 L788.68 359.61 L788.07 360.43 L787.46 361.25 L786.85 362.06 L786.24 362.88 L785.64 363.69 L785.03 364.50 L784.43 365.32 L783.84 366.13 L783.24 366.94 L782.65 367.75 L782.05 368.56 L781.46 369.37 L780.88 370.18 L780.29 370.98 L779.71 371.79 L779.13 372.60 L778.55 373.40 L777.97 374.20 L777.40 375.01 L776.82 375.81 L776.25 376.61 L775.69 377.41 L775.12 378.21 L774.56 379.01 L773.99 379.81 L773.43 380.60 L772.88 381.40 L772.32 382.20 L771.77 382.99 L771.22 383.78 L770.67 384.57 L770.12 385.36 L769.57 386.15 L769.03 386.94 L768.49 387.73 L767.95 388.52 L767.42 389.30 L766.88 390.08 L766.35 390.87 L765.82 391.65 L765.29 392.43 L764.76 393.21 L764.24 393.98 L763.71 394.76 L763.19 395.54 L762.67 396.31 L762.16 397.08 L761.64 397.85 L761.13 398.62 L760.62 399.39 L760.11 400.16 L759.60 400.92 L759.10 401.69 L758.59 402.45 L758.09 403.21 L757.59 403.97 L757.09 404.72 L756.60 405.48 L756.10 406.23 L755.61 406.99 L755.12 407.74 L754.63 408.49 L754.14 409.23 L753.66 409.98 L753.17 410.72 L752.69 411.47 L752.21 412.21 L751.73 412.95 L751.25 413.68 L750.77 414.42 L750.30 415.15 L749.82 415.88 L749.35 416.61 L748.88 417.34 L748.41 418.06 L747.94 418.79 L747.48 419.51 L747.01 420.23 L746.55 420.94 L746.08 421.66 L745.62 422.37 L745.16 423.08 L744.70 423.79 L744.24 424.49 L743.79 425.20 L743.33 425.90 L742.87 426.60 L742.42 427.29 L741.96 427.99 L741.51 428.68 L741.06 429.37 L740.61 430.05 L740.16 430.74 L739.71 431.42 L739.26 432.10 L738.81 432.77 L738.36 433.44 L737.91 434.12 L737.46 434.78 L737.02 435.45 L736.57 436.11 L736.12 436.77 L735.68 437.43 L735.23 438.08 L734.79 438.73 L734.34 439.38 L733.89 440.02 L733.45 440.66 L733.00 441.30 M1428.90 243.60 L1428.64 244.15 L1428.38 244.70 L1428.11 245.26 L1427.84 245.82 L1427.57 246.38 L1427.30 246.94 L1427.02 247.50 L1426.75 248.06 L1426.47 248.63 L1426.18 249.20 L1425.90 249.77 L1425.61 250.34 L1425.32 250.92 L1425.02 251.49 L1424.72 252.07 L1424.42 252.65 L1424.12 253.23 L1423.81 253.81 L1423.50 254.40 L1423.18 254.98 L1422.87 255.57 L1422.55 256.16 L1422.22 256.75 L1421.89 257.34 L1421.56 257.94 L1421.22 258.53 L1420.88 259.13 L1420.54 259.73 L1420.19 260.33 L1419.84 260.93 L1419.48 261.53 L1419.12 262.14 L1418.76 262.74 L1418.39 263.35 L1418.02 263.96 L1417.64 264.57 L1417.26 265.18 L1416.87 265.79 L1416.48 266.41 L1416.09 267.02 L1415.69 267.64 L1415.28 268.26 L1414.87 268.88 L1414.46 269.50 L1414.04 270.12 L1413.62 270.74 L1413.19 271.36 L1412.76 271.99 L1412.32 272.61 L1411.88 273.24 L1411.43 273.87 L1410.98 274.50 L1410.52 275.13 L1410.06 275.76 L1409.59 276.39 L1409.11 277.02 L1408.63 277.66 L1408.15 278.29 L1407.66 278.93 L1407.17 279.57 L1406.67 280.20 L1406.16 280.84 L1405.65 281.48 L1405.14 282.12 L1404.61 282.77 L1404.09 283.41 L1403.56 284.05 L1403.02 284.69 L1402.47 285.34 L1401.92 285.99 L1401.37 286.63 L1400.81 287.28 L1400.24 287.93 L1399.67 288.57 L1399.09 289.22 L1398.51 289.87 L1397.92 290.52 L1397.33 291.18 L1396.73 291.83 L1396.12 292.48 L1395.51 293.13 L1394.89 293.79 L1394.27 294.44 L1393.64 295.10 L1393.00 295.75 L1392.36 296.41 L1391.71 297.06 L1391.06 297.72 L1390.40 298.38 L1389.74 299.04 L1389.07 299.69 L1388.39 300.35 L1387.71 301.01 L1387.02 301.67 L1386.33 302.33 L1385.62 302.99 L1384.92 303.65 L1384.21 304.31 L1383.49 304.98 L1382.76 305.64 L1382.03 306.30 L1381.30 306.96 L1380.55 307.62 L1379.81 308.29 L1379.05 308.95 L1378.29 309.61 L1377.52 310.28 L1376.75 310.94 L1375.97 311.61 L1375.19 312.27 L1374.40 312.93 L1373.60 313.60 L1372.80 314.26 L1371.99 314.93 L1371.18 315.59 L1370.36 316.26 L1369.53 316.92 L1368.70 317.59 L1367.86 318.25 L1367.02 318.92 L1366.17 319.58 L1365.31 320.25 L1364.45 320.92 L1363.58 321.58 L1362.71 322.25 L1361.83 322.91 L1360.95 323.58 L1360.06 324.24 L1359.16 324.91 L1358.26 325.57 L1357.35 326.24 L1356.43 326.90 L1355.52 327.57 L1354.59 328.23 L1353.66 328.90 L1352.72 329.56 L1351.78 330.22 L1350.83 330.89 L1349.88 331.55 L1348.92 332.21 L1347.95 332.88 L1346.98 333.54 L1346.01 334.20 L1345.02 334.86 L1344.04 335.53 L1343.04 336.19 L1342.05 336.85 L1341.04 337.51 L1340.03 338.17 L1339.02 338.83 L1338.00 339.49 L1336.97 340.15 L1335.94 340.81 L1334.91 341.47 L1333.87 342.12 L1332.82 342.78 L1331.77 343.44 L1330.71 344.10 L1329.65 344.75 L1328.58 345.41 L1327.51 346.06 L1326.43 346.72 L1325.35 347.37 L1324.26 348.02 L1323.17 348.68 L1322.07 349.33 L1320.97 349.98 L1319.86 350.63 L1318.75 351.28 L1317.64 351.93 L1316.52 352.58 L1315.39 353.22 L1314.26 353.87 L1313.12 354.52 L1311.98 355.16 L1310.84 355.81 L1309.69 356.45 L1308.54 357.10 L1307.38 357.74 L1306.22 358.38 L1305.05 359.02 L1303.88 359.66 L1302.70 360.30 L1301.52 360.94 L1300.34 361.58 L1299.15 362.21 L1297.96 362.85 L1296.76 363.48 L1295.56 364.11 L1294.36 364.75 L1293.15 365.38 L1291.94 366.01 L1290.72 366.64 L1289.50 367.27 L1288.28 367.89 L1287.05 368.52 L1285.82 369.14 L1284.58 369.77 L1283.34 370.39 L1282.10 371.01 L1280.85 371.63 L1279.60 372.25 L1278.35 372.87 L1277.10 373.49 L1275.84 374.10 L1274.57 374.72 L1273.31 375.33 L1272.04 375.94 L1270.77 376.55 L1269.49 377.16 L1268.21 377.77 L1266.93 378.37 L1265.65 378.98 L1264.36 379.58 L1263.07 380.18 L1261.77 380.78 L1260.48 381.38 L1259.18 381.98 L1257.88 382.57 L1256.57 383.17 L1255.27 383.76 L1253.96 384.35 L1252.65 384.94 L1251.33 385.53 L1250.02 386.12 L1248.70 386.70 M836.40 255.30 L835.50 254.80 L834.60 254.31 L833.69 253.82 L832.79 253.33 L831.89 252.84 L830.99 252.35 L830.09 251.86 L829.19 251.38 L828.29 250.90 L827.39 250.42 L826.49 249.94 L825.59 249.47 L824.69 249.00 L823.79 248.52 L822.89 248.06 L821.99 247.59 L821.09 247.12 L820.20 246.66 L819.30 246.20 L818.40 245.74 L817.50 245.29 L816.60 244.83 L815.70 244.38 L814.80 243.93 L813.91 243.48 L813.01 243.04 L812.11 242.60 L811.21 242.16 L810.31 241.72 L809.41 241.28 L808.52 240.85 L807.62 240.42 L806.72 239.99 L805.82 239.57 L804.92 239.14 L804.02 238.72 L803.12 238.30 L802.23 237.89 L801.33 237.47 L800.43 237.06 L799.53 236.66 L798.63 236.25 L797.73 235.85 L796.83 235.45 L795.93 235.05 L795.03 234.66 L794.13 234.26 L793.22 233.87 L792.32 233.49 L791.42 233.10 L790.52 232.72 L789.62 232.34 L788.71 231.97 L787.81 231.60 L786.90 231.23 L786.00 230.86 L785.10 230.50 L784.19 230.14 L783.28 229.78 L782.38 229.42 L781.47 229.07 L780.56 228.72 L779.65 228.38 L778.74 228.03 L777.83 227.69 L776.92 227.36 L776.01 227.02 L775.10 226.69 L774.19 226.37 L773.27 226.04 L772.36 225.72 L771.44 225.40 L770.53 225.09 L769.61 224.78 L768.69 224.47 L767.77 224.16 L766.85 223.86 L765.93 223.56 L765.01 223.27 L764.09 222.98 L763.16 222.69 L762.24 222.41 L761.31 222.12 L760.38 221.85 L759.46 221.57 L758.53 221.30 L757.59 221.03 L756.66 220.77 L755.73 220.51 L754.79 220.25 L753.86 220.00 L752.92 219.75 L751.98 219.50 L751.04 219.26 L750.09 219.02 L749.15 218.79 L748.20 218.55 L747.26 218.33 L746.31 218.10 L745.36 217.88 L744.41 217.66 L743.45 217.45 L742.50 217.24 L741.54 217.03 L740.58 216.83 L739.62 216.63 L738.65 216.44 L737.69 216.25 L736.72 216.06 L735.75 215.88 L734.78 215.70 L733.81 215.53 L732.84 215.35 L731.86 215.19 L730.88 215.02 L729.90 214.86 L728.91 214.71 L727.93 214.56 L726.94 214.41 L725.95 214.26 L724.96 214.12 L723.96 213.99 L722.97 213.86 L721.97 213.73 L720.97 213.60 L719.96 213.48 L718.95 213.37 L717.95 213.26 L716.93 213.15 L715.92 213.04 L714.90 212.94 L713.88 212.85 L712.86 212.76 L711.84 212.67 L710.81 212.59 L709.78 212.51 L708.75 212.43 L707.71 212.36 L706.67 212.29 L705.63 212.23 L704.59 212.17 L703.54 212.12 L702.49 212.07 L701.44 212.02 L700.38 211.98 L699.33 211.94 L698.26 211.91 L697.20 211.88 L696.13 211.85 L695.06 211.83 L693.99 211.81 L692.91 211.80 L691.83 211.79 L690.75 211.78 L689.67 211.78 L688.58 211.79 L687.49 211.79 L686.39 211.80 L685.29 211.82 L684.19 211.84 L683.09 211.86 L681.98 211.89 L680.87 211.93 L679.76 211.96 L678.64 212.00 L677.52 212.05 L676.40 212.10 L675.27 212.15 L674.14 212.21 L673.01 212.27 L671.87 212.33 L670.73 212.40 L669.59 212.48 L668.44 212.55 L667.29 212.64 L666.14 212.72 L664.98 212.81 L663.82 212.91 L662.66 213.00 L661.49 213.11 L660.32 213.21 L659.15 213.32 L657.97 213.44 L656.79 213.56 L655.61 213.68 L654.42 213.81 L653.23 213.94 L652.04 214.07 L650.84 214.21 L649.65 214.35 L648.44 214.50 L647.24 214.65 L646.03 214.80 L644.82 214.96 L643.60 215.12 L642.38 215.29 L641.16 215.46 L639.93 215.63 L638.71 215.81 L637.47 215.99 L636.24 216.18 L635.00 216.36 L633.76 216.56 L632.52 216.75 L631.27 216.95 L630.02 217.16 L628.77 217.37 L627.51 217.58 L626.25 217.79 L624.99 218.01 L623.72 218.24 L622.46 218.46 L621.19 218.69 L619.91 218.93 L618.63 219.17 L617.36 219.41 L616.07 219.65 L614.79 219.90 L613.50 220.15 L612.21 220.41 L610.92 220.67 L609.62 220.93 L608.32 221.19 L607.02 221.46 L605.72 221.74 L604.41 222.01 L603.10 222.29 L601.79 222.58 L600.47 222.86 L599.16 223.15 L597.84 223.45 L596.52 223.74 L595.19 224.04 L593.87 224.35 L592.54 224.65 L591.21 224.96 L589.88 225.28 L588.54 225.59 L587.21 225.91 L585.87 226.24 L584.53 226.56 L583.19 226.89 L581.84 227.22 L580.49 227.56 L579.15 227.90 L577.80 228.24 L576.44 228.59 L575.09 228.93 L573.74 229.28 L572.38 229.64 L571.02 229.99 L569.66 230.35 L568.30 230.72 L566.94 231.08 L565.57 231.45 L564.21 231.82 L562.84 232.20 L561.47 232.57 L560.10 232.95 L558.73 233.34 L557.36 233.72 L555.99 234.11 L554.61 234.50 L553.24 234.89 L551.86 235.29 L550.48 235.69 L549.11 236.09 L547.73 236.50 L546.35 236.90 L544.97 237.31 L543.59 237.72 L542.21 238.14 L540.83 238.56 L539.45 238.98 L538.06 239.40 L536.68 239.82 L535.30 240.25 L533.92 240.68 L532.53 241.11 L531.15 241.55 L529.77 241.98 L528.38 242.42 L527.00 242.86 L525.61 243.31 L524.23 243.76 L522.85 244.20 L521.46 244.65 L520.08 245.11 L518.70 245.56 L517.32 246.02 L515.94 246.48 L514.55 246.94 L513.17 247.41 L511.79 247.87 L510.41 248.34 L509.03 248.81 L507.66 249.28 L506.28 249.76 L504.90 250.23 L503.53 250.71 L502.15 251.19 L500.78 251.67 L499.41 252.16 L498.04 252.64 L496.67 253.13 L495.30 253.62 L493.93 254.11 L492.56 254.61 L491.20 255.10 L489.84 255.60 L488.47 256.10 L487.11 256.60 L485.75 257.10 L484.40 257.61 L483.04 258.12 L481.69 258.62 L480.34 259.13 L478.99 259.64 L477.64 260.16 L476.29 260.67 L474.95 261.19 L473.61 261.71 L472.27 262.23 L470.93 262.75 L469.59 263.27 L468.26 263.79 L466.93 264.32 L465.60 264.85 L464.28 265.37 L462.95 265.91 L461.63 266.44 L460.31 266.97 L459.00 267.50 L457.68 268.04 L456.37 268.58 L455.07 269.12 L453.76 269.65 L452.46 270.20 L451.16 270.74 L449.87 271.28 L448.57 271.83 L447.28 272.37 L446.00 272.92 L444.71 273.47 L443.43 274.02 L442.16 274.57 L440.88 275.12 L439.61 275.68 L438.34 276.23 L437.08 276.79 L435.82 277.34 L434.56 277.90 L433.31 278.46 L432.06 279.02 L430.82 279.58 L429.57 280.14 L428.34 280.71 L427.10 281.27 L425.87 281.84 L424.64 282.40 L423.42 282.97 L422.20 283.54 L420.99 284.11 L419.77 284.68 L418.57 285.25 L417.36 285.82 L416.17 286.39 L414.97 286.96 L413.78 287.54 L412.59 288.11 L411.41 288.69 L410.24 289.26 L409.06 289.84 L407.89 290.42 L406.73 291.00 L405.57 291.58 L404.41 292.16 L403.26 292.74 L402.12 293.32 L400.97 293.90 L399.84 294.48 L398.71 295.07 L397.58 295.65 L396.45 296.24 L395.34 296.82 L394.22 297.41 L393.11 297.99 L392.01 298.58 L390.91 299.17 L389.82 299.75 L388.73 300.34 L387.64 300.93 L386.57 301.52 L385.49 302.11 L384.42 302.70 L383.36 303.29 L382.30 303.88 L381.25 304.47 L380.20 305.07 L379.15 305.66 L378.12 306.25 L377.08 306.84 L376.06 307.44 L375.03 308.03 L374.02 308.62 L373.00 309.22 L372.00 309.81 L371.00 310.41 L370.00 311.00 M998.30 206.00 L998.10 204.93 L997.90 203.86 L997.70 202.79 L997.49 201.73 L997.28 200.66 L997.07 199.59 L996.86 198.52 L996.64 197.46 L996.42 196.39 L996.19 195.32 L995.97 194.25 L995.74 193.19 L995.50 192.12 L995.27 191.05 L995.03 189.99 L994.78 188.92 L994.54 187.86 L994.29 186.79 L994.04 185.72 L993.79 184.66 L993.53 183.59 L993.27 182.53 L993.01 181.46 L992.74 180.40 L992.47 179.34 L992.20 178.27 L991.93 177.21 L991.65 176.15 L991.37 175.08 L991.09 174.02 L990.80 172.96 L990.52 171.89 L990.22 170.83 L989.93 169.77 L989.64 168.71 L989.34 167.65 L989.04 166.59 L988.73 165.53 L988.42 164.46 L988.12 163.40 L987.80 162.35 L987.49 161.29 L987.17 160.23 L986.85 159.17 L986.53 158.11 L986.20 157.05 L985.88 155.99 L985.55 154.94 L985.22 153.88 L984.88 152.82 L984.54 151.77 L984.20 150.71 L983.86 149.66 L983.52 148.60 L983.17 147.55 L982.82 146.50 L982.47 145.44 L982.12 144.39 L981.76 143.34 L981.41 142.29 L981.05 141.24 L980.68 140.19 L980.32 139.14 L979.95 138.09 L979.59 137.04 L979.21 135.99 L978.84 134.94 L978.47 133.90 L978.09 132.85 L977.71 131.81 L977.33 130.76 L976.95 129.72 L976.57 128.68 L976.18 127.63 L975.79 126.59 L975.40 125.55 L975.01 124.51 L974.62 123.47 L974.23 122.44 L973.83 121.40 L973.43 120.36 L973.04 119.33 L972.64 118.30 L972.23 117.26 L971.83 116.23 L971.43 115.20 L971.02 114.18 L970.62 113.15 L970.21 112.12 L969.80 111.10 L969.39 110.07 L968.98 109.05 L968.57 108.03 L968.16 107.02 L967.75 106.00 L967.33 104.98 L966.92 103.97 L966.51 102.96 L966.09 101.95 L965.68 100.94 L965.26 99.94 L964.85 98.94 L964.44 97.94 L964.02 96.94 L963.61 95.94 L963.20 94.95 L962.78 93.96 L962.37 92.97 L961.96 91.99 L961.55 91.01 L961.14 90.03 L960.74 89.05 L960.33 88.08 L959.93 87.12 L959.53 86.15 L959.13 85.20 L958.73 84.24 L958.34 83.29 L957.95 82.35 L957.57 81.41 L957.18 80.47 L956.81 79.55 L956.43 78.62 L956.07 77.71 L955.70 76.80 L955.35 75.89 L955.00 75.00 M717.30 250.90 L716.95 250.05 L716.61 249.20 L716.27 248.36 L715.93 247.51 L715.60 246.67 L715.27 245.82 L714.95 244.98 L714.62 244.14 L714.30 243.30 L713.99 242.46 L713.67 241.62 L713.37 240.78 L713.06 239.95 L712.76 239.11 L712.46 238.28 L712.16 237.44 L711.87 236.61 L711.58 235.78 L711.29 234.95 L711.00 234.13 L710.72 233.30 L710.45 232.48 L710.17 231.65 L709.90 230.83 L709.63 230.01 L709.36 229.19 L709.10 228.37 L708.84 227.56 L708.58 226.74 L708.33 225.93 L708.08 225.12 L707.83 224.31 L707.58 223.50 L707.34 222.69 L707.10 221.89 L706.86 221.08 L706.62 220.28 L706.39 219.48 L706.16 218.68 L705.93 217.88 L705.70 217.09 L705.48 216.30 L705.26 215.51 L705.04 214.72 L704.82 213.93 L704.61 213.14 L704.40 212.36 L704.19 211.58 L703.98 210.80 L703.77 210.02 L703.57 209.24 L703.37 208.47 L703.17 207.70 L702.97 206.93 L702.77 206.16 L702.58 205.40 L702.38 204.64 L702.19 203.88 L702.00 203.12 L701.81 202.36 L701.62 201.61 L701.44 200.86 L701.25 200.11 L701.07 199.36 L700.89 198.62 L700.70 197.88 L700.52 197.14 L700.34 196.41 L700.16 195.67 L699.99 194.94 L699.81 194.22 L699.63 193.49 L699.46 192.77 L699.28 192.05 L699.11 191.34 L698.93 190.62 L698.76 189.91 L698.58 189.21 L698.41 188.50 L698.23 187.80 L698.06 187.10 L697.88 186.41 L697.71 185.72 L697.53 185.03 L697.36 184.35 L697.18 183.67 L697.00 182.99 L696.82 182.32 L696.64 181.65 L696.46 180.98 L696.28 180.32 L696.10 179.66 L695.92 179.00 L695.73 178.35 L695.54 177.70 L695.36 177.06 L695.17 176.42 L694.97 175.78 L694.78 175.15 L694.58 174.52 L694.38 173.90 L694.18 173.28 L693.98 172.66 L693.77 172.05 L693.56 171.45 L693.35 170.84 L693.14 170.25 L692.92 169.65 L692.70 169.07 L692.47 168.48 L692.24 167.90 L692.01 167.33 L691.77 166.76 L691.53 166.20 L691.29 165.64 L691.04 165.08 L690.79 164.53 L690.53 163.99 L690.27 163.45 L690.00 162.92 L689.72 162.39 L689.45 161.87 L689.16 161.35 L688.87 160.84 L688.58 160.34 L688.27 159.84 L687.97 159.34 L687.65 158.86 L687.33 158.37 L687.00 157.90 L686.67 157.43 L686.33 156.96 L685.98 156.51 L685.62 156.06 L685.26 155.61 L684.88 155.17 L684.50 154.74 L684.12 154.32 L683.72 153.90 L683.32 153.48 L682.90 153.08 L682.48 152.68 L682.05 152.29 L681.60 151.90 L681.15 151.53 L680.69 151.16 L680.22 150.79 L679.74 150.44 L679.25 150.09 L678.75 149.74 L678.24 149.41 L677.71 149.08 L677.18 148.76 L676.63 148.45 L676.07 148.15 L675.50 147.85 L674.92 147.56 L674.33 147.28 L673.72 147.01 L673.11 146.74 L672.48 146.49 L671.83 146.24 L671.18 146.00 L670.51 145.76 L669.82 145.54 L669.13 145.32 L668.42 145.11 L667.69 144.91 L666.95 144.72 L666.20 144.54 L665.43 144.37 L664.65 144.20 L663.85 144.04 L663.04 143.89 L662.21 143.75 L661.37 143.62 L660.52 143.50 L659.64 143.38 L658.75 143.28 L657.85 143.18 M525.10 212.90 L523.33 213.85 L521.58 214.80 L519.83 215.75 L518.09 216.71 L516.35 217.66 L514.63 218.62 L512.92 219.57 L511.21 220.53 L509.52 221.49 L507.83 222.45 L506.16 223.41 L504.49 224.37 L502.83 225.33 L501.19 226.29 L499.55 227.25 L497.92 228.21 L496.30 229.18 L494.69 230.14 L493.10 231.11 L491.51 232.07 L489.93 233.04 L488.36 234.01 L486.81 234.98 L485.26 235.95 L483.72 236.91 L482.20 237.88 L480.69 238.85 L479.18 239.83 L477.69 240.80 L476.21 241.77 L474.74 242.74 L473.28 243.72 L471.83 244.69 L470.39 245.66 L468.96 246.64 L467.55 247.61 L466.15 248.59 L464.75 249.57 L463.37 250.54 L462.00 251.52 L460.65 252.50 L459.30 253.48 L457.97 254.46 L456.65 255.44 L455.34 256.41 L454.04 257.39 L452.75 258.38 L451.48 259.36 L450.22 260.34 L448.97 261.32 L447.73 262.30 L446.50 263.28 L445.29 264.27 L444.09 265.25 L442.90 266.23 L441.73 267.22 L440.57 268.20 L439.42 269.18 L438.28 270.17 L437.15 271.15 L436.04 272.14 L434.94 273.13 L433.85 274.11 L432.78 275.10 L431.72 276.08 L430.67 277.07 L429.64 278.06 L428.62 279.04 L427.61 280.03 L426.61 281.02 L425.63 282.01 L424.66 283.00 L423.71 283.98 L422.76 284.97 L421.84 285.96 L420.92 286.95 L420.02 287.94 L419.13 288.93 L418.25 289.92 L417.39 290.91 L416.54 291.90 L415.71 292.89 L414.89 293.88 L414.08 294.87 L413.29 295.86 L412.51 296.85 L411.74 297.84 L410.99 298.83 L410.25 299.82 L409.53 300.81 L408.82 301.81 L408.12 302.80 L407.44 303.79 L406.77 304.78 L406.11 305.77 L405.47 306.76 L404.85 307.76 L404.23 308.75 L403.63 309.74 L403.05 310.73 L402.48 311.72 L401.92 312.72 L401.38 313.71 L400.85 314.70 L400.34 315.69 L399.84 316.69 L399.35 317.68 L398.88 318.67 L398.42 319.66 L397.98 320.65 L397.55 321.65 L397.14 322.64 L396.74 323.63 L396.35 324.62 L395.98 325.62 L395.62 326.61 L395.28 327.60 L394.95 328.59 L394.63 329.58 L394.33 330.58 L394.05 331.57 L393.78 332.56 L393.52 333.55 L393.28 334.54 L393.05 335.54 L392.83 336.53 L392.63 337.52 L392.45 338.51 L392.28 339.50 L392.12 340.49 L391.98 341.48 L391.85 342.48 L391.74 343.47 L391.64 344.46 L391.55 345.45 L391.48 346.44 L391.43 347.43 L391.38 348.42 L391.36 349.41 L391.34 350.40 L391.34 351.39 L391.36 352.38 L391.39 353.37 L391.43 354.36 L391.49 355.34 L391.56 356.33 L391.65 357.32 L391.75 358.31 L391.86 359.30 L391.99 360.29 L392.14 361.27 L392.29 362.26 L392.47 363.25 L392.65 364.23 L392.85 365.22 L393.06 366.21 L393.29 367.19 L393.53 368.18 L393.79 369.16 L394.06 370.15 L394.34 371.13 L394.64 372.12 L394.95 373.10 L395.27 374.09 L395.61 375.07 L395.97 376.05 L396.33 377.04 L396.71 378.02 L397.11 379.00 L397.51 379.98 L397.93 380.96 L398.37 381.94 L398.82 382.93 L399.28 383.91 L399.75 384.89 L400.24 385.86 L400.74 386.84 L401.26 387.82 L401.79 388.80 L402.33 389.78 L402.88 390.75 L403.45 391.73 L404.03 392.71 L404.63 393.68 L405.24 394.66 L405.86 395.63 L406.49 396.61 L407.13 397.58 L407.79 398.55 L408.47 399.52 L409.15 400.50 L409.85 401.47 L410.56 402.44 L411.28 403.41 L412.01 404.38 L412.76 405.35 L413.52 406.31 L414.29 407.28 L415.08 408.25 L415.87 409.22 L416.68 410.18 L417.50 411.15 L418.33 412.11 L419.18 413.07 L420.03 414.04 L420.90 415.00 L421.78 415.96 L422.67 416.92 L423.57 417.88 L424.49 418.84 L425.41 419.80 L426.35 420.75 L427.30 421.71 L428.26 422.66 L429.23 423.62 L430.21 424.57 L431.20 425.53 L432.20 426.48 L433.22 427.43 L434.24 428.38 L435.28 429.33 L436.32 430.28 L437.38 431.22 L438.44 432.17 L439.52 433.11 L440.60 434.06 L441.70 435.00 M450.20 304.00 L450.31 302.92 L450.44 301.84 L450.58 300.76 L450.73 299.69 L450.90 298.61 L451.09 297.53 L451.29 296.45 L451.51 295.37 L451.74 294.29 L451.99 293.22 L452.25 292.14 L452.52 291.06 L452.81 289.98 L453.12 288.90 L453.44 287.83 L453.78 286.75 L454.13 285.67 L454.50 284.59 L454.88 283.51 L455.27 282.43 L455.68 281.36 L456.11 280.28 L456.55 279.20 L457.01 278.12 L457.48 277.04 L457.96 275.97 L458.46 274.89 L458.98 273.81 L459.51 272.73 L460.05 271.65 L460.61 270.58 L461.18 269.50 L461.77 268.42 L462.37 267.34 L462.99 266.26 L463.62 265.19 L464.27 264.11 L464.93 263.03 L465.61 261.95 L466.30 260.88 L467.01 259.80 L467.72 258.72 L468.46 257.64 L469.21 256.57 L469.97 255.49 L470.75 254.41 L471.54 253.33 L472.35 252.26 L473.17 251.18 L474.00 250.10 L474.85 249.02 L475.71 247.95 L476.59 246.87 L477.48 245.79 L478.39 244.71 L479.31 243.64 L480.24 242.56 L481.19 241.48 L482.15 240.41 L483.12 239.33 L484.11 238.25 L485.12 237.18 L486.13 236.10 L487.16 235.02 L488.21 233.95 L489.27 232.87 L490.34 231.79 L491.42 230.72 L492.52 229.64 L493.64 228.56 L494.76 227.49 L495.90 226.41 L497.05 225.33 L498.22 224.26 L499.40 223.18 L500.59 222.11 L501.80 221.03 L503.02 219.95 L504.25 218.88 L505.50 217.80 L506.76 216.73 L508.03 215.65 L509.32 214.58 L510.61 213.50 L511.92 212.42 L513.25 211.35 L514.58 210.27 L515.93 209.20 L517.30 208.12 L518.67 207.05 M833.30 202.20 L832.82 200.94 L832.35 199.67 L831.87 198.41 L831.40 197.16 L830.94 195.90 L830.47 194.65 L830.01 193.41 L829.55 192.16 L829.09 190.92 L828.63 189.68 L828.18 188.45 L827.72 187.22 L827.27 185.99 L826.82 184.77 L826.38 183.55 L825.93 182.33 L825.49 181.12 L825.05 179.91 L824.61 178.71 L824.17 177.51 L823.73 176.31 L823.30 175.12 L822.86 173.93 L822.43 172.75 L822.00 171.58 L821.57 170.40 L821.14 169.24 L820.71 168.07 L820.28 166.92 L819.85 165.77 L819.42 164.62 L819.00 163.48 L818.57 162.35 L818.14 161.22 L817.71 160.10 L817.29 158.98 L816.86 157.87 L816.43 156.77 L816.00 155.68 L815.57 154.59 L815.14 153.51 L814.71 152.43 L814.27 151.37 L813.84 150.31 L813.40 149.26 L812.96 148.22 L812.51 147.19 L812.07 146.16 L811.62 145.14 L811.16 144.14 L810.71 143.14 L810.25 142.15 L809.78 141.18 L809.31 140.21 L808.84 139.25 L808.36 138.31 L807.87 137.37 L807.38 136.45 L806.88 135.54 L806.37 134.64 L805.86 133.75 L805.34 132.87 L804.81 132.01 L804.27 131.16 L803.73 130.32 L803.17 129.50 L802.60 128.69 L802.02 127.90 L801.43 127.12 L800.83 126.36 L800.22 125.61 L799.59 124.87 L798.95 124.16 L798.29 123.46 L797.62 122.78 L796.93 122.11 L796.23 121.46 L795.51 120.83 L794.77 120.22 L794.01 119.63 L793.23 119.06 L792.43 118.50 L791.61 117.97 L790.77 117.46 L789.91 116.97 L789.02 116.49 L788.11 116.04 L787.18 115.62 L786.21 115.21 L785.22 114.82 L784.21 114.46 L783.17 114.12 L782.09 113.81 L780.99 113.52 L779.86 113.25 L778.69 113.00 L777.50 112.78 L776.27 112.58 L775.01 112.41 L773.71 112.26 L772.38 112.14 L771.02 112.04 L769.62 111.97 L768.18 111.92 L766.71 111.90 L765.20 111.90 L763.65 111.92 L762.06 111.98 L760.44 112.05 L758.78 112.15 L757.07 112.28 L755.33 112.43 L753.55 112.60 L751.74 112.80 L749.88 113.03 L747.98 113.27 L746.04 113.55 L744.07 113.84 L742.05 114.16 L740.00 114.50" fill="none" stroke="#8a8a8a" stroke-width="1" stroke-dasharray="1 2"/>
<ellipse cx="455.5" cy="218.4" rx="48.4" ry="12.3" transform="rotate(-26.4 455.5 218.4)" fill="none" stroke="#4ec36b" stroke-width="2.5"/>
<path d="M334.00 308.90 L348.30 290.00 L368.70 270.70 L390.00 254.00 L410.00 243.30 L430.00 232.50 L447.50 225.50 L476.70 218.30 L510.00 211.70 L543.30 209.70 L576.70 210.00 L600.00 213.00 L604.00 214.00 M482.50 199.50 L498.30 197.50 L526.70 196.70 L551.70 199.20 L565.00 202.50" fill="none" stroke="#4ec36b" stroke-width="1.8" stroke-dasharray="1.6 2.3"/>
<path d="M326.9 320.4 L334 308.9 M604 214 L612.2 216.4 M565 202.5 L572 203.9" fill="none" stroke="#4ec36b" stroke-width="1.6"/>
<circle cx="326.9" cy="320.4" r="1.3" fill="#f07040"/>
<circle cx="612.2" cy="216.4" r="1.3" fill="#f07040"/>
<circle cx="572.0" cy="203.9" r="1.3" fill="#f07040"/>
<path d="M479.3 199.5 h6.4 M482.5 196.3 v6.4" stroke="#ff1010" stroke-width="1.5"/>
<path d="M444.3 225.5 h6.4 M447.5 222.3 v6.4" stroke="#ff1010" stroke-width="1.5"/>
<path d="M450.1 219.2 h6.4 M453.3 216.0 v6.4" stroke="#ff1010" stroke-width="1.5"/>
<text x="453.3" y="222.2" text-anchor="middle" class="bl" font-size="11">COM</text>
<text x="314.2" y="30.10" class="mono">UK0067</text>
<text x="314.2" y="43.04" class="mono">Beg: 20251218 18:30:08 (sol = 266.73°)</text>
<text x="314.2" y="55.98" class="mono">End: 20251219 06:59:48 (sol = 267.26°)</text>
<text x="314.2" y="68.92" class="mono">--------------------------------------</text>
<text x="314.2" y="81.86" class="mono">...: 20</text>
<text x="314.2" y="94.80" class="mono">COM: 3</text>
<line x1="73.9" y1="641.5" x2="73.9" y2="842.5" stroke="#565656" stroke-width="2" stroke-dasharray="2 3.5"/>
<line x1="217.9" y1="641.5" x2="217.9" y2="842.5" stroke="#565656" stroke-width="2" stroke-dasharray="2 3.5"/>
<line x1="365.0" y1="641.5" x2="365.0" y2="842.5" stroke="#565656" stroke-width="2" stroke-dasharray="2 3.5"/>
<line x1="505.0" y1="641.5" x2="505.0" y2="842.5" stroke="#565656" stroke-width="2" stroke-dasharray="2 3.5"/>
<line x1="649.8" y1="641.5" x2="649.8" y2="842.5" stroke="#565656" stroke-width="2" stroke-dasharray="2 3.5"/>
<line x1="797.0" y1="641.5" x2="797.0" y2="842.5" stroke="#565656" stroke-width="2" stroke-dasharray="2 3.5"/>
<line x1="940.0" y1="641.5" x2="940.0" y2="842.5" stroke="#565656" stroke-width="2" stroke-dasharray="2 3.5"/>
<line x1="1090.9" y1="641.5" x2="1090.9" y2="842.5" stroke="#565656" stroke-width="2" stroke-dasharray="2 3.5"/>
<line x1="1238.9" y1="641.5" x2="1238.9" y2="842.5" stroke="#565656" stroke-width="2" stroke-dasharray="2 3.5"/>
<line x1="1393.8" y1="641.5" x2="1393.8" y2="842.5" stroke="#565656" stroke-width="2" stroke-dasharray="2 3.5"/>
<line x1="1547.9" y1="641.5" x2="1547.9" y2="842.5" stroke="#565656" stroke-width="2" stroke-dasharray="2 3.5"/>
<line x1="1687.0" y1="641.5" x2="1687.0" y2="842.5" stroke="#565656" stroke-width="2" stroke-dasharray="2 3.5"/>
<text transform="translate(149.7 643) rotate(-90) scale(0.955 1.09)" x="0" y="0" text-anchor="end" class="mon">APR</text>
<text transform="translate(294.6 643) rotate(-90) scale(0.955 1.09)" x="0" y="0" text-anchor="end" class="mon">MAY</text>
<text transform="translate(436.8 643) rotate(-90) scale(0.955 1.09)" x="0" y="0" text-anchor="end" class="mon">JUN</text>
<text transform="translate(577.0 643) rotate(-90) scale(0.955 1.09)" x="0" y="0" text-anchor="end" class="mon">JUL</text>
<text transform="translate(724.1 643) rotate(-90) scale(0.955 1.09)" x="0" y="0" text-anchor="end" class="mon">AUG</text>
<text transform="translate(872.4 643) rotate(-90) scale(0.955 1.09)" x="0" y="0" text-anchor="end" class="mon">SEP</text>
<text transform="translate(1017.0 643) rotate(-90) scale(0.955 1.09)" x="0" y="0" text-anchor="end" class="mon">OCT</text>
<text transform="translate(1170.1 643) rotate(-90) scale(0.955 1.09)" x="0" y="0" text-anchor="end" class="mon">NOV</text>
<text transform="translate(1319.0 643) rotate(-90) scale(0.955 1.09)" x="0" y="0" text-anchor="end" class="mon">DEC</text>
<text transform="translate(1470.1 643) rotate(-90) scale(0.955 1.09)" x="0" y="0" text-anchor="end" class="mon">JAN</text>
<text transform="translate(1628.6 643) rotate(-90) scale(0.955 1.09)" x="0" y="0" text-anchor="end" class="mon">FEB</text>
<text transform="translate(1766.4 643) rotate(-90) scale(0.955 1.09)" x="0" y="0" text-anchor="end" class="mon">MAR</text>
<rect x="106.0" y="831.90" width="23.0" height="4" fill="#bddf26"/><rect x="165.0" y="831.90" width="180.0" height="4" fill="#bddf26"/><rect x="366.0" y="831.90" width="258.9" height="4" fill="#bddf26"/><rect x="635.0" y="831.90" width="151.0" height="4" fill="#bddf26"/><rect x="807.0" y="831.90" width="92.1" height="4" fill="#bddf26"/><rect x="920.0" y="831.90" width="53.0" height="4" fill="#bddf26"/><rect x="984.0" y="831.90" width="81.9" height="4" fill="#bddf26"/><rect x="1082.0" y="831.90" width="120.9" height="4" fill="#bddf26"/><rect x="1244.0" y="831.90" width="81.8" height="4" fill="#bddf26"/><rect x="1337.0" y="831.90" width="17.8" height="4" fill="#bddf26"/><rect x="1381.0" y="831.90" width="62.7" height="4" fill="#bddf26"/><rect x="1458.9" y="831.90" width="53.0" height="4" fill="#bddf26"/><rect x="1522.9" y="831.90" width="24.2" height="4" fill="#bddf26"/><rect x="1724.0" y="831.90" width="24.0" height="4" fill="#bddf26"/><rect x="1758.0" y="831.90" width="24.0" height="4" fill="#bddf26"/><rect x="165.0" y="815.57" width="22.9" height="4" fill="#81d34d"/><rect x="223.0" y="815.57" width="62.9" height="4" fill="#81d34d"/><rect x="312.1" y="815.57" width="27.9" height="4" fill="#81d34d"/><rect x="366.0" y="815.57" width="126.0" height="4" fill="#81d34d"/><rect x="508.0" y="815.57" width="145.9" height="4" fill="#81d34d"/><rect x="704.1" y="815.57" width="32.8" height="4" fill="#81d34d"/><rect x="773.0" y="815.57" width="71.9" height="4" fill="#81d34d"/><rect x="871.0" y="815.57" width="117.0" height="4" fill="#81d34d"/><rect x="1003.0" y="815.57" width="13.8" height="4" fill="#81d34d"/><rect x="1062.0" y="815.57" width="150.9" height="4" fill="#81d34d"/><rect x="1244.0" y="815.57" width="22.9" height="4" fill="#81d34d"/><rect x="1293.0" y="815.57" width="22.9" height="4" fill="#81d34d"/><rect x="1342.0" y="815.57" width="22.9" height="4" fill="#81d34d"/><rect x="1386.0" y="815.57" width="42.9" height="4" fill="#81d34d"/><rect x="1458.9" y="815.57" width="24.1" height="4" fill="#81d34d"/><rect x="1547.9" y="815.57" width="23.1" height="4" fill="#81d34d"/><rect x="165.0" y="799.24" width="22.9" height="4" fill="#4ec36b"/><rect x="258.1" y="799.24" width="228.9" height="4" fill="#4ec36b"/><rect x="508.0" y="799.24" width="107.0" height="4" fill="#4ec36b"/><rect x="626.0" y="799.24" width="92.0" height="4" fill="#4ec36b"/><rect x="729.0" y="799.24" width="97.0" height="4" fill="#4ec36b"/><rect x="949.0" y="799.24" width="199.9" height="4" fill="#4ec36b"/><rect x="1160.0" y="799.24" width="87.9" height="4" fill="#4ec36b"/><rect x="1258.0" y="799.24" width="185.7" height="4" fill="#4ec36b"/><rect x="1458.9" y="799.24" width="24.1" height="4" fill="#4ec36b"/><rect x="1551.9" y="799.24" width="24.0" height="4" fill="#4ec36b"/><rect x="194.0" y="782.91" width="24.1" height="4" fill="#2ab07f"/><rect x="321.0" y="782.91" width="186.1" height="4" fill="#2ab07f"/><rect x="518.1" y="782.91" width="22.8" height="4" fill="#2ab07f"/><rect x="557.1" y="782.91" width="125.7" height="4" fill="#2ab07f"/><rect x="807.0" y="782.91" width="24.0" height="4" fill="#2ab07f"/><rect x="954.0" y="782.91" width="19.0" height="4" fill="#2ab07f"/><rect x="988.0" y="782.91" width="137.0" height="4" fill="#2ab07f"/><rect x="1154.9" y="782.91" width="63.0" height="4" fill="#2ab07f"/><rect x="1244.0" y="782.91" width="22.9" height="4" fill="#2ab07f"/><rect x="1317.0" y="782.91" width="23.9" height="4" fill="#2ab07f"/><rect x="1396.0" y="782.91" width="22.8" height="4" fill="#2ab07f"/><rect x="1463.9" y="782.91" width="186.1" height="4" fill="#2ab07f"/><rect x="341.0" y="766.58" width="29.0" height="4" fill="#1e9b8a"/><rect x="410.1" y="766.58" width="37.9" height="4" fill="#1e9b8a"/><rect x="469.0" y="766.58" width="23.0" height="4" fill="#1e9b8a"/><rect x="527.1" y="766.58" width="18.9" height="4" fill="#1e9b8a"/><rect x="562.0" y="766.58" width="27.9" height="4" fill="#1e9b8a"/><rect x="616.1" y="766.58" width="33.0" height="4" fill="#1e9b8a"/><rect x="959.0" y="766.58" width="29.0" height="4" fill="#1e9b8a"/><rect x="1062.0" y="766.58" width="23.9" height="4" fill="#1e9b8a"/><rect x="1100.9" y="766.58" width="24.1" height="4" fill="#1e9b8a"/><rect x="1160.0" y="766.58" width="34.0" height="4" fill="#1e9b8a"/><rect x="1247.9" y="766.58" width="24.1" height="4" fill="#1e9b8a"/><rect x="1425.0" y="766.58" width="86.9" height="4" fill="#1e9b8a"/><rect x="420.0" y="750.25" width="23.0" height="4" fill="#25858e"/><rect x="532.0" y="750.25" width="24.1" height="4" fill="#25858e"/><rect x="567.0" y="750.25" width="22.9" height="4" fill="#25858e"/><rect x="621.1" y="750.25" width="121.0" height="4" fill="#25858e"/><rect x="968.9" y="750.25" width="166.0" height="4" fill="#25858e"/><rect x="1184.9" y="750.25" width="161.1" height="4" fill="#25858e"/><rect x="1469.0" y="750.25" width="23.9" height="4" fill="#25858e"/><rect x="429.1" y="733.92" width="23.9" height="4" fill="#2d708e"/><rect x="576.0" y="733.92" width="156.9" height="4" fill="#2d708e"/><rect x="993.0" y="733.92" width="111.9" height="4" fill="#2d708e"/><rect x="1116.0" y="733.92" width="107.0" height="4" fill="#2d708e"/><rect x="1263.0" y="733.92" width="29.0" height="4" fill="#2d708e"/><rect x="1489.0" y="733.92" width="22.9" height="4" fill="#2d708e"/><rect x="591.0" y="717.59" width="24.0" height="4" fill="#375a8c"/><rect x="655.0" y="717.59" width="117.1" height="4" fill="#375a8c"/><rect x="1072.1" y="717.59" width="170.9" height="4" fill="#375a8c"/><rect x="1263.0" y="717.59" width="23.9" height="4" fill="#375a8c"/><rect x="595.9" y="701.26" width="137.0" height="4" fill="#424086"/><rect x="1090.9" y="701.26" width="29.0" height="4" fill="#424086"/><rect x="1199.1" y="701.26" width="23.9" height="4" fill="#424086"/><rect x="1273.0" y="701.26" width="52.8" height="4" fill="#424086"/><rect x="1111.0" y="684.93" width="23.9" height="4" fill="#482475"/>
<path d="M112.7 833.90 h8 M116.7 829.90 v8 M240.9 833.90 h8 M244.9 829.90 v8 M510.8 833.90 h8 M514.8 829.90 v8 M706.7 833.90 h8 M710.7 829.90 v8 M832.8 833.90 h8 M836.8 829.90 v8 M961.8 833.90 h8 M965.8 829.90 v8 M985.7 833.90 h8 M989.7 829.90 v8 M1115.7 833.90 h8 M1119.7 829.90 v8 M1294.5 833.90 h8 M1298.5 829.90 v8 M1341.6 833.90 h8 M1345.6 829.90 v8 M1412.6 833.90 h8 M1416.6 829.90 v8 M1481.5 833.90 h8 M1485.5 829.90 v8 M1531.0 833.90 h8 M1535.0 829.90 v8 M1731.8 833.90 h8 M1735.8 829.90 v8 M1765.8 833.90 h8 M1769.8 829.90 v8 M171.7 817.57 h8 M175.7 813.57 v8 M255.9 817.57 h8 M259.9 813.57 v8 M322.8 817.57 h8 M326.8 813.57 v8 M436.8 817.57 h8 M440.8 813.57 v8 M598.7 817.57 h8 M602.7 813.57 v8 M716.8 817.57 h8 M720.8 813.57 v8 M792.9 817.57 h8 M796.9 813.57 v8 M938.7 817.57 h8 M942.7 813.57 v8 M1005.7 817.57 h8 M1009.7 813.57 v8 M1152.7 817.57 h8 M1156.7 813.57 v8 M1250.7 817.57 h8 M1254.7 813.57 v8 M1299.5 817.57 h8 M1303.5 813.57 v8 M1348.8 817.57 h8 M1352.8 813.57 v8 M1402.5 817.57 h8 M1406.5 813.57 v8 M1466.9 817.57 h8 M1470.9 813.57 v8 M1554.7 817.57 h8 M1558.7 813.57 v8 M173.9 801.24 h8 M177.9 797.24 v8 M377.8 801.24 h8 M381.8 797.24 v8 M544.9 801.24 h8 M548.9 797.24 v8 M681.8 801.24 h8 M685.8 797.24 v8 M740.8 801.24 h8 M744.8 797.24 v8 M1074.7 801.24 h8 M1078.7 797.24 v8 M1216.8 801.24 h8 M1220.8 797.24 v8 M1304.6 801.24 h8 M1308.6 797.24 v8 M1466.9 801.24 h8 M1470.9 797.24 v8 M1559.8 801.24 h8 M1563.8 797.24 v8 M201.7 784.91 h8 M205.7 780.91 v8 M399.7 784.91 h8 M403.7 780.91 v8 M524.8 784.91 h8 M528.8 780.91 v8 M638.9 784.91 h8 M642.9 780.91 v8 M814.9 784.91 h8 M818.9 780.91 v8 M958.8 784.91 h8 M962.8 780.91 v8 M1039.8 784.91 h8 M1043.8 780.91 v8 M1187.9 784.91 h8 M1191.9 780.91 v8 M1250.7 784.91 h8 M1254.7 780.91 v8 M1324.8 784.91 h8 M1328.8 780.91 v8 M1402.5 784.91 h8 M1406.5 780.91 v8 M1545.3 784.91 h8 M1549.3 780.91 v8 M355.9 768.58 h8 M359.9 764.58 v8 M425.8 768.58 h8 M429.8 764.58 v8 M475.8 768.58 h8 M479.8 764.58 v8 M535.0 768.58 h8 M539.0 764.58 v8 M571.0 768.58 h8 M575.0 764.58 v8 M630.8 768.58 h8 M634.8 764.58 v8 M973.8 768.58 h8 M977.8 764.58 v8 M1069.8 768.58 h8 M1073.8 764.58 v8 M1108.7 768.58 h8 M1112.7 764.58 v8 M1177.7 768.58 h8 M1181.7 764.58 v8 M1255.7 768.58 h8 M1259.7 764.58 v8 M1466.9 768.58 h8 M1470.9 764.58 v8 M427.0 752.25 h8 M431.0 748.25 v8 M539.8 752.25 h8 M543.8 748.25 v8 M573.7 752.25 h8 M577.7 748.25 v8 M703.8 752.25 h8 M707.8 748.25 v8 M1093.7 752.25 h8 M1097.7 748.25 v8 M1270.7 752.25 h8 M1274.7 748.25 v8 M1476.8 752.25 h8 M1480.8 748.25 v8 M437.1 735.92 h8 M441.1 731.92 v8 M630.8 735.92 h8 M634.8 731.92 v8 M1038.9 735.92 h8 M1042.9 731.92 v8 M1167.8 735.92 h8 M1171.8 731.92 v8 M1274.8 735.92 h8 M1278.8 731.92 v8 M1496.9 735.92 h8 M1500.9 731.92 v8 M598.7 719.59 h8 M602.7 715.59 v8 M726.9 719.59 h8 M730.9 715.59 v8 M1187.9 719.59 h8 M1191.9 715.59 v8 M1270.7 719.59 h8 M1274.7 715.59 v8 M686.7 703.26 h8 M690.7 699.26 v8 M1101.9 703.26 h8 M1105.9 699.26 v8 M1206.7 703.26 h8 M1210.7 699.26 v8 M1299.7 703.26 h8 M1303.7 699.26 v8 M1118.8 686.93 h8 M1122.8 682.93 v8" stroke="#ffffff" stroke-width="2.2"/>
<text x="117.5" y="831.30" text-anchor="middle" class="bl">KSE</text><text x="255.0" y="831.30" text-anchor="middle" class="bl">ETA</text><text x="495.4" y="831.30" text-anchor="middle" class="bl">NZC</text><text x="710.5" y="831.30" text-anchor="middle" class="bl">NDA</text><text x="853.0" y="831.30" text-anchor="middle" class="bl">SPE</text><text x="946.5" y="831.30" text-anchor="middle" class="bl">ARD</text><text x="1025.0" y="831.30" text-anchor="middle" class="bl">EGE</text><text x="1142.5" y="831.30" text-anchor="middle" class="bl">NTA</text><text x="1284.9" y="831.30" text-anchor="middle" class="bl">MON</text><text x="1345.9" y="831.30" text-anchor="middle" class="bl">URS</text><text x="1412.3" y="831.30" text-anchor="middle" class="bl">AHY</text><text x="1485.4" y="831.30" text-anchor="middle" class="bl">GUM</text><text x="1535.0" y="831.30" text-anchor="middle" class="bl">OHY</text><text x="1736.0" y="831.30" text-anchor="middle" class="bl">XHE</text><text x="1770.0" y="831.30" text-anchor="middle" class="bl">EVI</text><text x="176.4" y="814.97" text-anchor="middle" class="bl">AVB</text><text x="254.4" y="814.97" text-anchor="middle" class="bl">ELY</text><text x="326.1" y="814.97" text-anchor="middle" class="bl">CAM</text><text x="429.0" y="814.97" text-anchor="middle" class="bl">SSG</text><text x="581.0" y="814.97" text-anchor="middle" class="bl">PCA</text><text x="720.5" y="814.97" text-anchor="middle" class="bl">AUD</text><text x="809.0" y="814.97" text-anchor="middle" class="bl">AUR</text><text x="929.5" y="814.97" text-anchor="middle" class="bl">DSX</text><text x="1009.9" y="814.97" text-anchor="middle" class="bl">OCU</text><text x="1137.5" y="814.97" text-anchor="middle" class="bl">OER</text><text x="1255.5" y="814.97" text-anchor="middle" class="bl">DKD</text><text x="1304.5" y="814.97" text-anchor="middle" class="bl">DSV</text><text x="1353.5" y="814.97" text-anchor="middle" class="bl">ALY</text><text x="1407.5" y="814.97" text-anchor="middle" class="bl">ILE</text><text x="1471.0" y="814.97" text-anchor="middle" class="bl">SCC</text><text x="1559.5" y="814.97" text-anchor="middle" class="bl">FEV</text><text x="176.4" y="798.64" text-anchor="middle" class="bl">LYR</text><text x="372.6" y="798.64" text-anchor="middle" class="bl">JMC</text><text x="561.5" y="798.64" text-anchor="middle" class="bl">JPE</text><text x="672.0" y="798.64" text-anchor="middle" class="bl">PAU</text><text x="777.5" y="798.64" text-anchor="middle" class="bl">NIA</text><text x="1049.0" y="798.64" text-anchor="middle" class="bl">STA</text><text x="1204.0" y="798.64" text-anchor="middle" class="bl">NOO</text><text x="1350.8" y="798.64" text-anchor="middle" class="bl">COM</text><text x="1471.0" y="798.64" text-anchor="middle" class="bl">NCC</text><text x="1563.9" y="798.64" text-anchor="middle" class="bl">FED</text><text x="206.1" y="782.31" text-anchor="middle" class="bl">HVI</text><text x="414.1" y="782.31" text-anchor="middle" class="bl">ARI</text><text x="529.5" y="782.31" text-anchor="middle" class="bl">SZC</text><text x="620.0" y="782.31" text-anchor="middle" class="bl">CAP</text><text x="819.0" y="782.31" text-anchor="middle" class="bl">NUE</text><text x="963.5" y="782.31" text-anchor="middle" class="bl">OCT</text><text x="1056.5" y="782.31" text-anchor="middle" class="bl">ORI</text><text x="1186.4" y="782.31" text-anchor="middle" class="bl">AMO</text><text x="1255.5" y="782.31" text-anchor="middle" class="bl">DPC</text><text x="1329.0" y="782.31" text-anchor="middle" class="bl">XVI</text><text x="1407.4" y="782.31" text-anchor="middle" class="bl">QUA</text><text x="1557.0" y="782.31" text-anchor="middle" class="bl">AAN</text><text x="355.5" y="765.98" text-anchor="middle" class="bl">TAH</text><text x="429.1" y="765.98" text-anchor="middle" class="bl">JEA</text><text x="480.5" y="765.98" text-anchor="middle" class="bl">JIP</text><text x="536.5" y="765.98" text-anchor="middle" class="bl">PPS</text><text x="576.0" y="765.98" text-anchor="middle" class="bl">ZCS</text><text x="632.6" y="765.98" text-anchor="middle" class="bl">GDR</text><text x="973.5" y="765.98" text-anchor="middle" class="bl">DRA</text><text x="1074.0" y="765.98" text-anchor="middle" class="bl">LUM</text><text x="1113.0" y="765.98" text-anchor="middle" class="bl">RPU</text><text x="1177.0" y="765.98" text-anchor="middle" class="bl">THA</text><text x="1260.0" y="765.98" text-anchor="middle" class="bl">PSU</text><text x="1468.5" y="765.98" text-anchor="middle" class="bl">XCB</text><text x="431.5" y="749.65" text-anchor="middle" class="bl">JRC</text><text x="544.0" y="749.65" text-anchor="middle" class="bl">CAN</text><text x="578.5" y="749.65" text-anchor="middle" class="bl">FAN</text><text x="681.6" y="749.65" text-anchor="middle" class="bl">PER</text><text x="1051.9" y="749.65" text-anchor="middle" class="bl">CTA</text><text x="1265.5" y="749.65" text-anchor="middle" class="bl">HYD</text><text x="1481.0" y="749.65" text-anchor="middle" class="bl">XUM</text><text x="441.1" y="733.32" text-anchor="middle" class="bl">COR</text><text x="654.5" y="733.32" text-anchor="middle" class="bl">SDA</text><text x="1049.0" y="733.32" text-anchor="middle" class="bl">LMI</text><text x="1169.5" y="733.32" text-anchor="middle" class="bl">LEO</text><text x="1277.5" y="733.32" text-anchor="middle" class="bl">EHY</text><text x="1500.5" y="733.32" text-anchor="middle" class="bl">ECV</text><text x="603.0" y="716.99" text-anchor="middle" class="bl">JXA</text><text x="713.5" y="716.99" text-anchor="middle" class="bl">KCG</text><text x="1157.5" y="716.99" text-anchor="middle" class="bl">AND</text><text x="1275.0" y="716.99" text-anchor="middle" class="bl">DAD</text><text x="664.4" y="700.66" text-anchor="middle" class="bl">ERI</text><text x="1105.4" y="700.66" text-anchor="middle" class="bl">SLD</text><text x="1211.0" y="700.66" text-anchor="middle" class="bl">ORS</text><text x="1299.4" y="700.66" text-anchor="middle" class="bl">GEM</text><text x="1123.0" y="684.33" text-anchor="middle" class="bl">KUM</text>
<line x1="1328.4" y1="842.5" x2="1328.4" y2="641.5" stroke="#ff0000" stroke-width="1.3" stroke-dasharray="4.7 2.63" stroke-dashoffset="-0.9"/>
<line x1="1330.5" y1="842.5" x2="1330.5" y2="641.5" stroke="#ff0000" stroke-width="1.3" stroke-dasharray="4.7 2.63" stroke-dashoffset="-0.9"/>
<rect x="19.5" y="641.5" width="1766.0" height="201.0" fill="none" stroke="#ffffff" stroke-width="1.1"/>
<text x="19.50" y="862.2" text-anchor="middle" class="tk">0</text>
<text x="264.75" y="862.2" text-anchor="middle" class="tk">50</text>
<text x="510.01" y="862.2" text-anchor="middle" class="tk">100</text>
<text x="755.26" y="862.2" text-anchor="middle" class="tk">150</text>
<text x="1000.52" y="862.2" text-anchor="middle" class="tk">200</text>
<text x="1245.78" y="862.2" text-anchor="middle" class="tk">250</text>
<text x="1491.03" y="862.2" text-anchor="middle" class="tk">300</text>
<text x="1736.29" y="862.2" text-anchor="middle" class="tk">350</text>
<path d="M19.50 842.5 v5.3 M264.75 842.5 v5.3 M510.01 842.5 v5.3 M755.26 842.5 v5.3 M1000.52 842.5 v5.3 M1245.78 842.5 v5.3 M1491.03 842.5 v5.3 M1736.29 842.5 v5.3" stroke="#ffffff" stroke-width="1.1"/>
<text x="902.35" y="882" text-anchor="middle" class="tk" textLength="145.9" lengthAdjust="spacingAndGlyphs">Solar longitude (deg)</text>
</svg></body></html>
